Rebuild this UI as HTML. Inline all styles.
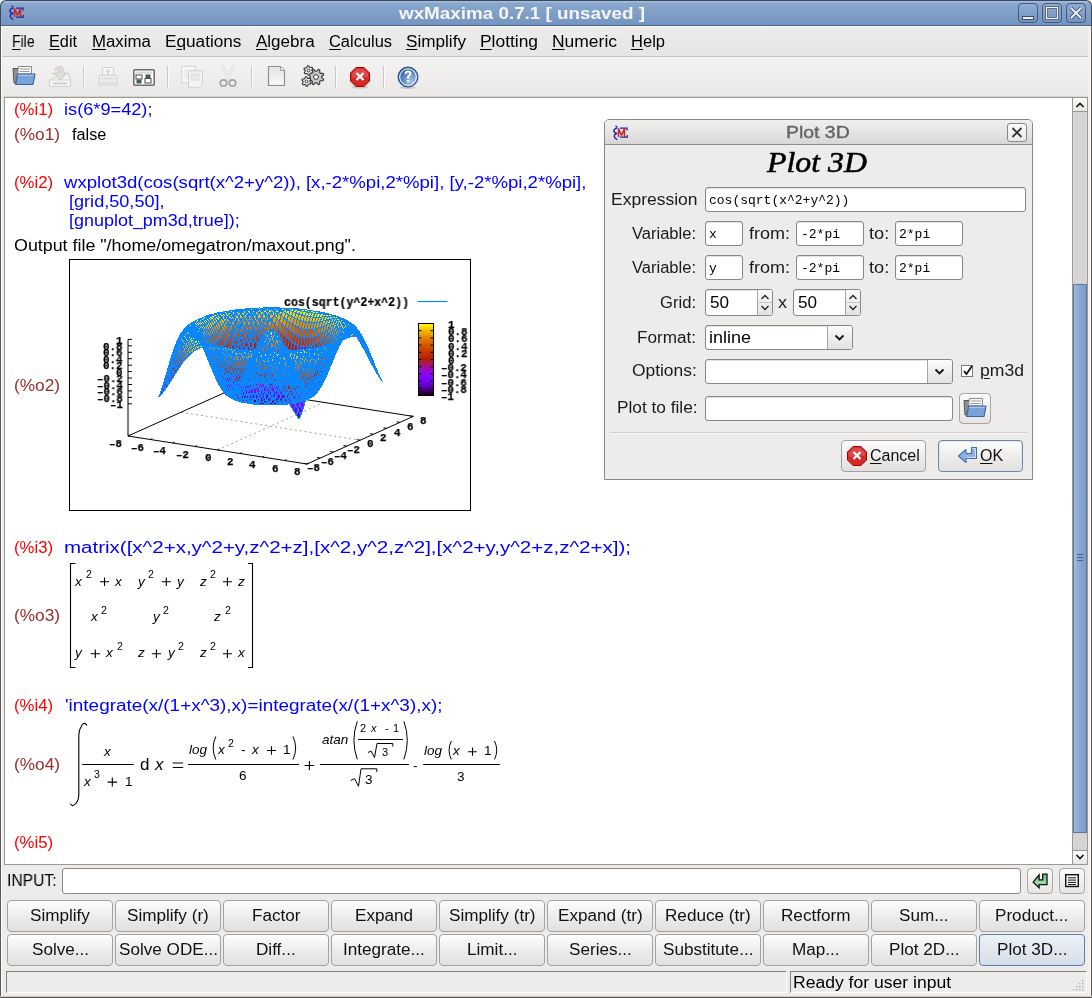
<!DOCTYPE html><html><head><meta charset="utf-8"><style>html,body{margin:0;padding:0;overflow:hidden;width:1092px;height:998px;position:relative;font-family:"Liberation Sans",sans-serif}.t{position:absolute;white-space:pre;line-height:1;transform-origin:0 0;will-change:transform;font-family:'Liberation Sans',sans-serif}
u{text-decoration:underline;text-underline-offset:2px}</style></head><body><div style="position:absolute;left:0px;top:0px;width:1092px;height:998px;background:#edeceb;"></div>
<div style="position:absolute;left:0px;top:0px;width:1092px;height:26px;box-sizing:border-box;border:1px solid #3a4a5c;border-bottom:none;background:linear-gradient(#a3bbdd 0,#a3bbdd 1px,#8aa8cd 2px,#7394c0 100%);border-radius:6px 6px 0 0;"></div>
<div style="position:absolute;left:0px;top:25px;width:1092px;height:1px;background:#4d6590;"></div>
<div class="t" style="left:398.5px;top:6.0px;font-size:16px;color:#f4f6fa;font-weight:bold;transform:scaleX(1.177);">wxMaxima 0.7.1 [ unsaved ]</div>
<div style="position:absolute;left:1018px;top:3px;width:20px;height:20px;box-sizing:border-box;border:1px solid #465b7c;border-radius:4px;background:linear-gradient(#90acd3,#7694c3);"></div>
<div style="position:absolute;left:1042px;top:3px;width:20px;height:20px;box-sizing:border-box;border:1px solid #465b7c;border-radius:4px;background:linear-gradient(#90acd3,#7694c3);"></div>
<div style="position:absolute;left:1066px;top:3px;width:20px;height:20px;box-sizing:border-box;border:1px solid #465b7c;border-radius:4px;background:linear-gradient(#90acd3,#7694c3);"></div>
<svg style="position:absolute;left:1018px;top:3px" width="20" height="20"><rect x="4.5" y="13.5" width="11" height="3" fill="#eef2f8" stroke="#3d4f6b" stroke-width="1"/></svg>
<svg style="position:absolute;left:1042px;top:3px" width="20" height="20"><rect x="4.5" y="4.5" width="11" height="11" fill="none" stroke="#3d4f6b" stroke-width="3"/><rect x="4.5" y="4.5" width="11" height="11" fill="none" stroke="#eef2f8" stroke-width="1.4"/></svg>
<svg style="position:absolute;left:1066px;top:3px" width="20" height="20"><path d="M5 5L15 15M15 5L5 15" stroke="#3d4f6b" stroke-width="3.6"/><path d="M5 5L15 15M15 5L5 15" stroke="#eef2f8" stroke-width="1.8"/></svg>
<div style="position:absolute;left:0px;top:25px;width:1px;height:973px;background:#5a5652;"></div>
<div style="position:absolute;left:1091px;top:25px;width:1px;height:973px;background:#5a5652;"></div>
<div style="position:absolute;left:0px;top:996px;width:1092px;height:1px;background:#cfccc8;"></div>
<div style="position:absolute;left:0px;top:997px;width:1092px;height:1px;background:#5a5652;"></div>
<div style="position:absolute;left:1px;top:26px;width:1px;height:970px;background:#ffffff;"></div>
<div style="position:absolute;left:1088px;top:26px;width:3px;height:970px;background:#f3f2f1;"></div>
<div style="position:absolute;left:2px;top:26px;width:1086px;height:30px;background:linear-gradient(#f6f5f3 0,#f6f5f3 1px,#edeceb 2px,#e6e5e3 100%);"></div>
<div style="position:absolute;left:2px;top:56px;width:1086px;height:1px;background:#c8c5c0;"></div>
<div class="t" style="left:11.8px;top:34.0px;font-size:16px;color:#000;transform:scaleX(0.873);"><u>F</u>ile</div>
<div class="t" style="left:48.9px;top:34.0px;font-size:16px;color:#000;transform:scaleX(1.019);"><u>E</u>dit</div>
<div class="t" style="left:92.2px;top:34.0px;font-size:16px;color:#000;transform:scaleX(1.050);"><u>M</u>axima</div>
<div class="t" style="left:165.0px;top:34.0px;font-size:16px;color:#000;transform:scaleX(1.074);">E<u>q</u>uations</div>
<div class="t" style="left:256.0px;top:34.0px;font-size:16px;color:#000;transform:scaleX(1.063);"><u>A</u>lgebra</div>
<div class="t" style="left:329.0px;top:34.0px;font-size:16px;color:#000;transform:scaleX(1.027);"><u>C</u>alculus</div>
<div class="t" style="left:406.0px;top:34.0px;font-size:16px;color:#000;transform:scaleX(1.071);"><u>S</u>implify</div>
<div class="t" style="left:480.0px;top:34.0px;font-size:16px;color:#000;transform:scaleX(1.087);"><u>P</u>lotting</div>
<div class="t" style="left:552.0px;top:34.0px;font-size:16px;color:#000;transform:scaleX(1.091);"><u>N</u>umeric</div>
<div class="t" style="left:631.0px;top:34.0px;font-size:16px;color:#000;transform:scaleX(1.033);"><u>H</u>elp</div>
<div style="position:absolute;left:2px;top:57px;width:1086px;height:39px;background:linear-gradient(#f4f3f2,#eae9e7);"></div>
<div style="position:absolute;left:2px;top:96px;width:1086px;height:1px;background:#d8d5d0;"></div>
<div style="position:absolute;left:4px;top:97px;width:1069px;height:768px;box-sizing:border-box;border:1px solid #9d9893;background:#fff;"></div>
<div style="position:absolute;left:1072px;top:97px;width:16px;height:768px;box-sizing:border-box;border:1px solid #9d9893;background:#d6d4d2;"></div>
<div style="position:absolute;left:1073px;top:98px;width:14px;height:14px;box-sizing:border-box;background:linear-gradient(#fbfbfa,#e8e7e5);border-bottom:1px solid #9d9893;border-radius:3px 3px 0 0;"></div>
<svg style="position:absolute;left:1073px;top:98px" width="14" height="14"><path d="M3.5 9L7 5.5L10.5 9" fill="none" stroke="#111" stroke-width="1.6"/></svg>
<div style="position:absolute;left:1073px;top:850px;width:14px;height:14px;box-sizing:border-box;background:linear-gradient(#fbfbfa,#e8e7e5);border-top:1px solid #9d9893;border-radius:0 0 3px 3px;"></div>
<svg style="position:absolute;left:1073px;top:850px" width="14" height="14"><path d="M3.5 5L7 8.5L10.5 5" fill="none" stroke="#111" stroke-width="1.6"/></svg>
<div style="position:absolute;left:1073px;top:284px;width:14px;height:549px;box-sizing:border-box;border:1px solid #5c7a9f;background:linear-gradient(90deg,#a2bde0,#8aa8d2 40%,#7b9cc6);"></div>
<div style="position:absolute;left:1077px;top:554px;width:6px;height:1px;background:#4a5f7e;"></div>
<div style="position:absolute;left:1077px;top:557px;width:6px;height:1px;background:#4a5f7e;"></div>
<div style="position:absolute;left:1077px;top:560px;width:6px;height:1px;background:#4a5f7e;"></div>
<div class="t" style="left:7.0px;top:873.0px;font-size:16px;color:#000;transform:scaleX(0.977);">INPUT:</div>
<div style="position:absolute;left:62px;top:868px;width:959px;height:26px;box-sizing:border-box;border:1px solid #8d8984;border-radius:3px;background:#fff;"></div>
<div style="position:absolute;left:1027px;top:868px;width:26px;height:26px;box-sizing:border-box;border:1px solid #a8a49f;border-radius:4px;background:linear-gradient(#fbfbfa,#e6e5e3);"></div>
<div style="position:absolute;left:1059px;top:868px;width:26px;height:26px;box-sizing:border-box;border:1px solid #a8a49f;border-radius:4px;background:linear-gradient(#fbfbfa,#e6e5e3);"></div>
<svg style="position:absolute;left:1027px;top:868px" width="26" height="26"><defs><linearGradient id="eg" x1="0" y1="0" x2="0" y2="1"><stop offset="0" stop-color="#6fc487"/><stop offset="1" stop-color="#b5e6c0"/></linearGradient></defs><path d="M6.2 14.1L12.1 6.9V11.8H15.7V6.2H20V16.7H12.1V19.7Z" fill="url(#eg)" stroke="#111" stroke-width="1.3" stroke-linejoin="miter"/></svg>
<svg style="position:absolute;left:1059px;top:868px" width="26" height="26"><rect x="6.7" y="6.7" width="12.6" height="11.8" fill="#fff" stroke="#111" stroke-width="1.4"/><path d="M9 9.8H17M9 12.1H17M9 14.4H17M9 16.6H17" stroke="#111" stroke-width="1"/></svg>
<div style="position:absolute;left:7px;top:900px;width:106px;height:32px;box-sizing:border-box;border:1px solid #a5a19c;border-radius:4px;background:linear-gradient(#fdfdfd,#ebeae9 60%,#e1e0de);"></div>
<div class="t" style="left:30.0px;top:908.0px;font-size:16px;color:#111;transform:scaleX(1.070);">Simplify</div>
<div style="position:absolute;left:115px;top:900px;width:106px;height:32px;box-sizing:border-box;border:1px solid #a5a19c;border-radius:4px;background:linear-gradient(#fdfdfd,#ebeae9 60%,#e1e0de);"></div>
<div class="t" style="left:127.1px;top:908.0px;font-size:16px;color:#111;transform:scaleX(1.070);">Simplify (r)</div>
<div style="position:absolute;left:223px;top:900px;width:106px;height:32px;box-sizing:border-box;border:1px solid #a5a19c;border-radius:4px;background:linear-gradient(#fdfdfd,#ebeae9 60%,#e1e0de);"></div>
<div class="t" style="left:251.7px;top:908.0px;font-size:16px;color:#111;transform:scaleX(1.070);">Factor</div>
<div style="position:absolute;left:331px;top:900px;width:106px;height:32px;box-sizing:border-box;border:1px solid #a5a19c;border-radius:4px;background:linear-gradient(#fdfdfd,#ebeae9 60%,#e1e0de);"></div>
<div class="t" style="left:355.0px;top:908.0px;font-size:16px;color:#111;transform:scaleX(1.070);">Expand</div>
<div style="position:absolute;left:439px;top:900px;width:106px;height:32px;box-sizing:border-box;border:1px solid #a5a19c;border-radius:4px;background:linear-gradient(#fdfdfd,#ebeae9 60%,#e1e0de);"></div>
<div class="t" style="left:448.7px;top:908.0px;font-size:16px;color:#111;transform:scaleX(1.070);">Simplify (tr)</div>
<div style="position:absolute;left:547px;top:900px;width:106px;height:32px;box-sizing:border-box;border:1px solid #a5a19c;border-radius:4px;background:linear-gradient(#fdfdfd,#ebeae9 60%,#e1e0de);"></div>
<div class="t" style="left:557.7px;top:908.0px;font-size:16px;color:#111;transform:scaleX(1.070);">Expand (tr)</div>
<div style="position:absolute;left:655px;top:900px;width:106px;height:32px;box-sizing:border-box;border:1px solid #a5a19c;border-radius:4px;background:linear-gradient(#fdfdfd,#ebeae9 60%,#e1e0de);"></div>
<div class="t" style="left:665.2px;top:908.0px;font-size:16px;color:#111;transform:scaleX(1.070);">Reduce (tr)</div>
<div style="position:absolute;left:763px;top:900px;width:106px;height:32px;box-sizing:border-box;border:1px solid #a5a19c;border-radius:4px;background:linear-gradient(#fdfdfd,#ebeae9 60%,#e1e0de);"></div>
<div class="t" style="left:781.3px;top:908.0px;font-size:16px;color:#111;transform:scaleX(1.070);">Rectform</div>
<div style="position:absolute;left:871px;top:900px;width:106px;height:32px;box-sizing:border-box;border:1px solid #a5a19c;border-radius:4px;background:linear-gradient(#fdfdfd,#ebeae9 60%,#e1e0de);"></div>
<div class="t" style="left:899.3px;top:908.0px;font-size:16px;color:#111;transform:scaleX(1.070);">Sum...</div>
<div style="position:absolute;left:979px;top:900px;width:106px;height:32px;box-sizing:border-box;border:1px solid #a5a19c;border-radius:4px;background:linear-gradient(#fdfdfd,#ebeae9 60%,#e1e0de);"></div>
<div class="t" style="left:995.4px;top:908.0px;font-size:16px;color:#111;transform:scaleX(1.070);">Product...</div>
<div style="position:absolute;left:7px;top:934px;width:106px;height:32px;box-sizing:border-box;border:1px solid #a5a19c;border-radius:4px;background:linear-gradient(#fdfdfd,#ebeae9 60%,#e1e0de);"></div>
<div class="t" style="left:31.5px;top:942.0px;font-size:16px;color:#111;transform:scaleX(1.070);">Solve...</div>
<div style="position:absolute;left:115px;top:934px;width:106px;height:32px;box-sizing:border-box;border:1px solid #a5a19c;border-radius:4px;background:linear-gradient(#fdfdfd,#ebeae9 60%,#e1e0de);"></div>
<div class="t" style="left:118.5px;top:942.0px;font-size:16px;color:#111;transform:scaleX(1.070);">Solve ODE...</div>
<div style="position:absolute;left:223px;top:934px;width:106px;height:32px;box-sizing:border-box;border:1px solid #a5a19c;border-radius:4px;background:linear-gradient(#fdfdfd,#ebeae9 60%,#e1e0de);"></div>
<div class="t" style="left:256.2px;top:942.0px;font-size:16px;color:#111;transform:scaleX(1.070);">Diff...</div>
<div style="position:absolute;left:331px;top:934px;width:106px;height:32px;box-sizing:border-box;border:1px solid #a5a19c;border-radius:4px;background:linear-gradient(#fdfdfd,#ebeae9 60%,#e1e0de);"></div>
<div class="t" style="left:343.1px;top:942.0px;font-size:16px;color:#111;transform:scaleX(1.070);">Integrate...</div>
<div style="position:absolute;left:439px;top:934px;width:106px;height:32px;box-sizing:border-box;border:1px solid #a5a19c;border-radius:4px;background:linear-gradient(#fdfdfd,#ebeae9 60%,#e1e0de);"></div>
<div class="t" style="left:466.8px;top:942.0px;font-size:16px;color:#111;transform:scaleX(1.070);">Limit...</div>
<div style="position:absolute;left:547px;top:934px;width:106px;height:32px;box-sizing:border-box;border:1px solid #a5a19c;border-radius:4px;background:linear-gradient(#fdfdfd,#ebeae9 60%,#e1e0de);"></div>
<div class="t" style="left:568.6px;top:942.0px;font-size:16px;color:#111;transform:scaleX(1.070);">Series...</div>
<div style="position:absolute;left:655px;top:934px;width:106px;height:32px;box-sizing:border-box;border:1px solid #a5a19c;border-radius:4px;background:linear-gradient(#fdfdfd,#ebeae9 60%,#e1e0de);"></div>
<div class="t" style="left:662.8px;top:942.0px;font-size:16px;color:#111;transform:scaleX(1.070);">Substitute...</div>
<div style="position:absolute;left:763px;top:934px;width:106px;height:32px;box-sizing:border-box;border:1px solid #a5a19c;border-radius:4px;background:linear-gradient(#fdfdfd,#ebeae9 60%,#e1e0de);"></div>
<div class="t" style="left:792.2px;top:942.0px;font-size:16px;color:#111;transform:scaleX(1.070);">Map...</div>
<div style="position:absolute;left:871px;top:934px;width:106px;height:32px;box-sizing:border-box;border:1px solid #a5a19c;border-radius:4px;background:linear-gradient(#fdfdfd,#ebeae9 60%,#e1e0de);"></div>
<div class="t" style="left:888.8px;top:942.0px;font-size:16px;color:#111;transform:scaleX(1.070);">Plot 2D...</div>
<div style="position:absolute;left:979px;top:934px;width:106px;height:32px;box-sizing:border-box;border:1px solid #5f7fae;border-radius:4px;background:linear-gradient(#eef2f7,#d5dde8);"></div>
<div class="t" style="left:996.8px;top:942.0px;font-size:16px;color:#111;transform:scaleX(1.070);">Plot 3D...</div>
<div style="position:absolute;left:6px;top:971px;width:781px;height:22px;box-sizing:border-box;border-left:1px solid #85817c;border-top:1px solid #85817c;border-bottom:1px solid #fff;border-right:1px solid #fff;"></div>
<div style="position:absolute;left:790px;top:971px;width:297px;height:22px;box-sizing:border-box;border-left:1px solid #85817c;border-top:1px solid #85817c;border-bottom:1px solid #fff;border-right:1px solid #fff;"></div>
<div class="t" style="left:793.0px;top:975.0px;font-size:16px;color:#000;transform:scaleX(1.097);">Ready for user input</div>
<svg style="position:absolute;left:1072px;top:978px" width="14" height="14"><g fill="#b8b4ae"><rect x="10" y="2" width="1.5" height="1.5"/><rect x="7" y="5" width="1.5" height="1.5"/><rect x="10" y="5" width="1.5" height="1.5"/><rect x="4" y="8" width="1.5" height="1.5"/><rect x="7" y="8" width="1.5" height="1.5"/><rect x="10" y="8" width="1.5" height="1.5"/><rect x="1" y="11" width="1.5" height="1.5"/><rect x="4" y="11" width="1.5" height="1.5"/><rect x="7" y="11" width="1.5" height="1.5"/><rect x="10" y="11" width="1.5" height="1.5"/></g></svg>
<div class="t" style="left:64.0px;top:102.0px;font-size:16px;color:#0000ff;transform:scaleX(1.137);">is(6*9=42);</div>
<div class="t" style="left:13.5px;top:102.0px;font-size:16px;color:#ff0000;transform:scaleX(1.045);">(%i1)</div>
<div class="t" style="left:13.5px;top:127.0px;font-size:16px;color:#9c2b2b;transform:scaleX(1.078);">(%o1)</div>
<div class="t" style="left:72.0px;top:127.0px;font-size:16px;color:#000;transform:scaleX(1.015);">false</div>
<div class="t" style="left:13.5px;top:175.0px;font-size:16px;color:#ff0000;transform:scaleX(1.045);">(%i2)</div>
<div class="t" style="left:64.0px;top:175.0px;font-size:16px;color:#0000ff;transform:scaleX(1.161);">wxplot3d(cos(sqrt(x^2+y^2)), [x,-2*%pi,2*%pi], [y,-2*%pi,2*%pi],</div>
<div class="t" style="left:69.2px;top:194.0px;font-size:16px;color:#0000ff;transform:scaleX(1.131);">[grid,50,50],</div>
<div class="t" style="left:69.2px;top:213.0px;font-size:16px;color:#0000ff;transform:scaleX(1.122);">[gnuplot_pm3d,true]);</div>
<div class="t" style="left:13.7px;top:238.0px;font-size:16px;color:#000;transform:scaleX(1.115);">Output file &quot;/home/omegatron/maxout.png&quot;.</div>
<div class="t" style="left:13.5px;top:378.0px;font-size:16px;color:#9c2b2b;transform:scaleX(1.078);">(%o2)</div>
<div class="t" style="left:13.5px;top:540.0px;font-size:16px;color:#ff0000;transform:scaleX(1.045);">(%i3)</div>
<div class="t" style="left:64.4px;top:540.0px;font-size:16px;color:#0000ff;transform:scaleX(1.282);">matrix([x^2+x,y^2+y,z^2+z],[x^2,y^2,z^2],[x^2+y,y^2+z,z^2+x]);</div>
<div class="t" style="left:13.5px;top:608.0px;font-size:16px;color:#9c2b2b;transform:scaleX(1.078);">(%o3)</div>
<div class="t" style="left:13.5px;top:698.0px;font-size:16px;color:#ff0000;transform:scaleX(1.045);">(%i4)</div>
<div class="t" style="left:64.8px;top:698.0px;font-size:16px;color:#0000ff;transform:scaleX(1.183);">&#x27;integrate(x/(1+x^3),x)=integrate(x/(1+x^3),x);</div>
<div class="t" style="left:13.5px;top:757.0px;font-size:16px;color:#9c2b2b;transform:scaleX(1.078);">(%o4)</div>
<div class="t" style="left:13.5px;top:835.0px;font-size:16px;color:#ff0000;transform:scaleX(1.045);">(%i5)</div>
<div style="position:absolute;left:69px;top:259px;width:402px;height:252px;box-sizing:border-box;border:1px solid #000;background:#fff;"></div>
<svg style="position:absolute;left:0;top:0" width="1092" height="998" viewBox="0 0 1092 998"><path d="M181.1 412.2L360.2 440.2" stroke="#a0a0a0" stroke-width="1" stroke-dasharray="2 3" fill="none"/><path d="M217.5 450.0L323.8 402.4" stroke="#a0a0a0" stroke-width="1" stroke-dasharray="2 3" fill="none"/><path d="M234.2 388.4L413.3 416.4" stroke="#000" stroke-width="1" fill="none"/><path d="M128.0 436.0L234.2 388.4" stroke="#000" stroke-width="1" fill="none"/><path d="M128.0 436.0L128.0 339.4" stroke="#000" stroke-width="1" fill="none"/><path d="M128.0 403.8L132.0 403.8" stroke="#000" stroke-width="1" fill="none"/><path d="M128.0 397.4L132.0 397.4" stroke="#000" stroke-width="1" fill="none"/><path d="M128.0 390.9L132.0 390.9" stroke="#000" stroke-width="1" fill="none"/><path d="M128.0 384.5L132.0 384.5" stroke="#000" stroke-width="1" fill="none"/><path d="M128.0 378.0L132.0 378.0" stroke="#000" stroke-width="1" fill="none"/><path d="M128.0 371.6L132.0 371.6" stroke="#000" stroke-width="1" fill="none"/><path d="M128.0 365.2L132.0 365.2" stroke="#000" stroke-width="1" fill="none"/><path d="M128.0 358.7L132.0 358.7" stroke="#000" stroke-width="1" fill="none"/><path d="M128.0 352.3L132.0 352.3" stroke="#000" stroke-width="1" fill="none"/><path d="M128.0 345.8L132.0 345.8" stroke="#000" stroke-width="1" fill="none"/><path d="M128.0 339.4L132.0 339.4" stroke="#000" stroke-width="1" fill="none"/><g><path d="M240.3 357.1L243.2 353.3L244.9 356.8L242.1 359.7Z" fill="#5b01b7"/><path d="M243.2 353.3L246.1 348.9L247.8 353.2L244.9 356.8Z" fill="#7002ee"/><path d="M238.6 353.8L241.5 349.2L243.2 353.3L240.3 357.1Z" fill="#7002ee"/><path d="M246.1 348.9L249.0 344.2L250.7 349.1L247.8 353.2Z" fill="#8305fe"/><path d="M241.5 349.2L244.4 344.2L246.1 348.9L243.2 353.3Z" fill="#8405fe"/><path d="M236.9 350.0L239.8 344.8L241.5 349.2L238.6 353.8Z" fill="#8305fe"/><path d="M249.0 344.2L251.8 339.3L253.5 344.6L250.7 349.1Z" fill="#950ad6"/><path d="M244.4 344.2L247.3 339.1L249.0 344.2L246.1 348.9Z" fill="#970bcf"/><path d="M239.8 344.8L242.7 339.4L244.4 344.2L241.5 349.2Z" fill="#970bcf"/><path d="M235.2 345.9L238.1 340.2L239.8 344.8L236.9 350.0Z" fill="#950ad6"/><path d="M251.8 339.3L254.7 334.4L256.4 340.0L253.5 344.6Z" fill="#a61379"/><path d="M247.3 339.1L250.1 333.9L251.8 339.3L249.0 344.2Z" fill="#a81567"/><path d="M242.7 339.4L245.6 333.9L247.3 339.1L244.4 344.2Z" fill="#a91561"/><path d="M238.1 340.2L241.0 334.5L242.7 339.4L239.8 344.8Z" fill="#a81567"/><path d="M233.5 341.6L236.4 335.6L238.1 340.2L235.2 345.9Z" fill="#a61379"/><path d="M254.7 334.4L257.6 329.7L259.3 335.4L256.4 340.0Z" fill="#b52000"/><path d="M250.1 333.9L253.0 328.9L254.7 334.4L251.8 339.3Z" fill="#b82300"/><path d="M245.6 333.9L248.4 328.7L250.1 333.9L247.3 339.1Z" fill="#b92500"/><path d="M241.0 334.5L243.8 329.0L245.6 333.9L242.7 339.4Z" fill="#b92500"/><path d="M257.6 329.7L260.4 325.3L262.1 331.0L259.3 335.4Z" fill="#c23100"/><path d="M236.4 335.6L239.3 329.9L241.0 334.5L238.1 340.2Z" fill="#b82300"/><path d="M231.8 337.3L234.7 331.3L236.4 335.6L233.5 341.6Z" fill="#b52000"/><path d="M253.0 328.9L255.9 324.3L257.6 329.7L254.7 334.4Z" fill="#c53700"/><path d="M248.4 328.7L251.3 323.8L253.0 328.9L250.1 333.9Z" fill="#c73a00"/><path d="M260.4 325.3L263.3 321.3L265.0 326.8L262.1 331.0Z" fill="#ce4600"/><path d="M243.8 329.0L246.7 323.9L248.4 328.7L245.6 333.9Z" fill="#c83c00"/><path d="M239.3 329.9L242.1 324.4L243.8 329.0L241.0 334.5Z" fill="#c73a00"/><path d="M234.7 331.3L237.6 325.5L239.3 329.9L236.4 335.6Z" fill="#c53700"/><path d="M255.9 324.3L258.7 320.1L260.4 325.3L257.6 329.7Z" fill="#d24f00"/><path d="M230.1 333.2L233.0 327.2L234.7 331.3L231.8 337.3Z" fill="#c23100"/><path d="M251.3 323.8L254.2 319.4L255.9 324.3L253.0 328.9Z" fill="#d45500"/><path d="M263.3 321.3L266.2 317.8L267.9 323.1L265.0 326.8Z" fill="#d85e00"/><path d="M246.7 323.9L249.6 319.3L251.3 323.8L248.4 328.7Z" fill="#d55800"/><path d="M258.7 320.1L261.6 316.5L263.3 321.3L260.4 325.3Z" fill="#dc6a00"/><path d="M242.1 324.4L245.0 319.6L246.7 323.9L243.8 329.0Z" fill="#d55800"/><path d="M237.6 325.5L240.4 320.4L242.1 324.4L239.3 329.9Z" fill="#d45500"/><path d="M233.0 327.2L235.9 321.7L237.6 325.5L234.7 331.3Z" fill="#d24f00"/><path d="M228.4 329.4L231.3 323.5L233.0 327.2L230.1 333.2Z" fill="#ce4600"/><path d="M266.2 317.8L269.0 314.9L270.7 319.7L267.9 323.1Z" fill="#e17800"/><path d="M254.2 319.4L257.0 315.7L258.7 320.1L255.9 324.3Z" fill="#df7200"/><path d="M249.6 319.3L252.5 315.4L254.2 319.4L251.3 323.8Z" fill="#e17700"/><path d="M261.6 316.5L264.5 313.5L266.2 317.8L263.3 321.3Z" fill="#e58600"/><path d="M245.0 319.6L247.9 315.5L249.6 319.3L246.7 323.9Z" fill="#e17900"/><path d="M269.0 314.9L271.9 312.5L273.6 316.8L270.7 319.7Z" fill="#e89200"/><path d="M240.4 320.4L243.3 316.0L245.0 319.6L242.1 324.4Z" fill="#e17700"/><path d="M257.0 315.7L259.9 312.7L261.6 316.5L258.7 320.1Z" fill="#e89100"/><path d="M235.9 321.7L238.7 317.0L240.4 320.4L237.6 325.5Z" fill="#df7200"/><path d="M231.3 323.5L234.2 318.4L235.9 321.7L233.0 327.2Z" fill="#dc6a00"/><path d="M226.7 325.9L229.6 320.3L231.3 323.5L228.4 329.4Z" fill="#d85e00"/><path d="M252.5 315.4L255.3 312.3L257.0 315.7L254.2 319.4Z" fill="#ea9800"/><path d="M264.5 313.5L267.3 311.2L269.0 314.9L266.2 317.8Z" fill="#eca200"/><path d="M271.9 312.5L274.8 310.7L276.5 314.4L273.6 316.8Z" fill="#eeaa00"/><path d="M247.9 315.5L250.8 312.2L252.5 315.4L249.6 319.3Z" fill="#eb9c00"/><path d="M259.9 312.7L262.8 310.4L264.5 313.5L261.6 316.5Z" fill="#efae00"/><path d="M243.3 316.0L246.2 312.5L247.9 315.5L245.0 319.6Z" fill="#eb9c00"/><path d="M267.3 311.2L270.2 309.5L271.9 312.5L269.0 314.9Z" fill="#f2bc00"/><path d="M238.7 317.0L241.6 313.2L243.3 316.0L240.4 320.4Z" fill="#ea9800"/><path d="M255.3 312.3L258.2 310.0L259.9 312.7L257.0 315.7Z" fill="#f1b700"/><path d="M274.8 310.7L277.7 309.4L279.4 312.5L276.5 314.4Z" fill="#f3c000"/><path d="M234.2 318.4L237.0 314.3L238.7 317.0L235.9 321.7Z" fill="#e89100"/><path d="M225.0 322.8L227.9 317.7L229.6 320.3L226.7 325.9Z" fill="#e17800"/><path d="M229.6 320.3L232.5 315.7L234.2 318.4L231.3 323.5Z" fill="#e58600"/><path d="M250.8 312.2L253.6 309.9L255.3 312.3L252.5 315.4Z" fill="#f2bc00"/><path d="M262.8 310.4L265.6 308.8L267.3 311.2L264.5 313.5Z" fill="#f5c900"/><path d="M270.2 309.5L273.1 308.4L274.8 310.7L271.9 312.5Z" fill="#f7d200"/><path d="M246.2 312.5L249.1 310.1L250.8 312.2L247.9 315.5Z" fill="#f3be00"/><path d="M277.7 309.4L280.5 308.6L282.2 311.0L279.4 312.5Z" fill="#f7d200"/><path d="M258.2 310.0L261.1 308.5L262.8 310.4L259.9 312.7Z" fill="#f7d200"/><path d="M241.6 313.2L244.5 310.5L246.2 312.5L243.3 316.0Z" fill="#f2bc00"/><path d="M265.6 308.8L268.5 308.0L270.2 309.5L267.3 311.2Z" fill="#f9df00"/><path d="M237.0 314.3L239.9 311.2L241.6 313.2L238.7 317.0Z" fill="#f1b700"/><path d="M253.6 309.9L256.5 308.5L258.2 310.0L255.3 312.3Z" fill="#f8d800"/><path d="M273.1 308.4L276.0 307.9L277.7 309.4L274.8 310.7Z" fill="#fae300"/><path d="M232.5 315.7L235.3 312.3L237.0 314.3L234.2 318.4Z" fill="#efae00"/><path d="M270.4 375.5L273.3 378.0L275.0 373.2L272.1 370.1Z" fill="#52009b"/><path d="M267.5 372.3L270.4 375.5L272.1 370.1L269.2 366.4Z" fill="#6101ca"/><path d="M223.3 320.3L226.2 315.7L227.9 317.7L225.0 322.8Z" fill="#e89200"/><path d="M265.8 377.1L268.7 379.6L270.4 375.5L267.5 372.3Z" fill="#48007a"/><path d="M227.9 317.7L230.8 313.7L232.5 315.7L229.6 320.3Z" fill="#eca200"/><path d="M280.5 308.6L283.4 308.2L285.1 309.9L282.2 311.0Z" fill="#fae100"/><path d="M273.3 378.0L276.1 379.9L277.8 375.7L275.0 373.2Z" fill="#450071"/><path d="M263.0 373.7L265.8 377.1L267.5 372.3L264.7 368.4Z" fill="#5900b2"/><path d="M275.0 373.2L277.8 375.7L279.5 369.9L276.7 367.0Z" fill="#6001c7"/><path d="M268.7 379.6L271.6 381.3L273.3 378.0L270.4 375.5Z" fill="#38004c"/><path d="M272.1 370.1L275.0 373.2L276.7 367.0L273.8 363.5Z" fill="#6d02e8"/><path d="M264.7 368.4L267.5 372.3L269.2 366.4L266.4 362.1Z" fill="#7102f1"/><path d="M277.8 375.7L280.7 377.6L282.4 372.2L279.5 369.9Z" fill="#5500a5"/><path d="M261.3 377.9L264.1 380.5L265.8 377.1L263.0 373.7Z" fill="#420067"/><path d="M269.2 366.4L272.1 370.1L273.8 363.5L270.9 359.5Z" fill="#7a03fd"/><path d="M261.1 308.5L263.9 307.8L265.6 308.8L262.8 310.4Z" fill="#fbe700"/><path d="M249.1 310.1L251.9 308.6L253.6 309.9L250.8 312.2Z" fill="#f9db00"/><path d="M276.1 379.9L279.0 381.3L280.7 377.6L277.8 375.7Z" fill="#39004f"/><path d="M264.1 380.5L267.0 382.2L268.7 379.6L265.8 377.1Z" fill="#2f0036"/><path d="M260.1 369.5L263.0 373.7L264.7 368.4L261.8 363.7Z" fill="#6c01e6"/><path d="M258.4 374.4L261.3 377.9L263.0 373.7L260.1 369.5Z" fill="#5500a5"/><path d="M271.6 381.3L274.4 382.5L276.1 379.9L273.3 378.0Z" fill="#29002a"/><path d="M280.7 377.6L283.6 379.1L285.3 374.1L282.4 372.2Z" fill="#4c0088"/><path d="M276.7 367.0L279.5 369.9L281.3 362.8L278.4 359.7Z" fill="#7b03fe"/><path d="M279.5 369.9L282.4 372.2L284.1 365.4L281.3 362.8Z" fill="#7102f1"/><path d="M266.4 362.1L269.2 366.4L270.9 359.5L268.1 355.0Z" fill="#8906f8"/><path d="M273.8 363.5L276.7 367.0L278.4 359.7L275.5 356.0Z" fill="#8605fb"/><path d="M261.8 363.7L264.7 368.4L266.4 362.1L263.5 357.1Z" fill="#8205fe"/><path d="M268.5 308.0L271.4 307.7L273.1 308.4L270.2 309.5Z" fill="#fcee00"/><path d="M256.7 378.3L259.6 381.0L261.3 377.9L258.4 374.4Z" fill="#3f0061"/><path d="M267.0 382.2L269.9 383.1L271.6 381.3L268.7 379.6Z" fill="#1f0017"/><path d="M279.0 381.3L281.9 382.3L283.6 379.1L280.7 377.6Z" fill="#2f0036"/><path d="M259.6 381.0L262.4 382.7L264.1 380.5L261.3 377.9Z" fill="#2b002c"/><path d="M282.4 372.2L285.3 374.1L287.0 367.6L284.1 365.4Z" fill="#6901df"/><path d="M255.5 369.8L258.4 374.4L260.1 369.5L257.2 364.5Z" fill="#6a01e2"/><path d="M244.5 310.5L247.3 308.9L249.1 310.1L246.2 312.5Z" fill="#f9db00"/><path d="M274.4 382.5L277.3 383.2L279.0 381.3L276.1 379.9Z" fill="#1e0016"/><path d="M270.9 359.5L273.8 363.5L275.5 356.0L272.6 351.9Z" fill="#9209e0"/><path d="M276.0 307.9L278.8 307.8L280.5 308.6L277.7 309.4Z" fill="#fcf000"/><path d="M253.8 374.4L256.7 378.3L258.4 374.4L255.5 369.8Z" fill="#5500a5"/><path d="M257.2 364.5L260.1 369.5L261.8 363.7L258.9 358.3Z" fill="#7f04ff"/><path d="M283.6 379.1L286.5 380.3L288.2 375.6L285.3 374.1Z" fill="#450071"/><path d="M256.5 308.5L259.4 307.9L261.1 308.5L258.2 310.0Z" fill="#fced00"/><path d="M283.4 308.2L286.3 308.1L288.0 309.2L285.1 309.9Z" fill="#fcec00"/><path d="M285.3 374.1L288.2 375.6L289.9 369.2L287.0 367.6Z" fill="#6201cd"/><path d="M262.4 382.7L265.3 383.4L267.0 382.2L264.1 380.5Z" fill="#19000f"/><path d="M263.5 357.1L266.4 362.1L268.1 355.0L265.2 349.9Z" fill="#980bca"/><path d="M269.9 383.1L272.7 383.4L274.4 382.5L271.6 381.3Z" fill="#130009"/><path d="M281.9 382.3L284.8 383.1L286.5 380.3L283.6 379.1Z" fill="#270026"/><path d="M239.9 311.2L242.8 309.4L244.5 310.5L241.6 313.2Z" fill="#f8d800"/><path d="M278.4 359.7L281.3 362.8L283.0 354.8L280.1 351.6Z" fill="#950ad7"/><path d="M281.3 362.8L284.1 365.4L285.8 357.5L283.0 354.8Z" fill="#8c07f2"/><path d="M258.9 358.3L261.8 363.7L263.5 357.1L260.6 351.6Z" fill="#9309dd"/><path d="M268.1 355.0L270.9 359.5L272.6 351.9L269.8 347.3Z" fill="#9f0fa3"/><path d="M252.1 378.0L255.0 381.1L256.7 378.3L253.8 374.4Z" fill="#420067"/><path d="M255.0 381.1L257.9 383.0L259.6 381.0L256.7 378.3Z" fill="#2b002c"/><path d="M263.9 307.8L266.8 307.9L268.5 308.0L265.6 308.8Z" fill="#fdf500"/><path d="M275.5 356.0L278.4 359.7L280.1 351.6L277.2 347.9Z" fill="#9e0fa7"/><path d="M284.1 365.4L287.0 367.6L288.7 359.8L285.8 357.5Z" fill="#8505fd"/><path d="M250.9 369.3L253.8 374.4L255.5 369.8L252.6 364.3Z" fill="#6c01e6"/><path d="M252.6 364.3L255.5 369.8L257.2 364.5L254.4 358.7Z" fill="#7f04ff"/><path d="M286.5 380.3L289.3 381.2L291.0 376.7L288.2 375.6Z" fill="#3f0061"/><path d="M277.3 383.2L280.2 383.6L281.9 382.3L279.0 381.3Z" fill="#15000b"/><path d="M251.9 308.6L254.8 308.2L256.5 308.5L253.6 309.9Z" fill="#fcf000"/><path d="M288.2 375.6L291.0 376.7L292.7 370.5L289.9 369.2Z" fill="#5d01bf"/><path d="M271.4 307.7L274.2 308.0L276.0 307.9L273.1 308.4Z" fill="#fef800"/><path d="M249.2 373.6L252.1 378.0L253.8 374.4L250.9 369.3Z" fill="#5900b2"/><path d="M235.3 312.3L238.2 310.1L239.9 311.2L237.0 314.3Z" fill="#f7d200"/><path d="M257.9 383.0L260.7 383.6L262.4 382.7L259.6 381.0Z" fill="#17000d"/><path d="M254.4 358.7L257.2 364.5L258.9 358.3L256.1 352.4Z" fill="#9209e2"/><path d="M272.6 351.9L275.5 356.0L277.2 347.9L274.3 343.9Z" fill="#a9165f"/><path d="M287.0 367.6L289.9 369.2L291.6 361.6L288.7 359.8Z" fill="#7f04ff"/><path d="M265.3 383.4L268.2 383.3L269.9 383.1L267.0 382.2Z" fill="#100007"/><path d="M278.8 307.8L281.7 308.2L283.4 308.2L280.5 308.6Z" fill="#fef800"/><path d="M265.2 349.9L268.1 355.0L269.8 347.3L266.9 342.4Z" fill="#ac1844"/><path d="M260.6 351.6L263.5 357.1L265.2 349.9L262.3 344.5Z" fill="#a7146f"/><path d="M284.8 383.1L287.6 383.7L289.3 381.2L286.5 380.3Z" fill="#22001c"/><path d="M230.8 313.7L233.6 311.0L235.3 312.3L232.5 315.7Z" fill="#f5c900"/><path d="M286.3 308.1L289.1 308.3L290.8 308.9L288.0 309.2Z" fill="#fdf400"/><path d="M250.4 380.8L253.3 383.1L255.0 381.1L252.1 378.0Z" fill="#2f0036"/><path d="M272.7 383.4L275.6 383.2L277.3 383.2L274.4 382.5Z" fill="#110007"/><path d="M259.4 307.9L262.2 308.3L263.9 307.8L261.1 308.5Z" fill="#fef900"/><path d="M221.6 318.2L224.5 314.1L226.2 315.7L223.3 320.3Z" fill="#eeaa00"/><path d="M226.2 315.7L229.1 312.4L230.8 313.7L227.9 317.7Z" fill="#f2bc00"/><path d="M289.3 381.2L292.2 381.8L293.9 377.5L291.0 376.7Z" fill="#3c0057"/><path d="M247.5 377.1L250.4 380.8L252.1 378.0L249.2 373.6Z" fill="#48007a"/><path d="M269.8 347.3L272.6 351.9L274.3 343.9L271.5 339.5Z" fill="#b42002"/><path d="M256.1 352.4L258.9 358.3L260.6 351.6L257.8 345.7Z" fill="#a41283"/><path d="M289.9 369.2L292.7 370.5L294.4 362.9L291.6 361.6Z" fill="#7a03fd"/><path d="M247.3 308.9L250.2 308.5L251.9 308.6L249.1 310.1Z" fill="#fdf100"/><path d="M291.0 376.7L293.9 377.5L295.6 371.3L292.7 370.5Z" fill="#5a01b5"/><path d="M280.2 383.6L283.0 383.9L284.8 383.1L281.9 382.3Z" fill="#110007"/><path d="M253.3 383.1L256.1 384.0L257.9 383.0L255.0 381.1Z" fill="#19000f"/><path d="M283.0 354.8L285.8 357.5L287.5 349.0L284.7 346.2Z" fill="#a5137e"/><path d="M280.1 351.6L283.0 354.8L284.7 346.2L281.8 343.1Z" fill="#ac1844"/><path d="M248.1 363.3L250.9 369.3L252.6 364.3L249.8 358.1Z" fill="#8205fe"/><path d="M266.8 307.9L269.7 308.6L271.4 307.7L268.5 308.0Z" fill="#fefb00"/><path d="M260.7 383.6L263.6 383.3L265.3 383.4L262.4 382.7Z" fill="#120008"/><path d="M246.4 368.0L249.2 373.6L250.9 369.3L248.1 363.3Z" fill="#7102f1"/><path d="M285.8 357.5L288.7 359.8L290.4 351.2L287.5 349.0Z" fill="#9e0fa7"/><path d="M277.2 347.9L280.1 351.6L281.8 343.1L278.9 339.6Z" fill="#b52000"/><path d="M249.8 358.1L252.6 364.3L254.4 358.7L251.5 352.2Z" fill="#9309dd"/><path d="M274.2 308.0L277.1 308.8L278.8 307.8L276.0 307.9Z" fill="#fefc00"/><path d="M262.3 344.5L265.2 349.9L266.9 342.4L264.0 337.2Z" fill="#ba2600"/><path d="M287.6 383.7L290.5 384.2L292.2 381.8L289.3 381.2Z" fill="#1f0017"/><path d="M254.8 308.2L257.7 308.7L259.4 307.9L256.5 308.5Z" fill="#fefa00"/><path d="M266.9 342.4L269.8 347.3L271.5 339.5L268.6 334.9Z" fill="#bf2e00"/><path d="M274.3 343.9L277.2 347.9L278.9 339.6L276.0 335.8Z" fill="#be2b00"/><path d="M244.7 372.0L247.5 377.1L249.2 373.6L246.4 368.0Z" fill="#6101ca"/><path d="M288.7 359.8L291.6 361.6L293.3 353.1L290.4 351.2Z" fill="#990cc3"/><path d="M268.2 383.3L271.0 382.6L272.7 383.4L269.9 383.1Z" fill="#19000f"/><path d="M257.8 345.7L260.6 351.6L262.3 344.5L259.5 338.8Z" fill="#b62200"/><path d="M242.8 309.4L245.6 308.8L247.3 308.9L244.5 310.5Z" fill="#fcf000"/><path d="M251.5 352.2L254.4 358.7L256.1 352.4L253.2 346.0Z" fill="#a41283"/><path d="M281.7 308.2L284.6 308.8L286.3 308.1L283.4 308.2Z" fill="#fefb00"/><path d="M292.7 370.5L295.6 371.3L297.3 363.8L294.4 362.9Z" fill="#7803fb"/><path d="M245.8 379.9L248.7 382.9L250.4 380.8L247.5 377.1Z" fill="#38004c"/><path d="M292.2 381.8L295.1 382.3L296.8 377.9L293.9 377.5Z" fill="#3b0054"/><path d="M289.1 308.3L292.0 308.8L293.7 308.7L290.8 308.9Z" fill="#fef900"/><path d="M275.6 383.2L278.5 382.9L280.2 383.6L277.3 383.2Z" fill="#18000e"/><path d="M262.2 308.3L265.1 309.3L266.8 307.9L263.9 307.8Z" fill="#fefc00"/><path d="M293.9 377.5L296.8 377.9L298.5 371.8L295.6 371.3Z" fill="#5900b2"/><path d="M248.7 382.9L251.6 384.3L253.3 383.1L250.4 380.8Z" fill="#1f0017"/><path d="M256.1 384.0L259.0 383.6L260.7 383.6L257.9 383.0Z" fill="#120008"/><path d="M283.0 383.9L285.9 384.1L287.6 383.7L284.8 383.1Z" fill="#110007"/><path d="M271.5 339.5L274.3 343.9L276.0 335.8L273.2 331.8Z" fill="#c73a00"/><path d="M269.7 308.6L272.5 309.8L274.2 308.0L271.4 307.7Z" fill="#fefb00"/><path d="M291.6 361.6L294.4 362.9L296.1 354.4L293.3 353.1Z" fill="#950ad4"/><path d="M253.2 346.0L256.1 352.4L257.8 345.7L254.9 339.6Z" fill="#b52000"/><path d="M243.0 375.4L245.8 379.9L247.5 377.1L244.7 372.0Z" fill="#52009b"/><path d="M238.2 310.1L241.1 309.2L242.8 309.4L239.9 311.2Z" fill="#fced00"/><path d="M250.2 308.5L253.1 309.1L254.8 308.2L251.9 308.6Z" fill="#fefb00"/><path d="M264.0 337.2L266.9 342.4L268.6 334.9L265.7 330.2Z" fill="#cb4000"/><path d="M277.1 308.8L280.0 310.0L281.7 308.2L278.8 307.8Z" fill="#fefb00"/><path d="M259.5 338.8L262.3 344.5L264.0 337.2L261.2 332.0Z" fill="#c73900"/><path d="M281.8 343.1L284.7 346.2L286.4 337.6L283.5 334.7Z" fill="#c23100"/><path d="M263.6 383.3L266.5 382.1L268.2 383.3L265.3 383.4Z" fill="#200019"/><path d="M284.7 346.2L287.5 349.0L289.2 340.2L286.4 337.6Z" fill="#bb2800"/><path d="M290.5 384.2L293.4 384.6L295.1 382.3L292.2 381.8Z" fill="#1e0016"/><path d="M245.2 356.5L248.1 363.3L249.8 358.1L246.9 351.2Z" fill="#980bca"/><path d="M278.9 339.6L281.8 343.1L283.5 334.7L280.6 331.6Z" fill="#c93c00"/><path d="M243.5 361.4L246.4 368.0L248.1 363.3L245.2 356.5Z" fill="#8906f8"/><path d="M257.7 308.7L260.5 310.0L262.2 308.3L259.4 307.9Z" fill="#fefb00"/><path d="M268.6 334.9L271.5 339.5L273.2 331.8L270.3 327.7Z" fill="#d14c00"/><path d="M295.6 371.3L298.5 371.8L300.2 364.3L297.3 363.8Z" fill="#7703fa"/><path d="M284.6 308.8L287.4 309.7L289.1 308.3L286.3 308.1Z" fill="#fefc00"/><path d="M251.6 384.3L254.4 384.2L256.1 384.0L253.3 383.1Z" fill="#100007"/><path d="M265.1 309.3L268.0 311.0L269.7 308.6L266.8 307.9Z" fill="#fef700"/><path d="M287.5 349.0L290.4 351.2L292.1 342.4L289.2 340.2Z" fill="#b62200"/><path d="M246.9 351.2L249.8 358.1L251.5 352.2L248.6 345.4Z" fill="#a7146f"/><path d="M276.0 335.8L278.9 339.6L280.6 331.6L277.8 328.2Z" fill="#d04b00"/><path d="M241.8 365.7L244.7 372.0L246.4 368.0L243.5 361.4Z" fill="#7a03fd"/><path d="M233.6 311.0L236.5 309.7L238.2 310.1L235.3 312.3Z" fill="#fbe700"/><path d="M254.9 339.6L257.8 345.7L259.5 338.8L256.6 333.1Z" fill="#c43500"/><path d="M272.5 309.8L275.4 311.5L277.1 308.8L274.2 308.0Z" fill="#fdf400"/><path d="M294.4 362.9L297.3 363.8L299.0 355.3L296.1 354.4Z" fill="#9309dd"/><path d="M295.1 382.3L297.9 382.5L299.6 378.0L296.8 377.9Z" fill="#3c0057"/><path d="M292.0 308.8L294.9 309.3L296.6 308.8L293.7 308.7Z" fill="#fefb00"/><path d="M271.0 382.6L273.9 381.6L275.6 383.2L272.7 383.4Z" fill="#260024"/><path d="M296.8 377.9L299.6 378.0L301.3 371.8L298.5 371.8Z" fill="#5a01b5"/><path d="M244.1 382.1L247.0 384.4L248.7 382.9L245.8 379.9Z" fill="#29002a"/><path d="M285.9 384.1L288.8 384.4L290.5 384.2L287.6 383.7Z" fill="#120008"/><path d="M278.5 382.9L281.3 382.6L283.0 383.9L280.2 383.6Z" fill="#200019"/><path d="M245.6 308.8L248.5 309.4L250.2 308.5L247.3 308.9Z" fill="#fefb00"/><path d="M273.2 331.8L276.0 335.8L277.8 328.2L274.9 324.7Z" fill="#d85e00"/><path d="M290.4 351.2L293.3 353.1L295.0 344.1L292.1 342.4Z" fill="#b21d18"/><path d="M248.6 345.4L251.5 352.2L253.2 346.0L250.3 339.4Z" fill="#b62200"/><path d="M261.2 332.0L264.0 337.2L265.7 330.2L262.9 325.5Z" fill="#d65800"/><path d="M265.7 330.2L268.6 334.9L270.3 327.7L267.4 323.6Z" fill="#da6300"/><path d="M241.3 378.2L244.1 382.1L245.8 379.9L243.0 375.4Z" fill="#450071"/><path d="M280.0 310.0L282.9 311.4L284.6 308.8L281.7 308.2Z" fill="#fdf500"/><path d="M229.1 312.4L231.9 310.5L233.6 311.0L230.8 313.7Z" fill="#f9df00"/><path d="M253.1 309.1L256.0 310.6L257.7 308.7L254.8 308.2Z" fill="#fefa00"/><path d="M260.5 310.0L263.4 312.1L265.1 309.3L262.2 308.3Z" fill="#fdf200"/><path d="M240.1 369.5L243.0 375.4L244.7 372.0L241.8 365.7Z" fill="#6d02e8"/><path d="M259.0 383.6L261.9 382.1L263.6 383.3L260.7 383.6Z" fill="#22001d"/><path d="M268.0 311.0L270.8 313.2L272.5 309.8L269.7 308.6Z" fill="#fceb00"/><path d="M270.3 327.7L273.2 331.8L274.9 324.7L272.0 321.2Z" fill="#df7300"/><path d="M247.0 384.4L249.9 384.9L251.6 384.3L248.7 382.9Z" fill="#130009"/><path d="M256.6 333.1L259.5 338.8L261.2 332.0L258.3 326.8Z" fill="#d35200"/><path d="M224.5 314.1L227.4 311.6L229.1 312.4L226.2 315.7Z" fill="#f7d200"/><path d="M219.9 316.5L222.8 313.2L224.5 314.1L221.6 318.2Z" fill="#f3c000"/><path d="M275.4 311.5L278.3 313.5L280.0 310.0L277.1 308.8Z" fill="#fbea00"/><path d="M293.4 384.6L296.2 385.0L297.9 382.5L295.1 382.3Z" fill="#1f0017"/><path d="M250.3 339.4L253.2 346.0L254.9 339.6L252.0 333.4Z" fill="#c43500"/><path d="M287.4 309.7L290.3 310.7L292.0 308.8L289.1 308.3Z" fill="#fef900"/><path d="M293.3 353.1L296.1 354.4L297.8 345.5L295.0 344.1Z" fill="#ae1a34"/><path d="M298.5 371.8L301.3 371.8L303.0 364.3L300.2 364.3Z" fill="#7803fb"/><path d="M263.4 312.1L266.3 314.7L268.0 311.0L265.1 309.3Z" fill="#fae200"/><path d="M280.6 331.6L283.5 334.7L285.2 326.9L282.3 324.2Z" fill="#da6300"/><path d="M270.8 313.2L273.7 315.7L275.4 311.5L272.5 309.8Z" fill="#f9db00"/><path d="M262.9 325.5L265.7 330.2L267.4 323.6L264.6 319.7Z" fill="#e37e00"/><path d="M283.5 334.7L286.4 337.6L288.1 329.5L285.2 326.9Z" fill="#d45500"/><path d="M277.8 328.2L280.6 331.6L282.3 324.2L279.5 321.3Z" fill="#e07400"/><path d="M241.1 309.2L243.9 309.6L245.6 308.8L242.8 309.4Z" fill="#fefa00"/><path d="M267.4 323.6L270.3 327.7L272.0 321.2L269.1 317.8Z" fill="#e78c00"/><path d="M297.3 363.8L300.2 364.3L301.9 355.8L299.0 355.3Z" fill="#9209e0"/><path d="M274.9 324.7L277.8 328.2L279.5 321.3L276.6 318.5Z" fill="#e68900"/><path d="M256.0 310.6L258.8 313.0L260.5 310.0L257.7 308.7Z" fill="#fcee00"/><path d="M286.4 337.6L289.2 340.2L290.9 331.8L288.1 329.5Z" fill="#cf4900"/><path d="M282.9 311.4L285.7 312.9L287.4 309.7L284.6 308.8Z" fill="#fcee00"/><path d="M266.3 314.7L269.1 317.8L270.8 313.2L268.0 311.0Z" fill="#f6ce00"/><path d="M272.0 321.2L274.9 324.7L276.6 318.5L273.7 315.7Z" fill="#ec9f00"/><path d="M294.9 309.3L297.7 310.0L299.4 309.1L296.6 308.8Z" fill="#fefc00"/><path d="M258.3 326.8L261.2 332.0L262.9 325.5L260.0 321.1Z" fill="#e07400"/><path d="M254.4 384.2L257.3 382.7L259.0 383.6L256.1 384.0Z" fill="#200019"/><path d="M269.1 317.8L272.0 321.2L273.7 315.7L270.8 313.2Z" fill="#f1b600"/><path d="M248.5 309.4L251.4 311.0L253.1 309.1L250.2 308.5Z" fill="#fef900"/><path d="M273.7 315.7L276.6 318.5L278.3 313.5L275.4 311.5Z" fill="#f5c900"/><path d="M238.4 372.7L241.3 378.2L243.0 375.4L240.1 369.5Z" fill="#6001c7"/><path d="M278.3 313.5L281.2 315.6L282.9 311.4L280.0 310.0Z" fill="#f9dc00"/><path d="M252.0 333.4L254.9 339.6L256.6 333.1L253.7 327.5Z" fill="#d24f00"/><path d="M264.6 319.7L267.4 323.6L269.1 317.8L266.3 314.7Z" fill="#eea700"/><path d="M288.8 384.4L291.7 384.9L293.4 384.6L290.5 384.2Z" fill="#120008"/><path d="M297.9 382.5L300.8 382.5L302.5 377.8L299.6 378.0Z" fill="#3f0061"/><path d="M266.5 382.1L269.3 380.4L271.0 382.6L268.2 383.3Z" fill="#31003a"/><path d="M258.8 313.0L261.7 316.1L263.4 312.1L260.5 310.0Z" fill="#f9db00"/><path d="M289.2 340.2L292.1 342.4L293.8 333.8L290.9 331.8Z" fill="#cb4000"/><path d="M261.7 316.1L264.6 319.7L266.3 314.7L263.4 312.1Z" fill="#f4c200"/><path d="M299.6 378.0L302.5 377.8L304.2 371.5L301.3 371.8Z" fill="#5d01bf"/><path d="M276.6 318.5L279.5 321.3L281.2 315.6L278.3 313.5Z" fill="#f1b500"/><path d="M240.6 354.1L243.5 361.4L245.2 356.5L242.3 349.2Z" fill="#9f0fa3"/><path d="M281.3 382.6L284.2 382.5L285.9 384.1L283.0 383.9Z" fill="#260024"/><path d="M242.3 349.2L245.2 356.5L246.9 351.2L244.0 344.0Z" fill="#ac1844"/><path d="M260.0 321.1L262.9 325.5L264.6 319.7L261.7 316.1Z" fill="#eb9b00"/><path d="M239.6 380.4L242.4 383.8L244.1 382.1L241.3 378.2Z" fill="#39004f"/><path d="M296.1 354.4L299.0 355.3L300.7 346.4L297.8 345.5Z" fill="#ac1844"/><path d="M279.5 321.3L282.3 324.2L284.0 317.9L281.2 315.6Z" fill="#eda200"/><path d="M244.0 344.0L246.9 351.2L248.6 345.4L245.7 338.5Z" fill="#ba2600"/><path d="M273.9 381.6L276.8 380.5L278.5 382.9L275.6 383.2Z" fill="#32003e"/><path d="M242.4 383.8L245.3 385.4L247.0 384.4L244.1 382.1Z" fill="#1e0016"/><path d="M238.9 358.5L241.8 365.7L243.5 361.4L240.6 354.1Z" fill="#9209e0"/><path d="M253.7 327.5L256.6 333.1L258.3 326.8L255.4 322.0Z" fill="#de7000"/><path d="M236.5 309.7L239.4 309.8L241.1 309.2L238.2 310.1Z" fill="#fef900"/><path d="M281.2 315.6L284.0 317.9L285.7 312.9L282.9 311.4Z" fill="#f6ce00"/><path d="M290.3 310.7L293.2 311.8L294.9 309.3L292.0 308.8Z" fill="#fdf500"/><path d="M251.4 311.0L254.3 313.7L256.0 310.6L253.1 309.1Z" fill="#fcec00"/><path d="M282.3 324.2L285.2 326.9L286.9 320.1L284.0 317.9Z" fill="#e89100"/><path d="M249.9 384.9L252.7 383.8L254.4 384.2L251.6 384.3Z" fill="#19000f"/><path d="M257.1 317.1L260.0 321.1L261.7 316.1L258.8 313.0Z" fill="#f2ba00"/><path d="M285.7 312.9L288.6 314.6L290.3 310.7L287.4 309.7Z" fill="#fae400"/><path d="M292.1 342.4L295.0 344.1L296.7 335.4L293.8 333.8Z" fill="#c73a00"/><path d="M245.7 338.5L248.6 345.4L250.3 339.4L247.4 332.9Z" fill="#c73900"/><path d="M296.2 385.0L299.1 385.3L300.8 382.5L297.9 382.5Z" fill="#22001c"/><path d="M255.4 322.0L258.3 326.8L260.0 321.1L257.1 317.1Z" fill="#e99400"/><path d="M254.3 313.7L257.1 317.1L258.8 313.0L256.0 310.6Z" fill="#f8d600"/><path d="M243.9 309.6L246.8 311.2L248.5 309.4L245.6 308.8Z" fill="#fefa00"/><path d="M285.2 326.9L288.1 329.5L289.8 322.2L286.9 320.1Z" fill="#e48100"/><path d="M237.2 362.5L240.1 369.5L241.8 365.7L238.9 358.5Z" fill="#8605fb"/><path d="M284.0 317.9L286.9 320.1L288.6 314.6L285.7 312.9Z" fill="#f3bf00"/><path d="M300.2 364.3L303.0 364.3L304.7 355.8L301.9 355.8Z" fill="#9309dd"/><path d="M247.4 332.9L250.3 339.4L252.0 333.4L249.1 327.5Z" fill="#d35200"/><path d="M297.7 310.0L300.6 310.7L302.3 309.4L299.4 309.1Z" fill="#fefc00"/><path d="M236.7 375.4L239.6 380.4L241.3 378.2L238.4 372.7Z" fill="#5500a5"/><path d="M301.3 371.8L304.2 371.5L305.9 363.8L303.0 364.3Z" fill="#7a03fd"/><path d="M261.9 382.1L264.8 379.8L266.5 382.1L263.6 383.3Z" fill="#360048"/><path d="M288.1 329.5L290.9 331.8L292.6 324.1L289.8 322.2Z" fill="#e07400"/><path d="M291.7 384.9L294.5 385.4L296.2 385.0L293.4 384.6Z" fill="#120008"/><path d="M231.9 310.5L234.8 310.1L236.5 309.7L233.6 311.0Z" fill="#fdf500"/><path d="M252.6 317.6L255.4 322.0L257.1 317.1L254.3 313.7Z" fill="#f1b500"/><path d="M249.1 327.5L252.0 333.4L253.7 327.5L250.9 322.3Z" fill="#de7000"/><path d="M245.3 385.4L248.2 385.1L249.9 384.9L247.0 384.4Z" fill="#110007"/><path d="M295.0 344.1L297.8 345.5L299.5 336.6L296.7 335.4Z" fill="#c43500"/><path d="M288.6 314.6L291.5 316.2L293.2 311.8L290.3 310.7Z" fill="#f9db00"/><path d="M250.9 322.3L253.7 327.5L255.4 322.0L252.6 317.6Z" fill="#e89200"/><path d="M246.8 311.2L249.7 314.0L251.4 311.0L248.5 309.4Z" fill="#fcec00"/><path d="M299.0 355.3L301.9 355.8L303.6 346.8L300.7 346.4Z" fill="#ac184a"/><path d="M286.9 320.1L289.8 322.2L291.5 316.2L288.6 314.6Z" fill="#f0b100"/><path d="M293.2 311.8L296.0 312.9L297.7 310.0L294.9 309.3Z" fill="#fdf100"/><path d="M300.8 382.5L303.7 382.3L305.4 377.3L302.5 377.8Z" fill="#450071"/><path d="M284.2 382.5L287.1 382.6L288.8 384.4L285.9 384.1Z" fill="#2a002b"/><path d="M235.5 365.9L238.4 372.7L240.1 369.5L237.2 362.5Z" fill="#7b03fe"/><path d="M249.7 314.0L252.6 317.6L254.3 313.7L251.4 311.0Z" fill="#f7d400"/><path d="M290.9 331.8L293.8 333.8L295.5 325.9L292.6 324.1Z" fill="#dc6a00"/><path d="M239.4 309.8L242.2 311.3L243.9 309.6L241.1 309.2Z" fill="#fefb00"/><path d="M227.4 311.6L230.2 310.6L231.9 310.5L229.1 312.4Z" fill="#fcee00"/><path d="M302.5 377.8L305.4 377.3L307.1 370.7L304.2 371.5Z" fill="#6201cd"/><path d="M237.9 382.3L240.7 385.2L242.4 383.8L239.6 380.4Z" fill="#2f0036"/><path d="M289.8 322.2L292.6 324.1L294.3 317.7L291.5 316.2Z" fill="#eda500"/><path d="M257.3 382.7L260.2 380.1L261.9 382.1L259.0 383.6Z" fill="#360048"/><path d="M269.3 380.4L272.2 378.4L273.9 381.6L271.0 382.6Z" fill="#410064"/><path d="M299.1 385.3L302.0 385.5L303.7 382.3L300.8 382.5Z" fill="#270026"/><path d="M276.8 380.5L279.6 379.6L281.3 382.6L278.5 382.9Z" fill="#3c0058"/><path d="M222.8 313.2L225.7 311.4L227.4 311.6L224.5 314.1Z" fill="#fae300"/><path d="M248.0 317.7L250.9 322.3L252.6 317.6L249.7 314.0Z" fill="#f1b500"/><path d="M291.5 316.2L294.3 317.7L296.0 312.9L293.2 311.8Z" fill="#f7d100"/><path d="M293.8 333.8L296.7 335.4L298.4 327.3L295.5 325.9Z" fill="#d96200"/><path d="M297.8 345.5L300.7 346.4L302.4 337.5L299.5 336.6Z" fill="#c33300"/><path d="M300.6 310.7L303.5 311.3L305.2 309.8L302.3 309.4Z" fill="#fefb00"/><path d="M240.7 385.2L243.6 386.1L245.3 385.4L242.4 383.8Z" fill="#15000b"/><path d="M218.2 315.4L221.1 312.7L222.8 313.2L219.9 316.5Z" fill="#f7d200"/><path d="M239.5 341.7L242.3 349.2L244.0 344.0L241.2 336.8Z" fill="#bf2e00"/><path d="M294.5 385.4L297.4 386.1L299.1 385.3L296.2 385.0Z" fill="#110007"/><path d="M241.2 336.8L244.0 344.0L245.7 338.5L242.9 331.7Z" fill="#cb4000"/><path d="M237.8 346.4L240.6 354.1L242.3 349.2L239.5 341.7Z" fill="#b42002"/><path d="M242.2 311.3L245.1 314.0L246.8 311.2L243.9 309.6Z" fill="#fcee00"/><path d="M235.0 377.6L237.9 382.3L239.6 380.4L236.7 375.4Z" fill="#4c0088"/><path d="M246.3 322.0L249.1 327.5L250.9 322.3L248.0 317.7Z" fill="#e99400"/><path d="M242.9 331.7L245.7 338.5L247.4 332.9L244.6 326.8Z" fill="#d65800"/><path d="M296.0 312.9L298.9 314.0L300.6 310.7L297.7 310.0Z" fill="#fcec00"/><path d="M244.6 326.8L247.4 332.9L249.1 327.5L246.3 322.0Z" fill="#e07400"/><path d="M245.1 314.0L248.0 317.7L249.7 314.0L246.8 311.2Z" fill="#f8d600"/><path d="M303.0 364.3L305.9 363.8L307.6 355.3L304.7 355.8Z" fill="#950ad4"/><path d="M233.8 368.9L236.7 375.4L238.4 372.7L235.5 365.9Z" fill="#7102f1"/><path d="M236.1 350.7L238.9 358.5L240.6 354.1L237.8 346.4Z" fill="#a9165f"/><path d="M252.7 383.8L255.6 381.3L257.3 382.7L254.4 384.2Z" fill="#31003a"/><path d="M292.6 324.1L295.5 325.9L297.2 319.1L294.3 317.7Z" fill="#eb9a00"/><path d="M234.8 310.1L237.7 311.2L239.4 309.8L236.5 309.7Z" fill="#fefc00"/><path d="M301.9 355.8L304.7 355.8L306.4 346.8L303.6 346.8Z" fill="#ac1844"/><path d="M304.2 371.5L307.1 370.7L308.8 362.9L305.9 363.8Z" fill="#7f04ff"/><path d="M287.1 382.6L290.0 383.1L291.7 384.9L288.8 384.4Z" fill="#2b002e"/><path d="M294.3 317.7L297.2 319.1L298.9 314.0L296.0 312.9Z" fill="#f5c900"/><path d="M296.7 335.4L299.5 336.6L301.2 328.4L298.4 327.3Z" fill="#d75c00"/><path d="M234.4 354.7L237.2 362.5L238.9 358.5L236.1 350.7Z" fill="#9e0fa7"/><path d="M248.2 385.1L251.0 383.2L252.7 383.8L249.9 384.9Z" fill="#260024"/><path d="M303.7 382.3L306.5 381.7L308.2 376.3L305.4 377.3Z" fill="#4c0088"/><path d="M243.4 317.3L246.3 322.0L248.0 317.7L245.1 314.0Z" fill="#f2ba00"/><path d="M300.7 346.4L303.6 346.8L305.3 337.9L302.4 337.5Z" fill="#c23200"/><path d="M295.5 325.9L298.4 327.3L300.1 320.3L297.2 319.1Z" fill="#e89200"/><path d="M303.5 311.3L306.4 312.0L308.1 310.2L305.2 309.8Z" fill="#fefa00"/><path d="M237.7 311.2L240.5 313.7L242.2 311.3L239.4 309.8Z" fill="#fdf200"/><path d="M298.9 314.0L301.8 314.9L303.5 311.3L300.6 310.7Z" fill="#fbe800"/><path d="M230.2 310.6L233.1 311.1L234.8 310.1L231.9 310.5Z" fill="#fefb00"/><path d="M243.6 386.1L246.5 385.1L248.2 385.1L245.3 385.4Z" fill="#18000e"/><path d="M264.8 379.8L267.6 377.0L269.3 380.4L266.5 382.1Z" fill="#4a0080"/><path d="M297.4 386.1L300.3 386.7L302.0 385.5L299.1 385.3Z" fill="#110007"/><path d="M302.0 385.5L304.8 385.4L306.5 381.7L303.7 382.3Z" fill="#2f0036"/><path d="M240.5 313.7L243.4 317.3L245.1 314.0L242.2 311.3Z" fill="#f9db00"/><path d="M305.4 377.3L308.2 376.3L309.9 369.5L307.1 370.7Z" fill="#6901df"/><path d="M236.2 383.7L239.0 386.2L240.7 385.2L237.9 382.3Z" fill="#270026"/><path d="M232.7 358.2L235.5 365.9L237.2 362.5L234.4 354.7Z" fill="#950ad7"/><path d="M232.1 371.3L235.0 377.6L236.7 375.4L233.8 368.9Z" fill="#6901df"/><path d="M241.7 321.2L244.6 326.8L246.3 322.0L243.4 317.3Z" fill="#eb9b00"/><path d="M279.6 379.6L282.5 379.0L284.2 382.5L281.3 382.6Z" fill="#44006d"/><path d="M297.2 319.1L300.1 320.3L301.8 314.9L298.9 314.0Z" fill="#f4c200"/><path d="M299.5 336.6L302.4 337.5L304.1 329.2L301.2 328.4Z" fill="#d65900"/><path d="M290.0 383.1L292.8 383.8L294.5 385.4L291.7 384.9Z" fill="#2a002b"/><path d="M233.3 379.4L236.2 383.7L237.9 382.3L235.0 377.6Z" fill="#450071"/><path d="M240.0 325.5L242.9 331.7L244.6 326.8L241.7 321.2Z" fill="#e37e00"/><path d="M272.2 378.4L275.1 376.5L276.8 380.5L273.9 381.6Z" fill="#4e008e"/><path d="M298.4 327.3L301.2 328.4L302.9 321.3L300.1 320.3Z" fill="#e78c00"/><path d="M238.3 329.9L241.2 336.8L242.9 331.7L240.0 325.5Z" fill="#da6300"/><path d="M225.7 311.4L228.5 311.2L230.2 310.6L227.4 311.6Z" fill="#fef800"/><path d="M239.0 386.2L241.9 386.7L243.6 386.1L240.7 385.2Z" fill="#110007"/><path d="M305.9 363.8L308.8 362.9L310.5 354.4L307.6 355.3Z" fill="#990cc3"/><path d="M304.7 355.8L307.6 355.3L309.3 346.4L306.4 346.8Z" fill="#ae1a34"/><path d="M236.6 334.3L239.5 341.7L241.2 336.8L238.3 329.9Z" fill="#d14c00"/><path d="M233.1 311.1L236.0 313.2L237.7 311.2L234.8 310.1Z" fill="#fef700"/><path d="M238.8 316.6L241.7 321.2L243.4 317.3L240.5 313.7Z" fill="#f4c200"/><path d="M301.8 314.9L304.6 315.7L306.4 312.0L303.5 311.3Z" fill="#fae400"/><path d="M231.0 361.3L233.8 368.9L235.5 365.9L232.7 358.2Z" fill="#8c07f2"/><path d="M306.4 312.0L309.2 312.5L310.9 310.7L308.1 310.2Z" fill="#fef900"/><path d="M234.9 338.7L237.8 346.4L239.5 341.7L236.6 334.3Z" fill="#c73a00"/><path d="M303.6 346.8L306.4 346.8L308.2 338.0L305.3 337.9Z" fill="#c33300"/><path d="M260.2 380.1L263.1 376.7L264.8 379.8L261.9 382.1Z" fill="#4d0089"/><path d="M307.1 370.7L309.9 369.5L311.7 361.6L308.8 362.9Z" fill="#8505fd"/><path d="M221.1 312.7L224.0 311.6L225.7 311.4L222.8 313.2Z" fill="#fcf000"/><path d="M300.1 320.3L302.9 321.3L304.6 315.7L301.8 314.9Z" fill="#f3bd00"/><path d="M300.3 386.7L303.1 387.2L304.8 385.4L302.0 385.5Z" fill="#15000b"/><path d="M236.0 313.2L238.8 316.6L240.5 313.7L237.7 311.2Z" fill="#fae200"/><path d="M233.2 342.8L236.1 350.7L237.8 346.4L234.9 338.7Z" fill="#be2b00"/><path d="M292.8 383.8L295.7 384.9L297.4 386.1L294.5 385.4Z" fill="#260024"/><path d="M302.4 337.5L305.3 337.9L307.0 329.6L304.1 329.2Z" fill="#d65800"/><path d="M216.5 314.6L219.4 312.6L221.1 312.7L218.2 315.4Z" fill="#fae100"/><path d="M230.4 373.3L233.3 379.4L235.0 377.6L232.1 371.3Z" fill="#6201cd"/><path d="M306.5 381.7L309.4 380.6L311.1 374.8L308.2 376.3Z" fill="#5500a5"/><path d="M301.2 328.4L304.1 329.2L305.8 322.0L302.9 321.3Z" fill="#e68900"/><path d="M237.1 320.0L240.0 325.5L241.7 321.2L238.8 316.6Z" fill="#eea700"/><path d="M282.5 379.0L285.4 378.9L287.1 382.6L284.2 382.5Z" fill="#48007b"/><path d="M255.6 381.3L258.5 377.7L260.2 380.1L257.3 382.7Z" fill="#4a0080"/><path d="M304.8 385.4L307.7 384.9L309.4 380.6L306.5 381.7Z" fill="#39004f"/><path d="M231.5 346.6L234.4 354.7L236.1 350.7L233.2 342.8Z" fill="#b52000"/><path d="M234.5 384.9L237.3 387.1L239.0 386.2L236.2 383.7Z" fill="#22001c"/><path d="M228.5 311.2L231.4 312.7L233.1 311.1L230.2 310.6Z" fill="#fefb00"/><path d="M251.0 383.2L253.9 379.7L255.6 381.3L252.7 383.8Z" fill="#410064"/><path d="M246.5 385.1L249.3 382.4L251.0 383.2L248.2 385.1Z" fill="#32003e"/><path d="M304.6 315.7L307.5 316.3L309.2 312.5L306.4 312.0Z" fill="#fae200"/><path d="M229.2 363.9L232.1 371.3L233.8 368.9L231.0 361.3Z" fill="#8505fd"/><path d="M231.6 380.8L234.5 384.9L236.2 383.7L233.3 379.4Z" fill="#3f0061"/><path d="M308.2 376.3L311.1 374.8L312.8 367.7L309.9 369.5Z" fill="#7102f1"/><path d="M309.2 312.5L312.1 312.9L313.8 311.1L310.9 310.7Z" fill="#fef900"/><path d="M235.4 323.7L238.3 329.9L240.0 325.5L237.1 320.0Z" fill="#e78c00"/><path d="M241.9 386.7L244.8 385.2L246.5 385.1L243.6 386.1Z" fill="#200019"/><path d="M302.9 321.3L305.8 322.0L307.5 316.3L304.6 315.7Z" fill="#f2ba00"/><path d="M295.7 384.9L298.6 386.1L300.3 386.7L297.4 386.1Z" fill="#200019"/><path d="M234.3 315.7L237.1 320.0L238.8 316.6L236.0 313.2Z" fill="#f6ce00"/><path d="M307.6 355.3L310.5 354.4L312.2 345.5L309.3 346.4Z" fill="#b21d18"/><path d="M267.6 377.0L270.5 374.1L272.2 378.4L269.3 380.4Z" fill="#5b01b6"/><path d="M229.8 350.0L232.7 358.2L234.4 354.7L231.5 346.6Z" fill="#ac1844"/><path d="M231.4 312.7L234.3 315.7L236.0 313.2L233.1 311.1Z" fill="#fceb00"/><path d="M306.4 346.8L309.3 346.4L311.0 337.6L308.2 338.0Z" fill="#c43500"/><path d="M303.1 387.2L306.0 387.4L307.7 384.9L304.8 385.4Z" fill="#1e0016"/><path d="M308.8 362.9L311.7 361.6L313.4 353.0L310.5 354.4Z" fill="#9e0fa7"/><path d="M275.1 376.5L277.9 375.0L279.6 379.6L276.8 380.5Z" fill="#5900b1"/><path d="M233.7 327.5L236.6 334.3L238.3 329.9L235.4 323.7Z" fill="#df7300"/><path d="M305.3 337.9L308.2 338.0L309.9 329.8L307.0 329.6Z" fill="#d65900"/><path d="M304.1 329.2L307.0 329.6L308.7 322.5L305.8 322.0Z" fill="#e58700"/><path d="M237.3 387.1L240.2 387.2L241.9 386.7L239.0 386.2Z" fill="#110007"/><path d="M224.0 311.6L226.8 312.3L228.5 311.2L225.7 311.4Z" fill="#fefc00"/><path d="M285.4 378.9L288.3 379.4L290.0 383.1L287.1 382.6Z" fill="#4a0080"/><path d="M232.0 331.3L234.9 338.7L236.6 334.3L233.7 327.5Z" fill="#d85e00"/><path d="M228.7 374.9L231.6 380.8L233.3 379.4L230.4 373.3Z" fill="#5d01bf"/><path d="M307.5 316.3L310.4 316.8L312.1 312.9L309.2 312.5Z" fill="#fae200"/><path d="M309.9 369.5L312.8 367.7L314.5 359.7L311.7 361.6Z" fill="#8c07f2"/><path d="M232.6 318.5L235.4 323.7L237.1 320.0L234.3 315.7Z" fill="#f1b600"/><path d="M312.1 312.9L315.0 313.3L316.7 311.6L313.8 311.1Z" fill="#fef900"/><path d="M298.6 386.1L301.4 387.3L303.1 387.2L300.3 386.7Z" fill="#18000e"/><path d="M305.8 322.0L308.7 322.5L310.4 316.8L307.5 316.3Z" fill="#f2b900"/><path d="M228.1 353.0L231.0 361.3L232.7 358.2L229.8 350.0Z" fill="#a5137e"/><path d="M227.5 366.0L230.4 373.3L232.1 371.3L229.2 363.9Z" fill="#7f04ff"/><path d="M219.4 312.6L222.2 312.3L224.0 311.6L221.1 312.7Z" fill="#fef800"/><path d="M307.7 384.9L310.6 383.9L312.3 379.0L309.4 380.6Z" fill="#450071"/><path d="M230.3 335.0L233.2 342.8L234.9 338.7L232.0 331.3Z" fill="#d04b00"/><path d="M309.4 380.6L312.3 379.0L314.0 372.8L311.1 374.8Z" fill="#6001c7"/><path d="M226.8 312.3L229.7 314.6L231.4 312.7L228.5 311.2Z" fill="#fdf400"/><path d="M229.7 314.6L232.6 318.5L234.3 315.7L231.4 312.7Z" fill="#f9db00"/><path d="M232.7 385.9L235.6 387.9L237.3 387.1L234.5 384.9Z" fill="#1f0017"/><path d="M263.1 376.7L265.9 372.9L267.6 377.0L264.8 379.8Z" fill="#6101ca"/><path d="M307.0 329.6L309.9 329.8L311.6 322.6L308.7 322.5Z" fill="#e68900"/><path d="M214.8 314.3L217.7 312.8L219.4 312.6L216.5 314.6Z" fill="#fcec00"/><path d="M229.9 381.9L232.7 385.9L234.5 384.9L231.6 380.8Z" fill="#3c0057"/><path d="M378.1 374.4L381.0 379.1L382.7 381.7L379.8 377.9Z" fill="#5b01b7"/><path d="M288.3 379.4L291.1 380.4L292.8 383.8L290.0 383.1Z" fill="#48007b"/><path d="M230.9 321.6L233.7 327.5L235.4 323.7L232.6 318.5Z" fill="#ec9f00"/><path d="M308.2 338.0L311.0 337.6L312.7 329.5L309.9 329.8Z" fill="#d75c00"/><path d="M309.3 346.4L312.2 345.5L313.9 336.9L311.0 337.6Z" fill="#c73a00"/><path d="M306.0 387.4L308.9 387.2L310.6 383.9L307.7 384.9Z" fill="#29002a"/><path d="M228.6 338.5L231.5 346.6L233.2 342.8L230.3 335.0Z" fill="#c93c00"/><path d="M310.5 354.4L313.4 353.0L315.1 344.2L312.2 345.5Z" fill="#b62200"/><path d="M301.4 387.3L304.3 388.3L306.0 387.4L303.1 387.2Z" fill="#110007"/><path d="M311.1 374.8L314.0 372.8L315.7 365.5L312.8 367.7Z" fill="#7b03fe"/><path d="M310.4 316.8L313.3 317.1L315.0 313.3L312.1 312.9Z" fill="#fae200"/><path d="M226.4 355.6L229.2 363.9L231.0 361.3L228.1 353.0Z" fill="#9e0fa7"/><path d="M240.2 387.2L243.1 385.3L244.8 385.2L241.9 386.7Z" fill="#260024"/><path d="M277.9 375.0L280.8 373.9L282.5 379.0L279.6 379.6Z" fill="#6101ca"/><path d="M315.0 313.3L317.8 313.6L319.5 312.0L316.7 311.6Z" fill="#fefa00"/><path d="M308.7 322.5L311.6 322.6L313.3 317.1L310.4 316.8Z" fill="#f2ba00"/><path d="M244.8 385.2L247.6 381.8L249.3 382.4L246.5 385.1Z" fill="#3c0058"/><path d="M258.5 377.7L261.4 373.2L263.1 376.7L260.2 380.1Z" fill="#6101ca"/><path d="M375.2 369.1L378.1 374.4L379.8 377.9L376.9 373.4Z" fill="#7002ee"/><path d="M235.6 387.9L238.5 387.9L240.2 387.2L237.3 387.1Z" fill="#120008"/><path d="M311.7 361.6L314.5 359.7L316.2 351.2L313.4 353.0Z" fill="#a5137e"/><path d="M222.2 312.3L225.1 313.7L226.8 312.3L224.0 311.6Z" fill="#fefb00"/><path d="M229.2 324.8L232.0 331.3L233.7 327.5L230.9 321.6Z" fill="#e68900"/><path d="M291.1 380.4L294.0 381.8L295.7 384.9L292.8 383.8Z" fill="#44006d"/><path d="M225.8 367.6L228.7 374.9L230.4 373.3L227.5 366.0Z" fill="#7a03fd"/><path d="M249.3 382.4L252.2 378.1L253.9 379.7L251.0 383.2Z" fill="#4e008e"/><path d="M227.0 376.1L229.9 381.9L231.6 380.8L228.7 374.9Z" fill="#5a01b5"/><path d="M226.9 341.7L229.8 350.0L231.5 346.6L228.6 338.5Z" fill="#c23100"/><path d="M270.5 374.1L273.4 371.4L275.1 376.5L272.2 378.4Z" fill="#6901e0"/><path d="M253.9 379.7L256.8 375.1L258.5 377.7L255.6 381.3Z" fill="#5b01b6"/><path d="M228.0 316.9L230.9 321.6L232.6 318.5L229.7 314.6Z" fill="#f5c900"/><path d="M225.1 313.7L228.0 316.9L229.7 314.6L226.8 312.3Z" fill="#fbea00"/><path d="M309.9 329.8L312.7 329.5L314.4 322.6L311.6 322.6Z" fill="#e78c00"/><path d="M304.3 388.3L307.2 388.9L308.9 387.2L306.0 387.4Z" fill="#130009"/><path d="M312.8 367.7L315.7 365.5L317.4 357.4L314.5 359.7Z" fill="#950ad7"/><path d="M227.5 328.0L230.3 335.0L232.0 331.3L229.2 324.8Z" fill="#e07400"/><path d="M294.0 381.8L296.9 383.7L298.6 386.1L295.7 384.9Z" fill="#3c0058"/><path d="M313.3 317.1L316.1 317.2L317.8 313.6L315.0 313.3Z" fill="#fae400"/><path d="M224.7 357.8L227.5 366.0L229.2 363.9L226.4 355.6Z" fill="#990cc3"/><path d="M310.6 383.9L313.4 382.3L315.2 376.9L312.3 379.0Z" fill="#52009b"/><path d="M311.0 337.6L313.9 336.9L315.6 329.0L312.7 329.5Z" fill="#d96200"/><path d="M317.8 313.6L320.7 313.8L322.4 312.5L319.5 312.0Z" fill="#fefb00"/><path d="M217.7 312.8L220.5 313.2L222.2 312.3L219.4 312.6Z" fill="#fefb00"/><path d="M372.4 363.5L375.2 369.1L376.9 373.4L374.1 368.3Z" fill="#8305fe"/><path d="M225.2 344.6L228.1 353.0L229.8 350.0L226.9 341.7Z" fill="#bb2800"/><path d="M231.0 386.7L233.9 388.7L235.6 387.9L232.7 385.9Z" fill="#1e0016"/><path d="M311.6 322.6L314.4 322.6L316.1 317.2L313.3 317.1Z" fill="#f3bd00"/><path d="M228.2 382.6L231.0 386.7L232.7 385.9L229.9 381.9Z" fill="#3b0054"/><path d="M308.9 387.2L311.7 386.3L313.4 382.3L310.6 383.9Z" fill="#38004c"/><path d="M312.3 379.0L315.2 376.9L316.9 370.3L314.0 372.8Z" fill="#6d02e8"/><path d="M312.2 345.5L315.1 344.2L316.8 335.8L313.9 336.9Z" fill="#cb4000"/><path d="M226.3 319.4L229.2 324.8L230.9 321.6L228.0 316.9Z" fill="#f1b500"/><path d="M280.8 373.9L283.7 373.6L285.4 378.9L282.5 379.0Z" fill="#6601d7"/><path d="M296.9 383.7L299.7 385.6L301.4 387.3L298.6 386.1Z" fill="#32003e"/><path d="M213.1 314.2L216.0 313.4L217.7 312.8L214.8 314.3Z" fill="#fdf400"/><path d="M225.7 331.0L228.6 338.5L230.3 335.0L227.5 328.0Z" fill="#da6300"/><path d="M313.4 353.0L316.2 351.2L317.9 342.6L315.1 344.2Z" fill="#bb2800"/><path d="M238.5 387.9L241.4 385.8L243.1 385.3L240.2 387.2Z" fill="#2a002b"/><path d="M224.1 368.9L227.0 376.1L228.7 374.9L225.8 367.6Z" fill="#7803fb"/><path d="M220.5 313.2L223.4 315.5L225.1 313.7L222.2 312.3Z" fill="#fdf500"/><path d="M223.4 315.5L226.3 319.4L228.0 316.9L225.1 313.7Z" fill="#f9dc00"/><path d="M233.9 388.7L236.8 388.6L238.5 387.9L235.6 387.9Z" fill="#120008"/><path d="M312.7 329.5L315.6 329.0L317.3 322.3L314.4 322.6Z" fill="#e89200"/><path d="M265.9 372.9L268.8 369.0L270.5 374.1L267.6 377.0Z" fill="#7302f5"/><path d="M225.3 376.8L228.2 382.6L229.9 381.9L227.0 376.1Z" fill="#5900b2"/><path d="M314.0 372.8L316.9 370.3L318.6 362.7L315.7 365.5Z" fill="#8605fb"/><path d="M320.7 313.8L323.6 314.0L325.3 313.1L322.4 312.5Z" fill="#fefc00"/><path d="M299.7 385.6L302.6 387.5L304.3 388.3L301.4 387.3Z" fill="#260024"/><path d="M223.5 347.1L226.4 355.6L228.1 353.0L225.2 344.6Z" fill="#b62200"/><path d="M316.1 317.2L319.0 317.1L320.7 313.8L317.8 313.6Z" fill="#fbe800"/><path d="M369.5 357.7L372.4 363.5L374.1 368.3L371.2 363.0Z" fill="#950ad6"/><path d="M307.2 388.9L310.0 388.9L311.7 386.3L308.9 387.2Z" fill="#1f0017"/><path d="M243.1 385.3L245.9 381.5L247.6 381.8L244.8 385.2Z" fill="#44006d"/><path d="M314.5 359.7L317.4 357.4L319.1 348.9L316.2 351.2Z" fill="#ac1844"/><path d="M223.0 359.4L225.8 367.6L227.5 366.0L224.7 357.8Z" fill="#950ad4"/><path d="M224.6 321.9L227.5 328.0L229.2 324.8L226.3 319.4Z" fill="#eda200"/><path d="M314.4 322.6L317.3 322.3L319.0 317.1L316.1 317.2Z" fill="#f4c200"/><path d="M224.0 333.9L226.9 341.7L228.6 338.5L225.7 331.0Z" fill="#d45500"/><path d="M273.4 371.4L276.2 369.2L277.9 375.0L275.1 376.5Z" fill="#7502f7"/><path d="M283.7 373.6L286.5 374.1L288.3 379.4L285.4 378.9Z" fill="#6801dc"/><path d="M313.9 336.9L316.8 335.8L318.5 328.2L315.6 329.0Z" fill="#dc6a00"/><path d="M302.6 387.5L305.5 389.1L307.2 388.9L304.3 388.3Z" fill="#19000f"/><path d="M216.0 313.4L218.8 314.4L220.5 313.2L217.7 312.8Z" fill="#fefc00"/><path d="M247.6 381.8L250.5 376.9L252.2 378.1L249.3 382.4Z" fill="#5900b1"/><path d="M229.3 387.2L232.2 389.4L233.9 388.7L231.0 386.7Z" fill="#1f0017"/><path d="M376.4 370.3L379.3 375.8L381.0 379.1L378.1 374.4Z" fill="#7002ee"/><path d="M226.5 383.1L229.3 387.2L231.0 386.7L228.2 382.6Z" fill="#3c0057"/><path d="M315.1 344.2L317.9 342.6L319.6 334.4L316.8 335.8Z" fill="#cf4900"/><path d="M261.4 373.2L264.2 368.4L265.9 372.9L263.1 376.7Z" fill="#7703f9"/><path d="M323.6 314.0L326.4 314.3L328.1 313.8L325.3 313.1Z" fill="#fefc00"/><path d="M313.4 382.3L316.3 380.0L318.0 374.1L315.2 376.9Z" fill="#6101ca"/><path d="M311.7 386.3L314.6 384.7L316.3 380.0L313.4 382.3Z" fill="#48007a"/><path d="M221.7 317.3L224.6 321.9L226.3 319.4L223.4 315.5Z" fill="#f6ce00"/><path d="M315.7 365.5L318.6 362.7L320.3 354.6L317.4 357.4Z" fill="#9e0fa7"/><path d="M222.9 324.5L225.7 331.0L227.5 328.0L224.6 321.9Z" fill="#e89100"/><path d="M366.6 351.9L369.5 357.7L371.2 363.0L368.3 357.5Z" fill="#a61379"/><path d="M221.8 349.2L224.7 357.8L226.4 355.6L223.5 347.1Z" fill="#b21d18"/><path d="M319.0 317.1L321.9 317.0L323.6 314.0L320.7 313.8Z" fill="#fcec00"/><path d="M222.3 336.5L225.2 344.6L226.9 341.7L224.0 333.9Z" fill="#cf4900"/><path d="M218.8 314.4L221.7 317.3L223.4 315.5L220.5 313.2Z" fill="#fcee00"/><path d="M252.2 378.1L255.1 372.6L256.8 375.1L253.9 379.7Z" fill="#6901e0"/><path d="M315.6 329.0L318.5 328.2L320.2 321.8L317.3 322.3Z" fill="#eb9a00"/><path d="M286.5 374.1L289.4 375.3L291.1 380.4L288.3 379.4Z" fill="#6601d7"/><path d="M211.4 314.4L214.3 314.1L216.0 313.4L213.1 314.2Z" fill="#fef900"/><path d="M222.4 369.6L225.3 376.8L227.0 376.1L224.1 368.9Z" fill="#7703fa"/><path d="M256.8 375.1L259.6 369.6L261.4 373.2L258.5 377.7Z" fill="#7302f5"/><path d="M315.2 376.9L318.0 374.1L319.7 367.1L316.9 370.3Z" fill="#7a03fd"/><path d="M236.8 388.6L239.7 386.5L241.4 385.8L238.5 387.9Z" fill="#2b002e"/><path d="M316.2 351.2L319.1 348.9L320.8 340.6L317.9 342.6Z" fill="#c23100"/><path d="M305.5 389.1L308.3 390.1L310.0 388.9L307.2 388.9Z" fill="#100007"/><path d="M310.0 388.9L312.9 388.1L314.6 384.7L311.7 386.3Z" fill="#2f0036"/><path d="M317.3 322.3L320.2 321.8L321.9 317.0L319.0 317.1Z" fill="#f5c900"/><path d="M232.2 389.4L235.1 389.5L236.8 388.6L233.9 388.7Z" fill="#120008"/><path d="M221.3 360.7L224.1 368.9L225.8 367.6L223.0 359.4Z" fill="#9309dd"/><path d="M223.6 377.2L226.5 383.1L228.2 382.6L225.3 376.8Z" fill="#5a01b5"/><path d="M373.5 364.4L376.4 370.3L378.1 374.4L375.2 369.1Z" fill="#8405fe"/><path d="M289.4 375.3L292.3 377.2L294.0 381.8L291.1 380.4Z" fill="#6101ca"/><path d="M326.4 314.3L329.3 314.6L331.0 314.6L328.1 313.8Z" fill="#fefb00"/><path d="M221.2 326.9L224.0 333.9L225.7 331.0L222.9 324.5Z" fill="#e48100"/><path d="M316.8 335.8L319.6 334.4L321.3 327.1L318.5 328.2Z" fill="#e07400"/><path d="M241.4 385.8L244.2 381.7L245.9 381.5L243.1 385.3Z" fill="#48007b"/><path d="M276.2 369.2L279.1 367.7L280.8 373.9L277.9 375.0Z" fill="#7d04ff"/><path d="M220.0 319.3L222.9 324.5L224.6 321.9L221.7 317.3Z" fill="#f3bf00"/><path d="M363.7 346.3L366.6 351.9L368.3 357.5L365.5 352.0Z" fill="#b52000"/><path d="M220.6 338.8L223.5 347.1L225.2 344.6L222.3 336.5Z" fill="#cb4000"/><path d="M316.9 370.3L319.7 367.1L321.4 359.5L318.6 362.7Z" fill="#9209e0"/><path d="M317.4 357.4L320.3 354.6L322.0 346.4L319.1 348.9Z" fill="#b52000"/><path d="M292.3 377.2L295.2 379.7L296.9 383.7L294.0 381.8Z" fill="#5900b1"/><path d="M321.9 317.0L324.7 316.8L326.4 314.3L323.6 314.0Z" fill="#fdf100"/><path d="M214.3 314.1L217.1 315.8L218.8 314.4L216.0 313.4Z" fill="#fef900"/><path d="M220.1 350.8L223.0 359.4L224.7 357.8L221.8 349.2Z" fill="#ae1a34"/><path d="M268.8 369.0L271.7 365.5L273.4 371.4L270.5 374.1Z" fill="#8205fe"/><path d="M295.2 379.7L298.0 382.5L299.7 385.6L296.9 383.7Z" fill="#4e008e"/><path d="M217.1 315.8L220.0 319.3L221.7 317.3L218.8 314.4Z" fill="#fae400"/><path d="M308.3 390.1L311.2 390.3L312.9 388.1L310.0 388.9Z" fill="#19000f"/><path d="M227.6 387.6L230.5 390.0L232.2 389.4L229.3 387.2Z" fill="#22001c"/><path d="M318.5 328.2L321.3 327.1L323.0 321.1L320.2 321.8Z" fill="#eda500"/><path d="M317.9 342.6L320.8 340.6L322.5 332.8L319.6 334.4Z" fill="#d45500"/><path d="M224.8 383.2L227.6 387.6L229.3 387.2L226.5 383.1Z" fill="#3f0061"/><path d="M298.0 382.5L300.9 385.3L302.6 387.5L299.7 385.6Z" fill="#410064"/><path d="M329.3 314.6L332.2 315.1L333.9 315.6L331.0 314.6Z" fill="#fef900"/><path d="M320.2 321.8L323.0 321.1L324.7 316.8L321.9 317.0Z" fill="#f7d100"/><path d="M370.7 358.4L373.5 364.4L375.2 369.1L372.4 363.5Z" fill="#970bcf"/><path d="M245.9 381.5L248.8 376.1L250.5 376.9L247.6 381.8Z" fill="#6101ca"/><path d="M219.5 329.2L222.3 336.5L224.0 333.9L221.2 326.9Z" fill="#e07400"/><path d="M300.9 385.3L303.8 387.9L305.5 389.1L302.6 387.5Z" fill="#31003a"/><path d="M314.6 384.7L317.5 382.2L319.2 376.9L316.3 380.0Z" fill="#5900b2"/><path d="M209.7 314.8L212.6 315.0L214.3 314.1L211.4 314.4Z" fill="#fefb00"/><path d="M235.1 389.5L238.0 387.6L239.7 386.5L236.8 388.6Z" fill="#2a002b"/><path d="M360.9 341.0L363.7 346.3L365.5 352.0L362.6 346.7Z" fill="#c23100"/><path d="M220.7 369.9L223.6 377.2L225.3 376.8L222.4 369.6Z" fill="#7803fb"/><path d="M219.6 361.4L222.4 369.6L224.1 368.9L221.3 360.7Z" fill="#9209e0"/><path d="M218.3 321.2L221.2 326.9L222.9 324.5L220.0 319.3Z" fill="#f0b100"/><path d="M230.5 390.0L233.4 390.5L235.1 389.5L232.2 389.4Z" fill="#110007"/><path d="M218.9 340.7L221.8 349.2L223.5 347.1L220.6 338.8Z" fill="#c73a00"/><path d="M316.3 380.0L319.2 376.9L320.9 370.6L318.0 374.1Z" fill="#7102f1"/><path d="M312.9 388.1L315.8 386.5L317.5 382.2L314.6 384.7Z" fill="#420067"/><path d="M318.6 362.7L321.4 359.5L323.1 351.5L320.3 354.6Z" fill="#a9165f"/><path d="M324.7 316.8L327.6 316.6L329.3 314.6L326.4 314.3Z" fill="#fdf500"/><path d="M303.8 387.9L306.6 390.0L308.3 390.1L305.5 389.1Z" fill="#200019"/><path d="M319.1 348.9L322.0 346.4L323.7 338.3L320.8 340.6Z" fill="#c93c00"/><path d="M279.1 367.7L282.0 367.1L283.7 373.6L280.8 373.9Z" fill="#8205fe"/><path d="M221.9 377.1L224.8 383.2L226.5 383.1L223.6 377.2Z" fill="#5d01bf"/><path d="M332.2 315.1L335.1 315.7L336.8 316.9L333.9 315.6Z" fill="#fdf400"/><path d="M319.6 334.4L322.5 332.8L324.2 325.9L321.3 327.1Z" fill="#e48100"/><path d="M218.4 352.0L221.3 360.7L223.0 359.4L220.1 350.8Z" fill="#ac1844"/><path d="M264.2 368.4L267.1 363.6L268.8 369.0L265.9 372.9Z" fill="#8906f7"/><path d="M239.7 386.5L242.5 382.5L244.2 381.7L241.4 385.8Z" fill="#4a0080"/><path d="M212.6 315.0L215.4 317.2L217.1 315.8L214.3 314.1Z" fill="#fdf500"/><path d="M318.0 374.1L320.9 370.6L322.6 363.5L319.7 367.1Z" fill="#8906f8"/><path d="M215.4 317.2L218.3 321.2L220.0 319.3L217.1 315.8Z" fill="#f9db00"/><path d="M250.5 376.9L253.4 370.7L255.1 372.6L252.2 378.1Z" fill="#7502f7"/><path d="M358.0 336.1L360.9 341.0L362.6 346.7L359.7 341.7Z" fill="#ce4600"/><path d="M311.2 390.3L314.1 389.5L315.8 386.5L312.9 388.1Z" fill="#2b002c"/><path d="M367.8 352.3L370.7 358.4L372.4 363.5L369.5 357.7Z" fill="#a81567"/><path d="M217.8 331.2L220.6 338.8L222.3 336.5L219.5 329.2Z" fill="#dc6a00"/><path d="M323.0 321.1L325.9 320.4L327.6 316.6L324.7 316.8Z" fill="#f9db00"/><path d="M306.6 390.0L309.5 391.3L311.2 390.3L308.3 390.1Z" fill="#120008"/><path d="M321.3 327.1L324.2 325.9L325.9 320.4L323.0 321.1Z" fill="#f0b100"/><path d="M335.1 315.7L337.9 316.7L339.6 318.5L336.8 316.9Z" fill="#fcec00"/><path d="M374.7 365.9L377.6 372.0L379.3 375.8L376.4 370.3Z" fill="#8305fe"/><path d="M216.6 323.1L219.5 329.2L221.2 326.9L218.3 321.2Z" fill="#eda500"/><path d="M225.9 387.6L228.8 390.5L230.5 390.0L227.6 387.6Z" fill="#270026"/><path d="M255.1 372.6L257.9 366.4L259.6 369.6L256.8 375.1Z" fill="#8205fe"/><path d="M259.6 369.6L262.5 363.9L264.2 368.4L261.4 373.2Z" fill="#8906f7"/><path d="M327.6 316.6L330.5 316.4L332.2 315.1L329.3 314.6Z" fill="#fef900"/><path d="M320.3 354.6L323.1 351.5L324.8 343.5L322.0 346.4Z" fill="#be2b00"/><path d="M217.2 342.3L220.1 350.8L221.8 349.2L218.9 340.7Z" fill="#c43500"/><path d="M271.7 365.5L274.5 362.6L276.2 369.2L273.4 371.4Z" fill="#8f08eb"/><path d="M320.8 340.6L323.7 338.3L325.4 330.9L322.5 332.8Z" fill="#da6300"/><path d="M233.4 390.5L236.3 389.0L238.0 387.6L235.1 389.5Z" fill="#260024"/><path d="M355.1 331.7L358.0 336.1L359.7 341.7L356.8 337.0Z" fill="#d85e00"/><path d="M223.1 382.9L225.9 387.6L227.6 387.6L224.8 383.2Z" fill="#450071"/><path d="M282.0 367.1L284.8 367.6L286.5 374.1L283.7 373.6Z" fill="#8405fd"/><path d="M319.7 367.1L322.6 363.5L324.3 355.9L321.4 359.5Z" fill="#9f0fa3"/><path d="M208.0 315.3L210.9 316.0L212.6 315.0L209.7 314.8Z" fill="#fefc00"/><path d="M228.8 390.5L231.7 391.5L233.4 390.5L230.5 390.0Z" fill="#110007"/><path d="M337.9 316.7L340.8 318.0L342.5 320.4L339.6 318.5Z" fill="#fae100"/><path d="M217.9 361.7L220.7 369.9L222.4 369.6L219.6 361.4Z" fill="#9309dd"/><path d="M244.2 381.7L247.1 376.1L248.8 376.1L245.9 381.5Z" fill="#6601d7"/><path d="M219.0 369.8L221.9 377.1L223.6 377.2L220.7 369.9Z" fill="#7a03fd"/><path d="M364.9 346.4L367.8 352.3L369.5 357.7L366.6 351.9Z" fill="#b82300"/><path d="M352.3 327.9L355.1 331.7L356.8 337.0L354.0 332.7Z" fill="#e17800"/><path d="M309.5 391.3L312.4 391.5L314.1 389.5L311.2 390.3Z" fill="#17000d"/><path d="M213.7 318.6L216.6 323.1L218.3 321.2L215.4 317.2Z" fill="#f7d100"/><path d="M216.1 332.9L218.9 340.7L220.6 338.8L217.8 331.2Z" fill="#d96200"/><path d="M340.8 318.0L343.7 319.7L345.4 322.8L342.5 320.4Z" fill="#f7d200"/><path d="M216.7 352.8L219.6 361.4L221.3 360.7L218.4 352.0Z" fill="#ac184a"/><path d="M210.9 316.0L213.7 318.6L215.4 317.2L212.6 315.0Z" fill="#fdf100"/><path d="M238.0 387.6L240.8 383.8L242.5 382.5L239.7 386.5Z" fill="#48007b"/><path d="M322.5 332.8L325.4 330.9L327.1 324.6L324.2 325.9Z" fill="#e89100"/><path d="M317.5 382.2L320.4 378.9L322.1 373.1L319.2 376.9Z" fill="#6c01e6"/><path d="M315.8 386.5L318.7 383.8L320.4 378.9L317.5 382.2Z" fill="#5500a5"/><path d="M325.9 320.4L328.8 319.7L330.5 316.4L327.6 316.6Z" fill="#fae400"/><path d="M284.8 367.6L287.7 369.0L289.4 375.3L286.5 374.1Z" fill="#8205fe"/><path d="M371.8 359.6L374.7 365.9L376.4 370.3L373.5 364.4Z" fill="#970bcf"/><path d="M349.4 324.6L352.3 327.9L354.0 332.7L351.1 328.9Z" fill="#e89200"/><path d="M330.5 316.4L333.3 316.5L335.1 315.7L332.2 315.1Z" fill="#fefc00"/><path d="M214.9 324.8L217.8 331.2L219.5 329.2L216.6 323.1Z" fill="#eb9a00"/><path d="M343.7 319.7L346.5 321.9L348.2 325.6L345.4 322.8Z" fill="#f3c000"/><path d="M220.2 376.7L223.1 382.9L224.8 383.2L221.9 377.1Z" fill="#6201cd"/><path d="M346.5 321.9L349.4 324.6L351.1 328.9L348.2 325.6Z" fill="#eeaa00"/><path d="M322.0 346.4L324.8 343.5L326.5 335.8L323.7 338.3Z" fill="#d04b00"/><path d="M324.2 325.9L327.1 324.6L328.8 319.7L325.9 320.4Z" fill="#f3bf00"/><path d="M321.4 359.5L324.3 355.9L326.0 348.0L323.1 351.5Z" fill="#b42002"/><path d="M319.2 376.9L322.1 373.1L323.8 366.5L320.9 370.6Z" fill="#8205fe"/><path d="M314.1 389.5L316.9 387.7L318.7 383.8L315.8 386.5Z" fill="#3f0061"/><path d="M299.2 382.0L302.1 385.6L303.8 387.9L300.9 385.3Z" fill="#4a0080"/><path d="M302.1 385.6L304.9 388.8L306.6 390.0L303.8 387.9Z" fill="#360048"/><path d="M215.5 343.5L218.4 352.0L220.1 350.8L217.2 342.3Z" fill="#c33300"/><path d="M287.7 369.0L290.6 371.4L292.3 377.2L289.4 375.3Z" fill="#7d04ff"/><path d="M296.3 378.2L299.2 382.0L300.9 385.3L298.0 382.5Z" fill="#5b01b6"/><path d="M293.5 374.5L296.3 378.2L298.0 382.5L295.2 379.7Z" fill="#6901e0"/><path d="M290.6 371.4L293.5 374.5L295.2 379.7L292.3 377.2Z" fill="#7502f7"/><path d="M231.7 391.5L234.5 390.5L236.3 389.0L233.4 390.5Z" fill="#200019"/><path d="M304.9 388.8L307.8 391.2L309.5 391.3L306.6 390.0Z" fill="#22001d"/><path d="M362.0 340.9L364.9 346.4L366.6 351.9L363.7 346.3Z" fill="#c53700"/><path d="M248.8 376.1L251.7 369.6L253.4 370.7L250.5 376.9Z" fill="#7d04ff"/><path d="M224.2 387.3L227.1 390.7L228.8 390.5L225.9 387.6Z" fill="#2f0036"/><path d="M206.3 316.0L209.2 317.0L210.9 316.0L208.0 315.3Z" fill="#fefc00"/><path d="M320.9 370.6L323.8 366.5L325.5 359.3L322.6 363.5Z" fill="#980bca"/><path d="M333.3 316.5L336.2 316.7L337.9 316.7L335.1 315.7Z" fill="#fefb00"/><path d="M267.1 363.6L270.0 359.3L271.7 365.5L268.8 369.0Z" fill="#990cc3"/><path d="M212.0 319.9L214.9 324.8L216.6 323.1L213.7 318.6Z" fill="#f5c900"/><path d="M214.4 334.4L217.2 342.3L218.9 340.7L216.1 332.9Z" fill="#d75c00"/><path d="M274.5 362.6L277.4 360.7L279.1 367.7L276.2 369.2Z" fill="#980bcb"/><path d="M323.7 338.3L326.5 335.8L328.2 329.0L325.4 330.9Z" fill="#e07400"/><path d="M227.1 390.7L230.0 392.3L231.7 391.5L228.8 390.5Z" fill="#15000b"/><path d="M312.4 391.5L315.2 390.6L316.9 387.7L314.1 389.5Z" fill="#2b002c"/><path d="M328.8 319.7L331.6 319.0L333.3 316.5L330.5 316.4Z" fill="#fcee00"/><path d="M221.4 382.2L224.2 387.3L225.9 387.6L223.1 382.9Z" fill="#4c0088"/><path d="M369.0 353.2L371.8 359.6L373.5 364.4L370.7 358.4Z" fill="#a91561"/><path d="M307.8 391.2L310.7 392.5L312.4 391.5L309.5 391.3Z" fill="#120008"/><path d="M242.5 382.5L245.4 376.9L247.1 376.1L244.2 381.7Z" fill="#6801dc"/><path d="M236.3 389.0L239.1 385.6L240.8 383.8L238.0 387.6Z" fill="#44006d"/><path d="M213.2 326.3L216.1 332.9L217.8 331.2L214.9 324.8Z" fill="#e89200"/><path d="M209.2 317.0L212.0 319.9L213.7 318.6L210.9 316.0Z" fill="#fcec00"/><path d="M323.1 351.5L326.0 348.0L327.7 340.3L324.8 343.5Z" fill="#c73a00"/><path d="M216.2 361.6L219.0 369.8L220.7 369.9L217.9 361.7Z" fill="#950ad4"/><path d="M215.0 353.1L217.9 361.7L219.6 361.4L216.7 352.8Z" fill="#ac1844"/><path d="M217.3 369.2L220.2 376.7L221.9 377.1L219.0 369.8Z" fill="#7f04ff"/><path d="M325.4 330.9L328.2 329.0L329.9 323.3L327.1 324.6Z" fill="#eda200"/><path d="M359.2 335.8L362.0 340.9L363.7 346.3L360.9 341.0Z" fill="#d24f00"/><path d="M327.1 324.6L329.9 323.3L331.6 319.0L328.8 319.7Z" fill="#f6ce00"/><path d="M336.2 316.7L339.1 317.3L340.8 318.0L337.9 316.7Z" fill="#fef800"/><path d="M322.6 363.5L325.5 359.3L327.2 351.8L324.3 355.9Z" fill="#ac1844"/><path d="M253.4 370.7L256.2 363.9L257.9 366.4L255.1 372.6Z" fill="#8f08eb"/><path d="M213.8 344.2L216.7 352.8L218.4 352.0L215.5 343.5Z" fill="#c23200"/><path d="M230.0 392.3L232.8 392.0L234.5 390.5L231.7 391.5Z" fill="#18000e"/><path d="M262.5 363.9L265.4 358.3L267.1 363.6L264.2 368.4Z" fill="#9d0eb0"/><path d="M218.5 375.7L221.4 382.2L223.1 382.9L220.2 376.7Z" fill="#6901df"/><path d="M310.7 392.5L313.5 392.5L315.2 390.6L312.4 391.5Z" fill="#19000f"/><path d="M324.8 343.5L327.7 340.3L329.4 333.2L326.5 335.8Z" fill="#d85e00"/><path d="M318.7 383.8L321.5 380.2L323.2 374.8L320.4 378.9Z" fill="#6a01e2"/><path d="M257.9 366.4L260.8 359.9L262.5 363.9L259.6 369.6Z" fill="#990cc3"/><path d="M210.3 321.2L213.2 326.3L214.9 324.8L212.0 319.9Z" fill="#f4c200"/><path d="M373.0 361.3L375.9 367.9L377.6 372.0L374.7 365.9Z" fill="#950ad6"/><path d="M356.3 331.3L359.2 335.8L360.9 341.0L358.0 336.1Z" fill="#dc6a00"/><path d="M331.6 319.0L334.5 318.5L336.2 316.7L333.3 316.5Z" fill="#fdf500"/><path d="M212.7 335.5L215.5 343.5L217.2 342.3L214.4 334.4Z" fill="#d65900"/><path d="M366.1 347.1L369.0 353.2L370.7 358.4L367.8 352.3Z" fill="#b92500"/><path d="M339.1 317.3L342.0 318.2L343.7 319.7L340.8 318.0Z" fill="#fcf000"/><path d="M316.9 387.7L319.8 384.7L321.5 380.2L318.7 383.8Z" fill="#5500a5"/><path d="M204.6 316.7L207.5 317.9L209.2 317.0L206.3 316.0Z" fill="#fefb00"/><path d="M320.4 378.9L323.2 374.8L324.9 368.7L322.1 373.1Z" fill="#7f04ff"/><path d="M234.5 390.5L237.4 387.7L239.1 385.6L236.3 389.0Z" fill="#3c0058"/><path d="M277.4 360.7L280.3 359.9L282.0 367.1L279.1 367.7Z" fill="#9d0eb0"/><path d="M211.5 327.6L214.4 334.4L216.1 332.9L213.2 326.3Z" fill="#e78c00"/><path d="M240.8 383.8L243.7 378.4L245.4 376.9L242.5 382.5Z" fill="#6601d7"/><path d="M324.3 355.9L327.2 351.8L328.9 344.3L326.0 348.0Z" fill="#bf2e00"/><path d="M207.5 317.9L210.3 321.2L212.0 319.9L209.2 317.0Z" fill="#fbe800"/><path d="M222.5 386.6L225.4 390.5L227.1 390.7L224.2 387.3Z" fill="#39004f"/><path d="M225.4 390.5L228.3 392.8L230.0 392.3L227.1 390.7Z" fill="#1e0016"/><path d="M303.2 386.8L306.1 390.3L307.8 391.2L304.9 388.8Z" fill="#360048"/><path d="M247.1 376.1L250.0 369.3L251.7 369.6L248.8 376.1Z" fill="#8205fe"/><path d="M353.4 327.5L356.3 331.3L358.0 336.1L355.1 331.7Z" fill="#e58600"/><path d="M342.0 318.2L344.8 319.7L346.5 321.9L343.7 319.7Z" fill="#fae300"/><path d="M322.1 373.1L324.9 368.7L326.6 361.9L323.8 366.5Z" fill="#9309dd"/><path d="M315.2 390.6L318.1 388.3L319.8 384.7L316.9 387.7Z" fill="#420067"/><path d="M326.5 335.8L329.4 333.2L331.1 327.0L328.2 329.0Z" fill="#e68900"/><path d="M300.4 382.6L303.2 386.8L304.9 388.8L302.1 385.6Z" fill="#4d0089"/><path d="M306.1 390.3L309.0 392.7L310.7 392.5L307.8 391.2Z" fill="#200019"/><path d="M329.9 323.3L332.8 322.0L334.5 318.5L331.6 319.0Z" fill="#f9dc00"/><path d="M350.6 324.2L353.4 327.5L355.1 331.7L352.3 327.9Z" fill="#eca200"/><path d="M344.8 319.7L347.7 321.6L349.4 324.6L346.5 321.9Z" fill="#f7d200"/><path d="M328.2 329.0L331.1 327.0L332.8 322.0L329.9 323.3Z" fill="#f1b500"/><path d="M214.5 361.0L217.3 369.2L219.0 369.8L216.2 361.6Z" fill="#990cc3"/><path d="M219.7 381.1L222.5 386.6L224.2 387.3L221.4 382.2Z" fill="#5500a5"/><path d="M347.7 321.6L350.6 324.2L352.3 327.9L349.4 324.6Z" fill="#f2bc00"/><path d="M213.3 353.0L216.2 361.6L217.9 361.7L215.0 353.1Z" fill="#ae1a34"/><path d="M270.0 359.3L272.8 355.8L274.5 362.6L271.7 365.5Z" fill="#a61376"/><path d="M297.5 377.8L300.4 382.6L302.1 385.6L299.2 382.0Z" fill="#6101ca"/><path d="M334.5 318.5L337.4 318.3L339.1 317.3L336.2 316.7Z" fill="#fefb00"/><path d="M363.2 341.3L366.1 347.1L367.8 352.3L364.9 346.4Z" fill="#c73a00"/><path d="M228.3 392.8L231.1 393.3L232.8 392.0L230.0 392.3Z" fill="#110007"/><path d="M212.1 344.6L215.0 353.1L216.7 352.8L213.8 344.2Z" fill="#c33300"/><path d="M323.8 366.5L326.6 361.9L328.3 354.8L325.5 359.3Z" fill="#a7146f"/><path d="M370.1 354.7L373.0 361.3L374.7 365.9L371.8 359.6Z" fill="#a81567"/><path d="M326.0 348.0L328.9 344.3L330.6 337.1L327.7 340.3Z" fill="#d14c00"/><path d="M280.3 359.9L283.1 360.3L284.8 367.6L282.0 367.1Z" fill="#9f0fa6"/><path d="M232.8 392.0L235.7 390.0L237.4 387.7L234.5 390.5Z" fill="#32003e"/><path d="M215.6 368.1L218.5 375.7L220.2 376.7L217.3 369.2Z" fill="#8505fd"/><path d="M309.0 392.7L311.8 393.7L313.5 392.5L310.7 392.5Z" fill="#100007"/><path d="M208.6 322.3L211.5 327.6L213.2 326.3L210.3 321.2Z" fill="#f3bd00"/><path d="M313.5 392.5L316.4 391.1L318.1 388.3L315.2 390.6Z" fill="#2f0036"/><path d="M294.6 373.1L297.5 377.8L299.2 382.0L296.3 378.2Z" fill="#7302f5"/><path d="M211.0 336.2L213.8 344.2L215.5 343.5L212.7 335.5Z" fill="#d65800"/><path d="M239.1 385.6L242.0 380.7L243.7 378.4L240.8 383.8Z" fill="#6101ca"/><path d="M202.9 317.5L205.8 318.9L207.5 317.9L204.6 316.7Z" fill="#fefa00"/><path d="M209.8 328.6L212.7 335.5L214.4 334.4L211.5 327.6Z" fill="#e68900"/><path d="M205.8 318.9L208.6 322.3L210.3 321.2L207.5 317.9Z" fill="#fae400"/><path d="M291.8 368.6L294.6 373.1L296.3 378.2L293.5 374.5Z" fill="#8205fe"/><path d="M251.7 369.6L254.5 362.2L256.2 363.9L253.4 370.7Z" fill="#980bcb"/><path d="M283.1 360.3L286.0 362.0L287.7 369.0L284.8 367.6Z" fill="#9d0eb0"/><path d="M337.4 318.3L340.3 318.4L342.0 318.2L339.1 317.3Z" fill="#fefc00"/><path d="M327.7 340.3L330.6 337.1L332.3 330.6L329.4 333.2Z" fill="#df7300"/><path d="M325.5 359.3L328.3 354.8L330.0 347.6L327.2 351.8Z" fill="#ba2600"/><path d="M216.8 374.3L219.7 381.1L221.4 382.2L218.5 375.7Z" fill="#7102f1"/><path d="M332.8 322.0L335.7 320.9L337.4 318.3L334.5 318.5Z" fill="#fbea00"/><path d="M360.3 336.1L363.2 341.3L364.9 346.4L362.0 340.9Z" fill="#d45500"/><path d="M245.4 376.9L248.3 370.1L250.0 369.3L247.1 376.1Z" fill="#8405fd"/><path d="M288.9 364.8L291.8 368.6L293.5 374.5L290.6 371.4Z" fill="#8f08eb"/><path d="M286.0 362.0L288.9 364.8L290.6 371.4L287.7 369.0Z" fill="#980bcb"/><path d="M223.7 389.8L226.6 392.8L228.3 392.8L225.4 390.5Z" fill="#29002a"/><path d="M231.1 393.3L234.0 392.2L235.7 390.0L232.8 392.0Z" fill="#260024"/><path d="M329.4 333.2L332.3 330.6L334.0 325.1L331.1 327.0Z" fill="#ec9f00"/><path d="M311.8 393.7L314.7 393.2L316.4 391.1L313.5 392.5Z" fill="#1f0017"/><path d="M367.2 348.3L370.1 354.7L371.8 359.6L369.0 353.2Z" fill="#b92500"/><path d="M220.8 385.3L223.7 389.8L225.4 390.5L222.5 386.6Z" fill="#450071"/><path d="M331.1 327.0L334.0 325.1L335.7 320.9L332.8 322.0Z" fill="#f5c900"/><path d="M319.8 384.7L322.7 380.6L324.4 375.6L321.5 380.2Z" fill="#6c01e6"/><path d="M265.4 358.3L268.3 353.3L270.0 359.3L267.1 363.6Z" fill="#ad193c"/><path d="M321.5 380.2L324.4 375.6L326.1 369.9L323.2 374.8Z" fill="#7f04ff"/><path d="M237.4 387.7L240.3 383.5L242.0 380.7L239.1 385.6Z" fill="#5900b1"/><path d="M226.6 392.8L229.4 394.2L231.1 393.3L228.3 392.8Z" fill="#130009"/><path d="M304.4 389.0L307.3 392.4L309.0 392.7L306.1 390.3Z" fill="#31003a"/><path d="M340.3 318.4L343.1 319.0L344.8 319.7L342.0 318.2Z" fill="#fef800"/><path d="M206.9 323.2L209.8 328.6L211.5 327.6L208.6 322.3Z" fill="#f2ba00"/><path d="M318.1 388.3L321.0 384.8L322.7 380.6L319.8 384.7Z" fill="#5900b2"/><path d="M327.2 351.8L330.0 347.6L331.7 340.5L328.9 344.3Z" fill="#cb4000"/><path d="M323.2 374.8L326.1 369.9L327.8 363.6L324.9 368.7Z" fill="#9209e2"/><path d="M357.5 331.4L360.3 336.1L362.0 340.9L359.2 335.8Z" fill="#df7200"/><path d="M211.6 352.4L214.5 361.0L216.2 361.6L213.3 353.0Z" fill="#b21d18"/><path d="M301.5 384.4L304.4 389.0L306.1 390.3L303.2 386.8Z" fill="#4a0080"/><path d="M256.2 363.9L259.1 356.7L260.8 359.9L257.9 366.4Z" fill="#a61376"/><path d="M210.4 344.5L213.3 353.0L215.0 353.1L212.1 344.6Z" fill="#c43500"/><path d="M272.8 355.8L275.7 353.4L277.4 360.7L274.5 362.6Z" fill="#af1b2c"/><path d="M307.3 392.4L310.1 394.3L311.8 393.7L309.0 392.7Z" fill="#19000f"/><path d="M212.8 359.9L215.6 368.1L217.3 369.2L214.5 361.0Z" fill="#9e0fa7"/><path d="M209.3 336.7L212.1 344.6L213.8 344.2L211.0 336.2Z" fill="#d65900"/><path d="M208.1 329.4L211.0 336.2L212.7 335.5L209.8 328.6Z" fill="#e58700"/><path d="M201.2 318.2L204.1 319.7L205.8 318.9L202.9 317.5Z" fill="#fef900"/><path d="M260.8 359.9L263.7 353.6L265.4 358.3L262.5 363.9Z" fill="#ad193c"/><path d="M218.0 379.4L220.8 385.3L222.5 386.6L219.7 381.1Z" fill="#6001c7"/><path d="M204.1 319.7L206.9 323.2L208.6 322.3L205.8 318.9Z" fill="#fae200"/><path d="M335.7 320.9L338.6 320.2L340.3 318.4L337.4 318.3Z" fill="#fdf400"/><path d="M316.4 391.1L319.3 388.3L321.0 384.8L318.1 388.3Z" fill="#48007a"/><path d="M324.9 368.7L327.8 363.6L329.5 356.9L326.6 361.9Z" fill="#a41283"/><path d="M343.1 319.0L346.0 320.1L347.7 321.6L344.8 319.7Z" fill="#fcee00"/><path d="M371.3 356.7L374.2 363.6L375.9 367.9L373.0 361.3Z" fill="#a61379"/><path d="M354.6 327.5L357.5 331.4L359.2 335.8L356.3 331.3Z" fill="#e89100"/><path d="M235.7 390.0L238.6 386.6L240.3 383.5L237.4 387.7Z" fill="#4e008e"/><path d="M298.7 379.0L301.5 384.4L303.2 386.8L300.4 382.6Z" fill="#6101ca"/><path d="M213.9 366.6L216.8 374.3L218.5 375.7L215.6 368.1Z" fill="#8c07f2"/><path d="M328.9 344.3L331.7 340.5L333.4 333.9L330.6 337.1Z" fill="#da6300"/><path d="M243.7 378.4L246.6 371.8L248.3 370.1L245.4 376.9Z" fill="#8205fe"/><path d="M364.4 342.3L367.2 348.3L369.0 353.2L366.1 347.1Z" fill="#c83c00"/><path d="M229.4 394.2L232.3 394.1L234.0 392.2L231.1 393.3Z" fill="#19000f"/><path d="M346.0 320.1L348.9 321.9L350.6 324.2L347.7 321.6Z" fill="#f9df00"/><path d="M351.7 324.3L354.6 327.5L356.3 331.3L353.4 327.5Z" fill="#efae00"/><path d="M310.1 394.3L313.0 394.7L314.7 393.2L311.8 393.7Z" fill="#130009"/><path d="M348.9 321.9L351.7 324.3L353.4 327.5L350.6 324.2Z" fill="#f5c900"/><path d="M326.6 361.9L329.5 356.9L331.2 350.0L328.3 354.8Z" fill="#b62200"/><path d="M334.0 325.1L336.8 323.5L338.6 320.2L335.7 320.9Z" fill="#f9db00"/><path d="M330.6 337.1L333.4 333.9L335.1 328.2L332.3 330.6Z" fill="#e78c00"/><path d="M250.0 369.3L252.8 361.8L254.5 362.2L251.7 369.6Z" fill="#9d0eb0"/><path d="M314.7 393.2L317.6 391.1L319.3 388.3L316.4 391.1Z" fill="#38004c"/><path d="M295.8 373.3L298.7 379.0L300.4 382.6L297.5 377.8Z" fill="#7703f9"/><path d="M332.3 330.6L335.1 328.2L336.8 323.5L334.0 325.1Z" fill="#f1b600"/><path d="M205.2 324.0L208.1 329.4L209.8 328.6L206.9 323.2Z" fill="#f2b900"/><path d="M234.0 392.2L236.9 389.7L238.6 386.6L235.7 390.0Z" fill="#410064"/><path d="M222.0 388.5L224.9 392.3L226.6 392.8L223.7 389.8Z" fill="#38004c"/><path d="M338.6 320.2L341.4 319.8L343.1 319.0L340.3 318.4Z" fill="#fefb00"/><path d="M215.1 372.4L218.0 379.4L219.7 381.1L216.8 374.3Z" fill="#7b03fe"/><path d="M224.9 392.3L227.7 394.6L229.4 394.2L226.6 392.8Z" fill="#1f0017"/><path d="M275.7 353.4L278.6 352.4L280.3 359.9L277.4 360.7Z" fill="#b52000"/><path d="M199.5 319.0L202.3 320.5L204.1 319.7L201.2 318.2Z" fill="#fef900"/><path d="M242.0 380.7L244.9 374.5L246.6 371.8L243.7 378.4Z" fill="#7d04ff"/><path d="M328.3 354.8L331.2 350.0L332.9 343.2L330.0 347.6Z" fill="#c73900"/><path d="M361.5 336.8L364.4 342.3L366.1 347.1L363.2 341.3Z" fill="#d55800"/><path d="M368.4 350.0L371.3 356.7L373.0 361.3L370.1 354.7Z" fill="#b82300"/><path d="M206.4 329.9L209.3 336.7L211.0 336.2L208.1 329.4Z" fill="#e68900"/><path d="M219.1 383.5L222.0 388.5L223.7 389.8L220.8 385.3Z" fill="#52009b"/><path d="M202.3 320.5L205.2 324.0L206.9 323.2L204.1 319.7Z" fill="#fae200"/><path d="M305.6 391.7L308.4 394.6L310.1 394.3L307.3 392.4Z" fill="#260024"/><path d="M207.6 336.8L210.4 344.5L212.1 344.6L209.3 336.7Z" fill="#d75c00"/><path d="M208.7 344.1L211.6 352.4L213.3 353.0L210.4 344.5Z" fill="#c73a00"/><path d="M302.7 387.3L305.6 391.7L307.3 392.4L304.4 389.0Z" fill="#410064"/><path d="M209.9 351.5L212.8 359.9L214.5 361.0L211.6 352.4Z" fill="#b62200"/><path d="M292.9 367.6L295.8 373.3L297.5 377.8L294.6 373.1Z" fill="#8906f7"/><path d="M268.3 353.3L271.1 349.3L272.8 355.8L270.0 359.3Z" fill="#ba2700"/><path d="M227.7 394.6L230.6 395.4L232.3 394.1L229.4 394.2Z" fill="#100007"/><path d="M313.0 394.7L315.9 393.3L317.6 391.1L314.7 393.2Z" fill="#29002a"/><path d="M232.3 394.1L235.2 392.6L236.9 389.7L234.0 392.2Z" fill="#31003a"/><path d="M322.7 380.6L325.6 375.4L327.3 370.2L324.4 375.6Z" fill="#8205fe"/><path d="M341.4 319.8L344.3 320.0L346.0 320.1L343.1 319.0Z" fill="#fefb00"/><path d="M308.4 394.6L311.3 395.7L313.0 394.7L310.1 394.3Z" fill="#110007"/><path d="M330.0 347.6L332.9 343.2L334.6 336.7L331.7 340.5Z" fill="#d65800"/><path d="M211.1 358.4L213.9 366.6L215.6 368.1L212.8 359.9Z" fill="#a5137e"/><path d="M321.0 384.8L323.9 380.1L325.6 375.4L322.7 380.6Z" fill="#7102f1"/><path d="M324.4 375.6L327.3 370.2L329.0 364.4L326.1 369.9Z" fill="#9309dd"/><path d="M336.8 323.5L339.7 322.2L341.4 319.8L338.6 320.2Z" fill="#fceb00"/><path d="M299.8 381.8L302.7 387.3L304.4 389.0L301.5 384.4Z" fill="#5b01b6"/><path d="M240.3 383.5L243.2 378.0L244.9 374.5L242.0 380.7Z" fill="#7502f7"/><path d="M358.6 332.0L361.5 336.8L363.2 341.3L360.3 336.1Z" fill="#e17700"/><path d="M254.5 362.2L257.4 354.7L259.1 356.7L256.2 363.9Z" fill="#af1b2c"/><path d="M216.3 377.2L219.1 383.5L220.8 385.3L218.0 379.4Z" fill="#6d02e8"/><path d="M278.6 352.4L281.4 352.9L283.1 360.3L280.3 359.9Z" fill="#b72200"/><path d="M319.3 388.3L322.2 384.1L323.9 380.1L321.0 384.8Z" fill="#6101ca"/><path d="M326.1 369.9L329.0 364.4L330.7 358.1L327.8 363.6Z" fill="#a41283"/><path d="M290.0 362.4L292.9 367.6L294.6 373.1L291.8 368.6Z" fill="#990cc3"/><path d="M248.3 370.1L251.1 362.5L252.8 361.8L250.0 369.3Z" fill="#9f0fa6"/><path d="M331.7 340.5L334.6 336.7L336.3 330.9L333.4 333.9Z" fill="#e37e00"/><path d="M203.5 324.6L206.4 329.9L208.1 329.4L205.2 324.0Z" fill="#f2ba00"/><path d="M212.2 364.6L215.1 372.4L216.8 374.3L213.9 366.6Z" fill="#950ad7"/><path d="M344.3 320.0L347.2 320.9L348.9 321.9L346.0 320.1Z" fill="#fdf500"/><path d="M335.1 328.2L338.0 326.0L339.7 322.2L336.8 323.5Z" fill="#f6ce00"/><path d="M365.5 343.7L368.4 350.0L370.1 354.7L367.2 348.3Z" fill="#c73a00"/><path d="M333.4 333.9L336.3 330.9L338.0 326.0L335.1 328.2Z" fill="#eea700"/><path d="M238.6 386.6L241.5 381.9L243.2 378.0L240.3 383.5Z" fill="#6901e0"/><path d="M355.8 328.0L358.6 332.0L360.3 336.1L357.5 331.4Z" fill="#ea9800"/><path d="M197.8 319.8L200.6 321.2L202.3 320.5L199.5 319.0Z" fill="#fef900"/><path d="M327.8 363.6L330.7 358.1L332.4 351.7L329.5 356.9Z" fill="#b52000"/><path d="M263.7 353.6L266.6 348.0L268.3 353.3L265.4 358.3Z" fill="#be2c00"/><path d="M230.6 395.4L233.5 395.0L235.2 392.6L232.3 394.1Z" fill="#200019"/><path d="M317.6 391.1L320.5 387.5L322.2 384.1L319.3 388.3Z" fill="#52009b"/><path d="M287.2 358.0L290.0 362.4L291.8 368.6L288.9 364.8Z" fill="#a61376"/><path d="M297.0 375.5L299.8 381.8L301.5 384.4L298.7 379.0Z" fill="#7302f5"/><path d="M281.4 352.9L284.3 354.8L286.0 362.0L283.1 360.3Z" fill="#b52000"/><path d="M200.6 321.2L203.5 324.6L205.2 324.0L202.3 320.5Z" fill="#fae200"/><path d="M259.1 356.7L262.0 349.9L263.7 353.6L260.8 359.9Z" fill="#ba2700"/><path d="M311.3 395.7L314.2 395.0L315.9 393.3L313.0 394.7Z" fill="#1e0016"/><path d="M204.7 330.1L207.6 336.8L209.3 336.7L206.4 329.9Z" fill="#e78c00"/><path d="M347.2 320.9L350.0 322.4L351.7 324.3L348.9 321.9Z" fill="#fbe700"/><path d="M223.2 391.0L226.0 394.1L227.7 394.6L224.9 392.3Z" fill="#2f0036"/><path d="M284.3 354.8L287.2 358.0L288.9 364.8L286.0 362.0Z" fill="#af1b2c"/><path d="M352.9 324.8L355.8 328.0L357.5 331.4L354.6 327.5Z" fill="#f1b700"/><path d="M220.3 386.6L223.2 391.0L224.9 392.3L222.0 388.5Z" fill="#48007a"/><path d="M236.9 389.7L239.8 386.0L241.5 381.9L238.6 386.6Z" fill="#5b01b6"/><path d="M350.0 322.4L352.9 324.8L354.6 327.5L351.7 324.3Z" fill="#f7d200"/><path d="M339.7 322.2L342.6 321.4L344.3 320.0L341.4 319.8Z" fill="#fef700"/><path d="M205.9 336.5L208.7 344.1L210.4 344.5L207.6 336.8Z" fill="#d96200"/><path d="M303.9 390.9L306.7 394.6L308.4 394.6L305.6 391.7Z" fill="#32003e"/><path d="M369.6 352.3L372.5 359.3L374.2 363.6L371.3 356.7Z" fill="#b52000"/><path d="M226.0 394.1L228.9 396.0L230.6 395.4L227.7 394.6Z" fill="#19000f"/><path d="M329.5 356.9L332.4 351.7L334.1 345.2L331.2 350.0Z" fill="#c43500"/><path d="M306.7 394.6L309.6 396.4L311.3 395.7L308.4 394.6Z" fill="#18000e"/><path d="M207.0 343.4L209.9 351.5L211.6 352.4L208.7 344.1Z" fill="#cb4000"/><path d="M213.4 370.0L216.3 377.2L218.0 379.4L215.1 372.4Z" fill="#8605fb"/><path d="M315.9 393.3L318.7 390.3L320.5 387.5L317.6 391.1Z" fill="#450071"/><path d="M301.0 385.7L303.9 390.9L305.6 391.7L302.7 387.3Z" fill="#4e008e"/><path d="M362.7 338.0L365.5 343.7L367.2 348.3L364.4 342.3Z" fill="#d55800"/><path d="M246.6 371.8L249.4 364.5L251.1 362.5L248.3 370.1Z" fill="#9d0eb0"/><path d="M235.2 392.6L238.0 390.0L239.8 386.0L236.9 389.7Z" fill="#4a0080"/><path d="M217.4 381.0L220.3 386.6L222.0 388.5L219.1 383.5Z" fill="#6101ca"/><path d="M271.1 349.3L274.0 346.5L275.7 353.4L272.8 355.8Z" fill="#c43500"/><path d="M208.2 350.1L211.1 358.4L212.8 359.9L209.9 351.5Z" fill="#bb2800"/><path d="M331.2 350.0L334.1 345.2L335.8 339.0L332.9 343.2Z" fill="#d35200"/><path d="M294.1 368.9L297.0 375.5L298.7 379.0L295.8 373.3Z" fill="#8906f7"/><path d="M201.8 325.0L204.7 330.1L206.4 329.9L203.5 324.6Z" fill="#f3bd00"/><path d="M228.9 396.0L231.8 396.6L233.5 395.0L230.6 395.4Z" fill="#120008"/><path d="M338.0 326.0L340.9 324.2L342.6 321.4L339.7 322.2Z" fill="#fae200"/><path d="M342.6 321.4L345.5 321.3L347.2 320.9L344.3 320.0Z" fill="#fefc00"/><path d="M196.1 320.5L198.9 321.8L200.6 321.2L197.8 319.8Z" fill="#fefa00"/><path d="M209.4 356.5L212.2 364.6L213.9 366.6L211.1 358.4Z" fill="#ac1844"/><path d="M309.6 396.4L312.5 396.4L314.2 395.0L311.3 395.7Z" fill="#15000b"/><path d="M332.9 343.2L335.8 339.0L337.5 333.2L334.6 336.7Z" fill="#e07400"/><path d="M252.8 361.8L255.7 354.0L257.4 354.7L254.5 362.2Z" fill="#b52000"/><path d="M233.5 395.0L236.3 393.5L238.0 390.0L235.2 392.6Z" fill="#360048"/><path d="M198.9 321.8L201.8 325.0L203.5 324.6L200.6 321.2Z" fill="#fae400"/><path d="M298.1 379.4L301.0 385.7L302.7 387.3L299.8 381.8Z" fill="#6901e0"/><path d="M336.3 330.9L339.2 328.2L340.9 324.2L338.0 326.0Z" fill="#f4c200"/><path d="M334.6 336.7L337.5 333.2L339.2 328.2L336.3 330.9Z" fill="#eb9b00"/><path d="M359.8 333.0L362.7 338.0L364.4 342.3L361.5 336.8Z" fill="#e17900"/><path d="M244.9 374.5L247.7 367.7L249.4 364.5L246.6 371.8Z" fill="#980bcb"/><path d="M314.2 395.0L317.0 392.6L318.7 390.3L315.9 393.3Z" fill="#39004f"/><path d="M366.7 345.7L369.6 352.3L371.3 356.7L368.4 350.0Z" fill="#c53700"/><path d="M203.0 330.1L205.9 336.5L207.6 336.8L204.7 330.1Z" fill="#e89200"/><path d="M214.6 374.4L217.4 381.0L219.1 383.5L216.3 377.2Z" fill="#7a03fd"/><path d="M325.6 375.4L328.4 369.5L330.1 364.2L327.3 370.2Z" fill="#980bca"/><path d="M323.9 380.1L326.7 374.4L328.4 369.5L325.6 375.4Z" fill="#8906f8"/><path d="M327.3 370.2L330.1 364.2L331.8 358.4L329.0 364.4Z" fill="#a7146f"/><path d="M345.5 321.3L348.3 321.9L350.0 322.4L347.2 320.9Z" fill="#fef900"/><path d="M322.2 384.1L325.0 378.7L326.7 374.4L323.9 380.1Z" fill="#7a03fd"/><path d="M210.5 362.2L213.4 370.0L215.1 372.4L212.2 364.6Z" fill="#9e0fa7"/><path d="M291.2 362.4L294.1 368.9L295.8 373.3L292.9 367.6Z" fill="#9d0eb0"/><path d="M305.0 394.6L307.9 397.0L309.6 396.4L306.7 394.6Z" fill="#200019"/><path d="M302.2 390.3L305.0 394.6L306.7 394.6L303.9 390.9Z" fill="#3c0058"/><path d="M204.1 336.0L207.0 343.4L208.7 344.1L205.9 336.5Z" fill="#dc6a00"/><path d="M221.5 388.8L224.3 392.8L226.0 394.1L223.2 391.0Z" fill="#420067"/><path d="M224.3 392.8L227.2 395.5L228.9 396.0L226.0 394.1Z" fill="#2b002c"/><path d="M243.2 378.0L246.0 371.8L247.7 367.7L244.9 374.5Z" fill="#8f08eb"/><path d="M231.8 396.6L234.6 396.2L236.3 393.5L233.5 395.0Z" fill="#22001d"/><path d="M356.9 328.8L359.8 333.0L361.5 336.8L358.6 332.0Z" fill="#eb9c00"/><path d="M329.0 364.4L331.8 358.4L333.5 352.5L330.7 358.1Z" fill="#b62200"/><path d="M274.0 346.5L276.9 345.3L278.6 352.4L275.7 353.4Z" fill="#ca3f00"/><path d="M340.9 324.2L343.8 323.0L345.5 321.3L342.6 321.4Z" fill="#fdf200"/><path d="M320.5 387.5L323.3 382.5L325.0 378.7L322.2 384.1Z" fill="#6d02e8"/><path d="M266.6 348.0L269.4 343.5L271.1 349.3L268.3 353.3Z" fill="#cc4200"/><path d="M348.3 321.9L351.2 323.3L352.9 324.8L350.0 322.4Z" fill="#fced00"/><path d="M241.5 381.9L244.3 376.5L246.0 371.8L243.2 378.0Z" fill="#8205fe"/><path d="M205.3 342.3L208.2 350.1L209.9 351.5L207.0 343.4Z" fill="#cf4900"/><path d="M218.6 383.8L221.5 388.8L223.2 391.0L220.3 386.6Z" fill="#5900b2"/><path d="M227.2 395.5L230.1 397.2L231.8 396.6L228.9 396.0Z" fill="#17000d"/><path d="M354.1 325.6L356.9 328.8L358.6 332.0L355.8 328.0Z" fill="#f2bc00"/><path d="M257.4 354.7L260.3 347.5L262.0 349.9L259.1 356.7Z" fill="#c43500"/><path d="M295.3 372.3L298.1 379.4L299.8 381.8L297.0 375.5Z" fill="#8205fe"/><path d="M330.7 358.1L333.5 352.5L335.2 346.4L332.4 351.7Z" fill="#c43500"/><path d="M200.1 325.3L203.0 330.1L204.7 330.1L201.8 325.0Z" fill="#f4c200"/><path d="M351.2 323.3L354.1 325.6L355.8 328.0L352.9 324.8Z" fill="#f8d800"/><path d="M307.9 397.0L310.8 397.4L312.5 396.4L309.6 396.4Z" fill="#110007"/><path d="M312.5 396.4L315.3 394.4L317.0 392.6L314.2 395.0Z" fill="#2f0036"/><path d="M239.8 386.0L242.6 381.6L244.3 376.5L241.5 381.9Z" fill="#7302f5"/><path d="M299.3 384.5L302.2 390.3L303.9 390.9L301.0 385.7Z" fill="#5900b1"/><path d="M194.4 321.3L197.2 322.3L198.9 321.8L196.1 320.5Z" fill="#fefb00"/><path d="M363.8 339.7L366.7 345.7L368.4 350.0L365.5 343.7Z" fill="#d45500"/><path d="M238.0 390.0L240.9 386.6L242.6 381.6L239.8 386.0Z" fill="#6101ca"/><path d="M251.1 362.5L254.0 354.8L255.7 354.0L252.8 361.8Z" fill="#b72200"/><path d="M318.7 390.3L321.6 385.7L323.3 382.5L320.5 387.5Z" fill="#6001c7"/><path d="M197.2 322.3L200.1 325.3L201.8 325.0L198.9 321.8Z" fill="#fbe800"/><path d="M288.3 356.4L291.2 362.4L292.9 367.6L290.0 362.4Z" fill="#ad193c"/><path d="M332.4 351.7L335.2 346.4L336.9 340.5L334.1 345.2Z" fill="#d24f00"/><path d="M206.5 348.4L209.4 356.5L211.1 358.4L208.2 350.1Z" fill="#c23100"/><path d="M262.0 349.9L264.9 343.8L266.6 348.0L263.7 353.6Z" fill="#cc4200"/><path d="M211.7 367.1L214.6 374.4L216.3 377.2L213.4 370.0Z" fill="#9209e0"/><path d="M339.2 328.2L342.1 326.0L343.8 323.0L340.9 324.2Z" fill="#f9db00"/><path d="M236.3 393.5L239.2 391.2L240.9 386.6L238.0 390.0Z" fill="#4d0089"/><path d="M230.1 397.2L232.9 397.9L234.6 396.2L231.8 396.6Z" fill="#120008"/><path d="M215.7 377.8L218.6 383.8L220.3 386.6L217.4 381.0Z" fill="#7102f1"/><path d="M334.1 345.2L336.9 340.5L338.6 335.0L335.8 339.0Z" fill="#de7000"/><path d="M367.9 348.3L370.7 355.2L372.5 359.3L369.6 352.3Z" fill="#c23100"/><path d="M201.3 329.9L204.1 336.0L205.9 336.5L203.0 330.1Z" fill="#eb9a00"/><path d="M343.8 323.0L346.6 322.6L348.3 321.9L345.5 321.3Z" fill="#fefb00"/><path d="M337.5 333.2L340.3 330.1L342.1 326.0L339.2 328.2Z" fill="#f2ba00"/><path d="M276.9 345.3L279.7 345.8L281.4 352.9L278.6 352.4Z" fill="#cc4200"/><path d="M335.8 339.0L338.6 335.0L340.3 330.1L337.5 333.2Z" fill="#e99400"/><path d="M234.6 396.2L237.5 395.1L239.2 391.2L236.3 393.5Z" fill="#360048"/><path d="M303.3 394.8L306.2 397.6L307.9 397.0L305.0 394.6Z" fill="#260024"/><path d="M207.6 354.2L210.5 362.2L212.2 364.6L209.4 356.5Z" fill="#b52000"/><path d="M285.5 351.5L288.3 356.4L290.0 362.4L287.2 358.0Z" fill="#ba2700"/><path d="M361.0 334.4L363.8 339.7L365.5 343.7L362.7 338.0Z" fill="#e17700"/><path d="M317.0 392.6L319.9 388.4L321.6 385.7L318.7 390.3Z" fill="#5500a5"/><path d="M296.4 377.5L299.3 384.5L301.0 385.7L298.1 379.4Z" fill="#7502f7"/><path d="M300.5 390.1L303.3 394.8L305.0 394.6L302.2 390.3Z" fill="#44006d"/><path d="M310.8 397.4L313.6 395.9L315.3 394.4L312.5 396.4Z" fill="#270026"/><path d="M292.4 364.8L295.3 372.3L297.0 375.5L294.1 368.9Z" fill="#990cc3"/><path d="M279.7 345.8L282.6 347.9L284.3 354.8L281.4 352.9Z" fill="#ca3f00"/><path d="M202.4 335.3L205.3 342.3L207.0 343.4L204.1 336.0Z" fill="#e07400"/><path d="M306.2 397.6L309.1 398.3L310.8 397.4L307.9 397.0Z" fill="#110007"/><path d="M282.6 347.9L285.5 351.5L287.2 358.0L284.3 354.8Z" fill="#c43500"/><path d="M192.7 322.2L195.5 322.8L197.2 322.3L194.4 321.3Z" fill="#fefc00"/><path d="M249.4 364.5L252.3 357.0L254.0 354.8L251.1 362.5Z" fill="#b52000"/><path d="M346.6 322.6L349.5 323.0L351.2 323.3L348.3 321.9Z" fill="#fefa00"/><path d="M198.4 325.5L201.3 329.9L203.0 330.1L200.1 325.3Z" fill="#f5c900"/><path d="M222.6 390.4L225.5 394.0L227.2 395.5L224.3 392.8Z" fill="#3f0061"/><path d="M232.9 397.9L235.8 397.8L237.5 395.1L234.6 396.2Z" fill="#200019"/><path d="M225.5 394.0L228.4 396.5L230.1 397.2L227.2 395.5Z" fill="#2b002c"/><path d="M212.9 371.0L215.7 377.8L217.4 381.0L214.6 374.4Z" fill="#8906f8"/><path d="M358.1 330.0L361.0 334.4L362.7 338.0L359.8 333.0Z" fill="#eb9c00"/><path d="M342.1 326.0L344.9 324.5L346.6 322.6L343.8 323.0Z" fill="#fcee00"/><path d="M195.5 322.8L198.4 325.5L200.1 325.3L197.2 322.3Z" fill="#fcec00"/><path d="M219.8 385.9L222.6 390.4L224.3 392.8L221.5 388.8Z" fill="#5500a5"/><path d="M269.4 343.5L272.3 340.4L274.0 346.5L271.1 349.3Z" fill="#d55800"/><path d="M208.8 359.3L211.7 367.1L213.4 370.0L210.5 362.2Z" fill="#a9165f"/><path d="M297.6 383.8L300.5 390.1L302.2 390.3L299.3 384.5Z" fill="#6101ca"/><path d="M365.0 341.9L367.9 348.3L369.6 352.3L366.7 345.7Z" fill="#d24f00"/><path d="M203.6 340.9L206.5 348.4L208.2 350.1L205.3 342.3Z" fill="#d45500"/><path d="M315.3 394.4L318.2 390.6L319.9 388.4L317.0 392.6Z" fill="#4c0088"/><path d="M349.5 323.0L352.4 324.3L354.1 325.6L351.2 323.3Z" fill="#fcf000"/><path d="M255.7 354.0L258.6 346.6L260.3 347.5L257.4 354.7Z" fill="#ca3f00"/><path d="M326.7 374.4L329.6 368.0L331.3 363.1L328.4 369.5Z" fill="#9f0fa3"/><path d="M328.4 369.5L331.3 363.1L333.0 357.9L330.1 364.2Z" fill="#ac1844"/><path d="M228.4 396.5L231.2 398.2L232.9 397.9L230.1 397.2Z" fill="#19000f"/><path d="M355.2 326.7L358.1 330.0L359.8 333.0L356.9 328.8Z" fill="#f3be00"/><path d="M330.1 364.2L333.0 357.9L334.7 352.4L331.8 358.4Z" fill="#ba2600"/><path d="M325.0 378.7L327.9 372.4L329.6 368.0L326.7 374.4Z" fill="#9209e0"/><path d="M247.7 367.7L250.6 360.5L252.3 357.0L249.4 364.5Z" fill="#af1b2c"/><path d="M352.4 324.3L355.2 326.7L356.9 328.8L354.1 325.6Z" fill="#f9db00"/><path d="M239.2 391.2L242.1 388.5L243.8 382.8L240.9 386.6Z" fill="#6101ca"/><path d="M293.6 369.7L296.4 377.5L298.1 379.4L295.3 372.3Z" fill="#8f08eb"/><path d="M331.8 358.4L334.7 352.4L336.4 346.9L333.5 352.5Z" fill="#c73900"/><path d="M216.9 380.4L219.8 385.9L221.5 388.8L218.6 383.8Z" fill="#6c01e6"/><path d="M301.6 395.2L304.5 398.2L306.2 397.6L303.3 394.8Z" fill="#2a002b"/><path d="M309.1 398.3L311.9 397.1L313.6 395.9L310.8 397.4Z" fill="#22001c"/><path d="M240.9 386.6L243.8 382.8L245.5 376.8L242.6 381.6Z" fill="#7703f9"/><path d="M340.3 330.1L343.2 327.6L344.9 324.5L342.1 326.0Z" fill="#f8d600"/><path d="M237.5 395.1L240.4 393.3L242.1 388.5L239.2 391.2Z" fill="#4a0080"/><path d="M289.5 357.7L292.4 364.8L294.1 368.9L291.2 362.4Z" fill="#ad193c"/><path d="M323.3 382.5L326.2 376.4L327.9 372.4L325.0 378.7Z" fill="#8605fb"/><path d="M199.6 329.6L202.4 335.3L204.1 336.0L201.3 329.9Z" fill="#eda500"/><path d="M204.8 346.5L207.6 354.2L209.4 356.5L206.5 348.4Z" fill="#c93c00"/><path d="M246.0 371.8L248.9 365.3L250.6 360.5L247.7 367.7Z" fill="#a61376"/><path d="M242.6 381.6L245.5 376.8L247.2 370.8L244.3 376.5Z" fill="#8906f7"/><path d="M333.5 352.5L336.4 346.9L338.1 341.4L335.2 346.4Z" fill="#d35200"/><path d="M244.3 376.5L247.2 370.8L248.9 365.3L246.0 371.8Z" fill="#990cc3"/><path d="M298.8 390.3L301.6 395.2L303.3 394.8L300.5 390.1Z" fill="#48007b"/><path d="M304.5 398.2L307.4 399.2L309.1 398.3L306.2 397.6Z" fill="#120008"/><path d="M231.2 398.2L234.1 399.1L235.8 397.8L232.9 397.9Z" fill="#100007"/><path d="M338.6 335.0L341.5 331.5L343.2 327.6L340.3 330.1Z" fill="#f1b500"/><path d="M335.2 346.4L338.1 341.4L339.8 336.2L336.9 340.5Z" fill="#de7000"/><path d="M191.0 323.2L193.8 323.4L195.5 322.8L192.7 322.2Z" fill="#fefc00"/><path d="M235.8 397.8L238.7 397.1L240.4 393.3L237.5 395.1Z" fill="#31003a"/><path d="M336.9 340.5L339.8 336.2L341.5 331.5L338.6 335.0Z" fill="#e89200"/><path d="M344.9 324.5L347.8 323.9L349.5 323.0L346.6 322.6Z" fill="#fefa00"/><path d="M362.1 336.3L365.0 341.9L366.7 345.7L363.8 339.7Z" fill="#df7200"/><path d="M264.9 343.8L267.7 338.9L269.4 343.5L266.6 348.0Z" fill="#d96200"/><path d="M321.6 385.7L324.5 379.8L326.2 376.4L323.3 382.5Z" fill="#7b03fe"/><path d="M313.6 395.9L316.5 392.4L318.2 390.6L315.3 394.4Z" fill="#450071"/><path d="M210.0 363.7L212.9 371.0L214.6 374.4L211.7 367.1Z" fill="#9f0fa3"/><path d="M260.3 347.5L263.2 341.1L264.9 343.8L262.0 349.9Z" fill="#d55800"/><path d="M294.7 376.3L297.6 383.8L299.3 384.5L296.4 377.5Z" fill="#7d04ff"/><path d="M196.7 325.6L199.6 329.6L201.3 329.9L198.4 325.5Z" fill="#f7d100"/><path d="M214.0 374.1L216.9 380.4L218.6 383.8L215.7 377.8Z" fill="#8205fe"/><path d="M200.7 334.4L203.6 340.9L205.3 342.3L202.4 335.3Z" fill="#e48100"/><path d="M193.8 323.4L196.7 325.6L198.4 325.5L195.5 322.8Z" fill="#fdf100"/><path d="M205.9 351.6L208.8 359.3L210.5 362.2L207.6 354.2Z" fill="#be2b00"/><path d="M272.3 340.4L275.2 339.1L276.9 345.3L274.0 346.5Z" fill="#db6700"/><path d="M295.9 383.8L298.8 390.3L300.5 390.1L297.6 383.8Z" fill="#6601d7"/><path d="M366.2 344.6L369.0 351.3L370.7 355.2L367.9 348.3Z" fill="#ce4600"/><path d="M319.9 388.4L322.8 382.8L324.5 379.8L321.6 385.7Z" fill="#7102f1"/><path d="M286.6 351.1L289.5 357.7L291.2 362.4L288.3 356.4Z" fill="#be2c00"/><path d="M254.0 354.8L256.9 347.3L258.6 346.6L255.7 354.0Z" fill="#cc4200"/><path d="M234.1 399.1L237.0 399.4L238.7 397.1L235.8 397.8Z" fill="#19000f"/><path d="M347.8 323.9L350.7 324.2L352.4 324.3L349.5 323.0Z" fill="#fefb00"/><path d="M307.4 399.2L310.2 398.0L311.9 397.1L309.1 398.3Z" fill="#1f0017"/><path d="M359.3 331.6L362.1 336.3L363.8 339.7L361.0 334.4Z" fill="#ea9800"/><path d="M299.9 395.9L302.8 399.0L304.5 398.2L301.6 395.2Z" fill="#2b002e"/><path d="M223.8 391.3L226.7 394.6L228.4 396.5L225.5 394.0Z" fill="#420067"/><path d="M290.7 361.7L293.6 369.7L295.3 372.3L292.4 364.8Z" fill="#a61376"/><path d="M343.2 327.6L346.1 325.8L347.8 323.9L344.9 324.5Z" fill="#fcec00"/><path d="M226.7 394.6L229.5 397.1L231.2 398.2L228.4 396.5Z" fill="#2f0036"/><path d="M220.9 387.1L223.8 391.3L225.5 394.0L222.6 390.4Z" fill="#5500a5"/><path d="M201.9 339.4L204.8 346.5L206.5 348.4L203.6 340.9Z" fill="#da6300"/><path d="M302.8 399.0L305.7 399.9L307.4 399.2L304.5 398.2Z" fill="#120008"/><path d="M311.9 397.1L314.8 393.8L316.5 392.4L313.6 395.9Z" fill="#3f0061"/><path d="M240.4 393.3L243.3 391.4L245.0 385.6L242.1 388.5Z" fill="#5b01b6"/><path d="M297.1 391.0L299.9 395.9L301.6 395.2L298.8 390.3Z" fill="#4a0080"/><path d="M189.3 324.3L192.1 324.0L193.8 323.4L191.0 323.2Z" fill="#fefb00"/><path d="M238.7 397.1L241.5 396.1L243.3 391.4L240.4 393.3Z" fill="#410064"/><path d="M350.7 324.2L353.5 325.5L355.2 326.7L352.4 324.3Z" fill="#fdf100"/><path d="M356.4 328.0L359.3 331.6L361.0 334.4L358.1 330.0Z" fill="#f2bc00"/><path d="M197.9 329.2L200.7 334.4L202.4 335.3L199.6 329.6Z" fill="#f0b100"/><path d="M242.1 388.5L245.0 385.6L246.7 378.9L243.8 382.8Z" fill="#7302f5"/><path d="M229.5 397.1L232.4 398.9L234.1 399.1L231.2 398.2Z" fill="#1f0017"/><path d="M318.2 390.6L321.1 385.2L322.8 382.8L319.9 388.4Z" fill="#6901df"/><path d="M353.5 325.5L356.4 328.0L358.1 330.0L355.2 326.7Z" fill="#f9db00"/><path d="M211.1 367.2L214.0 374.1L215.7 377.8L212.9 371.0Z" fill="#980bca"/><path d="M207.1 356.2L210.0 363.7L211.7 367.1L208.8 359.3Z" fill="#b42002"/><path d="M218.1 382.0L220.9 387.1L222.6 390.4L219.8 385.9Z" fill="#6a01e2"/><path d="M275.2 339.1L278.0 339.5L279.7 345.8L276.9 345.3Z" fill="#dd6d00"/><path d="M283.8 345.7L286.6 351.1L288.3 356.4L285.5 351.5Z" fill="#cc4200"/><path d="M341.5 331.5L344.4 328.8L346.1 325.8L343.2 327.6Z" fill="#f7d400"/><path d="M291.8 368.1L294.7 376.3L296.4 377.5L293.6 369.7Z" fill="#980bcb"/><path d="M363.3 338.6L366.2 344.6L367.9 348.3L365.0 341.9Z" fill="#dc6a00"/><path d="M237.0 399.4L239.8 399.3L241.5 396.1L238.7 397.1Z" fill="#260024"/><path d="M243.8 382.8L246.7 378.9L248.4 372.0L245.5 376.8Z" fill="#8906f7"/><path d="M252.3 357.0L255.2 349.8L256.9 347.3L254.0 354.8Z" fill="#ca3f00"/><path d="M192.1 324.0L195.0 325.7L196.7 325.6L193.8 323.4Z" fill="#fdf500"/><path d="M195.0 325.7L197.9 329.2L199.6 329.6L196.7 325.6Z" fill="#f9db00"/><path d="M293.0 376.0L295.9 383.8L297.6 383.8L294.7 376.3Z" fill="#8205fe"/><path d="M203.1 344.3L205.9 351.6L207.6 354.2L204.8 346.5Z" fill="#d04b00"/><path d="M339.8 336.2L342.7 332.5L344.4 328.8L341.5 331.5Z" fill="#f1b500"/><path d="M232.4 398.9L235.3 400.0L237.0 399.4L234.1 399.1Z" fill="#130009"/><path d="M280.9 341.8L283.8 345.7L285.5 351.5L282.6 347.9Z" fill="#d55800"/><path d="M278.0 339.5L280.9 341.8L282.6 347.9L279.7 345.8Z" fill="#db6700"/><path d="M294.2 384.5L297.1 391.0L298.8 390.3L295.9 383.8Z" fill="#6801dc"/><path d="M331.3 363.1L334.2 356.5L335.9 351.6L333.0 357.9Z" fill="#bf2e00"/><path d="M346.1 325.8L349.0 325.1L350.7 324.2L347.8 323.9Z" fill="#fef900"/><path d="M333.0 357.9L335.9 351.6L337.6 346.6L334.7 352.4Z" fill="#cb4000"/><path d="M329.6 368.0L332.5 361.2L334.2 356.5L331.3 363.1Z" fill="#b42002"/><path d="M305.7 399.9L308.5 398.8L310.2 398.0L307.4 399.2Z" fill="#1e0016"/><path d="M338.1 341.4L341.0 336.8L342.7 332.5L339.8 336.2Z" fill="#e99400"/><path d="M334.7 352.4L337.6 346.6L339.3 341.6L336.4 346.9Z" fill="#d65800"/><path d="M267.7 338.9L270.6 335.6L272.3 340.4L269.4 343.5Z" fill="#e38000"/><path d="M298.2 397.0L301.1 399.9L302.8 399.0L299.9 395.9Z" fill="#2a002b"/><path d="M215.2 376.2L218.1 382.0L219.8 385.9L216.9 380.4Z" fill="#7f04ff"/><path d="M336.4 346.9L339.3 341.6L341.0 336.8L338.1 341.4Z" fill="#e07400"/><path d="M258.6 346.6L261.4 340.0L263.2 341.1L260.3 347.5Z" fill="#db6700"/><path d="M245.5 376.8L248.4 372.0L250.1 365.2L247.2 370.8Z" fill="#9d0eb0"/><path d="M327.9 372.4L330.8 365.5L332.5 361.2L329.6 368.0Z" fill="#a9165f"/><path d="M199.0 333.4L201.9 339.4L203.6 340.9L200.7 334.4Z" fill="#e89100"/><path d="M316.5 392.4L319.4 387.2L321.1 385.2L318.2 390.6Z" fill="#6201cd"/><path d="M287.8 353.9L290.7 361.7L292.4 364.8L289.5 357.7Z" fill="#ba2700"/><path d="M310.2 398.0L313.1 394.9L314.8 393.8L311.9 397.1Z" fill="#3c0057"/><path d="M250.6 360.5L253.5 353.7L255.2 349.8L252.3 357.0Z" fill="#c43500"/><path d="M295.3 392.3L298.2 397.0L299.9 395.9L297.1 391.0Z" fill="#48007b"/><path d="M187.6 325.7L190.4 324.8L192.1 324.0L189.3 324.3Z" fill="#fef900"/><path d="M301.1 399.9L304.0 400.6L305.7 399.9L302.8 399.0Z" fill="#120008"/><path d="M326.2 376.4L329.1 369.5L330.8 365.5L327.9 372.4Z" fill="#9e0fa7"/><path d="M247.2 370.8L250.1 365.2L251.8 359.0L248.9 365.3Z" fill="#ad193c"/><path d="M360.4 333.6L363.3 338.6L365.0 341.9L362.1 336.3Z" fill="#e89100"/><path d="M241.5 396.1L244.4 395.0L246.1 389.5L243.3 391.4Z" fill="#4e008e"/><path d="M248.9 365.3L251.8 359.0L253.5 353.7L250.6 360.5Z" fill="#ba2700"/><path d="M263.2 341.1L266.0 335.9L267.7 338.9L264.9 343.8Z" fill="#e38000"/><path d="M208.3 360.0L211.1 367.2L212.9 371.0L210.0 363.7Z" fill="#ac1844"/><path d="M235.3 400.0L238.1 400.7L239.8 399.3L237.0 399.4Z" fill="#110007"/><path d="M243.3 391.4L246.1 389.5L247.8 382.8L245.0 385.6Z" fill="#6901e0"/><path d="M239.8 399.3L242.7 399.0L244.4 395.0L241.5 396.1Z" fill="#32003e"/><path d="M349.0 325.1L351.8 325.4L353.5 325.5L350.7 324.2Z" fill="#fefb00"/><path d="M204.2 348.8L207.1 356.2L208.8 359.3L205.9 351.6Z" fill="#c73a00"/><path d="M324.5 379.8L327.4 373.0L329.1 369.5L326.2 376.4Z" fill="#950ad7"/><path d="M344.4 328.8L347.3 327.0L349.0 325.1L346.1 325.8Z" fill="#fcec00"/><path d="M196.2 328.8L199.0 333.4L200.7 334.4L197.9 329.2Z" fill="#f3bf00"/><path d="M212.3 369.8L215.2 376.2L216.9 380.4L214.0 374.1Z" fill="#9309dd"/><path d="M289.0 359.6L291.8 368.1L293.6 369.7L290.7 361.7Z" fill="#af1b2c"/><path d="M357.6 329.6L360.4 333.6L362.1 336.3L359.3 331.6Z" fill="#f1b700"/><path d="M200.2 337.8L203.1 344.3L204.8 346.5L201.9 339.4Z" fill="#e07400"/><path d="M225.0 391.4L227.8 394.6L229.5 397.1L226.7 394.6Z" fill="#48007a"/><path d="M190.4 324.8L193.3 325.9L195.0 325.7L192.1 324.0Z" fill="#fef900"/><path d="M292.5 386.1L295.3 392.3L297.1 391.0L294.2 384.5Z" fill="#6601d7"/><path d="M364.5 341.4L367.3 347.9L369.0 351.3L366.2 344.6Z" fill="#d85e00"/><path d="M245.0 385.6L247.8 382.8L249.5 375.4L246.7 378.9Z" fill="#8205fe"/><path d="M351.8 325.4L354.7 326.9L356.4 328.0L353.5 325.5Z" fill="#fcf000"/><path d="M291.3 376.8L294.2 384.5L295.9 383.8L293.0 376.0Z" fill="#8405fd"/><path d="M222.1 387.5L225.0 391.4L226.7 394.6L223.8 391.3Z" fill="#5900b2"/><path d="M314.8 393.8L317.7 388.8L319.4 387.2L316.5 392.4Z" fill="#5d01bf"/><path d="M227.8 394.6L230.7 397.1L232.4 398.9L229.5 397.1Z" fill="#38004c"/><path d="M296.5 398.4L299.4 400.8L301.1 399.9L298.2 397.0Z" fill="#260024"/><path d="M290.1 367.6L293.0 376.0L294.7 376.3L291.8 368.1Z" fill="#9d0eb0"/><path d="M354.7 326.9L357.6 329.6L359.3 331.6L356.4 328.0Z" fill="#f8d800"/><path d="M304.0 400.6L306.8 399.3L308.5 398.8L305.7 399.9Z" fill="#1f0017"/><path d="M193.3 325.9L196.2 328.8L197.9 329.2L195.0 325.7Z" fill="#fae400"/><path d="M322.8 382.8L325.7 376.1L327.4 373.0L324.5 379.8Z" fill="#8c07f2"/><path d="M238.1 400.7L241.0 401.1L242.7 399.0L239.8 399.3Z" fill="#18000e"/><path d="M293.6 394.1L296.5 398.4L298.2 397.0L295.3 392.3Z" fill="#44006d"/><path d="M284.9 346.9L287.8 353.9L289.5 357.7L286.6 351.1Z" fill="#cc4200"/><path d="M308.5 398.8L311.4 395.6L313.1 394.9L310.2 398.0Z" fill="#3b0054"/><path d="M185.9 327.2L188.7 325.8L190.4 324.8L187.6 325.7Z" fill="#fdf400"/><path d="M219.2 382.8L222.1 387.5L223.8 391.3L220.9 387.1Z" fill="#6c01e6"/><path d="M342.7 332.5L345.6 329.7L347.3 327.0L344.4 328.8Z" fill="#f8d600"/><path d="M230.7 397.1L233.6 399.0L235.3 400.0L232.4 398.9Z" fill="#29002a"/><path d="M270.6 335.6L273.5 334.1L275.2 339.1L272.3 340.4Z" fill="#e99600"/><path d="M256.9 347.3L259.7 340.8L261.4 340.0L258.6 346.6Z" fill="#dd6d00"/><path d="M299.4 400.8L302.3 401.3L304.0 400.6L301.1 399.9Z" fill="#110007"/><path d="M244.4 395.0L247.3 394.1L249.0 387.9L246.1 389.5Z" fill="#5900b1"/><path d="M246.7 378.9L249.5 375.4L251.2 367.7L248.4 372.0Z" fill="#990cc3"/><path d="M242.7 399.0L245.6 398.7L247.3 394.1L244.4 395.0Z" fill="#3c0058"/><path d="M205.4 352.8L208.3 360.0L210.0 363.7L207.1 356.2Z" fill="#bf2e00"/><path d="M347.3 327.0L350.1 326.2L351.8 325.4L349.0 325.1Z" fill="#fefa00"/><path d="M341.0 336.8L343.8 333.1L345.6 329.7L342.7 332.5Z" fill="#f2ba00"/><path d="M321.1 385.2L324.0 378.7L325.7 376.1L322.8 382.8Z" fill="#8505fd"/><path d="M233.6 399.0L236.4 400.4L238.1 400.7L235.3 400.0Z" fill="#1e0016"/><path d="M201.4 342.0L204.2 348.8L205.9 351.6L203.1 344.3Z" fill="#d85e00"/><path d="M209.4 363.0L212.3 369.8L214.0 374.1L211.1 367.2Z" fill="#a7146f"/><path d="M197.3 332.4L200.2 337.8L201.9 339.4L199.0 333.4Z" fill="#eda200"/><path d="M216.4 377.4L219.2 382.8L220.9 387.1L218.1 382.0Z" fill="#7f04ff"/><path d="M361.6 335.9L364.5 341.4L366.2 344.6L363.3 338.6Z" fill="#e58600"/><path d="M290.8 388.3L293.6 394.1L295.3 392.3L292.5 386.1Z" fill="#6101ca"/><path d="M246.1 389.5L249.0 387.9L250.7 380.6L247.8 382.8Z" fill="#7502f7"/><path d="M241.0 401.1L243.9 401.4L245.6 398.7L242.7 399.0Z" fill="#200019"/><path d="M339.3 341.6L342.1 337.0L343.8 333.1L341.0 336.8Z" fill="#eb9b00"/><path d="M289.6 378.6L292.5 386.1L294.2 384.5L291.3 376.8Z" fill="#8205fe"/><path d="M313.1 394.9L316.0 390.0L317.7 388.8L314.8 393.8Z" fill="#5a01b5"/><path d="M294.8 399.9L297.7 401.8L299.4 400.8L296.5 398.4Z" fill="#200019"/><path d="M291.9 396.3L294.8 399.9L296.5 398.4L293.6 394.1Z" fill="#3c0058"/><path d="M248.4 372.0L251.2 367.7L252.9 360.2L250.1 365.2Z" fill="#ad193c"/><path d="M282.1 341.2L284.9 346.9L286.6 351.1L283.8 345.7Z" fill="#d96200"/><path d="M188.7 325.8L191.6 326.2L193.3 325.9L190.4 324.8Z" fill="#fefc00"/><path d="M337.6 346.6L340.4 341.2L342.1 337.0L339.3 341.6Z" fill="#e37e00"/><path d="M286.1 351.5L289.0 359.6L290.7 361.7L287.8 353.9Z" fill="#c43500"/><path d="M184.2 329.1L187.0 327.1L188.7 325.8L185.9 327.2Z" fill="#fcec00"/><path d="M335.9 351.6L338.7 345.6L340.4 341.2L337.6 346.6Z" fill="#da6300"/><path d="M273.5 334.1L276.3 334.6L278.0 339.5L275.2 339.1Z" fill="#eb9e00"/><path d="M302.3 401.3L305.1 399.7L306.8 399.3L304.0 400.6Z" fill="#22001c"/><path d="M255.2 349.8L258.0 343.3L259.7 340.8L256.9 347.3Z" fill="#db6700"/><path d="M236.4 400.4L239.3 401.4L241.0 401.1L238.1 400.7Z" fill="#15000b"/><path d="M194.5 328.4L197.3 332.4L199.0 333.4L196.2 328.8Z" fill="#f6ce00"/><path d="M261.4 340.0L264.3 334.7L266.0 335.9L263.2 341.1Z" fill="#e99600"/><path d="M334.2 356.5L337.0 350.0L338.7 345.6L335.9 351.6Z" fill="#d14c00"/><path d="M266.0 335.9L268.9 332.4L270.6 335.6L267.7 338.9Z" fill="#eda600"/><path d="M288.4 368.3L291.3 376.8L293.0 376.0L290.1 367.6Z" fill="#9f0fa6"/><path d="M350.1 326.2L353.0 326.7L354.7 326.9L351.8 325.4Z" fill="#fefa00"/><path d="M358.7 331.6L361.6 335.9L363.3 338.6L360.4 333.6Z" fill="#efae00"/><path d="M245.6 398.7L248.5 398.5L250.2 393.5L247.3 394.1Z" fill="#44006d"/><path d="M306.8 399.3L309.7 396.1L311.4 395.6L308.5 398.8Z" fill="#3c0057"/><path d="M191.6 326.2L194.5 328.4L196.2 328.8L193.3 325.9Z" fill="#fcee00"/><path d="M319.4 387.2L322.2 380.8L324.0 378.7L321.1 385.2Z" fill="#7f04ff"/><path d="M332.5 361.2L335.3 354.4L337.0 350.0L334.2 356.5Z" fill="#c73a00"/><path d="M213.5 371.5L216.4 377.4L218.1 382.0L215.2 376.2Z" fill="#9209e2"/><path d="M247.8 382.8L250.7 380.6L252.4 372.5L249.5 375.4Z" fill="#8f08eb"/><path d="M287.3 358.9L290.1 367.6L291.8 368.1L289.0 359.6Z" fill="#b52000"/><path d="M297.7 401.8L300.6 401.7L302.3 401.3L299.4 400.8Z" fill="#110007"/><path d="M247.3 394.1L250.2 393.5L251.9 386.9L249.0 387.9Z" fill="#6101ca"/><path d="M250.1 365.2L252.9 360.2L254.6 353.3L251.8 359.0Z" fill="#be2c00"/><path d="M289.1 391.1L291.9 396.3L293.6 394.1L290.8 388.3Z" fill="#5900b1"/><path d="M345.6 329.7L348.4 327.9L350.1 326.2L347.3 327.0Z" fill="#fcee00"/><path d="M279.2 337.0L282.1 341.2L283.8 345.7L280.9 341.8Z" fill="#e38000"/><path d="M330.8 365.5L333.6 358.5L335.3 354.4L332.5 361.2Z" fill="#be2b00"/><path d="M276.3 334.6L279.2 337.0L280.9 341.8L278.0 339.5Z" fill="#e99600"/><path d="M353.0 326.7L355.9 328.5L357.6 329.6L354.7 326.9Z" fill="#fced00"/><path d="M355.9 328.5L358.7 331.6L360.4 333.6L357.6 329.6Z" fill="#f7d200"/><path d="M243.9 401.4L246.8 401.7L248.5 398.5L245.6 398.7Z" fill="#260024"/><path d="M253.5 353.7L256.3 347.6L258.0 343.3L255.2 349.8Z" fill="#d55800"/><path d="M198.5 336.1L201.4 342.0L203.1 344.3L200.2 337.8Z" fill="#e68900"/><path d="M202.5 345.9L205.4 352.8L207.1 356.2L204.2 348.8Z" fill="#d14c00"/><path d="M287.9 381.3L290.8 388.3L292.5 386.1L289.6 378.6Z" fill="#7d04ff"/><path d="M251.8 359.0L254.6 353.3L256.3 347.6L253.5 353.7Z" fill="#cc4200"/><path d="M206.6 356.0L209.4 363.0L211.1 367.2L208.3 360.0Z" fill="#ba2600"/><path d="M329.1 369.5L331.9 362.3L333.6 358.5L330.8 365.5Z" fill="#b52000"/><path d="M239.3 401.4L242.2 402.2L243.9 401.4L241.0 401.1Z" fill="#110007"/><path d="M290.2 398.6L293.1 401.4L294.8 399.9L291.9 396.3Z" fill="#32003e"/><path d="M249.0 387.9L251.9 386.9L253.6 379.1L250.7 380.6Z" fill="#7d04ff"/><path d="M293.1 401.4L296.0 402.6L297.7 401.8L294.8 399.9Z" fill="#18000e"/><path d="M362.8 338.8L365.6 344.8L367.3 347.9L364.5 341.4Z" fill="#e17800"/><path d="M311.4 395.6L314.3 390.7L316.0 390.0L313.1 394.9Z" fill="#5900b2"/><path d="M182.5 331.4L185.3 328.7L187.0 327.1L184.2 329.1Z" fill="#fae100"/><path d="M226.1 390.7L229.0 393.8L230.7 397.1L227.8 394.6Z" fill="#52009b"/><path d="M223.3 387.0L226.1 390.7L227.8 394.6L225.0 391.4Z" fill="#6101ca"/><path d="M287.4 394.2L290.2 398.6L291.9 396.3L289.1 391.1Z" fill="#4e008e"/><path d="M249.5 375.4L252.4 372.5L254.1 364.2L251.2 367.7Z" fill="#a61376"/><path d="M343.8 333.1L346.7 330.3L348.4 327.9L345.6 329.7Z" fill="#f9db00"/><path d="M248.5 398.5L251.3 398.6L253.0 393.4L250.2 393.5Z" fill="#48007b"/><path d="M187.0 327.1L189.9 326.8L191.6 326.2L188.7 325.8Z" fill="#fefb00"/><path d="M229.0 393.8L231.9 396.3L233.6 399.0L230.7 397.1Z" fill="#450071"/><path d="M327.4 373.0L330.2 365.7L331.9 362.3L329.1 369.5Z" fill="#ac1844"/><path d="M317.7 388.8L320.5 382.5L322.2 380.8L319.4 387.2Z" fill="#7a03fd"/><path d="M210.6 365.1L213.5 371.5L215.2 376.2L212.3 369.8Z" fill="#a41283"/><path d="M286.7 370.4L289.6 378.6L291.3 376.8L288.4 368.3Z" fill="#9d0eb0"/><path d="M220.4 382.7L223.3 387.0L225.0 391.4L222.1 387.5Z" fill="#7102f1"/><path d="M286.2 384.7L289.1 391.1L290.8 388.3L287.9 381.3Z" fill="#7502f7"/><path d="M283.2 344.2L286.1 351.5L287.8 353.9L284.9 346.9Z" fill="#d55800"/><path d="M195.6 331.4L198.5 336.1L200.2 337.8L197.3 332.4Z" fill="#f1b500"/><path d="M250.2 393.5L253.0 393.4L254.7 386.6L251.9 386.9Z" fill="#6601d7"/><path d="M246.8 401.7L249.6 402.0L251.3 398.6L248.5 398.5Z" fill="#2a002b"/><path d="M231.9 396.3L234.7 398.2L236.4 400.4L233.6 399.0Z" fill="#39004f"/><path d="M300.6 401.7L303.4 399.7L305.1 399.7L302.3 401.3Z" fill="#270026"/><path d="M348.4 327.9L351.3 327.3L353.0 326.7L350.1 326.2Z" fill="#fefb00"/><path d="M242.2 402.2L245.0 402.7L246.8 401.7L243.9 401.4Z" fill="#110007"/><path d="M305.1 399.7L308.0 396.2L309.7 396.1L306.8 399.3Z" fill="#3f0061"/><path d="M296.0 402.6L298.8 401.9L300.6 401.7L297.7 401.8Z" fill="#15000b"/><path d="M259.7 340.8L262.6 335.5L264.3 334.7L261.4 340.0Z" fill="#eb9e00"/><path d="M342.1 337.0L345.0 333.2L346.7 330.3L343.8 333.1Z" fill="#f4c200"/><path d="M325.7 376.1L328.5 368.7L330.2 365.7L327.4 373.0Z" fill="#a5137e"/><path d="M189.9 326.8L192.8 328.2L194.5 328.4L191.6 326.2Z" fill="#fdf500"/><path d="M268.9 332.4L271.8 330.8L273.5 334.1L270.6 335.6Z" fill="#f4c200"/><path d="M199.7 339.7L202.5 345.9L204.2 348.8L201.4 342.0Z" fill="#df7300"/><path d="M288.5 400.8L291.4 402.7L293.1 401.4L290.2 398.6Z" fill="#260024"/><path d="M217.5 377.7L220.4 382.7L222.1 387.5L219.2 382.8Z" fill="#8205fe"/><path d="M250.7 380.6L253.6 379.1L255.3 370.6L252.4 372.5Z" fill="#980bcb"/><path d="M192.8 328.2L195.6 331.4L197.3 332.4L194.5 328.4Z" fill="#f9dc00"/><path d="M359.9 333.9L362.8 338.8L364.5 341.4L361.6 335.9Z" fill="#eca200"/><path d="M285.6 359.7L288.4 368.3L290.1 367.6L287.3 358.9Z" fill="#b72200"/><path d="M285.7 397.3L288.5 400.8L290.2 398.6L287.4 394.2Z" fill="#410064"/><path d="M284.5 388.7L287.4 394.2L289.1 391.1L286.2 384.7Z" fill="#6901e0"/><path d="M180.7 334.1L183.6 330.7L185.3 328.7L182.5 331.4Z" fill="#f7d200"/><path d="M234.7 398.2L237.6 399.7L239.3 401.4L236.4 400.4Z" fill="#2f0036"/><path d="M203.7 349.3L206.6 356.0L208.3 360.0L205.4 352.8Z" fill="#cb4000"/><path d="M251.3 398.6L254.2 399.1L255.9 393.9L253.0 393.4Z" fill="#4a0080"/><path d="M284.4 350.6L287.3 358.9L289.0 359.6L286.1 351.5Z" fill="#ca3f00"/><path d="M251.2 367.7L254.1 364.2L255.8 356.1L252.9 360.2Z" fill="#ba2700"/><path d="M285.0 373.5L287.9 381.3L289.6 378.6L286.7 370.4Z" fill="#980bcb"/><path d="M251.9 386.9L254.7 386.6L256.4 378.5L253.6 379.1Z" fill="#8205fe"/><path d="M340.4 341.2L343.3 336.6L345.0 333.2L342.1 337.0Z" fill="#eea700"/><path d="M351.3 327.3L354.2 328.1L355.9 328.5L353.0 326.7Z" fill="#fef900"/><path d="M291.4 402.7L294.3 403.1L296.0 402.6L293.1 401.4Z" fill="#110007"/><path d="M249.6 402.0L252.5 402.4L254.2 399.1L251.3 398.6Z" fill="#2b002e"/><path d="M253.0 393.4L255.9 393.9L257.6 387.0L254.7 386.6Z" fill="#6801dc"/><path d="M245.0 402.7L247.9 403.2L249.6 402.0L246.8 401.7Z" fill="#120008"/><path d="M264.3 334.7L267.2 331.2L268.9 332.4L266.0 335.9Z" fill="#f4c200"/><path d="M282.8 392.8L285.7 397.3L287.4 394.2L284.5 388.7Z" fill="#5b01b6"/><path d="M357.0 330.3L359.9 333.9L361.6 335.9L358.7 331.6Z" fill="#f5c900"/><path d="M316.0 390.0L318.8 383.7L320.5 382.5L317.7 388.8Z" fill="#7803fb"/><path d="M207.7 358.5L210.6 365.1L212.3 369.8L209.4 363.0Z" fill="#b62200"/><path d="M309.7 396.1L312.6 391.1L314.3 390.7L311.4 395.6Z" fill="#5a01b5"/><path d="M185.3 328.7L188.2 327.6L189.9 326.8L187.0 327.1Z" fill="#fef800"/><path d="M324.0 378.7L326.8 371.3L328.5 368.7L325.7 376.1Z" fill="#9e0fa7"/><path d="M354.2 328.1L357.0 330.3L358.7 331.6L355.9 328.5Z" fill="#fbe700"/><path d="M237.6 399.7L240.5 400.9L242.2 402.2L239.3 401.4Z" fill="#270026"/><path d="M280.4 338.2L283.2 344.2L284.9 346.9L282.1 341.2Z" fill="#e38000"/><path d="M214.6 372.2L217.5 377.7L219.2 382.8L216.4 377.4Z" fill="#9309dd"/><path d="M338.7 345.6L341.6 340.3L343.3 336.6L340.4 341.2Z" fill="#e78c00"/><path d="M346.7 330.3L349.6 328.7L351.3 327.3L348.4 327.9Z" fill="#fdf200"/><path d="M283.3 377.6L286.2 384.7L287.9 381.3L285.0 373.5Z" fill="#8f08eb"/><path d="M284.0 400.3L286.8 402.6L288.5 400.8L285.7 397.3Z" fill="#31003a"/><path d="M179.0 337.2L181.9 333.2L183.6 330.7L180.7 334.1Z" fill="#f3c000"/><path d="M254.2 399.1L257.1 399.9L258.8 394.9L255.9 393.9Z" fill="#48007b"/><path d="M258.0 343.3L260.9 338.2L262.6 335.5L259.7 340.8Z" fill="#e99600"/><path d="M196.8 334.5L199.7 339.7L201.4 342.0L198.5 336.1Z" fill="#ec9f00"/><path d="M252.9 360.2L255.8 356.1L257.5 348.8L254.6 353.3Z" fill="#cc4200"/><path d="M281.1 396.8L284.0 400.3L285.7 397.3L282.8 392.8Z" fill="#4a0080"/><path d="M337.0 350.0L339.9 344.1L341.6 340.3L338.7 345.6Z" fill="#df7300"/><path d="M271.8 330.8L274.6 331.3L276.3 334.6L273.5 334.1Z" fill="#f6cc00"/><path d="M252.4 372.5L255.3 370.6L257.0 361.8L254.1 364.2Z" fill="#af1b2c"/><path d="M286.8 402.6L289.7 403.7L291.4 402.7L288.5 400.8Z" fill="#19000f"/><path d="M281.6 382.3L284.5 388.7L286.2 384.7L283.3 377.6Z" fill="#8205fe"/><path d="M255.9 393.9L258.8 394.9L260.5 388.3L257.6 387.0Z" fill="#6601d7"/><path d="M252.5 402.4L255.4 403.0L257.1 399.9L254.2 399.1Z" fill="#2a002b"/><path d="M283.9 361.9L286.7 370.4L288.4 368.3L285.6 359.7Z" fill="#b52000"/><path d="M160.3 393.0L163.2 389.2L164.9 383.6L162.0 388.1Z" fill="#7002ee"/><path d="M298.8 401.9L301.7 399.4L303.4 399.7L300.6 401.7Z" fill="#2f0036"/><path d="M254.7 386.6L257.6 387.0L259.3 379.0L256.4 378.5Z" fill="#8405fd"/><path d="M158.6 397.1L161.5 394.2L163.2 389.2L160.3 393.0Z" fill="#5b01b7"/><path d="M247.9 403.2L250.8 403.7L252.5 402.4L249.6 402.0Z" fill="#120008"/><path d="M253.6 379.1L256.4 378.5L258.1 369.8L255.3 370.6Z" fill="#9d0eb0"/><path d="M162.0 388.1L164.9 383.6L166.6 377.6L163.7 382.8Z" fill="#8305fe"/><path d="M279.9 387.4L282.8 392.8L284.5 388.7L281.6 382.3Z" fill="#7302f5"/><path d="M240.5 400.9L243.3 401.8L245.0 402.7L242.2 402.2Z" fill="#22001c"/><path d="M335.3 354.4L338.2 347.9L339.9 344.1L337.0 350.0Z" fill="#d85e00"/><path d="M200.8 343.0L203.7 349.3L205.4 352.8L202.5 345.9Z" fill="#da6300"/><path d="M294.3 403.1L297.1 401.7L298.8 401.9L296.0 402.6Z" fill="#1e0016"/><path d="M277.5 333.8L280.4 338.2L282.1 341.2L279.2 337.0Z" fill="#eda600"/><path d="M254.6 353.3L257.5 348.8L259.2 342.7L256.3 347.6Z" fill="#d96200"/><path d="M303.4 399.7L306.3 395.9L308.0 396.2L305.1 399.7Z" fill="#450071"/><path d="M256.3 347.6L259.2 342.7L260.9 338.2L258.0 343.3Z" fill="#e38000"/><path d="M188.2 327.6L191.1 328.3L192.8 328.2L189.9 326.8Z" fill="#fefb00"/><path d="M257.1 399.9L259.9 400.9L261.6 396.3L258.8 394.9Z" fill="#44006d"/><path d="M278.2 392.5L281.1 396.8L282.8 392.8L279.9 387.4Z" fill="#6101ca"/><path d="M177.3 340.9L180.2 336.3L181.9 333.2L179.0 337.2Z" fill="#eeaa00"/><path d="M322.2 380.8L325.1 373.5L326.8 371.3L324.0 378.7Z" fill="#990cc3"/><path d="M274.6 331.3L277.5 333.8L279.2 337.0L276.3 334.6Z" fill="#f4c200"/><path d="M163.7 382.8L166.6 377.6L168.3 371.5L165.4 377.1Z" fill="#950ad6"/><path d="M211.8 366.3L214.6 372.2L216.4 377.4L213.5 371.5Z" fill="#a41283"/><path d="M361.1 336.8L363.9 342.2L365.6 344.8L362.8 338.8Z" fill="#e89200"/><path d="M193.9 330.7L196.8 334.5L198.5 336.1L195.6 331.4Z" fill="#f5c900"/><path d="M279.4 400.3L282.3 402.7L284.0 400.3L281.1 396.8Z" fill="#360048"/><path d="M258.8 394.9L261.6 396.3L263.3 390.2L260.5 388.3Z" fill="#6101ca"/><path d="M345.0 333.2L347.9 330.7L349.6 328.7L346.7 330.3Z" fill="#fae200"/><path d="M333.6 358.5L336.5 351.6L338.2 347.9L335.3 354.4Z" fill="#d04b00"/><path d="M183.6 330.7L186.5 328.9L188.2 327.6L185.3 328.7Z" fill="#fcf000"/><path d="M281.5 343.1L284.4 350.6L286.1 351.5L283.2 344.2Z" fill="#db6700"/><path d="M276.5 397.1L279.4 400.3L281.1 396.8L278.2 392.5Z" fill="#4d0089"/><path d="M204.9 352.0L207.7 358.5L209.4 363.0L206.6 356.0Z" fill="#c73900"/><path d="M191.1 328.3L193.9 330.7L195.6 331.4L192.8 328.2Z" fill="#fbea00"/><path d="M282.3 402.7L285.1 404.0L286.8 402.6L284.0 400.3Z" fill="#200019"/><path d="M289.7 403.7L292.6 403.1L294.3 403.1L291.4 402.7Z" fill="#130009"/><path d="M282.7 351.4L285.6 359.7L287.3 358.9L284.4 350.6Z" fill="#cc4200"/><path d="M165.4 377.1L168.3 371.5L170.0 365.4L167.1 371.3Z" fill="#a61379"/><path d="M349.6 328.7L352.5 328.5L354.2 328.1L351.3 327.3Z" fill="#fefc00"/><path d="M255.4 403.0L258.2 403.7L259.9 400.9L257.1 399.9Z" fill="#260024"/><path d="M314.3 390.7L317.1 384.4L318.8 383.7L316.0 390.0Z" fill="#7703fa"/><path d="M257.6 387.0L260.5 388.3L262.2 380.5L259.3 379.0Z" fill="#8205fe"/><path d="M282.2 365.5L285.0 373.5L286.7 370.4L283.9 361.9Z" fill="#af1b2c"/><path d="M261.6 396.3L264.5 398.2L266.2 392.7L263.3 390.2Z" fill="#5900b1"/><path d="M175.6 345.0L178.5 339.8L180.2 336.3L177.3 340.9Z" fill="#e89200"/><path d="M259.9 400.9L262.8 402.1L264.5 398.2L261.6 396.3Z" fill="#3c0058"/><path d="M243.3 401.8L246.2 402.4L247.9 403.2L245.0 402.7Z" fill="#1f0017"/><path d="M273.7 393.4L276.5 397.1L278.2 392.5L275.4 387.7Z" fill="#6101ca"/><path d="M250.8 403.7L253.7 404.1L255.4 403.0L252.5 402.4Z" fill="#120008"/><path d="M167.1 371.3L170.0 365.4L171.7 359.5L168.8 365.5Z" fill="#b52000"/><path d="M331.9 362.3L334.8 355.1L336.5 351.6L333.6 358.5Z" fill="#c93c00"/><path d="M308.0 396.2L310.9 391.1L312.6 391.1L309.7 396.1Z" fill="#5d01bf"/><path d="M227.3 389.1L230.2 392.0L231.9 396.3L229.0 393.8Z" fill="#6001c7"/><path d="M224.4 385.7L227.3 389.1L229.0 393.8L226.1 390.7Z" fill="#6d02e8"/><path d="M254.1 364.2L257.0 361.8L258.7 353.4L255.8 356.1Z" fill="#c43500"/><path d="M275.4 387.7L278.2 392.5L279.9 387.4L277.1 381.7Z" fill="#7703f9"/><path d="M271.9 398.3L274.8 400.9L276.5 397.1L273.7 393.4Z" fill="#4a0080"/><path d="M264.5 398.2L267.4 400.1L269.1 395.4L266.2 392.7Z" fill="#4e008e"/><path d="M274.8 400.9L277.7 403.0L279.4 400.3L276.5 397.1Z" fill="#360048"/><path d="M262.6 335.5L265.5 331.9L267.2 331.2L264.3 334.7Z" fill="#f6cc00"/><path d="M260.5 388.3L263.3 390.2L265.0 382.8L262.2 380.5Z" fill="#7d04ff"/><path d="M269.1 395.4L271.9 398.3L273.7 393.4L270.8 389.6Z" fill="#5b01b6"/><path d="M173.9 349.5L176.8 344.0L178.5 339.8L175.6 345.0Z" fill="#e17800"/><path d="M267.2 331.2L270.1 329.5L271.8 330.8L268.9 332.4Z" fill="#fae100"/><path d="M230.2 392.0L233.0 394.4L234.7 398.2L231.9 396.3Z" fill="#5500a5"/><path d="M358.2 332.5L361.1 336.8L362.8 338.8L359.9 333.9Z" fill="#f2bc00"/><path d="M256.4 378.5L259.3 379.0L261.0 370.2L258.1 369.8Z" fill="#9f0fa6"/><path d="M168.8 365.5L171.7 359.5L173.4 353.9L170.5 359.9Z" fill="#c23100"/><path d="M280.5 370.2L283.3 377.6L285.0 373.5L282.2 365.5Z" fill="#a61376"/><path d="M277.1 381.7L279.9 387.4L281.6 382.3L278.8 375.7Z" fill="#8906f7"/><path d="M221.6 381.6L224.4 385.7L226.1 390.7L223.3 387.0Z" fill="#7a03fd"/><path d="M285.1 404.0L288.0 404.0L289.7 403.7L286.8 402.6Z" fill="#100007"/><path d="M267.4 400.1L270.2 402.0L271.9 398.3L269.1 395.4Z" fill="#410064"/><path d="M266.2 392.7L269.1 395.4L270.8 389.6L267.9 386.0Z" fill="#6901e0"/><path d="M198.0 337.6L200.8 343.0L202.5 345.9L199.7 339.7Z" fill="#e78c00"/><path d="M278.8 375.7L281.6 382.3L283.3 377.6L280.5 370.2Z" fill="#990cc3"/><path d="M263.3 390.2L266.2 392.7L267.9 386.0L265.0 382.8Z" fill="#7502f7"/><path d="M277.7 403.0L280.6 404.2L282.3 402.7L279.4 400.3Z" fill="#22001d"/><path d="M262.8 402.1L265.7 403.3L267.4 400.1L264.5 398.2Z" fill="#32003e"/><path d="M172.2 354.5L175.1 348.7L176.8 344.0L173.9 349.5Z" fill="#d85e00"/><path d="M170.5 359.9L173.4 353.9L175.1 348.7L172.2 354.5Z" fill="#ce4600"/><path d="M352.5 328.5L355.3 329.8L357.0 330.3L354.2 328.1Z" fill="#fdf500"/><path d="M343.3 336.6L346.2 333.2L347.9 330.7L345.0 333.2Z" fill="#f6ce00"/><path d="M270.8 389.6L273.7 393.4L275.4 387.7L272.5 383.0Z" fill="#7302f5"/><path d="M255.3 370.6L258.1 369.8L259.8 360.8L257.0 361.8Z" fill="#b52000"/><path d="M320.5 382.5L323.4 375.2L325.1 373.5L322.2 380.8Z" fill="#950ad4"/><path d="M258.2 403.7L261.1 404.3L262.8 402.1L259.9 400.9Z" fill="#200019"/><path d="M355.3 329.8L358.2 332.5L359.9 333.9L357.0 330.3Z" fill="#f9df00"/><path d="M208.9 360.2L211.8 366.3L213.5 371.5L210.6 365.1Z" fill="#b52000"/><path d="M270.2 402.0L273.1 403.6L274.8 400.9L271.9 398.3Z" fill="#31003a"/><path d="M330.2 365.7L333.1 358.3L334.8 355.1L331.9 362.3Z" fill="#c23100"/><path d="M233.0 394.4L235.9 396.3L237.6 399.7L234.7 398.2Z" fill="#4c0088"/><path d="M218.7 377.1L221.6 381.6L223.3 387.0L220.4 382.7Z" fill="#8906f8"/><path d="M181.9 333.2L184.8 330.7L186.5 328.9L183.6 330.7Z" fill="#fae300"/><path d="M246.2 402.4L249.1 402.9L250.8 403.7L247.9 403.2Z" fill="#1e0016"/><path d="M186.5 328.9L189.4 328.7L191.1 328.3L188.2 327.6Z" fill="#fefc00"/><path d="M253.7 404.1L256.5 404.4L258.2 403.7L255.4 403.0Z" fill="#110007"/><path d="M265.7 403.3L268.5 404.3L270.2 402.0L267.4 400.1Z" fill="#260024"/><path d="M267.9 386.0L270.8 389.6L272.5 383.0L269.6 378.5Z" fill="#8205fe"/><path d="M272.5 383.0L275.4 387.7L277.1 381.7L274.2 376.0Z" fill="#8906f7"/><path d="M259.3 379.0L262.2 380.5L263.9 371.9L261.0 370.2Z" fill="#9d0eb0"/><path d="M297.1 401.7L300.0 398.7L301.7 399.4L298.8 401.9Z" fill="#39004f"/><path d="M281.0 353.8L283.9 361.9L285.6 359.7L282.7 351.4Z" fill="#ca3f00"/><path d="M202.0 345.8L204.9 352.0L206.6 356.0L203.7 349.3Z" fill="#d65800"/><path d="M280.6 404.2L283.4 404.5L285.1 404.0L282.3 402.7Z" fill="#120008"/><path d="M273.1 403.6L276.0 404.6L277.7 403.0L274.8 400.9Z" fill="#200019"/><path d="M278.7 337.0L281.5 343.1L283.2 344.2L280.4 338.2Z" fill="#e99600"/><path d="M292.6 403.1L295.4 401.1L297.1 401.7L294.3 403.1Z" fill="#29002a"/><path d="M255.8 356.1L258.7 353.4L260.4 345.8L257.5 348.8Z" fill="#d55800"/><path d="M235.9 396.3L238.8 397.7L240.5 400.9L237.6 399.7Z" fill="#450071"/><path d="M347.9 330.7L350.8 329.5L352.5 328.5L349.6 328.7Z" fill="#fef700"/><path d="M341.6 340.3L344.5 336.0L346.2 333.2L343.3 336.6Z" fill="#f1b600"/><path d="M301.7 399.4L304.6 395.3L306.3 395.9L303.4 399.7Z" fill="#4c0088"/><path d="M265.0 382.8L267.9 386.0L269.6 378.5L266.7 374.8Z" fill="#8f08eb"/><path d="M195.1 333.2L198.0 337.6L199.7 339.7L196.8 334.5Z" fill="#f1b600"/><path d="M261.1 404.3L264.0 404.8L265.7 403.3L262.8 402.1Z" fill="#18000e"/><path d="M262.2 380.5L265.0 382.8L266.7 374.8L263.9 371.9Z" fill="#980bcb"/><path d="M328.5 368.7L331.4 361.2L333.1 358.3L330.2 365.7Z" fill="#bb2800"/><path d="M260.9 338.2L263.8 334.7L265.5 331.9L262.6 335.5Z" fill="#f4c200"/><path d="M215.8 372.0L218.7 377.1L220.4 382.7L217.5 377.7Z" fill="#980bca"/><path d="M312.6 391.1L315.4 384.7L317.1 384.4L314.3 390.7Z" fill="#7803fb"/><path d="M274.2 376.0L277.1 381.7L278.8 375.7L275.9 369.2Z" fill="#9d0eb0"/><path d="M288.0 404.0L290.9 402.6L292.6 403.1L289.7 403.7Z" fill="#1f0017"/><path d="M161.5 394.2L164.4 390.6L166.1 384.8L163.2 389.2Z" fill="#7002ee"/><path d="M279.8 343.9L282.7 351.4L284.4 350.6L281.5 343.1Z" fill="#dd6d00"/><path d="M268.5 404.3L271.4 404.9L273.1 403.6L270.2 402.0Z" fill="#19000f"/><path d="M270.1 329.5L272.9 330.0L274.6 331.3L271.8 330.8Z" fill="#fced00"/><path d="M189.4 328.7L192.2 330.2L193.9 330.7L191.1 328.3Z" fill="#fdf400"/><path d="M258.1 369.8L261.0 370.2L262.7 361.3L259.8 360.8Z" fill="#b72200"/><path d="M276.0 404.6L278.9 404.8L280.6 404.2L277.7 403.0Z" fill="#120008"/><path d="M192.2 330.2L195.1 333.2L196.8 334.5L193.9 330.7Z" fill="#f9db00"/><path d="M163.2 389.2L166.1 384.8L167.8 378.6L164.9 383.6Z" fill="#8405fe"/><path d="M269.6 378.5L272.5 383.0L274.2 376.0L271.3 370.8Z" fill="#990cc3"/><path d="M279.3 357.7L282.2 365.5L283.9 361.9L281.0 353.8Z" fill="#c43500"/><path d="M180.2 336.3L183.1 333.0L184.8 330.7L181.9 333.2Z" fill="#f7d200"/><path d="M257.5 348.8L260.4 345.8L262.1 339.4L259.2 342.7Z" fill="#e38000"/><path d="M339.9 344.1L342.8 339.1L344.5 336.0L341.6 340.3Z" fill="#ec9f00"/><path d="M238.8 397.7L241.6 398.8L243.3 401.8L240.5 400.9Z" fill="#3f0061"/><path d="M249.1 402.9L252.0 403.1L253.7 404.1L250.8 403.7Z" fill="#1f0017"/><path d="M257.0 361.8L259.8 360.8L261.5 352.2L258.7 353.4Z" fill="#ca3f00"/><path d="M256.5 404.4L259.4 404.5L261.1 404.3L258.2 403.7Z" fill="#110007"/><path d="M206.0 354.0L208.9 360.2L210.6 365.1L207.7 358.5Z" fill="#c43500"/><path d="M318.8 383.7L321.7 376.4L323.4 375.2L320.5 382.5Z" fill="#9309dd"/><path d="M275.9 369.2L278.8 375.7L280.5 370.2L277.6 363.0Z" fill="#ad193c"/><path d="M275.8 332.5L278.7 337.0L280.4 338.2L277.5 333.8Z" fill="#f4c200"/><path d="M259.2 342.7L262.1 339.4L263.8 334.7L260.9 338.2Z" fill="#eda600"/><path d="M306.3 395.9L309.2 390.6L310.9 391.1L308.0 396.2Z" fill="#6201cd"/><path d="M277.6 363.0L280.5 370.2L282.2 365.5L279.3 357.7Z" fill="#ba2700"/><path d="M283.4 404.5L286.3 403.5L288.0 404.0L285.1 404.0Z" fill="#19000f"/><path d="M359.4 335.2L362.2 340.2L363.9 342.2L361.1 336.8Z" fill="#eeaa00"/><path d="M272.9 330.0L275.8 332.5L277.5 333.8L274.6 331.3Z" fill="#fae100"/><path d="M164.9 383.6L167.8 378.6L169.5 372.2L166.6 377.6Z" fill="#970bcf"/><path d="M264.0 404.8L266.8 405.0L268.5 404.3L265.7 403.3Z" fill="#110007"/><path d="M326.8 371.3L329.7 363.7L331.4 361.2L328.5 368.7Z" fill="#b62200"/><path d="M199.1 340.3L202.0 345.8L203.7 349.3L200.8 343.0Z" fill="#e37e00"/><path d="M350.8 329.5L353.6 329.9L355.3 329.8L352.5 328.5Z" fill="#fefb00"/><path d="M265.5 331.9L268.4 330.3L270.1 329.5L267.2 331.2Z" fill="#fced00"/><path d="M212.9 366.6L215.8 372.0L217.5 377.7L214.6 372.2Z" fill="#a7146f"/><path d="M266.7 374.8L269.6 378.5L271.3 370.8L268.4 366.4Z" fill="#a61376"/><path d="M271.4 404.9L274.3 404.9L276.0 404.6L273.1 403.6Z" fill="#100007"/><path d="M261.0 370.2L263.9 371.9L265.6 363.2L262.7 361.3Z" fill="#b52000"/><path d="M346.2 333.2L349.1 331.1L350.8 329.5L347.9 330.7Z" fill="#fceb00"/><path d="M338.2 347.9L341.1 342.3L342.8 339.1L339.9 344.1Z" fill="#e68900"/><path d="M184.8 330.7L187.7 329.6L189.4 328.7L186.5 328.9Z" fill="#fef800"/><path d="M166.6 377.6L169.5 372.2L171.2 365.8L168.3 371.5Z" fill="#a81567"/><path d="M263.9 371.9L266.7 374.8L268.4 366.4L265.6 363.2Z" fill="#af1b2c"/><path d="M271.3 370.8L274.2 376.0L275.9 369.2L273.0 363.3Z" fill="#ad193c"/><path d="M178.5 339.8L181.4 335.9L183.1 333.0L180.2 336.3Z" fill="#f2bc00"/><path d="M241.6 398.8L244.5 399.6L246.2 402.4L243.3 401.8Z" fill="#3c0057"/><path d="M356.5 331.8L359.4 335.2L361.1 336.8L358.2 332.5Z" fill="#f7d200"/><path d="M278.9 404.8L281.7 404.0L283.4 404.5L280.6 404.2Z" fill="#17000d"/><path d="M353.6 329.9L356.5 331.8L358.2 332.5L355.3 329.8Z" fill="#fcee00"/><path d="M278.1 346.5L281.0 353.8L282.7 351.4L279.8 343.9Z" fill="#db6700"/><path d="M259.4 404.5L262.3 404.4L264.0 404.8L261.1 404.3Z" fill="#15000b"/><path d="M252.0 403.1L254.8 403.1L256.5 404.4L253.7 404.1Z" fill="#22001c"/><path d="M168.3 371.5L171.2 365.8L172.9 359.6L170.0 365.4Z" fill="#b82300"/><path d="M277.0 337.7L279.8 343.9L281.5 343.1L278.7 337.0Z" fill="#eb9e00"/><path d="M336.5 351.6L339.4 345.5L341.1 342.3L338.2 347.9Z" fill="#e07400"/><path d="M258.7 353.4L261.5 352.2L263.2 344.4L260.4 345.8Z" fill="#db6700"/><path d="M266.8 405.0L269.7 404.7L271.4 404.9L268.5 404.3Z" fill="#130009"/><path d="M259.8 360.8L262.7 361.3L264.4 352.6L261.5 352.2Z" fill="#cc4200"/><path d="M203.2 348.1L206.0 354.0L207.7 358.5L204.9 352.0Z" fill="#d35200"/><path d="M176.8 344.0L179.7 339.4L181.4 335.9L178.5 339.8Z" fill="#eca200"/><path d="M295.4 401.1L298.3 397.4L300.0 398.7L297.1 401.7Z" fill="#450071"/><path d="M196.3 335.7L199.1 340.3L200.8 343.0L198.0 337.6Z" fill="#eea700"/><path d="M273.0 363.3L275.9 369.2L277.6 363.0L274.7 356.5Z" fill="#be2c00"/><path d="M290.9 402.6L293.7 399.8L295.4 401.1L292.6 403.1Z" fill="#38004c"/><path d="M325.1 373.5L328.0 365.8L329.7 363.7L326.8 371.3Z" fill="#b21d18"/><path d="M310.9 391.1L313.7 384.6L315.4 384.7L312.6 391.1Z" fill="#7a03fd"/><path d="M210.1 360.9L212.9 366.6L214.6 372.2L211.8 366.3Z" fill="#b62200"/><path d="M170.0 365.4L172.9 359.6L174.6 353.8L171.7 359.5Z" fill="#c53700"/><path d="M268.4 366.4L271.3 370.8L273.0 363.3L270.2 358.4Z" fill="#ba2700"/><path d="M317.1 384.4L320.0 377.1L321.7 376.4L318.8 383.7Z" fill="#9209e0"/><path d="M274.3 404.9L277.2 404.2L278.9 404.8L276.0 404.6Z" fill="#19000f"/><path d="M300.0 398.7L302.9 394.1L304.6 395.3L301.7 399.4Z" fill="#5500a5"/><path d="M187.7 329.6L190.5 330.2L192.2 330.2L189.4 328.7Z" fill="#fefb00"/><path d="M344.5 336.0L347.3 333.0L349.1 331.1L346.2 333.2Z" fill="#f9db00"/><path d="M263.8 334.7L266.7 333.1L268.4 330.3L265.5 331.9Z" fill="#fae100"/><path d="M276.4 350.8L279.3 357.7L281.0 353.8L278.1 346.5Z" fill="#d55800"/><path d="M244.5 399.6L247.4 400.0L249.1 402.9L246.2 402.4Z" fill="#3b0054"/><path d="M175.1 348.7L178.0 343.6L179.7 339.4L176.8 344.0Z" fill="#e58600"/><path d="M171.7 359.5L174.6 353.8L176.3 348.4L173.4 353.9Z" fill="#d24f00"/><path d="M268.4 330.3L271.2 330.7L272.9 330.0L270.1 329.5Z" fill="#fef900"/><path d="M286.3 403.5L289.2 401.3L290.9 402.6L288.0 404.0Z" fill="#2f0036"/><path d="M274.7 356.5L277.6 363.0L279.3 357.7L276.4 350.8Z" fill="#cc4200"/><path d="M173.4 353.9L176.3 348.4L178.0 343.6L175.1 348.7Z" fill="#dc6a00"/><path d="M334.8 355.1L337.7 348.5L339.4 345.5L336.5 351.6Z" fill="#da6300"/><path d="M183.1 333.0L186.0 331.1L187.7 329.6L184.8 330.7Z" fill="#fcee00"/><path d="M262.7 361.3L265.6 363.2L267.3 354.7L264.4 352.6Z" fill="#ca3f00"/><path d="M193.4 332.3L196.3 335.7L198.0 337.6L195.1 333.2Z" fill="#f6ce00"/><path d="M260.4 345.8L263.2 344.4L264.9 337.9L262.1 339.4Z" fill="#e99600"/><path d="M265.6 363.2L268.4 366.4L270.2 358.4L267.3 354.7Z" fill="#c43500"/><path d="M349.1 331.1L351.9 330.5L353.6 329.9L350.8 329.5Z" fill="#fefb00"/><path d="M190.5 330.2L193.4 332.3L195.1 333.2L192.2 330.2Z" fill="#fceb00"/><path d="M225.6 383.3L228.5 386.4L230.2 392.0L227.3 389.1Z" fill="#7b03fe"/><path d="M274.1 333.3L277.0 337.7L278.7 337.0L275.8 332.5Z" fill="#f6cc00"/><path d="M228.5 386.4L231.3 389.1L233.0 394.4L230.2 392.0Z" fill="#7102f1"/><path d="M254.8 403.1L257.7 402.9L259.4 404.5L256.5 404.4Z" fill="#270026"/><path d="M262.3 404.4L265.1 403.9L266.8 405.0L264.0 404.8Z" fill="#1e0016"/><path d="M262.1 339.4L264.9 337.9L266.7 333.1L263.8 334.7Z" fill="#f4c200"/><path d="M222.7 379.7L225.6 383.3L227.3 389.1L224.4 385.7Z" fill="#8605fb"/><path d="M271.2 330.7L274.1 333.3L275.8 332.5L272.9 330.0Z" fill="#fced00"/><path d="M281.7 404.0L284.6 402.2L286.3 403.5L283.4 404.5Z" fill="#2b002c"/><path d="M304.6 395.3L307.5 389.7L309.2 390.6L306.3 395.9Z" fill="#6901df"/><path d="M231.3 389.1L234.2 391.2L235.9 396.3L233.0 394.4Z" fill="#6901df"/><path d="M164.4 390.6L167.2 386.4L168.9 380.0L166.1 384.8Z" fill="#8305fe"/><path d="M269.7 404.7L272.6 403.8L274.3 404.9L271.4 404.9Z" fill="#1f0017"/><path d="M275.3 340.5L278.1 346.5L279.8 343.9L277.0 337.7Z" fill="#e99600"/><path d="M261.5 352.2L264.4 352.6L266.1 344.8L263.2 344.4Z" fill="#dd6d00"/><path d="M270.2 358.4L273.0 363.3L274.7 356.5L271.9 351.1Z" fill="#cc4200"/><path d="M200.3 342.6L203.2 348.1L204.9 352.0L202.0 345.8Z" fill="#e07400"/><path d="M219.9 375.5L222.7 379.7L224.4 385.7L221.6 381.6Z" fill="#9209e0"/><path d="M333.1 358.3L336.0 351.4L337.7 348.5L334.8 355.1Z" fill="#d45500"/><path d="M342.8 339.1L345.6 335.3L347.3 333.0L344.5 336.0Z" fill="#f5c900"/><path d="M207.2 355.2L210.1 360.9L211.8 366.3L208.9 360.2Z" fill="#c43500"/><path d="M323.4 375.2L326.3 367.4L328.0 365.8L325.1 373.5Z" fill="#ae1a34"/><path d="M247.4 400.0L250.3 400.2L252.0 403.1L249.1 402.9Z" fill="#3c0057"/><path d="M357.7 334.3L360.5 338.5L362.2 340.2L359.4 335.2Z" fill="#f3c000"/><path d="M234.2 391.2L237.1 392.9L238.8 397.7L235.9 396.3Z" fill="#6201cd"/><path d="M166.1 384.8L168.9 380.0L170.6 373.4L167.8 378.6Z" fill="#970bcf"/><path d="M351.9 330.5L354.8 331.5L356.5 331.8L353.6 329.9Z" fill="#fef800"/><path d="M181.4 335.9L184.2 333.2L186.0 331.1L183.1 333.0Z" fill="#f9df00"/><path d="M266.7 333.1L269.5 333.6L271.2 330.7L268.4 330.3Z" fill="#fced00"/><path d="M277.2 404.2L280.0 402.5L281.7 404.0L278.9 404.8Z" fill="#2b002c"/><path d="M271.9 351.1L274.7 356.5L276.4 350.8L273.6 345.0Z" fill="#d96200"/><path d="M273.6 345.0L276.4 350.8L278.1 346.5L275.3 340.5Z" fill="#e38000"/><path d="M217.0 371.0L219.9 375.5L221.6 381.6L218.7 377.1Z" fill="#9f0fa3"/><path d="M267.3 354.7L270.2 358.4L271.9 351.1L269.0 347.1Z" fill="#d55800"/><path d="M264.4 352.6L267.3 354.7L269.0 347.1L266.1 344.8Z" fill="#db6700"/><path d="M354.8 331.5L357.7 334.3L359.4 335.2L356.5 331.8Z" fill="#fae300"/><path d="M263.2 344.4L266.1 344.8L267.8 338.4L264.9 337.9Z" fill="#eb9e00"/><path d="M186.0 331.1L188.8 330.7L190.5 330.2L187.7 329.6Z" fill="#fefb00"/><path d="M315.4 384.7L318.3 377.4L320.0 377.1L317.1 384.4Z" fill="#9309dd"/><path d="M257.7 402.9L260.6 402.3L262.3 404.4L259.4 404.5Z" fill="#2f0036"/><path d="M272.4 336.1L275.3 340.5L277.0 337.7L274.1 333.3Z" fill="#f4c200"/><path d="M331.4 361.2L334.3 354.0L336.0 351.4L333.1 358.3Z" fill="#cf4900"/><path d="M167.8 378.6L170.6 373.4L172.3 366.7L169.5 372.2Z" fill="#a91561"/><path d="M237.1 392.9L239.9 394.2L241.6 398.8L238.8 397.7Z" fill="#5d01bf"/><path d="M265.1 403.9L268.0 402.9L269.7 404.7L266.8 405.0Z" fill="#29002a"/><path d="M197.4 337.9L200.3 342.6L202.0 345.8L199.1 340.3Z" fill="#eb9b00"/><path d="M347.3 333.0L350.2 331.6L351.9 330.5L349.1 331.1Z" fill="#fdf400"/><path d="M264.9 337.9L267.8 338.4L269.5 333.6L266.7 333.1Z" fill="#f6cc00"/><path d="M341.1 342.3L343.9 337.8L345.6 335.3L342.8 339.1Z" fill="#f1b500"/><path d="M309.2 390.6L312.0 384.0L313.7 384.6L310.9 391.1Z" fill="#7f04ff"/><path d="M269.5 333.6L272.4 336.1L274.1 333.3L271.2 330.7Z" fill="#fae100"/><path d="M269.0 347.1L271.9 351.1L273.6 345.0L270.7 340.8Z" fill="#e38000"/><path d="M214.1 366.1L217.0 371.0L218.7 377.1L215.8 372.0Z" fill="#ac1844"/><path d="M204.3 349.6L207.2 355.2L208.9 360.2L206.0 354.0Z" fill="#d24f00"/><path d="M293.7 399.8L296.6 395.6L298.3 397.4L295.4 401.1Z" fill="#52009b"/><path d="M250.3 400.2L253.1 400.0L254.8 403.1L252.0 403.1Z" fill="#3f0061"/><path d="M289.2 401.3L292.0 397.8L293.7 399.8L290.9 402.6Z" fill="#48007a"/><path d="M266.1 344.8L269.0 347.1L270.7 340.8L267.8 338.4Z" fill="#e99600"/><path d="M272.6 403.8L275.4 402.2L277.2 404.2L274.3 404.9Z" fill="#2f0036"/><path d="M179.7 339.4L182.5 335.9L184.2 333.2L181.4 335.9Z" fill="#f5c900"/><path d="M270.7 340.8L273.6 345.0L275.3 340.5L272.4 336.1Z" fill="#eda600"/><path d="M169.5 372.2L172.3 366.7L174.0 360.3L171.2 365.8Z" fill="#b92500"/><path d="M298.3 397.4L301.2 392.4L302.9 394.1L300.0 398.7Z" fill="#6001c7"/><path d="M321.7 376.4L324.6 368.6L326.3 367.4L323.4 375.2Z" fill="#ac1844"/><path d="M267.8 338.4L270.7 340.8L272.4 336.1L269.5 333.6Z" fill="#f4c200"/><path d="M188.8 330.7L191.7 331.8L193.4 332.3L190.5 330.2Z" fill="#fef700"/><path d="M194.6 334.3L197.4 337.9L199.1 340.3L196.3 335.7Z" fill="#f4c200"/><path d="M239.9 394.2L242.8 395.0L244.5 399.6L241.6 398.8Z" fill="#5a01b5"/><path d="M284.6 402.2L287.5 399.2L289.2 401.3L286.3 403.5Z" fill="#420067"/><path d="M191.7 331.8L194.6 334.3L196.3 335.7L193.4 332.3Z" fill="#fae200"/><path d="M329.7 363.7L332.6 356.3L334.3 354.0L331.4 361.2Z" fill="#cb4000"/><path d="M339.4 345.5L342.2 340.3L343.9 337.8L341.1 342.3Z" fill="#eda200"/><path d="M171.2 365.8L174.0 360.3L175.7 354.2L172.9 359.6Z" fill="#c73a00"/><path d="M178.0 343.6L180.8 339.4L182.5 335.9L179.7 339.4Z" fill="#efae00"/><path d="M211.2 360.9L214.1 366.1L215.8 372.0L212.9 366.6Z" fill="#ba2600"/><path d="M350.2 331.6L353.1 331.8L354.8 331.5L351.9 330.5Z" fill="#fefc00"/><path d="M302.9 394.1L305.8 388.2L307.5 389.7L304.6 395.3Z" fill="#7102f1"/><path d="M260.6 402.3L263.4 401.2L265.1 403.9L262.3 404.4Z" fill="#39004f"/><path d="M184.2 333.2L187.1 331.9L188.8 330.7L186.0 331.1Z" fill="#fdf500"/><path d="M172.9 359.6L175.7 354.2L177.4 348.6L174.6 353.8Z" fill="#d45500"/><path d="M345.6 335.3L348.5 333.0L350.2 331.6L347.3 333.0Z" fill="#fbea00"/><path d="M176.3 348.4L179.1 343.7L180.8 339.4L178.0 343.6Z" fill="#e89100"/><path d="M280.0 402.5L282.9 399.8L284.6 402.2L281.7 404.0Z" fill="#3f0061"/><path d="M201.5 344.4L204.3 349.6L206.0 354.0L203.2 348.1Z" fill="#de7000"/><path d="M174.6 353.8L177.4 348.6L179.1 343.7L176.3 348.4Z" fill="#df7200"/><path d="M268.0 402.9L270.9 401.3L272.6 403.8L269.7 404.7Z" fill="#38004c"/><path d="M253.1 400.0L256.0 399.4L257.7 402.9L254.8 403.1Z" fill="#450071"/><path d="M242.8 395.0L245.7 395.4L247.4 400.0L244.5 399.6Z" fill="#5900b2"/><path d="M356.0 333.7L358.8 337.4L360.5 338.5L357.7 334.3Z" fill="#f7d200"/><path d="M353.1 331.8L356.0 333.7L357.7 334.3L354.8 331.5Z" fill="#fcf000"/><path d="M337.7 348.5L340.5 342.9L342.2 340.3L339.4 345.5Z" fill="#e89100"/><path d="M313.7 384.6L316.6 377.3L318.3 377.4L315.4 384.7Z" fill="#950ad4"/><path d="M167.2 386.4L170.1 382.0L171.8 375.1L168.9 380.0Z" fill="#950ad6"/><path d="M328.0 365.8L330.9 358.2L332.6 356.3L329.7 363.7Z" fill="#c73a00"/><path d="M208.4 355.6L211.2 360.9L212.9 366.6L210.1 360.9Z" fill="#c73900"/><path d="M320.0 377.1L322.9 369.4L324.6 368.6L321.7 376.4Z" fill="#ac184a"/><path d="M275.4 402.2L278.3 399.8L280.0 402.5L277.2 404.2Z" fill="#420067"/><path d="M198.6 339.8L201.5 344.4L203.2 348.1L200.3 342.6Z" fill="#e99400"/><path d="M307.5 389.7L310.3 383.0L312.0 384.0L309.2 390.6Z" fill="#8505fd"/><path d="M187.1 331.9L190.0 332.0L191.7 331.8L188.8 330.7Z" fill="#fefc00"/><path d="M168.9 380.0L171.8 375.1L173.5 368.2L170.6 373.4Z" fill="#a81567"/><path d="M182.5 335.9L185.4 333.7L187.1 331.9L184.2 333.2Z" fill="#fbe700"/><path d="M343.9 337.8L346.8 334.8L348.5 333.0L345.6 335.3Z" fill="#f9dc00"/><path d="M245.7 395.4L248.6 395.5L250.3 400.2L247.4 400.0Z" fill="#5a01b5"/><path d="M336.0 351.4L338.8 345.3L340.5 342.9L337.7 348.5Z" fill="#e48100"/><path d="M263.4 401.2L266.3 399.6L268.0 402.9L265.1 403.9Z" fill="#450071"/><path d="M348.5 333.0L351.4 332.5L353.1 331.8L350.2 331.6Z" fill="#fefb00"/><path d="M223.9 376.7L226.8 379.9L228.5 386.4L225.6 383.3Z" fill="#950ad7"/><path d="M226.8 379.9L229.6 382.7L231.3 389.1L228.5 386.4Z" fill="#8c07f2"/><path d="M256.0 399.4L258.9 398.4L260.6 402.3L257.7 402.9Z" fill="#4c0088"/><path d="M195.7 336.1L198.6 339.8L200.3 342.6L197.4 337.9Z" fill="#f2ba00"/><path d="M292.0 397.8L294.9 393.1L296.6 395.6L293.7 399.8Z" fill="#6101ca"/><path d="M205.5 350.5L208.4 355.6L210.1 360.9L207.2 355.2Z" fill="#d35200"/><path d="M221.0 373.1L223.9 376.7L225.6 383.3L222.7 379.7Z" fill="#9e0fa7"/><path d="M229.6 382.7L232.5 385.0L234.2 391.2L231.3 389.1Z" fill="#8505fd"/><path d="M190.0 332.0L192.9 333.4L194.6 334.3L191.7 331.8Z" fill="#fdf200"/><path d="M170.6 373.4L173.5 368.2L175.2 361.5L172.3 366.7Z" fill="#b92500"/><path d="M287.5 399.2L290.3 395.1L292.0 397.8L289.2 401.3Z" fill="#5900b2"/><path d="M296.6 395.6L299.5 390.2L301.2 392.4L298.3 397.4Z" fill="#6d02e8"/><path d="M270.9 401.3L273.7 399.0L275.4 402.2L272.6 403.8Z" fill="#48007a"/><path d="M192.9 333.4L195.7 336.1L197.4 337.9L194.6 334.3Z" fill="#f9db00"/><path d="M326.3 367.4L329.2 359.8L330.9 358.2L328.0 365.8Z" fill="#c43500"/><path d="M180.8 339.4L183.7 336.4L185.4 333.7L182.5 335.9Z" fill="#f7d200"/><path d="M218.1 369.0L221.0 373.1L222.7 379.7L219.9 375.5Z" fill="#a9165f"/><path d="M232.5 385.0L235.4 386.8L237.1 392.9L234.2 391.2Z" fill="#7f04ff"/><path d="M282.9 399.8L285.8 396.2L287.5 399.2L284.6 402.2Z" fill="#5500a5"/><path d="M342.2 340.3L345.1 336.6L346.8 334.8L343.9 337.8Z" fill="#f6ce00"/><path d="M334.3 354.0L337.1 347.6L338.8 345.3L336.0 351.4Z" fill="#e07400"/><path d="M172.3 366.7L175.2 361.5L176.9 355.1L174.0 360.3Z" fill="#c83c00"/><path d="M351.4 332.5L354.3 333.7L356.0 333.7L353.1 331.8Z" fill="#fef800"/><path d="M301.2 392.4L304.1 386.3L305.8 388.2L302.9 394.1Z" fill="#7b03fe"/><path d="M248.6 395.5L251.4 395.1L253.1 400.0L250.3 400.2Z" fill="#5d01bf"/><path d="M354.3 333.7L357.1 336.6L358.8 337.4L356.0 333.7Z" fill="#fae100"/><path d="M312.0 384.0L314.9 376.7L316.6 377.3L313.7 384.6Z" fill="#990cc3"/><path d="M318.3 377.4L321.2 369.7L322.9 369.4L320.0 377.1Z" fill="#ac1844"/><path d="M215.3 364.7L218.1 369.0L219.9 375.5L217.0 371.0Z" fill="#b42002"/><path d="M179.1 343.7L182.0 339.9L183.7 336.4L180.8 339.4Z" fill="#f1b700"/><path d="M235.4 386.8L238.2 388.1L239.9 394.2L237.1 392.9Z" fill="#7a03fd"/><path d="M202.6 345.6L205.5 350.5L207.2 355.2L204.3 349.6Z" fill="#de7000"/><path d="M185.4 333.7L188.3 332.9L190.0 332.0L187.1 331.9Z" fill="#fef900"/><path d="M174.0 360.3L176.9 355.1L178.6 349.3L175.7 354.2Z" fill="#d55800"/><path d="M278.3 399.8L281.2 396.5L282.9 399.8L280.0 402.5Z" fill="#5500a5"/><path d="M177.4 348.6L180.3 344.2L182.0 339.9L179.1 343.7Z" fill="#ea9800"/><path d="M346.8 334.8L349.7 333.4L351.4 332.5L348.5 333.0Z" fill="#fdf500"/><path d="M175.7 354.2L178.6 349.3L180.3 344.2L177.4 348.6Z" fill="#e17700"/><path d="M258.9 398.4L261.7 396.9L263.4 401.2L260.6 402.3Z" fill="#5500a5"/><path d="M266.3 399.6L269.2 397.5L270.9 401.3L268.0 402.9Z" fill="#52009b"/><path d="M212.4 360.1L215.3 364.7L217.0 371.0L214.1 366.1Z" fill="#bf2e00"/><path d="M324.6 368.6L327.5 361.0L329.2 359.8L326.3 367.4Z" fill="#c33300"/><path d="M340.5 342.9L343.4 338.6L345.1 336.6L342.2 340.3Z" fill="#f3bf00"/><path d="M332.6 356.3L335.4 349.6L337.1 347.6L334.3 354.0Z" fill="#dc6a00"/><path d="M238.2 388.1L241.1 389.0L242.8 395.0L239.9 394.2Z" fill="#7803fb"/><path d="M305.8 388.2L308.6 381.4L310.3 383.0L307.5 389.7Z" fill="#8c07f2"/><path d="M170.1 382.0L173.0 377.4L174.7 370.3L171.8 375.1Z" fill="#a61379"/><path d="M199.8 341.3L202.6 345.6L204.3 349.6L201.5 344.4Z" fill="#e89200"/><path d="M188.3 332.9L191.2 333.3L192.9 333.4L190.0 332.0Z" fill="#fefb00"/><path d="M251.4 395.1L254.3 394.4L256.0 399.4L253.1 400.0Z" fill="#6201cd"/><path d="M273.7 399.0L276.6 396.0L278.3 399.8L275.4 402.2Z" fill="#5900b2"/><path d="M183.7 336.4L186.6 334.6L188.3 332.9L185.4 333.7Z" fill="#fced00"/><path d="M209.5 355.4L212.4 360.1L214.1 366.1L211.2 360.9Z" fill="#cb4000"/><path d="M196.9 337.6L199.8 341.3L201.5 344.4L198.6 339.8Z" fill="#f1b500"/><path d="M349.7 333.4L352.6 333.9L354.3 333.7L351.4 332.5Z" fill="#fefb00"/><path d="M171.8 375.1L174.7 370.3L176.4 363.2L173.5 368.2Z" fill="#b82300"/><path d="M191.2 333.3L194.0 334.9L195.7 336.1L192.9 333.4Z" fill="#fcee00"/><path d="M241.1 389.0L244.0 389.5L245.7 395.4L242.8 395.0Z" fill="#7703fa"/><path d="M194.0 334.9L196.9 337.6L198.6 339.8L195.7 336.1Z" fill="#f8d600"/><path d="M345.1 336.6L348.0 334.6L349.7 333.4L346.8 334.8Z" fill="#fcee00"/><path d="M338.8 345.3L341.7 340.5L343.4 338.6L340.5 342.9Z" fill="#f0b100"/><path d="M316.6 377.3L319.5 369.6L321.2 369.7L318.3 377.4Z" fill="#ae1a34"/><path d="M330.9 358.2L333.7 351.3L335.4 349.6L332.6 356.3Z" fill="#d96200"/><path d="M352.6 333.9L355.4 336.3L357.1 336.6L354.3 333.7Z" fill="#fcec00"/><path d="M290.3 395.1L293.2 389.9L294.9 393.1L292.0 397.8Z" fill="#7102f1"/><path d="M294.9 393.1L297.8 387.4L299.5 390.2L296.6 395.6Z" fill="#7a03fd"/><path d="M206.7 350.7L209.5 355.4L211.2 360.9L208.4 355.6Z" fill="#d65800"/><path d="M310.3 383.0L313.2 375.6L314.9 376.7L312.0 384.0Z" fill="#9e0fa7"/><path d="M261.7 396.9L264.6 394.9L266.3 399.6L263.4 401.2Z" fill="#6001c7"/><path d="M285.8 396.2L288.6 391.6L290.3 395.1L287.5 399.2Z" fill="#6c01e6"/><path d="M173.5 368.2L176.4 363.2L178.1 356.6L175.2 361.5Z" fill="#c73a00"/><path d="M182.0 339.9L184.9 337.2L186.6 334.6L183.7 336.4Z" fill="#f8d800"/><path d="M322.9 369.4L325.7 361.7L327.5 361.0L324.6 368.6Z" fill="#c23200"/><path d="M269.2 397.5L272.0 394.7L273.7 399.0L270.9 401.3Z" fill="#6101ca"/><path d="M299.5 390.2L302.3 383.9L304.1 386.3L301.2 392.4Z" fill="#8605fb"/><path d="M254.3 394.4L257.2 393.1L258.9 398.4L256.0 399.4Z" fill="#6901df"/><path d="M244.0 389.5L246.8 389.5L248.6 395.5L245.7 395.4Z" fill="#7803fb"/><path d="M186.6 334.6L189.5 334.0L191.2 333.3L188.3 332.9Z" fill="#fefa00"/><path d="M281.2 396.5L284.1 392.3L285.8 396.2L282.9 399.8Z" fill="#6a01e2"/><path d="M175.2 361.5L178.1 356.6L179.8 350.6L176.9 355.1Z" fill="#d55800"/><path d="M180.3 344.2L183.2 340.8L184.9 337.2L182.0 339.9Z" fill="#f2bc00"/><path d="M203.8 346.3L206.7 350.7L208.4 355.6L205.5 350.5Z" fill="#e07400"/><path d="M337.1 347.6L340.0 342.4L341.7 340.5L338.8 345.3Z" fill="#eda500"/><path d="M176.9 355.1L179.8 350.6L181.5 345.2L178.6 349.3Z" fill="#e17900"/><path d="M343.4 338.6L346.3 336.0L348.0 334.6L345.1 336.6Z" fill="#fae400"/><path d="M178.6 349.3L181.5 345.2L183.2 340.8L180.3 344.2Z" fill="#eb9c00"/><path d="M348.0 334.6L350.9 334.5L352.6 333.9L349.7 333.4Z" fill="#fefc00"/><path d="M329.2 359.8L332.0 352.8L333.7 351.3L330.9 358.2Z" fill="#d75c00"/><path d="M304.1 386.3L306.9 379.4L308.6 381.4L305.8 388.2Z" fill="#950ad7"/><path d="M225.1 372.9L227.9 375.7L229.6 382.7L226.8 379.9Z" fill="#a5137e"/><path d="M222.2 369.8L225.1 372.9L226.8 379.9L223.9 376.7Z" fill="#ac1844"/><path d="M200.9 342.2L203.8 346.3L205.5 350.5L202.6 345.6Z" fill="#e99400"/><path d="M276.6 396.0L279.5 392.2L281.2 396.5L278.3 399.8Z" fill="#6c01e6"/><path d="M227.9 375.7L230.8 377.9L232.5 385.0L229.6 382.7Z" fill="#9e0fa7"/><path d="M219.3 366.3L222.2 369.8L223.9 376.7L221.0 373.1Z" fill="#b52000"/><path d="M189.5 334.0L192.3 334.5L194.0 334.9L191.2 333.3Z" fill="#fefa00"/><path d="M173.0 377.4L175.8 372.8L177.5 365.5L174.7 370.3Z" fill="#b52000"/><path d="M246.8 389.5L249.7 389.0L251.4 395.1L248.6 395.5Z" fill="#7a03fd"/><path d="M350.9 334.5L353.7 336.2L355.4 336.3L352.6 333.9Z" fill="#fdf400"/><path d="M314.9 376.7L317.8 369.0L319.5 369.6L316.6 377.3Z" fill="#b21d18"/><path d="M216.4 362.5L219.3 366.3L221.0 373.1L218.1 369.0Z" fill="#be2b00"/><path d="M230.8 377.9L233.7 379.8L235.4 386.8L232.5 385.0Z" fill="#990cc3"/><path d="M184.9 337.2L187.7 335.6L189.5 334.0L186.6 334.6Z" fill="#fcf000"/><path d="M321.2 369.7L324.0 362.1L325.7 361.7L322.9 369.4Z" fill="#c33300"/><path d="M198.1 338.8L200.9 342.2L202.6 345.6L199.8 341.3Z" fill="#f1b500"/><path d="M264.6 394.9L267.5 392.4L269.2 397.5L266.3 399.6Z" fill="#6d02e8"/><path d="M192.3 334.5L195.2 336.2L196.9 337.6L194.0 334.9Z" fill="#fcec00"/><path d="M335.4 349.6L338.3 344.1L340.0 342.4L337.1 347.6Z" fill="#eb9a00"/><path d="M195.2 336.2L198.1 338.8L199.8 341.3L196.9 337.6Z" fill="#f7d400"/><path d="M257.2 393.1L260.0 391.4L261.7 396.9L258.9 398.4Z" fill="#7102f1"/><path d="M341.7 340.5L344.6 337.4L346.3 336.0L343.4 338.6Z" fill="#f9db00"/><path d="M213.6 358.5L216.4 362.5L218.1 369.0L215.3 364.7Z" fill="#c73a00"/><path d="M233.7 379.8L236.5 381.1L238.2 388.1L235.4 386.8Z" fill="#950ad4"/><path d="M174.7 370.3L177.5 365.5L179.2 358.6L176.4 363.2Z" fill="#c53700"/><path d="M308.6 381.4L311.5 374.1L313.2 375.6L310.3 383.0Z" fill="#a5137e"/><path d="M327.5 361.0L330.3 353.9L332.0 352.8L329.2 359.8Z" fill="#d65900"/><path d="M346.3 336.0L349.1 335.2L350.9 334.5L348.0 334.6Z" fill="#fef900"/><path d="M272.0 394.7L274.9 391.2L276.6 396.0L273.7 399.0Z" fill="#7102f1"/><path d="M210.7 354.4L213.6 358.5L215.3 364.7L212.4 360.1Z" fill="#d14c00"/><path d="M183.2 340.8L186.0 338.3L187.7 335.6L184.9 337.2Z" fill="#f9db00"/><path d="M293.2 389.9L296.1 384.0L297.8 387.4L294.9 393.1Z" fill="#8906f8"/><path d="M176.4 363.2L179.2 358.6L180.9 352.3L178.1 356.6Z" fill="#d45500"/><path d="M288.6 391.6L291.5 386.2L293.2 389.9L290.3 395.1Z" fill="#8205fe"/><path d="M236.5 381.1L239.4 382.0L241.1 389.0L238.2 388.1Z" fill="#9309dd"/><path d="M249.7 389.0L252.6 388.1L254.3 394.4L251.4 395.1Z" fill="#7f04ff"/><path d="M187.7 335.6L190.6 335.2L192.3 334.5L189.5 334.0Z" fill="#fefb00"/><path d="M333.7 351.3L336.6 345.6L338.3 344.1L335.4 349.6Z" fill="#e89200"/><path d="M207.8 350.3L210.7 354.4L212.4 360.1L209.5 355.4Z" fill="#da6300"/><path d="M297.8 387.4L300.6 381.0L302.3 383.9L299.5 390.2Z" fill="#9209e0"/><path d="M181.5 345.2L184.3 342.0L186.0 338.3L183.2 340.8Z" fill="#f3be00"/><path d="M284.1 392.3L286.9 387.4L288.6 391.6L285.8 396.2Z" fill="#7f04ff"/><path d="M178.1 356.6L180.9 352.3L182.6 346.7L179.8 350.6Z" fill="#e17700"/><path d="M349.1 335.2L352.0 336.4L353.7 336.2L350.9 334.5Z" fill="#fef900"/><path d="M340.0 342.4L342.9 338.8L344.6 337.4L341.7 340.5Z" fill="#f7d100"/><path d="M179.8 350.6L182.6 346.7L184.3 342.0L181.5 345.2Z" fill="#eb9c00"/><path d="M319.5 369.6L322.3 362.0L324.0 362.1L321.2 369.7Z" fill="#c43500"/><path d="M205.0 346.4L207.8 350.3L209.5 355.4L206.7 350.7Z" fill="#e37e00"/><path d="M239.4 382.0L242.3 382.5L244.0 389.5L241.1 389.0Z" fill="#9209e0"/><path d="M260.0 391.4L262.9 389.1L264.6 394.9L261.7 396.9Z" fill="#7b03fe"/><path d="M313.2 375.6L316.1 368.1L317.8 369.0L314.9 376.7Z" fill="#b62200"/><path d="M302.3 383.9L305.2 377.0L306.9 379.4L304.1 386.3Z" fill="#9e0fa7"/><path d="M190.6 335.2L193.5 335.8L195.2 336.2L192.3 334.5Z" fill="#fef900"/><path d="M279.5 392.2L282.4 387.7L284.1 392.3L281.2 396.5Z" fill="#7f04ff"/><path d="M325.7 361.7L328.6 354.6L330.3 353.9L327.5 361.0Z" fill="#d65800"/><path d="M344.6 337.4L347.4 336.1L349.1 335.2L346.3 336.0Z" fill="#fdf500"/><path d="M267.5 392.4L270.3 389.3L272.0 394.7L269.2 397.5Z" fill="#7a03fd"/><path d="M202.1 342.8L205.0 346.4L206.7 350.7L203.8 346.3Z" fill="#eb9b00"/><path d="M175.8 372.8L178.7 368.4L180.4 361.1L177.5 365.5Z" fill="#c23100"/><path d="M186.0 338.3L188.9 336.8L190.6 335.2L187.7 335.6Z" fill="#fdf100"/><path d="M193.5 335.8L196.4 337.3L198.1 338.8L195.2 336.2Z" fill="#fcec00"/><path d="M252.6 388.1L255.5 386.7L257.2 393.1L254.3 394.4Z" fill="#8505fd"/><path d="M199.2 339.7L202.1 342.8L203.8 346.3L200.9 342.2Z" fill="#f2ba00"/><path d="M332.0 352.8L334.9 346.9L336.6 345.6L333.7 351.3Z" fill="#e78c00"/><path d="M196.4 337.3L199.2 339.7L200.9 342.2L198.1 338.8Z" fill="#f8d600"/><path d="M338.3 344.1L341.2 340.1L342.9 338.8L340.0 342.4Z" fill="#f5c900"/><path d="M242.3 382.5L245.1 382.5L246.8 389.5L244.0 389.5Z" fill="#9309dd"/><path d="M306.9 379.4L309.8 372.2L311.5 374.1L308.6 381.4Z" fill="#ac1844"/><path d="M274.9 391.2L277.8 387.1L279.5 392.2L276.6 396.0Z" fill="#8205fe"/><path d="M177.5 365.5L180.4 361.1L182.1 354.5L179.2 358.6Z" fill="#d24f00"/><path d="M347.4 336.1L350.3 336.8L352.0 336.4L349.1 335.2Z" fill="#fefb00"/><path d="M184.3 342.0L187.2 339.6L188.9 336.8L186.0 338.3Z" fill="#f9db00"/><path d="M342.9 338.8L345.7 337.1L347.4 336.1L344.6 337.4Z" fill="#fdf100"/><path d="M179.2 358.6L182.1 354.5L183.8 348.5L180.9 352.3Z" fill="#df7200"/><path d="M188.9 336.8L191.8 336.4L193.5 335.8L190.6 335.2Z" fill="#fefb00"/><path d="M317.8 369.0L320.6 361.6L322.3 362.0L319.5 369.6Z" fill="#c73a00"/><path d="M324.0 362.1L326.9 355.1L328.6 354.6L325.7 361.7Z" fill="#d65900"/><path d="M182.6 346.7L185.5 343.6L187.2 339.6L184.3 342.0Z" fill="#f2bc00"/><path d="M220.5 363.0L223.4 365.9L225.1 372.9L222.2 369.8Z" fill="#c23100"/><path d="M223.4 365.9L226.2 368.4L227.9 375.7L225.1 372.9Z" fill="#bb2800"/><path d="M262.9 389.1L265.8 386.4L267.5 392.4L264.6 394.9Z" fill="#8605fb"/><path d="M180.9 352.3L183.8 348.5L185.5 343.6L182.6 346.7Z" fill="#ea9800"/><path d="M217.6 359.8L220.5 363.0L222.2 369.8L219.3 366.3Z" fill="#c93c00"/><path d="M330.3 353.9L333.2 347.9L334.9 346.9L332.0 352.8Z" fill="#e68900"/><path d="M245.1 382.5L248.0 382.0L249.7 389.0L246.8 389.5Z" fill="#950ad4"/><path d="M226.2 368.4L229.1 370.6L230.8 377.9L227.9 375.7Z" fill="#b62200"/><path d="M214.7 356.4L217.6 359.8L219.3 366.3L216.4 362.5Z" fill="#d04b00"/><path d="M336.6 345.6L339.5 341.4L341.2 340.1L338.3 344.1Z" fill="#f4c200"/><path d="M291.5 386.2L294.4 380.2L296.1 384.0L293.2 389.9Z" fill="#980bca"/><path d="M255.5 386.7L258.3 384.9L260.0 391.4L257.2 393.1Z" fill="#8c07f2"/><path d="M311.5 374.1L314.4 366.7L316.1 368.1L313.2 375.6Z" fill="#bb2800"/><path d="M286.9 387.4L289.8 381.9L291.5 386.2L288.6 391.6Z" fill="#9309dd"/><path d="M296.1 384.0L298.9 377.6L300.6 381.0L297.8 387.4Z" fill="#9f0fa3"/><path d="M270.3 389.3L273.2 385.6L274.9 391.2L272.0 394.7Z" fill="#8906f8"/><path d="M211.9 352.9L214.7 356.4L216.4 362.5L213.6 358.5Z" fill="#d85e00"/><path d="M229.1 370.6L232.0 372.4L233.7 379.8L230.8 377.9Z" fill="#b21d18"/><path d="M191.8 336.4L194.7 336.9L196.4 337.3L193.5 335.8Z" fill="#fefa00"/><path d="M209.0 349.4L211.9 352.9L213.6 358.5L210.7 354.4Z" fill="#df7300"/><path d="M345.7 337.1L348.6 337.3L350.3 336.8L347.4 336.1Z" fill="#fefc00"/><path d="M282.4 387.7L285.2 382.7L286.9 387.4L284.1 392.3Z" fill="#9209e2"/><path d="M300.6 381.0L303.5 374.2L305.2 377.0L302.3 383.9Z" fill="#a9165f"/><path d="M232.0 372.4L234.8 373.7L236.5 381.1L233.7 379.8Z" fill="#ae1a34"/><path d="M187.2 339.6L190.1 338.2L191.8 336.4L188.9 336.8Z" fill="#fcf000"/><path d="M341.2 340.1L344.0 338.1L345.7 337.1L342.9 338.8Z" fill="#fcec00"/><path d="M206.1 346.1L209.0 349.4L210.7 354.4L207.8 350.3Z" fill="#e78c00"/><path d="M178.7 368.4L181.6 364.2L183.3 357.2L180.4 361.1Z" fill="#ce4600"/><path d="M194.7 336.9L197.5 338.2L199.2 339.7L196.4 337.3Z" fill="#fcee00"/><path d="M203.3 343.0L206.1 346.1L207.8 350.3L205.0 346.4Z" fill="#eea700"/><path d="M197.5 338.2L200.4 340.3L202.1 342.8L199.2 339.7Z" fill="#f9db00"/><path d="M248.0 382.0L250.9 381.1L252.6 388.1L249.7 389.0Z" fill="#990cc3"/><path d="M200.4 340.3L203.3 343.0L205.0 346.4L202.1 342.8Z" fill="#f4c200"/><path d="M322.3 362.0L325.2 355.2L326.9 355.1L324.0 362.1Z" fill="#d75c00"/><path d="M334.9 346.9L337.8 342.5L339.5 341.4L336.6 345.6Z" fill="#f3bd00"/><path d="M328.6 354.6L331.5 348.7L333.2 347.9L330.3 353.9Z" fill="#e58700"/><path d="M234.8 373.7L237.7 374.6L239.4 382.0L236.5 381.1Z" fill="#ac1844"/><path d="M305.2 377.0L308.1 369.9L309.8 372.2L306.9 379.4Z" fill="#b52000"/><path d="M277.8 387.1L280.7 382.5L282.4 387.7L279.5 392.2Z" fill="#9309dd"/><path d="M180.4 361.1L183.3 357.2L185.0 350.9L182.1 354.5Z" fill="#dc6a00"/><path d="M185.5 343.6L188.4 341.3L190.1 338.2L187.2 339.6Z" fill="#f8d800"/><path d="M316.1 368.1L318.9 360.9L320.6 361.6L317.8 369.0Z" fill="#cb4000"/><path d="M265.8 386.4L268.6 383.2L270.3 389.3L267.5 392.4Z" fill="#9209e0"/><path d="M258.3 384.9L261.2 382.6L262.9 389.1L260.0 391.4Z" fill="#950ad7"/><path d="M182.1 354.5L185.0 350.9L186.7 345.5L183.8 348.5Z" fill="#e89100"/><path d="M183.8 348.5L186.7 345.5L188.4 341.3L185.5 343.6Z" fill="#f1b700"/><path d="M190.1 338.2L193.0 337.7L194.7 336.9L191.8 336.4Z" fill="#fefa00"/><path d="M344.0 338.1L346.9 338.0L348.6 337.3L345.7 337.1Z" fill="#fefc00"/><path d="M339.5 341.4L342.3 339.0L344.0 338.1L341.2 340.1Z" fill="#fbe800"/><path d="M237.7 374.6L240.6 375.1L242.3 382.5L239.4 382.0Z" fill="#ac184a"/><path d="M309.8 372.2L312.7 365.0L314.4 366.7L311.5 374.1Z" fill="#c23100"/><path d="M273.2 385.6L276.1 381.5L277.8 387.1L274.9 391.2Z" fill="#980bca"/><path d="M250.9 381.1L253.8 379.7L255.5 386.7L252.6 388.1Z" fill="#9e0fa7"/><path d="M333.2 347.9L336.1 343.4L337.8 342.5L334.9 346.9Z" fill="#f2ba00"/><path d="M193.0 337.7L195.8 338.0L197.5 338.2L194.7 336.9Z" fill="#fefb00"/><path d="M326.9 355.1L329.8 349.2L331.5 348.7L328.6 354.6Z" fill="#e68900"/><path d="M188.4 341.3L191.3 339.8L193.0 337.7L190.1 338.2Z" fill="#fced00"/><path d="M240.6 375.1L243.4 375.1L245.1 382.5L242.3 382.5Z" fill="#ac1844"/><path d="M320.6 361.6L323.5 354.9L325.2 355.2L322.3 362.0Z" fill="#d96200"/><path d="M294.4 380.2L297.2 373.9L298.9 377.6L296.1 384.0Z" fill="#ac1844"/><path d="M289.8 381.9L292.7 376.0L294.4 380.2L291.5 386.2Z" fill="#a7146f"/><path d="M181.6 364.2L184.4 360.4L186.1 353.7L183.3 357.2Z" fill="#d85e00"/><path d="M195.8 338.0L198.7 339.1L200.4 340.3L197.5 338.2Z" fill="#fdf200"/><path d="M298.9 377.6L301.8 371.0L303.5 374.2L300.6 381.0Z" fill="#b42002"/><path d="M285.2 382.7L288.1 377.2L289.8 381.9L286.9 387.4Z" fill="#a41283"/><path d="M337.8 342.5L340.6 340.0L342.3 339.0L339.5 341.4Z" fill="#fae400"/><path d="M342.3 339.0L345.2 338.7L346.9 338.0L344.0 338.1Z" fill="#fefb00"/><path d="M186.7 345.5L189.5 343.2L191.3 339.8L188.4 341.3Z" fill="#f7d200"/><path d="M261.2 382.6L264.1 379.8L265.8 386.4L262.9 389.1Z" fill="#9e0fa7"/><path d="M183.3 357.2L186.1 353.7L187.8 347.9L185.0 350.9Z" fill="#e58600"/><path d="M314.4 366.7L317.2 359.8L318.9 360.9L316.1 368.1Z" fill="#cf4900"/><path d="M198.7 339.1L201.6 340.7L203.3 343.0L200.4 340.3Z" fill="#fae200"/><path d="M215.9 353.9L218.8 356.7L220.5 363.0L217.6 359.8Z" fill="#da6300"/><path d="M218.8 356.7L221.7 359.2L223.4 365.9L220.5 363.0Z" fill="#d45500"/><path d="M213.0 351.1L215.9 353.9L217.6 359.8L214.7 356.4Z" fill="#e07400"/><path d="M185.0 350.9L187.8 347.9L189.5 343.2L186.7 345.5Z" fill="#efae00"/><path d="M210.2 348.2L213.0 351.1L214.7 356.4L211.9 352.9Z" fill="#e68900"/><path d="M221.7 359.2L224.5 361.5L226.2 368.4L223.4 365.9Z" fill="#cf4900"/><path d="M201.6 340.7L204.4 342.9L206.1 346.1L203.3 343.0Z" fill="#f6ce00"/><path d="M207.3 345.5L210.2 348.2L211.9 352.9L209.0 349.4Z" fill="#ec9f00"/><path d="M268.6 383.2L271.5 379.5L273.2 385.6L270.3 389.3Z" fill="#9f0fa3"/><path d="M204.4 342.9L207.3 345.5L209.0 349.4L206.1 346.1Z" fill="#f1b600"/><path d="M303.5 374.2L306.4 367.3L308.1 369.9L305.2 377.0Z" fill="#be2b00"/><path d="M280.7 382.5L283.5 377.5L285.2 382.7L282.4 387.7Z" fill="#a41283"/><path d="M331.5 348.7L334.4 344.2L336.1 343.4L333.2 347.9Z" fill="#f2b900"/><path d="M253.8 379.7L256.6 377.9L258.3 384.9L255.5 386.7Z" fill="#a5137e"/><path d="M224.5 361.5L227.4 363.5L229.1 370.6L226.2 368.4Z" fill="#cb4000"/><path d="M243.4 375.1L246.3 374.6L248.0 382.0L245.1 382.5Z" fill="#ae1a34"/><path d="M191.3 339.8L194.1 339.1L195.8 338.0L193.0 337.7Z" fill="#fef900"/><path d="M325.2 355.2L328.1 349.4L329.8 349.2L326.9 355.1Z" fill="#e78c00"/><path d="M227.4 363.5L230.3 365.1L232.0 372.4L229.1 370.6Z" fill="#c73a00"/><path d="M308.1 369.9L311.0 363.1L312.7 365.0L309.8 372.2Z" fill="#c93c00"/><path d="M336.1 343.4L338.9 340.8L340.6 340.0L337.8 342.5Z" fill="#fae200"/><path d="M318.9 360.9L321.8 354.4L323.5 354.9L320.6 361.6Z" fill="#dc6a00"/><path d="M230.3 365.1L233.1 366.4L234.8 373.7L232.0 372.4Z" fill="#c43500"/><path d="M340.6 340.0L343.5 339.5L345.2 338.7L342.3 339.0Z" fill="#fefa00"/><path d="M276.1 381.5L279.0 376.9L280.7 382.5L277.8 387.1Z" fill="#a7146f"/><path d="M194.1 339.1L197.0 339.2L198.7 339.1L195.8 338.0Z" fill="#fefc00"/><path d="M189.5 343.2L192.4 341.6L194.1 339.1L191.3 339.8Z" fill="#fbe700"/><path d="M184.4 360.4L187.3 357.1L189.0 350.8L186.1 353.7Z" fill="#e17800"/><path d="M246.3 374.6L249.2 373.8L250.9 381.1L248.0 382.0Z" fill="#b21d18"/><path d="M233.1 366.4L236.0 367.2L237.7 374.6L234.8 373.7Z" fill="#c33300"/><path d="M187.8 347.9L190.7 345.6L192.4 341.6L189.5 343.2Z" fill="#f5c900"/><path d="M329.8 349.2L332.7 344.8L334.4 344.2L331.5 348.7Z" fill="#f2ba00"/><path d="M264.1 379.8L266.9 376.7L268.6 383.2L265.8 386.4Z" fill="#a9165f"/><path d="M186.1 353.7L189.0 350.8L190.7 345.6L187.8 347.9Z" fill="#eca200"/><path d="M256.6 377.9L259.5 375.7L261.2 382.6L258.3 384.9Z" fill="#ac1844"/><path d="M197.0 339.2L199.9 339.9L201.6 340.7L198.7 339.1Z" fill="#fef700"/><path d="M312.7 365.0L315.5 358.4L317.2 359.8L314.4 366.7Z" fill="#d45500"/><path d="M323.5 354.9L326.4 349.4L328.1 349.4L325.2 355.2Z" fill="#e89200"/><path d="M292.7 376.0L295.5 370.0L297.2 373.9L294.4 380.2Z" fill="#ba2600"/><path d="M271.5 379.5L274.4 375.5L276.1 381.5L273.2 385.6Z" fill="#ac1844"/><path d="M199.9 339.9L202.7 341.1L204.4 342.9L201.6 340.7Z" fill="#fceb00"/><path d="M334.4 344.2L337.2 341.6L338.9 340.8L336.1 343.4Z" fill="#fae200"/><path d="M297.2 373.9L300.1 367.6L301.8 371.0L298.9 377.6Z" fill="#bf2e00"/><path d="M236.0 367.2L238.9 367.7L240.6 375.1L237.7 374.6Z" fill="#c23200"/><path d="M192.4 341.6L195.3 340.8L197.0 339.2L194.1 339.1Z" fill="#fdf500"/><path d="M288.1 377.2L291.0 371.5L292.7 376.0L289.8 381.9Z" fill="#b62200"/><path d="M338.9 340.8L341.8 340.2L343.5 339.5L340.6 340.0Z" fill="#fef900"/><path d="M202.7 341.1L205.6 342.8L207.3 345.5L204.4 342.9Z" fill="#f9db00"/><path d="M249.2 373.8L252.1 372.5L253.8 379.7L250.9 381.1Z" fill="#b62200"/><path d="M301.8 371.0L304.7 364.5L306.4 367.3L303.5 374.2Z" fill="#c73a00"/><path d="M283.5 377.5L286.4 372.3L288.1 377.2L285.2 382.7Z" fill="#b52000"/><path d="M205.6 342.8L208.5 344.7L210.2 348.2L207.3 345.5Z" fill="#f5c900"/><path d="M317.2 359.8L320.1 353.7L321.8 354.4L318.9 360.9Z" fill="#e07400"/><path d="M208.5 344.7L211.3 346.9L213.0 351.1L210.2 348.2Z" fill="#f1b500"/><path d="M190.7 345.6L193.6 343.9L195.3 340.8L192.4 341.6Z" fill="#f9df00"/><path d="M328.1 349.4L331.0 345.2L332.7 344.8L329.8 349.2Z" fill="#f3bd00"/><path d="M211.3 346.9L214.2 349.1L215.9 353.9L213.0 351.1Z" fill="#eda200"/><path d="M238.9 367.7L241.7 367.7L243.4 375.1L240.6 375.1Z" fill="#c33300"/><path d="M187.3 357.1L190.2 354.2L191.9 348.4L189.0 350.8Z" fill="#e89200"/><path d="M214.2 349.1L217.1 351.4L218.8 356.7L215.9 353.9Z" fill="#e89100"/><path d="M306.4 367.3L309.3 360.9L311.0 363.1L308.1 369.9Z" fill="#d04b00"/><path d="M195.3 340.8L198.2 340.5L199.9 339.9L197.0 339.2Z" fill="#fefb00"/><path d="M189.0 350.8L191.9 348.4L193.6 343.9L190.7 345.6Z" fill="#f2bc00"/><path d="M217.1 351.4L219.9 353.5L221.7 359.2L218.8 356.7Z" fill="#e48100"/><path d="M279.0 376.9L281.8 372.2L283.5 377.5L280.7 382.5Z" fill="#b62200"/><path d="M259.5 375.7L262.4 373.1L264.1 379.8L261.2 382.6Z" fill="#b52000"/><path d="M219.9 353.5L222.8 355.4L224.5 361.5L221.7 359.2Z" fill="#e07400"/><path d="M266.9 376.7L269.8 373.2L271.5 379.5L268.6 383.2Z" fill="#b42002"/><path d="M332.7 344.8L335.5 342.2L337.2 341.6L334.4 344.2Z" fill="#fae200"/><path d="M337.2 341.6L340.1 341.0L341.8 340.2L338.9 340.8Z" fill="#fef900"/><path d="M321.8 354.4L324.7 349.2L326.4 349.4L323.5 354.9Z" fill="#eb9a00"/><path d="M222.8 355.4L225.7 357.1L227.4 363.5L224.5 361.5Z" fill="#dc6a00"/><path d="M311.0 363.1L313.8 356.9L315.5 358.4L312.7 365.0Z" fill="#da6300"/><path d="M198.2 340.5L201.0 340.9L202.7 341.1L199.9 339.9Z" fill="#fefb00"/><path d="M252.1 372.5L254.9 370.8L256.6 377.9L253.8 379.7Z" fill="#bb2800"/><path d="M241.7 367.7L244.6 367.4L246.3 374.6L243.4 375.1Z" fill="#c43500"/><path d="M193.6 343.9L196.5 342.8L198.2 340.5L195.3 340.8Z" fill="#fcee00"/><path d="M225.7 357.1L228.6 358.6L230.3 365.1L227.4 363.5Z" fill="#d96200"/><path d="M274.4 375.5L277.2 371.2L279.0 376.9L276.1 381.5Z" fill="#ba2600"/><path d="M326.4 349.4L329.2 345.5L331.0 345.2L328.1 349.4Z" fill="#f4c200"/><path d="M201.0 340.9L203.9 341.6L205.6 342.8L202.7 341.1Z" fill="#fdf400"/><path d="M315.5 358.4L318.4 352.8L320.1 353.7L317.2 359.8Z" fill="#e48100"/><path d="M191.9 348.4L194.8 346.6L196.5 342.8L193.6 343.9Z" fill="#f7d200"/><path d="M228.6 358.6L231.4 359.7L233.1 366.4L230.3 365.1Z" fill="#d75c00"/><path d="M190.2 354.2L193.0 351.8L194.8 346.6L191.9 348.4Z" fill="#eeaa00"/><path d="M295.5 370.0L298.4 364.1L300.1 367.6L297.2 373.9Z" fill="#cb4000"/><path d="M331.0 345.2L333.8 342.8L335.5 342.2L332.7 344.8Z" fill="#fae400"/><path d="M335.5 342.2L338.4 341.7L340.1 341.0L337.2 341.6Z" fill="#fef900"/><path d="M291.0 371.5L293.8 365.9L295.5 370.0L292.7 376.0Z" fill="#c73900"/><path d="M203.9 341.6L206.8 342.8L208.5 344.7L205.6 342.8Z" fill="#fbea00"/><path d="M300.1 367.6L303.0 361.6L304.7 364.5L301.8 371.0Z" fill="#d14c00"/><path d="M244.6 367.4L247.5 366.7L249.2 373.8L246.3 374.6Z" fill="#c73a00"/><path d="M262.4 373.1L265.2 370.2L266.9 376.7L264.1 379.8Z" fill="#be2b00"/><path d="M196.5 342.8L199.3 342.2L201.0 340.9L198.2 340.5Z" fill="#fef800"/><path d="M286.4 372.3L289.3 367.0L291.0 371.5L288.1 377.2Z" fill="#c43500"/><path d="M231.4 359.7L234.3 360.5L236.0 367.2L233.1 366.4Z" fill="#d65900"/><path d="M206.8 342.8L209.6 344.2L211.3 346.9L208.5 344.7Z" fill="#f9dc00"/><path d="M320.1 353.7L323.0 348.9L324.7 349.2L321.8 354.4Z" fill="#eda500"/><path d="M254.9 370.8L257.8 368.8L259.5 375.7L256.6 377.9Z" fill="#c23100"/><path d="M304.7 364.5L307.6 358.6L309.3 360.9L306.4 367.3Z" fill="#d85e00"/><path d="M269.8 373.2L272.7 369.5L274.4 375.5L271.5 379.5Z" fill="#bf2e00"/><path d="M209.6 344.2L212.5 345.8L214.2 349.1L211.3 346.9Z" fill="#f6ce00"/><path d="M281.8 372.2L284.7 367.3L286.4 372.3L283.5 377.5Z" fill="#c43500"/><path d="M194.8 346.6L197.6 345.3L199.3 342.2L196.5 342.8Z" fill="#fae300"/><path d="M309.3 360.9L312.1 355.3L313.8 356.9L311.0 363.1Z" fill="#e07400"/><path d="M234.3 360.5L237.2 360.9L238.9 367.7L236.0 367.2Z" fill="#d65800"/><path d="M324.7 349.2L327.5 345.7L329.2 345.5L326.4 349.4Z" fill="#f5c900"/><path d="M212.5 345.8L215.4 347.4L217.1 351.4L214.2 349.1Z" fill="#f3bf00"/><path d="M199.3 342.2L202.2 342.2L203.9 341.6L201.0 340.9Z" fill="#fefc00"/><path d="M193.0 351.8L195.9 349.8L197.6 345.3L194.8 346.6Z" fill="#f3c000"/><path d="M333.8 342.8L336.7 342.5L338.4 341.7L335.5 342.2Z" fill="#fefa00"/><path d="M247.5 366.7L250.3 365.6L252.1 372.5L249.2 373.8Z" fill="#cb4000"/><path d="M329.2 345.5L332.1 343.4L333.8 342.8L331.0 345.2Z" fill="#fbe800"/><path d="M215.4 347.4L218.2 349.0L219.9 353.5L217.1 351.4Z" fill="#f0b100"/><path d="M313.8 356.9L316.7 351.8L318.4 352.8L315.5 358.4Z" fill="#e89100"/><path d="M277.2 371.2L280.1 366.9L281.8 372.2L279.0 376.9Z" fill="#c73900"/><path d="M218.2 349.0L221.1 350.5L222.8 355.4L219.9 353.5Z" fill="#eda500"/><path d="M202.2 342.2L205.1 342.5L206.8 342.8L203.9 341.6Z" fill="#fefb00"/><path d="M237.2 360.9L240.0 361.0L241.7 367.7L238.9 367.7Z" fill="#d65900"/><path d="M257.8 368.8L260.7 366.5L262.4 373.1L259.5 375.7Z" fill="#c93c00"/><path d="M197.6 345.3L200.5 344.4L202.2 342.2L199.3 342.2Z" fill="#fcf000"/><path d="M265.2 370.2L268.1 367.0L269.8 373.2L266.9 376.7Z" fill="#c73a00"/><path d="M221.1 350.5L224.0 351.9L225.7 357.1L222.8 355.4Z" fill="#eb9a00"/><path d="M318.4 352.8L321.3 348.5L323.0 348.9L320.1 353.7Z" fill="#f0b100"/><path d="M205.1 342.5L207.9 343.2L209.6 344.2L206.8 342.8Z" fill="#fdf500"/><path d="M195.9 349.8L198.8 348.4L200.5 344.4L197.6 345.3Z" fill="#f7d200"/><path d="M224.0 351.9L226.9 353.1L228.6 358.6L225.7 357.1Z" fill="#e89200"/><path d="M323.0 348.9L325.8 345.8L327.5 345.7L324.7 349.2Z" fill="#f7d100"/><path d="M293.8 365.9L296.7 360.7L298.4 364.1L295.5 370.0Z" fill="#d65800"/><path d="M298.4 364.1L301.3 358.7L303.0 361.6L300.1 367.6Z" fill="#da6300"/><path d="M332.1 343.4L335.0 343.3L336.7 342.5L333.8 342.8Z" fill="#fefb00"/><path d="M250.3 365.6L253.2 364.2L254.9 370.8L252.1 372.5Z" fill="#cf4900"/><path d="M272.7 369.5L275.5 365.7L277.2 371.2L274.4 375.5Z" fill="#cb4000"/><path d="M240.0 361.0L242.9 360.8L244.6 367.4L241.7 367.7Z" fill="#d75c00"/><path d="M327.5 345.7L330.4 343.9L332.1 343.4L329.2 345.5Z" fill="#fcec00"/><path d="M303.0 361.6L305.9 356.3L307.6 358.6L304.7 364.5Z" fill="#df7300"/><path d="M289.3 367.0L292.1 362.0L293.8 365.9L291.0 371.5Z" fill="#d35200"/><path d="M207.9 343.2L210.8 344.0L212.5 345.8L209.6 344.2Z" fill="#fcee00"/><path d="M200.5 344.4L203.4 344.0L205.1 342.5L202.2 342.2Z" fill="#fef800"/><path d="M226.9 353.1L229.7 354.1L231.4 359.7L228.6 358.6Z" fill="#e78c00"/><path d="M307.6 358.6L310.4 353.6L312.1 355.3L309.3 360.9Z" fill="#e68900"/><path d="M284.7 367.3L287.6 362.6L289.3 367.0L286.4 372.3Z" fill="#d24f00"/><path d="M210.8 344.0L213.7 345.1L215.4 347.4L212.5 345.8Z" fill="#fae400"/><path d="M312.1 355.3L315.0 350.8L316.7 351.8L313.8 356.9Z" fill="#eda200"/><path d="M229.7 354.1L232.6 354.8L234.3 360.5L231.4 359.7Z" fill="#e68900"/><path d="M260.7 366.5L263.5 364.0L265.2 370.2L262.4 373.1Z" fill="#d04b00"/><path d="M198.8 348.4L201.7 347.3L203.4 344.0L200.5 344.4Z" fill="#fae100"/><path d="M242.9 360.8L245.8 360.3L247.5 366.7L244.6 367.4Z" fill="#d96200"/><path d="M203.4 344.0L206.2 344.0L207.9 343.2L205.1 342.5Z" fill="#fefb00"/><path d="M316.7 351.8L319.6 348.1L321.3 348.5L318.4 352.8Z" fill="#f3bf00"/><path d="M280.1 366.9L283.0 362.6L284.7 367.3L281.8 372.2Z" fill="#d35200"/><path d="M213.7 345.1L216.5 346.2L218.2 349.0L215.4 347.4Z" fill="#f9db00"/><path d="M330.4 343.9L333.3 344.2L335.0 343.3L332.1 343.4Z" fill="#fefc00"/><path d="M268.1 367.0L271.0 363.8L272.7 369.5L269.8 373.2Z" fill="#d14c00"/><path d="M253.2 364.2L256.1 362.5L257.8 368.8L254.9 370.8Z" fill="#d45500"/><path d="M321.3 348.5L324.1 345.9L325.8 345.8L323.0 348.9Z" fill="#f9db00"/><path d="M325.8 345.8L328.7 344.5L330.4 343.9L327.5 345.7Z" fill="#fdf100"/><path d="M232.6 354.8L235.5 355.3L237.2 360.9L234.3 360.5Z" fill="#e58700"/><path d="M216.5 346.2L219.4 347.3L221.1 350.5L218.2 349.0Z" fill="#f7d100"/><path d="M206.2 344.0L209.1 344.2L210.8 344.0L207.9 343.2Z" fill="#fefc00"/><path d="M201.7 347.3L204.5 346.6L206.2 344.0L203.4 344.0Z" fill="#fcec00"/><path d="M275.5 365.7L278.4 361.9L280.1 366.9L277.2 371.2Z" fill="#d65800"/><path d="M245.8 360.3L248.6 359.5L250.3 365.6L247.5 366.7Z" fill="#dc6a00"/><path d="M219.4 347.3L222.3 348.3L224.0 351.9L221.1 350.5Z" fill="#f5c900"/><path d="M296.7 360.7L299.6 356.0L301.3 358.7L298.4 364.1Z" fill="#e37e00"/><path d="M301.3 358.7L304.1 354.2L305.9 356.3L303.0 361.6Z" fill="#e78c00"/><path d="M235.5 355.3L238.3 355.4L240.0 361.0L237.2 360.9Z" fill="#e68900"/><path d="M305.9 356.3L308.7 352.0L310.4 353.6L307.6 358.6Z" fill="#ec9f00"/><path d="M328.7 344.5L331.6 345.2L333.3 344.2L330.4 343.9Z" fill="#fefc00"/><path d="M292.1 362.0L295.0 357.4L296.7 360.7L293.8 365.9Z" fill="#e07400"/><path d="M209.1 344.2L212.0 344.6L213.7 345.1L210.8 344.0Z" fill="#fef900"/><path d="M310.4 353.6L313.3 349.8L315.0 350.8L312.1 355.3Z" fill="#f1b500"/><path d="M263.5 364.0L266.4 361.4L268.1 367.0L265.2 370.2Z" fill="#d85e00"/><path d="M222.3 348.3L225.2 349.2L226.9 353.1L224.0 351.9Z" fill="#f4c200"/><path d="M256.1 362.5L259.0 360.7L260.7 366.5L257.8 368.8Z" fill="#da6300"/><path d="M287.6 362.6L290.4 358.3L292.1 362.0L289.3 367.0Z" fill="#de7000"/><path d="M315.0 350.8L317.9 347.7L319.6 348.1L316.7 351.8Z" fill="#f6ce00"/><path d="M324.1 345.9L327.0 345.1L328.7 344.5L325.8 345.8Z" fill="#fdf500"/><path d="M319.6 348.1L322.4 346.1L324.1 345.9L321.3 348.5Z" fill="#fae400"/><path d="M204.5 346.6L207.4 346.3L209.1 344.2L206.2 344.0Z" fill="#fdf400"/><path d="M271.0 363.8L273.8 360.6L275.5 365.7L272.7 369.5Z" fill="#da6300"/><path d="M212.0 344.6L214.8 345.2L216.5 346.2L213.7 345.1Z" fill="#fdf500"/><path d="M225.2 349.2L228.0 350.0L229.7 354.1L226.9 353.1Z" fill="#f3bd00"/><path d="M248.6 359.5L251.5 358.4L253.2 364.2L250.3 365.6Z" fill="#e07400"/><path d="M238.3 355.4L241.2 355.4L242.9 360.8L240.0 361.0Z" fill="#e78c00"/><path d="M283.0 362.6L285.9 358.6L287.6 362.6L284.7 367.3Z" fill="#de7000"/><path d="M327.0 345.1L329.9 346.3L331.6 345.2L328.7 344.5Z" fill="#fefb00"/><path d="M214.8 345.2L217.7 345.9L219.4 347.3L216.5 346.2Z" fill="#fdf100"/><path d="M207.4 346.3L210.3 346.1L212.0 344.6L209.1 344.2Z" fill="#fef900"/><path d="M228.0 350.0L230.9 350.7L232.6 354.8L229.7 354.1Z" fill="#f2ba00"/><path d="M278.4 361.9L281.3 358.4L283.0 362.6L280.1 366.9Z" fill="#e07400"/><path d="M322.4 346.1L325.3 345.9L327.0 345.1L324.1 345.9Z" fill="#fef900"/><path d="M259.0 360.7L261.8 358.7L263.5 364.0L260.7 366.5Z" fill="#e07400"/><path d="M241.2 355.4L244.1 355.1L245.8 360.3L242.9 360.8Z" fill="#e89200"/><path d="M266.4 361.4L269.3 358.8L271.0 363.8L268.1 367.0Z" fill="#df7300"/><path d="M217.7 345.9L220.6 346.5L222.3 348.3L219.4 347.3Z" fill="#fcec00"/><path d="M317.9 347.7L320.7 346.4L322.4 346.1L319.6 348.1Z" fill="#fcee00"/><path d="M304.1 354.2L307.0 350.7L308.7 352.0L305.9 356.3Z" fill="#f1b600"/><path d="M308.7 352.0L311.6 349.1L313.3 349.8L310.4 353.6Z" fill="#f5c900"/><path d="M313.3 349.8L316.2 347.5L317.9 347.7L315.0 350.8Z" fill="#f9dc00"/><path d="M299.6 356.0L302.4 352.3L304.1 354.2L301.3 358.7Z" fill="#eea700"/><path d="M251.5 358.4L254.4 357.2L256.1 362.5L253.2 364.2Z" fill="#e48100"/><path d="M210.3 346.1L213.1 346.2L214.8 345.2L212.0 344.6Z" fill="#fefb00"/><path d="M230.9 350.7L233.8 351.1L235.5 355.3L232.6 354.8Z" fill="#f2b900"/><path d="M295.0 357.4L297.9 353.7L299.6 356.0L296.7 360.7Z" fill="#eb9b00"/><path d="M325.3 345.9L328.2 347.6L329.9 346.3L327.0 345.1Z" fill="#fef900"/><path d="M290.4 358.3L293.3 354.6L295.0 357.4L292.1 362.0Z" fill="#e99400"/><path d="M273.8 360.6L276.7 357.6L278.4 361.9L275.5 365.7Z" fill="#e37e00"/><path d="M220.6 346.5L223.4 347.2L225.2 349.2L222.3 348.3Z" fill="#fbe800"/><path d="M244.1 355.1L246.9 354.6L248.6 359.5L245.8 360.3Z" fill="#eb9a00"/><path d="M213.1 346.2L216.0 346.5L217.7 345.9L214.8 345.2Z" fill="#fefc00"/><path d="M233.8 351.1L236.6 351.4L238.3 355.4L235.5 355.3Z" fill="#f2ba00"/><path d="M285.9 358.6L288.7 355.2L290.4 358.3L287.6 362.6Z" fill="#e89200"/><path d="M320.7 346.4L323.6 346.9L325.3 345.9L322.4 346.1Z" fill="#fefc00"/><path d="M223.4 347.2L226.3 347.8L228.0 350.0L225.2 349.2Z" fill="#fae400"/><path d="M261.8 358.7L264.7 356.7L266.4 361.4L263.5 364.0Z" fill="#e68900"/><path d="M254.4 357.2L257.3 355.9L259.0 360.7L256.1 362.5Z" fill="#e89100"/><path d="M316.2 347.5L319.0 347.0L320.7 346.4L317.9 347.7Z" fill="#fdf500"/><path d="M281.3 358.4L284.2 355.3L285.9 358.6L283.0 362.6Z" fill="#e99400"/><path d="M216.0 346.5L218.9 346.8L220.6 346.5L217.7 345.9Z" fill="#fefc00"/><path d="M323.6 346.9L326.5 349.2L328.2 347.6L325.3 345.9Z" fill="#fdf400"/><path d="M269.3 358.8L272.1 356.4L273.8 360.6L271.0 363.8Z" fill="#e78c00"/><path d="M311.6 349.1L314.5 347.6L316.2 347.5L313.3 349.8Z" fill="#fbea00"/><path d="M236.6 351.4L239.5 351.5L241.2 355.4L238.3 355.4Z" fill="#f3bd00"/><path d="M307.0 350.7L309.9 348.6L311.6 349.1L308.7 352.0Z" fill="#f9db00"/><path d="M226.3 347.8L229.2 348.3L230.9 350.7L228.0 350.0Z" fill="#fae200"/><path d="M246.9 354.6L249.8 353.9L251.5 358.4L248.6 359.5Z" fill="#eda500"/><path d="M302.4 352.3L305.3 349.8L307.0 350.7L304.1 354.2Z" fill="#f6ce00"/><path d="M297.9 353.7L300.7 350.9L302.4 352.3L299.6 356.0Z" fill="#f4c200"/><path d="M218.9 346.8L221.7 347.2L223.4 347.2L220.6 346.5Z" fill="#fefb00"/><path d="M319.0 347.0L321.9 348.2L323.6 346.9L320.7 346.4Z" fill="#fefb00"/><path d="M276.7 357.6L279.6 354.9L281.3 358.4L278.4 361.9Z" fill="#eb9b00"/><path d="M293.3 354.6L296.2 351.8L297.9 353.7L295.0 357.4Z" fill="#f2ba00"/><path d="M229.2 348.3L232.1 348.8L233.8 351.1L230.9 350.7Z" fill="#fae200"/><path d="M239.5 351.5L242.4 351.5L244.1 355.1L241.2 355.4Z" fill="#f4c200"/><path d="M321.9 348.2L324.8 351.1L326.5 349.2L323.6 346.9Z" fill="#fcec00"/><path d="M257.3 355.9L260.1 354.5L261.8 358.7L259.0 360.7Z" fill="#eda200"/><path d="M264.7 356.7L267.6 354.9L269.3 358.8L266.4 361.4Z" fill="#ec9f00"/><path d="M314.5 347.6L317.3 347.8L319.0 347.0L316.2 347.5Z" fill="#fefb00"/><path d="M288.7 355.2L291.6 352.4L293.3 354.6L290.4 358.3Z" fill="#f1b500"/><path d="M221.7 347.2L224.6 347.6L226.3 347.8L223.4 347.2Z" fill="#fefa00"/><path d="M249.8 353.9L252.7 353.2L254.4 357.2L251.5 358.4Z" fill="#f0b100"/><path d="M309.9 348.6L312.8 348.0L314.5 347.6L311.6 349.1Z" fill="#fdf400"/><path d="M272.1 356.4L275.0 354.2L276.7 357.6L273.8 360.6Z" fill="#eea700"/><path d="M232.1 348.8L234.9 349.2L236.6 351.4L233.8 351.1Z" fill="#fae200"/><path d="M284.2 355.3L287.0 352.7L288.7 355.2L285.9 358.6Z" fill="#f1b500"/><path d="M317.3 347.8L320.2 349.8L321.9 348.2L319.0 347.0Z" fill="#fef800"/><path d="M305.3 349.8L308.2 348.6L309.9 348.6L307.0 350.7Z" fill="#fceb00"/><path d="M242.4 351.5L245.2 351.3L246.9 354.6L244.1 355.1Z" fill="#f5c900"/><path d="M320.2 349.8L323.1 353.4L324.8 351.1L321.9 348.2Z" fill="#fae100"/><path d="M224.6 347.6L227.5 348.1L229.2 348.3L226.3 347.8Z" fill="#fef900"/><path d="M300.7 350.9L303.6 349.3L305.3 349.8L302.4 352.3Z" fill="#fae200"/><path d="M279.6 354.9L282.5 352.7L284.2 355.3L281.3 358.4Z" fill="#f2ba00"/><path d="M260.1 354.5L263.0 353.3L264.7 356.7L261.8 358.7Z" fill="#f1b500"/><path d="M234.9 349.2L237.8 349.4L239.5 351.5L236.6 351.4Z" fill="#fae400"/><path d="M312.8 348.0L315.6 349.1L317.3 347.8L314.5 347.6Z" fill="#fefc00"/><path d="M296.2 351.8L299.0 350.0L300.7 350.9L297.9 353.7Z" fill="#f9db00"/><path d="M252.7 353.2L255.6 352.5L257.3 355.9L254.4 357.2Z" fill="#f3bf00"/><path d="M267.6 354.9L270.4 353.2L272.1 356.4L269.3 358.8Z" fill="#f1b600"/><path d="M227.5 348.1L230.4 348.5L232.1 348.8L229.2 348.3Z" fill="#fef900"/><path d="M318.5 351.8L321.4 356.1L323.1 353.4L320.2 349.8Z" fill="#f7d200"/><path d="M245.2 351.3L248.1 351.1L249.8 353.9L246.9 354.6Z" fill="#f7d100"/><path d="M291.6 352.4L294.5 350.6L296.2 351.8L293.3 354.6Z" fill="#f8d600"/><path d="M315.6 349.1L318.5 351.8L320.2 349.8L317.3 347.8Z" fill="#fcf000"/><path d="M308.2 348.6L311.1 348.9L312.8 348.0L309.9 348.6Z" fill="#fefb00"/><path d="M275.0 354.2L277.9 352.4L279.6 354.9L276.7 357.6Z" fill="#f4c200"/><path d="M237.8 349.4L240.7 349.7L242.4 351.5L239.5 351.5Z" fill="#fbe800"/><path d="M287.0 352.7L289.9 351.0L291.6 352.4L288.7 355.2Z" fill="#f7d400"/><path d="M303.6 349.3L306.5 349.1L308.2 348.6L305.3 349.8Z" fill="#fef700"/><path d="M230.4 348.5L233.2 349.0L234.9 349.2L232.1 348.8Z" fill="#fef900"/><path d="M316.8 354.3L319.7 359.2L321.4 356.1L318.5 351.8Z" fill="#f3c000"/><path d="M311.1 348.9L313.9 350.8L315.6 349.1L312.8 348.0Z" fill="#fef800"/><path d="M255.6 352.5L258.4 351.8L260.1 354.5L257.3 355.9Z" fill="#f6ce00"/><path d="M263.0 353.3L265.9 352.2L267.6 354.9L264.7 356.7Z" fill="#f5c900"/><path d="M313.9 350.8L316.8 354.3L318.5 351.8L315.6 349.1Z" fill="#fae300"/><path d="M299.0 350.0L301.9 349.5L303.6 349.3L300.7 350.9Z" fill="#fdf200"/><path d="M248.1 351.1L251.0 350.9L252.7 353.2L249.8 353.9Z" fill="#f9db00"/><path d="M298.1 410.2L300.9 415.0L302.6 410.1L299.8 404.7Z" fill="#7002ee"/><path d="M296.4 415.3L299.2 419.1L300.9 415.0L298.1 410.2Z" fill="#5b01b7"/><path d="M282.5 352.7L285.3 351.2L287.0 352.7L284.2 355.3Z" fill="#f8d600"/><path d="M299.8 404.7L302.6 410.1L304.3 404.8L301.5 398.7Z" fill="#8305fe"/><path d="M270.4 353.2L273.3 352.0L275.0 354.2L272.1 356.4Z" fill="#f6ce00"/><path d="M240.7 349.7L243.5 349.9L245.2 351.3L242.4 351.5Z" fill="#fcec00"/><path d="M315.1 357.4L318.0 362.8L319.7 359.2L316.8 354.3Z" fill="#eeaa00"/><path d="M301.5 398.7L304.3 404.8L306.0 399.1L303.2 392.6Z" fill="#950ad6"/><path d="M233.2 349.0L236.1 349.4L237.8 349.4L234.9 349.2Z" fill="#fefa00"/><path d="M306.5 349.1L309.4 350.4L311.1 348.9L308.2 348.6Z" fill="#fefb00"/><path d="M294.5 350.6L297.3 349.9L299.0 350.0L296.2 351.8Z" fill="#fcee00"/><path d="M293.5 410.8L296.4 415.3L298.1 410.2L295.2 405.0Z" fill="#7002ee"/><path d="M303.2 392.6L306.0 399.1L307.7 393.3L304.9 386.5Z" fill="#a61379"/><path d="M313.4 360.9L316.3 366.9L318.0 362.8L315.1 357.4Z" fill="#e89200"/><path d="M295.2 405.0L298.1 410.2L299.8 404.7L296.9 398.8Z" fill="#8405fe"/><path d="M312.2 353.1L315.1 357.4L316.8 354.3L313.9 350.8Z" fill="#f7d200"/><path d="M277.9 352.4L280.7 351.3L282.5 352.7L279.6 354.9Z" fill="#f9db00"/><path d="M309.4 350.4L312.2 353.1L313.9 350.8L311.1 348.9Z" fill="#fcee00"/><path d="M304.9 386.5L307.7 393.3L309.4 387.5L306.6 380.6Z" fill="#b52000"/><path d="M289.9 351.0L292.8 350.3L294.5 350.6L291.6 352.4Z" fill="#fcec00"/><path d="M258.4 351.8L261.3 351.3L263.0 353.3L260.1 354.5Z" fill="#f9dc00"/><path d="M301.9 349.5L304.8 350.3L306.5 349.1L303.6 349.3Z" fill="#fefc00"/><path d="M251.0 350.9L253.8 350.8L255.6 352.5L252.7 353.2Z" fill="#fae400"/><path d="M311.7 365.1L314.6 371.5L316.3 366.9L313.4 360.9Z" fill="#e17800"/><path d="M296.9 398.8L299.8 404.7L301.5 398.7L298.6 392.4Z" fill="#970bcf"/><path d="M306.6 380.6L309.4 387.5L311.1 381.9L308.3 375.0Z" fill="#c23100"/><path d="M243.5 349.9L246.4 350.1L248.1 351.1L245.2 351.3Z" fill="#fdf100"/><path d="M265.9 352.2L268.7 351.4L270.4 353.2L267.6 354.9Z" fill="#f9db00"/><path d="M310.0 369.8L312.9 376.5L314.6 371.5L311.7 365.1Z" fill="#d85e00"/><path d="M308.3 375.0L311.1 381.9L312.9 376.5L310.0 369.8Z" fill="#ce4600"/><path d="M236.1 349.4L239.0 349.9L240.7 349.7L237.8 349.4Z" fill="#fefb00"/><path d="M290.6 405.7L293.5 410.8L295.2 405.0L292.3 399.3Z" fill="#8305fe"/><path d="M298.6 392.4L301.5 398.7L303.2 392.6L300.3 386.0Z" fill="#a81567"/><path d="M310.5 356.1L313.4 360.9L315.1 357.4L312.2 353.1Z" fill="#f2bc00"/><path d="M285.3 351.2L288.2 350.6L289.9 351.0L287.0 352.7Z" fill="#fcec00"/><path d="M297.3 349.9L300.2 350.4L301.9 349.5L299.0 350.0Z" fill="#fefb00"/><path d="M273.3 352.0L276.2 351.2L277.9 352.4L275.0 354.2Z" fill="#fae200"/><path d="M304.8 350.3L307.6 352.5L309.4 350.4L306.5 349.1Z" fill="#fdf500"/><path d="M292.3 399.3L295.2 405.0L296.9 398.8L294.0 392.7Z" fill="#970bcf"/><path d="M307.6 352.5L310.5 356.1L312.2 353.1L309.4 350.4Z" fill="#f9df00"/><path d="M300.3 386.0L303.2 392.6L304.9 386.5L302.0 379.8Z" fill="#b82300"/><path d="M308.8 359.6L311.7 365.1L313.4 360.9L310.5 356.1Z" fill="#eca200"/><path d="M239.0 349.9L241.8 350.5L243.5 349.9L240.7 349.7Z" fill="#fefc00"/><path d="M287.7 400.4L290.6 405.7L292.3 399.3L289.5 393.5Z" fill="#950ad6"/><path d="M253.8 350.8L256.7 350.8L258.4 351.8L255.6 352.5Z" fill="#fcee00"/><path d="M246.4 350.1L249.3 350.5L251.0 350.9L248.1 351.1Z" fill="#fdf500"/><path d="M294.0 392.7L296.9 398.8L298.6 392.4L295.7 386.0Z" fill="#a91561"/><path d="M302.0 379.8L304.9 386.5L306.6 380.6L303.7 374.0Z" fill="#c53700"/><path d="M292.8 350.3L295.6 350.6L297.3 349.9L294.5 350.6Z" fill="#fefa00"/><path d="M280.7 351.3L283.6 350.8L285.3 351.2L282.5 352.7Z" fill="#fcee00"/><path d="M261.3 351.3L264.2 351.1L265.9 352.2L263.0 353.3Z" fill="#fbea00"/><path d="M307.1 363.8L310.0 369.8L311.7 365.1L308.8 359.6Z" fill="#e58600"/><path d="M300.2 350.4L303.1 352.1L304.8 350.3L301.9 349.5Z" fill="#fef900"/><path d="M303.7 374.0L306.6 380.6L308.3 375.0L305.4 368.6Z" fill="#d24f00"/><path d="M305.4 368.6L308.3 375.0L310.0 369.8L307.1 363.8Z" fill="#dc6a00"/><path d="M268.7 351.4L271.6 351.1L273.3 352.0L270.4 353.2Z" fill="#fceb00"/><path d="M305.9 355.2L308.8 359.6L310.5 356.1L307.6 352.5Z" fill="#f5c900"/><path d="M295.7 386.0L298.6 392.4L300.3 386.0L297.4 379.6Z" fill="#b92500"/><path d="M289.5 393.5L292.3 399.3L294.0 392.7L291.2 386.6Z" fill="#a81567"/><path d="M303.1 352.1L305.9 355.2L307.6 352.5L304.8 350.3Z" fill="#fbe700"/><path d="M288.2 350.6L291.1 350.9L292.8 350.3L289.9 351.0Z" fill="#fef900"/><path d="M241.8 350.5L244.7 351.2L246.4 350.1L243.5 349.9Z" fill="#fefc00"/><path d="M276.2 351.2L279.0 351.0L280.7 351.3L277.9 352.4Z" fill="#fdf200"/><path d="M295.6 350.6L298.5 352.1L300.2 350.4L297.3 349.9Z" fill="#fefa00"/><path d="M284.9 394.9L287.7 400.4L289.5 393.5L286.6 387.8Z" fill="#a61379"/><path d="M297.4 379.6L300.3 386.0L302.0 379.8L299.1 373.5Z" fill="#c73a00"/><path d="M304.2 358.7L307.1 363.8L308.8 359.6L305.9 355.2Z" fill="#efae00"/><path d="M249.3 350.5L252.1 350.9L253.8 350.8L251.0 350.9Z" fill="#fef900"/><path d="M256.7 350.8L259.6 351.0L261.3 351.3L258.4 351.8Z" fill="#fdf500"/><path d="M291.2 386.6L294.0 392.7L295.7 386.0L292.9 379.9Z" fill="#b92500"/><path d="M299.1 373.5L302.0 379.8L303.7 374.0L300.8 367.9Z" fill="#d45500"/><path d="M302.5 363.0L305.4 368.6L307.1 363.8L304.2 358.7Z" fill="#e89100"/><path d="M283.6 350.8L286.5 351.2L288.2 350.6L285.3 351.2Z" fill="#fefa00"/><path d="M264.2 351.1L267.0 351.2L268.7 351.4L265.9 352.2Z" fill="#fdf400"/><path d="M300.8 367.9L303.7 374.0L305.4 368.6L302.5 363.0Z" fill="#df7200"/><path d="M298.5 352.1L301.4 354.8L303.1 352.1L300.2 350.4Z" fill="#fced00"/><path d="M301.4 354.8L304.2 358.7L305.9 355.2L303.1 352.1Z" fill="#f7d200"/><path d="M291.1 350.9L293.9 352.2L295.6 350.6L292.8 350.3Z" fill="#fefb00"/><path d="M286.6 387.8L289.5 393.5L291.2 386.6L288.3 380.7Z" fill="#b82300"/><path d="M271.6 351.1L274.5 351.3L276.2 351.2L273.3 352.0Z" fill="#fef700"/><path d="M292.9 379.9L295.7 386.0L297.4 379.6L294.6 373.5Z" fill="#c83c00"/><path d="M244.7 351.2L247.6 352.0L249.3 350.5L246.4 350.1Z" fill="#fefb00"/><path d="M282.0 389.4L284.9 394.9L286.6 387.8L283.7 382.1Z" fill="#b52000"/><path d="M252.1 350.9L255.0 351.6L256.7 350.8L253.8 350.8Z" fill="#fefc00"/><path d="M299.7 358.3L302.5 363.0L304.2 358.7L301.4 354.8Z" fill="#f1b700"/><path d="M279.0 351.0L281.9 351.6L283.6 350.8L280.7 351.3Z" fill="#fefb00"/><path d="M294.6 373.5L297.4 379.6L299.1 373.5L296.3 367.7Z" fill="#d55800"/><path d="M293.9 352.2L296.8 354.7L298.5 352.1L295.6 350.6Z" fill="#fcf000"/><path d="M259.6 351.0L262.5 351.6L264.2 351.1L261.3 351.3Z" fill="#fefb00"/><path d="M286.5 351.2L289.4 352.6L291.1 350.9L288.2 350.6Z" fill="#fefb00"/><path d="M288.3 380.7L291.2 386.6L292.9 379.9L290.0 374.1Z" fill="#c73a00"/><path d="M296.8 354.7L299.7 358.3L301.4 354.8L298.5 352.1Z" fill="#f8d800"/><path d="M298.0 362.6L300.8 367.9L302.5 363.0L299.7 358.3Z" fill="#ea9800"/><path d="M296.3 367.7L299.1 373.5L300.8 367.9L298.0 362.6Z" fill="#e17700"/><path d="M267.0 351.2L269.9 351.8L271.6 351.1L268.7 351.4Z" fill="#fefb00"/><path d="M247.6 352.0L250.4 353.0L252.1 350.9L249.3 350.5Z" fill="#fef900"/><path d="M283.7 382.1L286.6 387.8L288.3 380.7L285.4 375.2Z" fill="#c53700"/><path d="M274.5 351.3L277.3 352.1L279.0 351.0L276.2 351.2Z" fill="#fefc00"/><path d="M290.0 374.1L292.9 379.9L294.6 373.5L291.7 368.1Z" fill="#d55800"/><path d="M279.1 384.1L282.0 389.4L283.7 382.1L280.8 376.9Z" fill="#c23100"/><path d="M289.4 352.6L292.2 354.9L293.9 352.2L291.1 350.9Z" fill="#fdf100"/><path d="M295.1 358.3L298.0 362.6L299.7 358.3L296.8 354.7Z" fill="#f2bc00"/><path d="M255.0 351.6L257.9 352.6L259.6 351.0L256.7 350.8Z" fill="#fefb00"/><path d="M281.9 351.6L284.8 353.0L286.5 351.2L283.6 350.8Z" fill="#fefa00"/><path d="M292.2 354.9L295.1 358.3L296.8 354.7L293.9 352.2Z" fill="#f9db00"/><path d="M291.7 368.1L294.6 373.5L296.3 367.7L293.4 362.7Z" fill="#e17900"/><path d="M293.4 362.7L296.3 367.7L298.0 362.6L295.1 358.3Z" fill="#eb9c00"/><path d="M262.5 351.6L265.3 352.6L267.0 351.2L264.2 351.1Z" fill="#fefc00"/><path d="M285.4 375.2L288.3 380.7L290.0 374.1L287.1 368.9Z" fill="#d45500"/><path d="M250.4 353.0L253.3 354.3L255.0 351.6L252.1 350.9Z" fill="#fdf400"/><path d="M269.9 351.8L272.8 352.9L274.5 351.3L271.6 351.1Z" fill="#fefb00"/><path d="M284.8 353.0L287.7 355.3L289.4 352.6L286.5 351.2Z" fill="#fcf000"/><path d="M277.3 352.1L280.2 353.7L281.9 351.6L279.0 351.0Z" fill="#fef900"/><path d="M280.8 376.9L283.7 382.1L285.4 375.2L282.5 370.2Z" fill="#d24f00"/><path d="M290.5 358.6L293.4 362.7L295.1 358.3L292.2 354.9Z" fill="#f3be00"/><path d="M276.3 379.0L279.1 384.1L280.8 376.9L278.0 372.0Z" fill="#ce4600"/><path d="M287.1 368.9L290.0 374.1L291.7 368.1L288.8 363.3Z" fill="#e17700"/><path d="M257.9 352.6L260.8 353.9L262.5 351.6L259.6 351.0Z" fill="#fef800"/><path d="M287.7 355.3L290.5 358.6L292.2 354.9L289.4 352.6Z" fill="#f9db00"/><path d="M288.8 363.3L291.7 368.1L293.4 362.7L290.5 358.6Z" fill="#eb9c00"/><path d="M265.3 352.6L268.2 354.0L269.9 351.8L267.0 351.2Z" fill="#fef800"/><path d="M253.3 354.3L256.2 355.8L257.9 352.6L255.0 351.6Z" fill="#fcec00"/><path d="M282.5 370.2L285.4 375.2L287.1 368.9L284.2 364.2Z" fill="#df7200"/><path d="M280.2 353.7L283.1 356.1L284.8 353.0L281.9 351.6Z" fill="#fced00"/><path d="M272.8 352.9L275.6 354.7L277.3 352.1L274.5 351.3Z" fill="#fdf500"/><path d="M286.0 359.3L288.8 363.3L290.5 358.6L287.7 355.3Z" fill="#f2bc00"/><path d="M278.0 372.0L280.8 376.9L282.5 370.2L279.7 365.7Z" fill="#dc6a00"/><path d="M283.1 356.1L286.0 359.3L287.7 355.3L284.8 353.0Z" fill="#f8d800"/><path d="M273.4 374.3L276.3 379.0L278.0 372.0L275.1 367.6Z" fill="#d85e00"/><path d="M284.2 364.2L287.1 368.9L288.8 363.3L286.0 359.3Z" fill="#ea9800"/><path d="M260.8 353.9L263.6 355.6L265.3 352.6L262.5 351.6Z" fill="#fcf000"/><path d="M256.2 355.8L259.1 357.8L260.8 353.9L257.9 352.6Z" fill="#fae100"/><path d="M268.2 354.0L271.1 356.0L272.8 352.9L269.9 351.8Z" fill="#fcee00"/><path d="M275.6 354.7L278.5 357.1L280.2 353.7L277.3 352.1Z" fill="#fbe700"/><path d="M279.7 365.7L282.5 370.2L284.2 364.2L281.4 360.3Z" fill="#e89100"/><path d="M281.4 360.3L284.2 364.2L286.0 359.3L283.1 356.1Z" fill="#f1b700"/><path d="M278.5 357.1L281.4 360.3L283.1 356.1L280.2 353.7Z" fill="#f7d200"/><path d="M270.5 370.1L273.4 374.3L275.1 367.6L272.2 363.8Z" fill="#e17800"/><path d="M275.1 367.6L278.0 372.0L279.7 365.7L276.8 361.8Z" fill="#e58600"/><path d="M263.6 355.6L266.5 357.8L268.2 354.0L265.3 352.6Z" fill="#fae300"/><path d="M271.1 356.0L273.9 358.6L275.6 354.7L272.8 352.9Z" fill="#f9df00"/><path d="M259.1 357.8L261.9 360.2L263.6 355.6L260.8 353.9Z" fill="#f7d200"/><path d="M276.8 361.8L279.7 365.7L281.4 360.3L278.5 357.1Z" fill="#efae00"/><path d="M273.9 358.6L276.8 361.8L278.5 357.1L275.6 354.7Z" fill="#f5c900"/><path d="M267.7 366.3L270.5 370.1L272.2 363.8L269.4 360.5Z" fill="#e89200"/><path d="M272.2 363.8L275.1 367.6L276.8 361.8L273.9 358.6Z" fill="#eca200"/><path d="M266.5 357.8L269.4 360.5L271.1 356.0L268.2 354.0Z" fill="#f7d200"/><path d="M261.9 360.2L264.8 363.0L266.5 357.8L263.6 355.6Z" fill="#f3c000"/><path d="M264.8 363.0L267.7 366.3L269.4 360.5L266.5 357.8Z" fill="#eeaa00"/><path d="M269.4 360.5L272.2 363.8L273.9 358.6L271.1 356.0Z" fill="#f2bc00"/></g><path d="M158.6 397.1L160.3 393.0L162.0 388.1L163.7 382.8L165.4 377.1L167.1 371.3L168.8 365.5L170.5 359.9L172.2 354.5L173.9 349.5L175.6 345.0L177.3 340.9L179.0 337.2L180.7 334.1L182.5 331.4L184.2 329.1L185.9 327.2L187.6 325.7L189.3 324.3L191.0 323.2L192.7 322.2L194.4 321.3L196.1 320.5L197.8 319.8L199.5 319.0L201.2 318.2L202.9 317.5L204.6 316.7L206.3 316.0L208.0 315.3L209.7 314.8L211.4 314.4L213.1 314.2L214.8 314.3L216.5 314.6L218.2 315.4L219.9 316.5L221.6 318.2L223.3 320.3L225.0 322.8L226.7 325.9L228.4 329.4L230.1 333.2L231.8 337.3L233.5 341.6L235.2 345.9L236.9 350.0L238.6 353.8L240.3 357.1L242.1 359.7M158.6 397.1L161.5 394.2L164.4 390.6L167.2 386.4L170.1 382.0L173.0 377.4L175.8 372.8L178.7 368.4L181.6 364.2L184.4 360.4L187.3 357.1L190.2 354.2L193.0 351.8L195.9 349.8L198.8 348.4L201.7 347.3L204.5 346.6L207.4 346.3L210.3 346.1L213.1 346.2L216.0 346.5L218.9 346.8L221.7 347.2L224.6 347.6L227.5 348.1L230.4 348.5L233.2 349.0L236.1 349.4L239.0 349.9L241.8 350.5L244.7 351.2L247.6 352.0L250.4 353.0L253.3 354.3L256.2 355.8L259.1 357.8L261.9 360.2L264.8 363.0L267.7 366.3L270.5 370.1L273.4 374.3L276.3 379.0L279.1 384.1L282.0 389.4L284.9 394.9L287.7 400.4L290.6 405.7L293.5 410.8L296.4 415.3L299.2 419.1M161.5 394.2L163.2 389.2L164.9 383.6L166.6 377.6L168.3 371.5L170.0 365.4L171.7 359.5L173.4 353.9L175.1 348.7L176.8 344.0L178.5 339.8L180.2 336.3L181.9 333.2L183.6 330.7L185.3 328.7L187.0 327.1L188.7 325.8L190.4 324.8L192.1 324.0L193.8 323.4L195.5 322.8L197.2 322.3L198.9 321.8L200.6 321.2L202.3 320.5L204.1 319.7L205.8 318.9L207.5 317.9L209.2 317.0L210.9 316.0L212.6 315.0L214.3 314.1L216.0 313.4L217.7 312.8L219.4 312.6L221.1 312.7L222.8 313.2L224.5 314.1L226.2 315.7L227.9 317.7L229.6 320.3L231.3 323.5L233.0 327.2L234.7 331.3L236.4 335.6L238.1 340.2L239.8 344.8L241.5 349.2L243.2 353.3L244.9 356.8M160.3 393.0L163.2 389.2L166.1 384.8L168.9 380.0L171.8 375.1L174.7 370.3L177.5 365.5L180.4 361.1L183.3 357.2L186.1 353.7L189.0 350.8L191.9 348.4L194.8 346.6L197.6 345.3L200.5 344.4L203.4 344.0L206.2 344.0L209.1 344.2L212.0 344.6L214.8 345.2L217.7 345.9L220.6 346.5L223.4 347.2L226.3 347.8L229.2 348.3L232.1 348.8L234.9 349.2L237.8 349.4L240.7 349.7L243.5 349.9L246.4 350.1L249.3 350.5L252.1 350.9L255.0 351.6L257.9 352.6L260.8 353.9L263.6 355.6L266.5 357.8L269.4 360.5L272.2 363.8L275.1 367.6L278.0 372.0L280.8 376.9L283.7 382.1L286.6 387.8L289.5 393.5L292.3 399.3L295.2 405.0L298.1 410.2L300.9 415.0M164.4 390.6L166.1 384.8L167.8 378.6L169.5 372.2L171.2 365.8L172.9 359.6L174.6 353.8L176.3 348.4L178.0 343.6L179.7 339.4L181.4 335.9L183.1 333.0L184.8 330.7L186.5 328.9L188.2 327.6L189.9 326.8L191.6 326.2L193.3 325.9L195.0 325.7L196.7 325.6L198.4 325.5L200.1 325.3L201.8 325.0L203.5 324.6L205.2 324.0L206.9 323.2L208.6 322.3L210.3 321.2L212.0 319.9L213.7 318.6L215.4 317.2L217.1 315.8L218.8 314.4L220.5 313.2L222.2 312.3L224.0 311.6L225.7 311.4L227.4 311.6L229.1 312.4L230.8 313.7L232.5 315.7L234.2 318.4L235.9 321.7L237.6 325.5L239.3 329.9L241.0 334.5L242.7 339.4L244.4 344.2L246.1 348.9L247.8 353.2M162.0 388.1L164.9 383.6L167.8 378.6L170.6 373.4L173.5 368.2L176.4 363.2L179.2 358.6L182.1 354.5L185.0 350.9L187.8 347.9L190.7 345.6L193.6 343.9L196.5 342.8L199.3 342.2L202.2 342.2L205.1 342.5L207.9 343.2L210.8 344.0L213.7 345.1L216.5 346.2L219.4 347.3L222.3 348.3L225.2 349.2L228.0 350.0L230.9 350.7L233.8 351.1L236.6 351.4L239.5 351.5L242.4 351.5L245.2 351.3L248.1 351.1L251.0 350.9L253.8 350.8L256.7 350.8L259.6 351.0L262.5 351.6L265.3 352.6L268.2 354.0L271.1 356.0L273.9 358.6L276.8 361.8L279.7 365.7L282.5 370.2L285.4 375.2L288.3 380.7L291.2 386.6L294.0 392.7L296.9 398.8L299.8 404.7L302.6 410.1M167.2 386.4L168.9 380.0L170.6 373.4L172.3 366.7L174.0 360.3L175.7 354.2L177.4 348.6L179.1 343.7L180.8 339.4L182.5 335.9L184.2 333.2L186.0 331.1L187.7 329.6L189.4 328.7L191.1 328.3L192.8 328.2L194.5 328.4L196.2 328.8L197.9 329.2L199.6 329.6L201.3 329.9L203.0 330.1L204.7 330.1L206.4 329.9L208.1 329.4L209.8 328.6L211.5 327.6L213.2 326.3L214.9 324.8L216.6 323.1L218.3 321.2L220.0 319.3L221.7 317.3L223.4 315.5L225.1 313.7L226.8 312.3L228.5 311.2L230.2 310.6L231.9 310.5L233.6 311.0L235.3 312.3L237.0 314.3L238.7 317.0L240.4 320.4L242.1 324.4L243.8 329.0L245.6 333.9L247.3 339.1L249.0 344.2L250.7 349.1M163.7 382.8L166.6 377.6L169.5 372.2L172.3 366.7L175.2 361.5L178.1 356.6L180.9 352.3L183.8 348.5L186.7 345.5L189.5 343.2L192.4 341.6L195.3 340.8L198.2 340.5L201.0 340.9L203.9 341.6L206.8 342.8L209.6 344.2L212.5 345.8L215.4 347.4L218.2 349.0L221.1 350.5L224.0 351.9L226.9 353.1L229.7 354.1L232.6 354.8L235.5 355.3L238.3 355.4L241.2 355.4L244.1 355.1L246.9 354.6L249.8 353.9L252.7 353.2L255.6 352.5L258.4 351.8L261.3 351.3L264.2 351.1L267.0 351.2L269.9 351.8L272.8 352.9L275.6 354.7L278.5 357.1L281.4 360.3L284.2 364.2L287.1 368.9L290.0 374.1L292.9 379.9L295.7 386.0L298.6 392.4L301.5 398.7L304.3 404.8M170.1 382.0L171.8 375.1L173.5 368.2L175.2 361.5L176.9 355.1L178.6 349.3L180.3 344.2L182.0 339.9L183.7 336.4L185.4 333.7L187.1 331.9L188.8 330.7L190.5 330.2L192.2 330.2L193.9 330.7L195.6 331.4L197.3 332.4L199.0 333.4L200.7 334.4L202.4 335.3L204.1 336.0L205.9 336.5L207.6 336.8L209.3 336.7L211.0 336.2L212.7 335.5L214.4 334.4L216.1 332.9L217.8 331.2L219.5 329.2L221.2 326.9L222.9 324.5L224.6 321.9L226.3 319.4L228.0 316.9L229.7 314.6L231.4 312.7L233.1 311.1L234.8 310.1L236.5 309.7L238.2 310.1L239.9 311.2L241.6 313.2L243.3 316.0L245.0 319.6L246.7 323.9L248.4 328.7L250.1 333.9L251.8 339.3L253.5 344.6M165.4 377.1L168.3 371.5L171.2 365.8L174.0 360.3L176.9 355.1L179.8 350.6L182.6 346.7L185.5 343.6L188.4 341.3L191.3 339.8L194.1 339.1L197.0 339.2L199.9 339.9L202.7 341.1L205.6 342.8L208.5 344.7L211.3 346.9L214.2 349.1L217.1 351.4L219.9 353.5L222.8 355.4L225.7 357.1L228.6 358.6L231.4 359.7L234.3 360.5L237.2 360.9L240.0 361.0L242.9 360.8L245.8 360.3L248.6 359.5L251.5 358.4L254.4 357.2L257.3 355.9L260.1 354.5L263.0 353.3L265.9 352.2L268.7 351.4L271.6 351.1L274.5 351.3L277.3 352.1L280.2 353.7L283.1 356.1L286.0 359.3L288.8 363.3L291.7 368.1L294.6 373.5L297.4 379.6L300.3 386.0L303.2 392.6L306.0 399.1M173.0 377.4L174.7 370.3L176.4 363.2L178.1 356.6L179.8 350.6L181.5 345.2L183.2 340.8L184.9 337.2L186.6 334.6L188.3 332.9L190.0 332.0L191.7 331.8L193.4 332.3L195.1 333.2L196.8 334.5L198.5 336.1L200.2 337.8L201.9 339.4L203.6 340.9L205.3 342.3L207.0 343.4L208.7 344.1L210.4 344.5L212.1 344.6L213.8 344.2L215.5 343.5L217.2 342.3L218.9 340.7L220.6 338.8L222.3 336.5L224.0 333.9L225.7 331.0L227.5 328.0L229.2 324.8L230.9 321.6L232.6 318.5L234.3 315.7L236.0 313.2L237.7 311.2L239.4 309.8L241.1 309.2L242.8 309.4L244.5 310.5L246.2 312.5L247.9 315.5L249.6 319.3L251.3 323.8L253.0 328.9L254.7 334.4L256.4 340.0M167.1 371.3L170.0 365.4L172.9 359.6L175.7 354.2L178.6 349.3L181.5 345.2L184.3 342.0L187.2 339.6L190.1 338.2L193.0 337.7L195.8 338.0L198.7 339.1L201.6 340.7L204.4 342.9L207.3 345.5L210.2 348.2L213.0 351.1L215.9 353.9L218.8 356.7L221.7 359.2L224.5 361.5L227.4 363.5L230.3 365.1L233.1 366.4L236.0 367.2L238.9 367.7L241.7 367.7L244.6 367.4L247.5 366.7L250.3 365.6L253.2 364.2L256.1 362.5L259.0 360.7L261.8 358.7L264.7 356.7L267.6 354.9L270.4 353.2L273.3 352.0L276.2 351.2L279.0 351.0L281.9 351.6L284.8 353.0L287.7 355.3L290.5 358.6L293.4 362.7L296.3 367.7L299.1 373.5L302.0 379.8L304.9 386.5L307.7 393.3M175.8 372.8L177.5 365.5L179.2 358.6L180.9 352.3L182.6 346.7L184.3 342.0L186.0 338.3L187.7 335.6L189.5 334.0L191.2 333.3L192.9 333.4L194.6 334.3L196.3 335.7L198.0 337.6L199.7 339.7L201.4 342.0L203.1 344.3L204.8 346.5L206.5 348.4L208.2 350.1L209.9 351.5L211.6 352.4L213.3 353.0L215.0 353.1L216.7 352.8L218.4 352.0L220.1 350.8L221.8 349.2L223.5 347.1L225.2 344.6L226.9 341.7L228.6 338.5L230.3 335.0L232.0 331.3L233.7 327.5L235.4 323.7L237.1 320.0L238.8 316.6L240.5 313.7L242.2 311.3L243.9 309.6L245.6 308.8L247.3 308.9L249.1 310.1L250.8 312.2L252.5 315.4L254.2 319.4L255.9 324.3L257.6 329.7L259.3 335.4M168.8 365.5L171.7 359.5L174.6 353.8L177.4 348.6L180.3 344.2L183.2 340.8L186.0 338.3L188.9 336.8L191.8 336.4L194.7 336.9L197.5 338.2L200.4 340.3L203.3 343.0L206.1 346.1L209.0 349.4L211.9 352.9L214.7 356.4L217.6 359.8L220.5 363.0L223.4 365.9L226.2 368.4L229.1 370.6L232.0 372.4L234.8 373.7L237.7 374.6L240.6 375.1L243.4 375.1L246.3 374.6L249.2 373.8L252.1 372.5L254.9 370.8L257.8 368.8L260.7 366.5L263.5 364.0L266.4 361.4L269.3 358.8L272.1 356.4L275.0 354.2L277.9 352.4L280.7 351.3L283.6 350.8L286.5 351.2L289.4 352.6L292.2 354.9L295.1 358.3L298.0 362.6L300.8 367.9L303.7 374.0L306.6 380.6L309.4 387.5M178.7 368.4L180.4 361.1L182.1 354.5L183.8 348.5L185.5 343.6L187.2 339.6L188.9 336.8L190.6 335.2L192.3 334.5L194.0 334.9L195.7 336.1L197.4 337.9L199.1 340.3L200.8 343.0L202.5 345.9L204.2 348.8L205.9 351.6L207.6 354.2L209.4 356.5L211.1 358.4L212.8 359.9L214.5 361.0L216.2 361.6L217.9 361.7L219.6 361.4L221.3 360.7L223.0 359.4L224.7 357.8L226.4 355.6L228.1 353.0L229.8 350.0L231.5 346.6L233.2 342.8L234.9 338.7L236.6 334.3L238.3 329.9L240.0 325.5L241.7 321.2L243.4 317.3L245.1 314.0L246.8 311.2L248.5 309.4L250.2 308.5L251.9 308.6L253.6 309.9L255.3 312.3L257.0 315.7L258.7 320.1L260.4 325.3L262.1 331.0M170.5 359.9L173.4 353.9L176.3 348.4L179.1 343.7L182.0 339.9L184.9 337.2L187.7 335.6L190.6 335.2L193.5 335.8L196.4 337.3L199.2 339.7L202.1 342.8L205.0 346.4L207.8 350.3L210.7 354.4L213.6 358.5L216.4 362.5L219.3 366.3L222.2 369.8L225.1 372.9L227.9 375.7L230.8 377.9L233.7 379.8L236.5 381.1L239.4 382.0L242.3 382.5L245.1 382.5L248.0 382.0L250.9 381.1L253.8 379.7L256.6 377.9L259.5 375.7L262.4 373.1L265.2 370.2L268.1 367.0L271.0 363.8L273.8 360.6L276.7 357.6L279.6 354.9L282.5 352.7L285.3 351.2L288.2 350.6L291.1 350.9L293.9 352.2L296.8 354.7L299.7 358.3L302.5 363.0L305.4 368.6L308.3 375.0L311.1 381.9M181.6 364.2L183.3 357.2L185.0 350.9L186.7 345.5L188.4 341.3L190.1 338.2L191.8 336.4L193.5 335.8L195.2 336.2L196.9 337.6L198.6 339.8L200.3 342.6L202.0 345.8L203.7 349.3L205.4 352.8L207.1 356.2L208.8 359.3L210.5 362.2L212.2 364.6L213.9 366.6L215.6 368.1L217.3 369.2L219.0 369.8L220.7 369.9L222.4 369.6L224.1 368.9L225.8 367.6L227.5 366.0L229.2 363.9L231.0 361.3L232.7 358.2L234.4 354.7L236.1 350.7L237.8 346.4L239.5 341.7L241.2 336.8L242.9 331.7L244.6 326.8L246.3 322.0L248.0 317.7L249.7 314.0L251.4 311.0L253.1 309.1L254.8 308.2L256.5 308.5L258.2 310.0L259.9 312.7L261.6 316.5L263.3 321.3L265.0 326.8M172.2 354.5L175.1 348.7L178.0 343.6L180.8 339.4L183.7 336.4L186.6 334.6L189.5 334.0L192.3 334.5L195.2 336.2L198.1 338.8L200.9 342.2L203.8 346.3L206.7 350.7L209.5 355.4L212.4 360.1L215.3 364.7L218.1 369.0L221.0 373.1L223.9 376.7L226.8 379.9L229.6 382.7L232.5 385.0L235.4 386.8L238.2 388.1L241.1 389.0L244.0 389.5L246.8 389.5L249.7 389.0L252.6 388.1L255.5 386.7L258.3 384.9L261.2 382.6L264.1 379.8L266.9 376.7L269.8 373.2L272.7 369.5L275.5 365.7L278.4 361.9L281.3 358.4L284.2 355.3L287.0 352.7L289.9 351.0L292.8 350.3L295.6 350.6L298.5 352.1L301.4 354.8L304.2 358.7L307.1 363.8L310.0 369.8L312.9 376.5M184.4 360.4L186.1 353.7L187.8 347.9L189.5 343.2L191.3 339.8L193.0 337.7L194.7 336.9L196.4 337.3L198.1 338.8L199.8 341.3L201.5 344.4L203.2 348.1L204.9 352.0L206.6 356.0L208.3 360.0L210.0 363.7L211.7 367.1L213.4 370.0L215.1 372.4L216.8 374.3L218.5 375.7L220.2 376.7L221.9 377.1L223.6 377.2L225.3 376.8L227.0 376.1L228.7 374.9L230.4 373.3L232.1 371.3L233.8 368.9L235.5 365.9L237.2 362.5L238.9 358.5L240.6 354.1L242.3 349.2L244.0 344.0L245.7 338.5L247.4 332.9L249.1 327.5L250.9 322.3L252.6 317.6L254.3 313.7L256.0 310.6L257.7 308.7L259.4 307.9L261.1 308.5L262.8 310.4L264.5 313.5L266.2 317.8L267.9 323.1M173.9 349.5L176.8 344.0L179.7 339.4L182.5 335.9L185.4 333.7L188.3 332.9L191.2 333.3L194.0 334.9L196.9 337.6L199.8 341.3L202.6 345.6L205.5 350.5L208.4 355.6L211.2 360.9L214.1 366.1L217.0 371.0L219.9 375.5L222.7 379.7L225.6 383.3L228.5 386.4L231.3 389.1L234.2 391.2L237.1 392.9L239.9 394.2L242.8 395.0L245.7 395.4L248.6 395.5L251.4 395.1L254.3 394.4L257.2 393.1L260.0 391.4L262.9 389.1L265.8 386.4L268.6 383.2L271.5 379.5L274.4 375.5L277.2 371.2L280.1 366.9L283.0 362.6L285.9 358.6L288.7 355.2L291.6 352.4L294.5 350.6L297.3 349.9L300.2 350.4L303.1 352.1L305.9 355.2L308.8 359.6L311.7 365.1L314.6 371.5M187.3 357.1L189.0 350.8L190.7 345.6L192.4 341.6L194.1 339.1L195.8 338.0L197.5 338.2L199.2 339.7L200.9 342.2L202.6 345.6L204.3 349.6L206.0 354.0L207.7 358.5L209.4 363.0L211.1 367.2L212.9 371.0L214.6 374.4L216.3 377.2L218.0 379.4L219.7 381.1L221.4 382.2L223.1 382.9L224.8 383.2L226.5 383.1L228.2 382.6L229.9 381.9L231.6 380.8L233.3 379.4L235.0 377.6L236.7 375.4L238.4 372.7L240.1 369.5L241.8 365.7L243.5 361.4L245.2 356.5L246.9 351.2L248.6 345.4L250.3 339.4L252.0 333.4L253.7 327.5L255.4 322.0L257.1 317.1L258.8 313.0L260.5 310.0L262.2 308.3L263.9 307.8L265.6 308.8L267.3 311.2L269.0 314.9L270.7 319.7M175.6 345.0L178.5 339.8L181.4 335.9L184.2 333.2L187.1 331.9L190.0 332.0L192.9 333.4L195.7 336.1L198.6 339.8L201.5 344.4L204.3 349.6L207.2 355.2L210.1 360.9L212.9 366.6L215.8 372.0L218.7 377.1L221.6 381.6L224.4 385.7L227.3 389.1L230.2 392.0L233.0 394.4L235.9 396.3L238.8 397.7L241.6 398.8L244.5 399.6L247.4 400.0L250.3 400.2L253.1 400.0L256.0 399.4L258.9 398.4L261.7 396.9L264.6 394.9L267.5 392.4L270.3 389.3L273.2 385.6L276.1 381.5L279.0 376.9L281.8 372.2L284.7 367.3L287.6 362.6L290.4 358.3L293.3 354.6L296.2 351.8L299.0 350.0L301.9 349.5L304.8 350.3L307.6 352.5L310.5 356.1L313.4 360.9L316.3 366.9M190.2 354.2L191.9 348.4L193.6 343.9L195.3 340.8L197.0 339.2L198.7 339.1L200.4 340.3L202.1 342.8L203.8 346.3L205.5 350.5L207.2 355.2L208.9 360.2L210.6 365.1L212.3 369.8L214.0 374.1L215.7 377.8L217.4 381.0L219.1 383.5L220.8 385.3L222.5 386.6L224.2 387.3L225.9 387.6L227.6 387.6L229.3 387.2L231.0 386.7L232.7 385.9L234.5 384.9L236.2 383.7L237.9 382.3L239.6 380.4L241.3 378.2L243.0 375.4L244.7 372.0L246.4 368.0L248.1 363.3L249.8 358.1L251.5 352.2L253.2 346.0L254.9 339.6L256.6 333.1L258.3 326.8L260.0 321.1L261.7 316.1L263.4 312.1L265.1 309.3L266.8 307.9L268.5 308.0L270.2 309.5L271.9 312.5L273.6 316.8M177.3 340.9L180.2 336.3L183.1 333.0L186.0 331.1L188.8 330.7L191.7 331.8L194.6 334.3L197.4 337.9L200.3 342.6L203.2 348.1L206.0 354.0L208.9 360.2L211.8 366.3L214.6 372.2L217.5 377.7L220.4 382.7L223.3 387.0L226.1 390.7L229.0 393.8L231.9 396.3L234.7 398.2L237.6 399.7L240.5 400.9L243.3 401.8L246.2 402.4L249.1 402.9L252.0 403.1L254.8 403.1L257.7 402.9L260.6 402.3L263.4 401.2L266.3 399.6L269.2 397.5L272.0 394.7L274.9 391.2L277.8 387.1L280.7 382.5L283.5 377.5L286.4 372.3L289.3 367.0L292.1 362.0L295.0 357.4L297.9 353.7L300.7 350.9L303.6 349.3L306.5 349.1L309.4 350.4L312.2 353.1L315.1 357.4L318.0 362.8M193.0 351.8L194.8 346.6L196.5 342.8L198.2 340.5L199.9 339.9L201.6 340.7L203.3 343.0L205.0 346.4L206.7 350.7L208.4 355.6L210.1 360.9L211.8 366.3L213.5 371.5L215.2 376.2L216.9 380.4L218.6 383.8L220.3 386.6L222.0 388.5L223.7 389.8L225.4 390.5L227.1 390.7L228.8 390.5L230.5 390.0L232.2 389.4L233.9 388.7L235.6 387.9L237.3 387.1L239.0 386.2L240.7 385.2L242.4 383.8L244.1 382.1L245.8 379.9L247.5 377.1L249.2 373.6L250.9 369.3L252.6 364.3L254.4 358.7L256.1 352.4L257.8 345.7L259.5 338.8L261.2 332.0L262.9 325.5L264.6 319.7L266.3 314.7L268.0 311.0L269.7 308.6L271.4 307.7L273.1 308.4L274.8 310.7L276.5 314.4M179.0 337.2L181.9 333.2L184.8 330.7L187.7 329.6L190.5 330.2L193.4 332.3L196.3 335.7L199.1 340.3L202.0 345.8L204.9 352.0L207.7 358.5L210.6 365.1L213.5 371.5L216.4 377.4L219.2 382.8L222.1 387.5L225.0 391.4L227.8 394.6L230.7 397.1L233.6 399.0L236.4 400.4L239.3 401.4L242.2 402.2L245.0 402.7L247.9 403.2L250.8 403.7L253.7 404.1L256.5 404.4L259.4 404.5L262.3 404.4L265.1 403.9L268.0 402.9L270.9 401.3L273.7 399.0L276.6 396.0L279.5 392.2L282.4 387.7L285.2 382.7L288.1 377.2L291.0 371.5L293.8 365.9L296.7 360.7L299.6 356.0L302.4 352.3L305.3 349.8L308.2 348.6L311.1 348.9L313.9 350.8L316.8 354.3L319.7 359.2M195.9 349.8L197.6 345.3L199.3 342.2L201.0 340.9L202.7 341.1L204.4 342.9L206.1 346.1L207.8 350.3L209.5 355.4L211.2 360.9L212.9 366.6L214.6 372.2L216.4 377.4L218.1 382.0L219.8 385.9L221.5 388.8L223.2 391.0L224.9 392.3L226.6 392.8L228.3 392.8L230.0 392.3L231.7 391.5L233.4 390.5L235.1 389.5L236.8 388.6L238.5 387.9L240.2 387.2L241.9 386.7L243.6 386.1L245.3 385.4L247.0 384.4L248.7 382.9L250.4 380.8L252.1 378.0L253.8 374.4L255.5 369.8L257.2 364.5L258.9 358.3L260.6 351.6L262.3 344.5L264.0 337.2L265.7 330.2L267.4 323.6L269.1 317.8L270.8 313.2L272.5 309.8L274.2 308.0L276.0 307.9L277.7 309.4L279.4 312.5M180.7 334.1L183.6 330.7L186.5 328.9L189.4 328.7L192.2 330.2L195.1 333.2L198.0 337.6L200.8 343.0L203.7 349.3L206.6 356.0L209.4 363.0L212.3 369.8L215.2 376.2L218.1 382.0L220.9 387.1L223.8 391.3L226.7 394.6L229.5 397.1L232.4 398.9L235.3 400.0L238.1 400.7L241.0 401.1L243.9 401.4L246.8 401.7L249.6 402.0L252.5 402.4L255.4 403.0L258.2 403.7L261.1 404.3L264.0 404.8L266.8 405.0L269.7 404.7L272.6 403.8L275.4 402.2L278.3 399.8L281.2 396.5L284.1 392.3L286.9 387.4L289.8 381.9L292.7 376.0L295.5 370.0L298.4 364.1L301.3 358.7L304.1 354.2L307.0 350.7L309.9 348.6L312.8 348.0L315.6 349.1L318.5 351.8L321.4 356.1M198.8 348.4L200.5 344.4L202.2 342.2L203.9 341.6L205.6 342.8L207.3 345.5L209.0 349.4L210.7 354.4L212.4 360.1L214.1 366.1L215.8 372.0L217.5 377.7L219.2 382.8L220.9 387.1L222.6 390.4L224.3 392.8L226.0 394.1L227.7 394.6L229.4 394.2L231.1 393.3L232.8 392.0L234.5 390.5L236.3 389.0L238.0 387.6L239.7 386.5L241.4 385.8L243.1 385.3L244.8 385.2L246.5 385.1L248.2 385.1L249.9 384.9L251.6 384.3L253.3 383.1L255.0 381.1L256.7 378.3L258.4 374.4L260.1 369.5L261.8 363.7L263.5 357.1L265.2 349.9L266.9 342.4L268.6 334.9L270.3 327.7L272.0 321.2L273.7 315.7L275.4 311.5L277.1 308.8L278.8 307.8L280.5 308.6L282.2 311.0M182.5 331.4L185.3 328.7L188.2 327.6L191.1 328.3L193.9 330.7L196.8 334.5L199.7 339.7L202.5 345.9L205.4 352.8L208.3 360.0L211.1 367.2L214.0 374.1L216.9 380.4L219.8 385.9L222.6 390.4L225.5 394.0L228.4 396.5L231.2 398.2L234.1 399.1L237.0 399.4L239.8 399.3L242.7 399.0L245.6 398.7L248.5 398.5L251.3 398.6L254.2 399.1L257.1 399.9L259.9 400.9L262.8 402.1L265.7 403.3L268.5 404.3L271.4 404.9L274.3 404.9L277.2 404.2L280.0 402.5L282.9 399.8L285.8 396.2L288.6 391.6L291.5 386.2L294.4 380.2L297.2 373.9L300.1 367.6L303.0 361.6L305.9 356.3L308.7 352.0L311.6 349.1L314.5 347.6L317.3 347.8L320.2 349.8L323.1 353.4M201.7 347.3L203.4 344.0L205.1 342.5L206.8 342.8L208.5 344.7L210.2 348.2L211.9 352.9L213.6 358.5L215.3 364.7L217.0 371.0L218.7 377.1L220.4 382.7L222.1 387.5L223.8 391.3L225.5 394.0L227.2 395.5L228.9 396.0L230.6 395.4L232.3 394.1L234.0 392.2L235.7 390.0L237.4 387.7L239.1 385.6L240.8 383.8L242.5 382.5L244.2 381.7L245.9 381.5L247.6 381.8L249.3 382.4L251.0 383.2L252.7 383.8L254.4 384.2L256.1 384.0L257.9 383.0L259.6 381.0L261.3 377.9L263.0 373.7L264.7 368.4L266.4 362.1L268.1 355.0L269.8 347.3L271.5 339.5L273.2 331.8L274.9 324.7L276.6 318.5L278.3 313.5L280.0 310.0L281.7 308.2L283.4 308.2L285.1 309.9M184.2 329.1L187.0 327.1L189.9 326.8L192.8 328.2L195.6 331.4L198.5 336.1L201.4 342.0L204.2 348.8L207.1 356.2L210.0 363.7L212.9 371.0L215.7 377.8L218.6 383.8L221.5 388.8L224.3 392.8L227.2 395.5L230.1 397.2L232.9 397.9L235.8 397.8L238.7 397.1L241.5 396.1L244.4 395.0L247.3 394.1L250.2 393.5L253.0 393.4L255.9 393.9L258.8 394.9L261.6 396.3L264.5 398.2L267.4 400.1L270.2 402.0L273.1 403.6L276.0 404.6L278.9 404.8L281.7 404.0L284.6 402.2L287.5 399.2L290.3 395.1L293.2 389.9L296.1 384.0L298.9 377.6L301.8 371.0L304.7 364.5L307.6 358.6L310.4 353.6L313.3 349.8L316.2 347.5L319.0 347.0L321.9 348.2L324.8 351.1M204.5 346.6L206.2 344.0L207.9 343.2L209.6 344.2L211.3 346.9L213.0 351.1L214.7 356.4L216.4 362.5L218.1 369.0L219.9 375.5L221.6 381.6L223.3 387.0L225.0 391.4L226.7 394.6L228.4 396.5L230.1 397.2L231.8 396.6L233.5 395.0L235.2 392.6L236.9 389.7L238.6 386.6L240.3 383.5L242.0 380.7L243.7 378.4L245.4 376.9L247.1 376.1L248.8 376.1L250.5 376.9L252.2 378.1L253.9 379.7L255.6 381.3L257.3 382.7L259.0 383.6L260.7 383.6L262.4 382.7L264.1 380.5L265.8 377.1L267.5 372.3L269.2 366.4L270.9 359.5L272.6 351.9L274.3 343.9L276.0 335.8L277.8 328.2L279.5 321.3L281.2 315.6L282.9 311.4L284.6 308.8L286.3 308.1L288.0 309.2M185.9 327.2L188.7 325.8L191.6 326.2L194.5 328.4L197.3 332.4L200.2 337.8L203.1 344.3L205.9 351.6L208.8 359.3L211.7 367.1L214.6 374.4L217.4 381.0L220.3 386.6L223.2 391.0L226.0 394.1L228.9 396.0L231.8 396.6L234.6 396.2L237.5 395.1L240.4 393.3L243.3 391.4L246.1 389.5L249.0 387.9L251.9 386.9L254.7 386.6L257.6 387.0L260.5 388.3L263.3 390.2L266.2 392.7L269.1 395.4L271.9 398.3L274.8 400.9L277.7 403.0L280.6 404.2L283.4 404.5L286.3 403.5L289.2 401.3L292.0 397.8L294.9 393.1L297.8 387.4L300.6 381.0L303.5 374.2L306.4 367.3L309.3 360.9L312.1 355.3L315.0 350.8L317.9 347.7L320.7 346.4L323.6 346.9L326.5 349.2M207.4 346.3L209.1 344.2L210.8 344.0L212.5 345.8L214.2 349.1L215.9 353.9L217.6 359.8L219.3 366.3L221.0 373.1L222.7 379.7L224.4 385.7L226.1 390.7L227.8 394.6L229.5 397.1L231.2 398.2L232.9 397.9L234.6 396.2L236.3 393.5L238.0 390.0L239.8 386.0L241.5 381.9L243.2 378.0L244.9 374.5L246.6 371.8L248.3 370.1L250.0 369.3L251.7 369.6L253.4 370.7L255.1 372.6L256.8 375.1L258.5 377.7L260.2 380.1L261.9 382.1L263.6 383.3L265.3 383.4L267.0 382.2L268.7 379.6L270.4 375.5L272.1 370.1L273.8 363.5L275.5 356.0L277.2 347.9L278.9 339.6L280.6 331.6L282.3 324.2L284.0 317.9L285.7 312.9L287.4 309.7L289.1 308.3L290.8 308.9M187.6 325.7L190.4 324.8L193.3 325.9L196.2 328.8L199.0 333.4L201.9 339.4L204.8 346.5L207.6 354.2L210.5 362.2L213.4 370.0L216.3 377.2L219.1 383.5L222.0 388.5L224.9 392.3L227.7 394.6L230.6 395.4L233.5 395.0L236.3 393.5L239.2 391.2L242.1 388.5L245.0 385.6L247.8 382.8L250.7 380.6L253.6 379.1L256.4 378.5L259.3 379.0L262.2 380.5L265.0 382.8L267.9 386.0L270.8 389.6L273.7 393.4L276.5 397.1L279.4 400.3L282.3 402.7L285.1 404.0L288.0 404.0L290.9 402.6L293.7 399.8L296.6 395.6L299.5 390.2L302.3 383.9L305.2 377.0L308.1 369.9L311.0 363.1L313.8 356.9L316.7 351.8L319.6 348.1L322.4 346.1L325.3 345.9L328.2 347.6M210.3 346.1L212.0 344.6L213.7 345.1L215.4 347.4L217.1 351.4L218.8 356.7L220.5 363.0L222.2 369.8L223.9 376.7L225.6 383.3L227.3 389.1L229.0 393.8L230.7 397.1L232.4 398.9L234.1 399.1L235.8 397.8L237.5 395.1L239.2 391.2L240.9 386.6L242.6 381.6L244.3 376.5L246.0 371.8L247.7 367.7L249.4 364.5L251.1 362.5L252.8 361.8L254.5 362.2L256.2 363.9L257.9 366.4L259.6 369.6L261.4 373.2L263.1 376.7L264.8 379.8L266.5 382.1L268.2 383.3L269.9 383.1L271.6 381.3L273.3 378.0L275.0 373.2L276.7 367.0L278.4 359.7L280.1 351.6L281.8 343.1L283.5 334.7L285.2 326.9L286.9 320.1L288.6 314.6L290.3 310.7L292.0 308.8L293.7 308.7M189.3 324.3L192.1 324.0L195.0 325.7L197.9 329.2L200.7 334.4L203.6 340.9L206.5 348.4L209.4 356.5L212.2 364.6L215.1 372.4L218.0 379.4L220.8 385.3L223.7 389.8L226.6 392.8L229.4 394.2L232.3 394.1L235.2 392.6L238.0 390.0L240.9 386.6L243.8 382.8L246.7 378.9L249.5 375.4L252.4 372.5L255.3 370.6L258.1 369.8L261.0 370.2L263.9 371.9L266.7 374.8L269.6 378.5L272.5 383.0L275.4 387.7L278.2 392.5L281.1 396.8L284.0 400.3L286.8 402.6L289.7 403.7L292.6 403.1L295.4 401.1L298.3 397.4L301.2 392.4L304.1 386.3L306.9 379.4L309.8 372.2L312.7 365.0L315.5 358.4L318.4 352.8L321.3 348.5L324.1 345.9L327.0 345.1L329.9 346.3M213.1 346.2L214.8 345.2L216.5 346.2L218.2 349.0L219.9 353.5L221.7 359.2L223.4 365.9L225.1 372.9L226.8 379.9L228.5 386.4L230.2 392.0L231.9 396.3L233.6 399.0L235.3 400.0L237.0 399.4L238.7 397.1L240.4 393.3L242.1 388.5L243.8 382.8L245.5 376.8L247.2 370.8L248.9 365.3L250.6 360.5L252.3 357.0L254.0 354.8L255.7 354.0L257.4 354.7L259.1 356.7L260.8 359.9L262.5 363.9L264.2 368.4L265.9 372.9L267.6 377.0L269.3 380.4L271.0 382.6L272.7 383.4L274.4 382.5L276.1 379.9L277.8 375.7L279.5 369.9L281.3 362.8L283.0 354.8L284.7 346.2L286.4 337.6L288.1 329.5L289.8 322.2L291.5 316.2L293.2 311.8L294.9 309.3L296.6 308.8M191.0 323.2L193.8 323.4L196.7 325.6L199.6 329.6L202.4 335.3L205.3 342.3L208.2 350.1L211.1 358.4L213.9 366.6L216.8 374.3L219.7 381.1L222.5 386.6L225.4 390.5L228.3 392.8L231.1 393.3L234.0 392.2L236.9 389.7L239.8 386.0L242.6 381.6L245.5 376.8L248.4 372.0L251.2 367.7L254.1 364.2L257.0 361.8L259.8 360.8L262.7 361.3L265.6 363.2L268.4 366.4L271.3 370.8L274.2 376.0L277.1 381.7L279.9 387.4L282.8 392.8L285.7 397.3L288.5 400.8L291.4 402.7L294.3 403.1L297.1 401.7L300.0 398.7L302.9 394.1L305.8 388.2L308.6 381.4L311.5 374.1L314.4 366.7L317.2 359.8L320.1 353.7L323.0 348.9L325.8 345.8L328.7 344.5L331.6 345.2M216.0 346.5L217.7 345.9L219.4 347.3L221.1 350.5L222.8 355.4L224.5 361.5L226.2 368.4L227.9 375.7L229.6 382.7L231.3 389.1L233.0 394.4L234.7 398.2L236.4 400.4L238.1 400.7L239.8 399.3L241.5 396.1L243.3 391.4L245.0 385.6L246.7 378.9L248.4 372.0L250.1 365.2L251.8 359.0L253.5 353.7L255.2 349.8L256.9 347.3L258.6 346.6L260.3 347.5L262.0 349.9L263.7 353.6L265.4 358.3L267.1 363.6L268.8 369.0L270.5 374.1L272.2 378.4L273.9 381.6L275.6 383.2L277.3 383.2L279.0 381.3L280.7 377.6L282.4 372.2L284.1 365.4L285.8 357.5L287.5 349.0L289.2 340.2L290.9 331.8L292.6 324.1L294.3 317.7L296.0 312.9L297.7 310.0L299.4 309.1M192.7 322.2L195.5 322.8L198.4 325.5L201.3 329.9L204.1 336.0L207.0 343.4L209.9 351.5L212.8 359.9L215.6 368.1L218.5 375.7L221.4 382.2L224.2 387.3L227.1 390.7L230.0 392.3L232.8 392.0L235.7 390.0L238.6 386.6L241.5 381.9L244.3 376.5L247.2 370.8L250.1 365.2L252.9 360.2L255.8 356.1L258.7 353.4L261.5 352.2L264.4 352.6L267.3 354.7L270.2 358.4L273.0 363.3L275.9 369.2L278.8 375.7L281.6 382.3L284.5 388.7L287.4 394.2L290.2 398.6L293.1 401.4L296.0 402.6L298.8 401.9L301.7 399.4L304.6 395.3L307.5 389.7L310.3 383.0L313.2 375.6L316.1 368.1L318.9 360.9L321.8 354.4L324.7 349.2L327.5 345.7L330.4 343.9L333.3 344.2M218.9 346.8L220.6 346.5L222.3 348.3L224.0 351.9L225.7 357.1L227.4 363.5L229.1 370.6L230.8 377.9L232.5 385.0L234.2 391.2L235.9 396.3L237.6 399.7L239.3 401.4L241.0 401.1L242.7 399.0L244.4 395.0L246.1 389.5L247.8 382.8L249.5 375.4L251.2 367.7L252.9 360.2L254.6 353.3L256.3 347.6L258.0 343.3L259.7 340.8L261.4 340.0L263.2 341.1L264.9 343.8L266.6 348.0L268.3 353.3L270.0 359.3L271.7 365.5L273.4 371.4L275.1 376.5L276.8 380.5L278.5 382.9L280.2 383.6L281.9 382.3L283.6 379.1L285.3 374.1L287.0 367.6L288.7 359.8L290.4 351.2L292.1 342.4L293.8 333.8L295.5 325.9L297.2 319.1L298.9 314.0L300.6 310.7L302.3 309.4M194.4 321.3L197.2 322.3L200.1 325.3L203.0 330.1L205.9 336.5L208.7 344.1L211.6 352.4L214.5 361.0L217.3 369.2L220.2 376.7L223.1 382.9L225.9 387.6L228.8 390.5L231.7 391.5L234.5 390.5L237.4 387.7L240.3 383.5L243.2 378.0L246.0 371.8L248.9 365.3L251.8 359.0L254.6 353.3L257.5 348.8L260.4 345.8L263.2 344.4L266.1 344.8L269.0 347.1L271.9 351.1L274.7 356.5L277.6 363.0L280.5 370.2L283.3 377.6L286.2 384.7L289.1 391.1L291.9 396.3L294.8 399.9L297.7 401.8L300.6 401.7L303.4 399.7L306.3 395.9L309.2 390.6L312.0 384.0L314.9 376.7L317.8 369.0L320.6 361.6L323.5 354.9L326.4 349.4L329.2 345.5L332.1 343.4L335.0 343.3M221.7 347.2L223.4 347.2L225.2 349.2L226.9 353.1L228.6 358.6L230.3 365.1L232.0 372.4L233.7 379.8L235.4 386.8L237.1 392.9L238.8 397.7L240.5 400.9L242.2 402.2L243.9 401.4L245.6 398.7L247.3 394.1L249.0 387.9L250.7 380.6L252.4 372.5L254.1 364.2L255.8 356.1L257.5 348.8L259.2 342.7L260.9 338.2L262.6 335.5L264.3 334.7L266.0 335.9L267.7 338.9L269.4 343.5L271.1 349.3L272.8 355.8L274.5 362.6L276.2 369.2L277.9 375.0L279.6 379.6L281.3 382.6L283.0 383.9L284.8 383.1L286.5 380.3L288.2 375.6L289.9 369.2L291.6 361.6L293.3 353.1L295.0 344.1L296.7 335.4L298.4 327.3L300.1 320.3L301.8 314.9L303.5 311.3L305.2 309.8M196.1 320.5L198.9 321.8L201.8 325.0L204.7 330.1L207.6 336.8L210.4 344.5L213.3 353.0L216.2 361.6L219.0 369.8L221.9 377.1L224.8 383.2L227.6 387.6L230.5 390.0L233.4 390.5L236.3 389.0L239.1 385.6L242.0 380.7L244.9 374.5L247.7 367.7L250.6 360.5L253.5 353.7L256.3 347.6L259.2 342.7L262.1 339.4L264.9 337.9L267.8 338.4L270.7 340.8L273.6 345.0L276.4 350.8L279.3 357.7L282.2 365.5L285.0 373.5L287.9 381.3L290.8 388.3L293.6 394.1L296.5 398.4L299.4 400.8L302.3 401.3L305.1 399.7L308.0 396.2L310.9 391.1L313.7 384.6L316.6 377.3L319.5 369.6L322.3 362.0L325.2 355.2L328.1 349.4L331.0 345.2L333.8 342.8L336.7 342.5M224.6 347.6L226.3 347.8L228.0 350.0L229.7 354.1L231.4 359.7L233.1 366.4L234.8 373.7L236.5 381.1L238.2 388.1L239.9 394.2L241.6 398.8L243.3 401.8L245.0 402.7L246.8 401.7L248.5 398.5L250.2 393.5L251.9 386.9L253.6 379.1L255.3 370.6L257.0 361.8L258.7 353.4L260.4 345.8L262.1 339.4L263.8 334.7L265.5 331.9L267.2 331.2L268.9 332.4L270.6 335.6L272.3 340.4L274.0 346.5L275.7 353.4L277.4 360.7L279.1 367.7L280.8 373.9L282.5 379.0L284.2 382.5L285.9 384.1L287.6 383.7L289.3 381.2L291.0 376.7L292.7 370.5L294.4 362.9L296.1 354.4L297.8 345.5L299.5 336.6L301.2 328.4L302.9 321.3L304.6 315.7L306.4 312.0L308.1 310.2M197.8 319.8L200.6 321.2L203.5 324.6L206.4 329.9L209.3 336.7L212.1 344.6L215.0 353.1L217.9 361.7L220.7 369.9L223.6 377.2L226.5 383.1L229.3 387.2L232.2 389.4L235.1 389.5L238.0 387.6L240.8 383.8L243.7 378.4L246.6 371.8L249.4 364.5L252.3 357.0L255.2 349.8L258.0 343.3L260.9 338.2L263.8 334.7L266.7 333.1L269.5 333.6L272.4 336.1L275.3 340.5L278.1 346.5L281.0 353.8L283.9 361.9L286.7 370.4L289.6 378.6L292.5 386.1L295.3 392.3L298.2 397.0L301.1 399.9L304.0 400.6L306.8 399.3L309.7 396.1L312.6 391.1L315.4 384.7L318.3 377.4L321.2 369.7L324.0 362.1L326.9 355.1L329.8 349.2L332.7 344.8L335.5 342.2L338.4 341.7M227.5 348.1L229.2 348.3L230.9 350.7L232.6 354.8L234.3 360.5L236.0 367.2L237.7 374.6L239.4 382.0L241.1 389.0L242.8 395.0L244.5 399.6L246.2 402.4L247.9 403.2L249.6 402.0L251.3 398.6L253.0 393.4L254.7 386.6L256.4 378.5L258.1 369.8L259.8 360.8L261.5 352.2L263.2 344.4L264.9 337.9L266.7 333.1L268.4 330.3L270.1 329.5L271.8 330.8L273.5 334.1L275.2 339.1L276.9 345.3L278.6 352.4L280.3 359.9L282.0 367.1L283.7 373.6L285.4 378.9L287.1 382.6L288.8 384.4L290.5 384.2L292.2 381.8L293.9 377.5L295.6 371.3L297.3 363.8L299.0 355.3L300.7 346.4L302.4 337.5L304.1 329.2L305.8 322.0L307.5 316.3L309.2 312.5L310.9 310.7M199.5 319.0L202.3 320.5L205.2 324.0L208.1 329.4L211.0 336.2L213.8 344.2L216.7 352.8L219.6 361.4L222.4 369.6L225.3 376.8L228.2 382.6L231.0 386.7L233.9 388.7L236.8 388.6L239.7 386.5L242.5 382.5L245.4 376.9L248.3 370.1L251.1 362.5L254.0 354.8L256.9 347.3L259.7 340.8L262.6 335.5L265.5 331.9L268.4 330.3L271.2 330.7L274.1 333.3L277.0 337.7L279.8 343.9L282.7 351.4L285.6 359.7L288.4 368.3L291.3 376.8L294.2 384.5L297.1 391.0L299.9 395.9L302.8 399.0L305.7 399.9L308.5 398.8L311.4 395.6L314.3 390.7L317.1 384.4L320.0 377.1L322.9 369.4L325.7 361.7L328.6 354.6L331.5 348.7L334.4 344.2L337.2 341.6L340.1 341.0M230.4 348.5L232.1 348.8L233.8 351.1L235.5 355.3L237.2 360.9L238.9 367.7L240.6 375.1L242.3 382.5L244.0 389.5L245.7 395.4L247.4 400.0L249.1 402.9L250.8 403.7L252.5 402.4L254.2 399.1L255.9 393.9L257.6 387.0L259.3 379.0L261.0 370.2L262.7 361.3L264.4 352.6L266.1 344.8L267.8 338.4L269.5 333.6L271.2 330.7L272.9 330.0L274.6 331.3L276.3 334.6L278.0 339.5L279.7 345.8L281.4 352.9L283.1 360.3L284.8 367.6L286.5 374.1L288.3 379.4L290.0 383.1L291.7 384.9L293.4 384.6L295.1 382.3L296.8 377.9L298.5 371.8L300.2 364.3L301.9 355.8L303.6 346.8L305.3 337.9L307.0 329.6L308.7 322.5L310.4 316.8L312.1 312.9L313.8 311.1M201.2 318.2L204.1 319.7L206.9 323.2L209.8 328.6L212.7 335.5L215.5 343.5L218.4 352.0L221.3 360.7L224.1 368.9L227.0 376.1L229.9 381.9L232.7 385.9L235.6 387.9L238.5 387.9L241.4 385.8L244.2 381.7L247.1 376.1L250.0 369.3L252.8 361.8L255.7 354.0L258.6 346.6L261.4 340.0L264.3 334.7L267.2 331.2L270.1 329.5L272.9 330.0L275.8 332.5L278.7 337.0L281.5 343.1L284.4 350.6L287.3 358.9L290.1 367.6L293.0 376.0L295.9 383.8L298.8 390.3L301.6 395.2L304.5 398.2L307.4 399.2L310.2 398.0L313.1 394.9L316.0 390.0L318.8 383.7L321.7 376.4L324.6 368.6L327.5 361.0L330.3 353.9L333.2 347.9L336.1 343.4L338.9 340.8L341.8 340.2M233.2 349.0L234.9 349.2L236.6 351.4L238.3 355.4L240.0 361.0L241.7 367.7L243.4 375.1L245.1 382.5L246.8 389.5L248.6 395.5L250.3 400.2L252.0 403.1L253.7 404.1L255.4 403.0L257.1 399.9L258.8 394.9L260.5 388.3L262.2 380.5L263.9 371.9L265.6 363.2L267.3 354.7L269.0 347.1L270.7 340.8L272.4 336.1L274.1 333.3L275.8 332.5L277.5 333.8L279.2 337.0L280.9 341.8L282.6 347.9L284.3 354.8L286.0 362.0L287.7 369.0L289.4 375.3L291.1 380.4L292.8 383.8L294.5 385.4L296.2 385.0L297.9 382.5L299.6 378.0L301.3 371.8L303.0 364.3L304.7 355.8L306.4 346.8L308.2 338.0L309.9 329.8L311.6 322.6L313.3 317.1L315.0 313.3L316.7 311.6M202.9 317.5L205.8 318.9L208.6 322.3L211.5 327.6L214.4 334.4L217.2 342.3L220.1 350.8L223.0 359.4L225.8 367.6L228.7 374.9L231.6 380.8L234.5 384.9L237.3 387.1L240.2 387.2L243.1 385.3L245.9 381.5L248.8 376.1L251.7 369.6L254.5 362.2L257.4 354.7L260.3 347.5L263.2 341.1L266.0 335.9L268.9 332.4L271.8 330.8L274.6 331.3L277.5 333.8L280.4 338.2L283.2 344.2L286.1 351.5L289.0 359.6L291.8 368.1L294.7 376.3L297.6 383.8L300.5 390.1L303.3 394.8L306.2 397.6L309.1 398.3L311.9 397.1L314.8 393.8L317.7 388.8L320.5 382.5L323.4 375.2L326.3 367.4L329.2 359.8L332.0 352.8L334.9 346.9L337.8 342.5L340.6 340.0L343.5 339.5M236.1 349.4L237.8 349.4L239.5 351.5L241.2 355.4L242.9 360.8L244.6 367.4L246.3 374.6L248.0 382.0L249.7 389.0L251.4 395.1L253.1 400.0L254.8 403.1L256.5 404.4L258.2 403.7L259.9 400.9L261.6 396.3L263.3 390.2L265.0 382.8L266.7 374.8L268.4 366.4L270.2 358.4L271.9 351.1L273.6 345.0L275.3 340.5L277.0 337.7L278.7 337.0L280.4 338.2L282.1 341.2L283.8 345.7L285.5 351.5L287.2 358.0L288.9 364.8L290.6 371.4L292.3 377.2L294.0 381.8L295.7 384.9L297.4 386.1L299.1 385.3L300.8 382.5L302.5 377.8L304.2 371.5L305.9 363.8L307.6 355.3L309.3 346.4L311.0 337.6L312.7 329.5L314.4 322.6L316.1 317.2L317.8 313.6L319.5 312.0M204.6 316.7L207.5 317.9L210.3 321.2L213.2 326.3L216.1 332.9L218.9 340.7L221.8 349.2L224.7 357.8L227.5 366.0L230.4 373.3L233.3 379.4L236.2 383.7L239.0 386.2L241.9 386.7L244.8 385.2L247.6 381.8L250.5 376.9L253.4 370.7L256.2 363.9L259.1 356.7L262.0 349.9L264.9 343.8L267.7 338.9L270.6 335.6L273.5 334.1L276.3 334.6L279.2 337.0L282.1 341.2L284.9 346.9L287.8 353.9L290.7 361.7L293.6 369.7L296.4 377.5L299.3 384.5L302.2 390.3L305.0 394.6L307.9 397.0L310.8 397.4L313.6 395.9L316.5 392.4L319.4 387.2L322.2 380.8L325.1 373.5L328.0 365.8L330.9 358.2L333.7 351.3L336.6 345.6L339.5 341.4L342.3 339.0L345.2 338.7M239.0 349.9L240.7 349.7L242.4 351.5L244.1 355.1L245.8 360.3L247.5 366.7L249.2 373.8L250.9 381.1L252.6 388.1L254.3 394.4L256.0 399.4L257.7 402.9L259.4 404.5L261.1 404.3L262.8 402.1L264.5 398.2L266.2 392.7L267.9 386.0L269.6 378.5L271.3 370.8L273.0 363.3L274.7 356.5L276.4 350.8L278.1 346.5L279.8 343.9L281.5 343.1L283.2 344.2L284.9 346.9L286.6 351.1L288.3 356.4L290.0 362.4L291.8 368.6L293.5 374.5L295.2 379.7L296.9 383.7L298.6 386.1L300.3 386.7L302.0 385.5L303.7 382.3L305.4 377.3L307.1 370.7L308.8 362.9L310.5 354.4L312.2 345.5L313.9 336.9L315.6 329.0L317.3 322.3L319.0 317.1L320.7 313.8L322.4 312.5M206.3 316.0L209.2 317.0L212.0 319.9L214.9 324.8L217.8 331.2L220.6 338.8L223.5 347.1L226.4 355.6L229.2 363.9L232.1 371.3L235.0 377.6L237.9 382.3L240.7 385.2L243.6 386.1L246.5 385.1L249.3 382.4L252.2 378.1L255.1 372.6L257.9 366.4L260.8 359.9L263.7 353.6L266.6 348.0L269.4 343.5L272.3 340.4L275.2 339.1L278.0 339.5L280.9 341.8L283.8 345.7L286.6 351.1L289.5 357.7L292.4 364.8L295.3 372.3L298.1 379.4L301.0 385.7L303.9 390.9L306.7 394.6L309.6 396.4L312.5 396.4L315.3 394.4L318.2 390.6L321.1 385.2L324.0 378.7L326.8 371.3L329.7 363.7L332.6 356.3L335.4 349.6L338.3 344.1L341.2 340.1L344.0 338.1L346.9 338.0M241.8 350.5L243.5 349.9L245.2 351.3L246.9 354.6L248.6 359.5L250.3 365.6L252.1 372.5L253.8 379.7L255.5 386.7L257.2 393.1L258.9 398.4L260.6 402.3L262.3 404.4L264.0 404.8L265.7 403.3L267.4 400.1L269.1 395.4L270.8 389.6L272.5 383.0L274.2 376.0L275.9 369.2L277.6 363.0L279.3 357.7L281.0 353.8L282.7 351.4L284.4 350.6L286.1 351.5L287.8 353.9L289.5 357.7L291.2 362.4L292.9 367.6L294.6 373.1L296.3 378.2L298.0 382.5L299.7 385.6L301.4 387.3L303.1 387.2L304.8 385.4L306.5 381.7L308.2 376.3L309.9 369.5L311.7 361.6L313.4 353.0L315.1 344.2L316.8 335.8L318.5 328.2L320.2 321.8L321.9 317.0L323.6 314.0L325.3 313.1M208.0 315.3L210.9 316.0L213.7 318.6L216.6 323.1L219.5 329.2L222.3 336.5L225.2 344.6L228.1 353.0L231.0 361.3L233.8 368.9L236.7 375.4L239.6 380.4L242.4 383.8L245.3 385.4L248.2 385.1L251.0 383.2L253.9 379.7L256.8 375.1L259.6 369.6L262.5 363.9L265.4 358.3L268.3 353.3L271.1 349.3L274.0 346.5L276.9 345.3L279.7 345.8L282.6 347.9L285.5 351.5L288.3 356.4L291.2 362.4L294.1 368.9L297.0 375.5L299.8 381.8L302.7 387.3L305.6 391.7L308.4 394.6L311.3 395.7L314.2 395.0L317.0 392.6L319.9 388.4L322.8 382.8L325.7 376.1L328.5 368.7L331.4 361.2L334.3 354.0L337.1 347.6L340.0 342.4L342.9 338.8L345.7 337.1L348.6 337.3M244.7 351.2L246.4 350.1L248.1 351.1L249.8 353.9L251.5 358.4L253.2 364.2L254.9 370.8L256.6 377.9L258.3 384.9L260.0 391.4L261.7 396.9L263.4 401.2L265.1 403.9L266.8 405.0L268.5 404.3L270.2 402.0L271.9 398.3L273.7 393.4L275.4 387.7L277.1 381.7L278.8 375.7L280.5 370.2L282.2 365.5L283.9 361.9L285.6 359.7L287.3 358.9L289.0 359.6L290.7 361.7L292.4 364.8L294.1 368.9L295.8 373.3L297.5 377.8L299.2 382.0L300.9 385.3L302.6 387.5L304.3 388.3L306.0 387.4L307.7 384.9L309.4 380.6L311.1 374.8L312.8 367.7L314.5 359.7L316.2 351.2L317.9 342.6L319.6 334.4L321.3 327.1L323.0 321.1L324.7 316.8L326.4 314.3L328.1 313.8M209.7 314.8L212.6 315.0L215.4 317.2L218.3 321.2L221.2 326.9L224.0 333.9L226.9 341.7L229.8 350.0L232.7 358.2L235.5 365.9L238.4 372.7L241.3 378.2L244.1 382.1L247.0 384.4L249.9 384.9L252.7 383.8L255.6 381.3L258.5 377.7L261.4 373.2L264.2 368.4L267.1 363.6L270.0 359.3L272.8 355.8L275.7 353.4L278.6 352.4L281.4 352.9L284.3 354.8L287.2 358.0L290.0 362.4L292.9 367.6L295.8 373.3L298.7 379.0L301.5 384.4L304.4 389.0L307.3 392.4L310.1 394.3L313.0 394.7L315.9 393.3L318.7 390.3L321.6 385.7L324.5 379.8L327.4 373.0L330.2 365.7L333.1 358.3L336.0 351.4L338.8 345.3L341.7 340.5L344.6 337.4L347.4 336.1L350.3 336.8M247.6 352.0L249.3 350.5L251.0 350.9L252.7 353.2L254.4 357.2L256.1 362.5L257.8 368.8L259.5 375.7L261.2 382.6L262.9 389.1L264.6 394.9L266.3 399.6L268.0 402.9L269.7 404.7L271.4 404.9L273.1 403.6L274.8 400.9L276.5 397.1L278.2 392.5L279.9 387.4L281.6 382.3L283.3 377.6L285.0 373.5L286.7 370.4L288.4 368.3L290.1 367.6L291.8 368.1L293.6 369.7L295.3 372.3L297.0 375.5L298.7 379.0L300.4 382.6L302.1 385.6L303.8 387.9L305.5 389.1L307.2 388.9L308.9 387.2L310.6 383.9L312.3 379.0L314.0 372.8L315.7 365.5L317.4 357.4L319.1 348.9L320.8 340.6L322.5 332.8L324.2 325.9L325.9 320.4L327.6 316.6L329.3 314.6L331.0 314.6M211.4 314.4L214.3 314.1L217.1 315.8L220.0 319.3L222.9 324.5L225.7 331.0L228.6 338.5L231.5 346.6L234.4 354.7L237.2 362.5L240.1 369.5L243.0 375.4L245.8 379.9L248.7 382.9L251.6 384.3L254.4 384.2L257.3 382.7L260.2 380.1L263.1 376.7L265.9 372.9L268.8 369.0L271.7 365.5L274.5 362.6L277.4 360.7L280.3 359.9L283.1 360.3L286.0 362.0L288.9 364.8L291.8 368.6L294.6 373.1L297.5 377.8L300.4 382.6L303.2 386.8L306.1 390.3L309.0 392.7L311.8 393.7L314.7 393.2L317.6 391.1L320.5 387.5L323.3 382.5L326.2 376.4L329.1 369.5L331.9 362.3L334.8 355.1L337.7 348.5L340.5 342.9L343.4 338.6L346.3 336.0L349.1 335.2L352.0 336.4M250.4 353.0L252.1 350.9L253.8 350.8L255.6 352.5L257.3 355.9L259.0 360.7L260.7 366.5L262.4 373.1L264.1 379.8L265.8 386.4L267.5 392.4L269.2 397.5L270.9 401.3L272.6 403.8L274.3 404.9L276.0 404.6L277.7 403.0L279.4 400.3L281.1 396.8L282.8 392.8L284.5 388.7L286.2 384.7L287.9 381.3L289.6 378.6L291.3 376.8L293.0 376.0L294.7 376.3L296.4 377.5L298.1 379.4L299.8 381.8L301.5 384.4L303.2 386.8L304.9 388.8L306.6 390.0L308.3 390.1L310.0 388.9L311.7 386.3L313.4 382.3L315.2 376.9L316.9 370.3L318.6 362.7L320.3 354.6L322.0 346.4L323.7 338.3L325.4 330.9L327.1 324.6L328.8 319.7L330.5 316.4L332.2 315.1L333.9 315.6M213.1 314.2L216.0 313.4L218.8 314.4L221.7 317.3L224.6 321.9L227.5 328.0L230.3 335.0L233.2 342.8L236.1 350.7L238.9 358.5L241.8 365.7L244.7 372.0L247.5 377.1L250.4 380.8L253.3 383.1L256.1 384.0L259.0 383.6L261.9 382.1L264.8 379.8L267.6 377.0L270.5 374.1L273.4 371.4L276.2 369.2L279.1 367.7L282.0 367.1L284.8 367.6L287.7 369.0L290.6 371.4L293.5 374.5L296.3 378.2L299.2 382.0L302.1 385.6L304.9 388.8L307.8 391.2L310.7 392.5L313.5 392.5L316.4 391.1L319.3 388.3L322.2 384.1L325.0 378.7L327.9 372.4L330.8 365.5L333.6 358.5L336.5 351.6L339.4 345.5L342.2 340.3L345.1 336.6L348.0 334.6L350.9 334.5L353.7 336.2M253.3 354.3L255.0 351.6L256.7 350.8L258.4 351.8L260.1 354.5L261.8 358.7L263.5 364.0L265.2 370.2L266.9 376.7L268.6 383.2L270.3 389.3L272.0 394.7L273.7 399.0L275.4 402.2L277.2 404.2L278.9 404.8L280.6 404.2L282.3 402.7L284.0 400.3L285.7 397.3L287.4 394.2L289.1 391.1L290.8 388.3L292.5 386.1L294.2 384.5L295.9 383.8L297.6 383.8L299.3 384.5L301.0 385.7L302.7 387.3L304.4 389.0L306.1 390.3L307.8 391.2L309.5 391.3L311.2 390.3L312.9 388.1L314.6 384.7L316.3 380.0L318.0 374.1L319.7 367.1L321.4 359.5L323.1 351.5L324.8 343.5L326.5 335.8L328.2 329.0L329.9 323.3L331.6 319.0L333.3 316.5L335.1 315.7L336.8 316.9M214.8 314.3L217.7 312.8L220.5 313.2L223.4 315.5L226.3 319.4L229.2 324.8L232.0 331.3L234.9 338.7L237.8 346.4L240.6 354.1L243.5 361.4L246.4 368.0L249.2 373.6L252.1 378.0L255.0 381.1L257.9 383.0L260.7 383.6L263.6 383.3L266.5 382.1L269.3 380.4L272.2 378.4L275.1 376.5L277.9 375.0L280.8 373.9L283.7 373.6L286.5 374.1L289.4 375.3L292.3 377.2L295.2 379.7L298.0 382.5L300.9 385.3L303.8 387.9L306.6 390.0L309.5 391.3L312.4 391.5L315.2 390.6L318.1 388.3L321.0 384.8L323.9 380.1L326.7 374.4L329.6 368.0L332.5 361.2L335.3 354.4L338.2 347.9L341.1 342.3L343.9 337.8L346.8 334.8L349.7 333.4L352.6 333.9L355.4 336.3M256.2 355.8L257.9 352.6L259.6 351.0L261.3 351.3L263.0 353.3L264.7 356.7L266.4 361.4L268.1 367.0L269.8 373.2L271.5 379.5L273.2 385.6L274.9 391.2L276.6 396.0L278.3 399.8L280.0 402.5L281.7 404.0L283.4 404.5L285.1 404.0L286.8 402.6L288.5 400.8L290.2 398.6L291.9 396.3L293.6 394.1L295.3 392.3L297.1 391.0L298.8 390.3L300.5 390.1L302.2 390.3L303.9 390.9L305.6 391.7L307.3 392.4L309.0 392.7L310.7 392.5L312.4 391.5L314.1 389.5L315.8 386.5L317.5 382.2L319.2 376.9L320.9 370.6L322.6 363.5L324.3 355.9L326.0 348.0L327.7 340.3L329.4 333.2L331.1 327.0L332.8 322.0L334.5 318.5L336.2 316.7L337.9 316.7L339.6 318.5M216.5 314.6L219.4 312.6L222.2 312.3L225.1 313.7L228.0 316.9L230.9 321.6L233.7 327.5L236.6 334.3L239.5 341.7L242.3 349.2L245.2 356.5L248.1 363.3L250.9 369.3L253.8 374.4L256.7 378.3L259.6 381.0L262.4 382.7L265.3 383.4L268.2 383.3L271.0 382.6L273.9 381.6L276.8 380.5L279.6 379.6L282.5 379.0L285.4 378.9L288.3 379.4L291.1 380.4L294.0 381.8L296.9 383.7L299.7 385.6L302.6 387.5L305.5 389.1L308.3 390.1L311.2 390.3L314.1 389.5L316.9 387.7L319.8 384.7L322.7 380.6L325.6 375.4L328.4 369.5L331.3 363.1L334.2 356.5L337.0 350.0L339.9 344.1L342.8 339.1L345.6 335.3L348.5 333.0L351.4 332.5L354.3 333.7L357.1 336.6M259.1 357.8L260.8 353.9L262.5 351.6L264.2 351.1L265.9 352.2L267.6 354.9L269.3 358.8L271.0 363.8L272.7 369.5L274.4 375.5L276.1 381.5L277.8 387.1L279.5 392.2L281.2 396.5L282.9 399.8L284.6 402.2L286.3 403.5L288.0 404.0L289.7 403.7L291.4 402.7L293.1 401.4L294.8 399.9L296.5 398.4L298.2 397.0L299.9 395.9L301.6 395.2L303.3 394.8L305.0 394.6L306.7 394.6L308.4 394.6L310.1 394.3L311.8 393.7L313.5 392.5L315.2 390.6L316.9 387.7L318.7 383.8L320.4 378.9L322.1 373.1L323.8 366.5L325.5 359.3L327.2 351.8L328.9 344.3L330.6 337.1L332.3 330.6L334.0 325.1L335.7 320.9L337.4 318.3L339.1 317.3L340.8 318.0L342.5 320.4M218.2 315.4L221.1 312.7L224.0 311.6L226.8 312.3L229.7 314.6L232.6 318.5L235.4 323.7L238.3 329.9L241.2 336.8L244.0 344.0L246.9 351.2L249.8 358.1L252.6 364.3L255.5 369.8L258.4 374.4L261.3 377.9L264.1 380.5L267.0 382.2L269.9 383.1L272.7 383.4L275.6 383.2L278.5 382.9L281.3 382.6L284.2 382.5L287.1 382.6L290.0 383.1L292.8 383.8L295.7 384.9L298.6 386.1L301.4 387.3L304.3 388.3L307.2 388.9L310.0 388.9L312.9 388.1L315.8 386.5L318.7 383.8L321.5 380.2L324.4 375.6L327.3 370.2L330.1 364.2L333.0 357.9L335.9 351.6L338.7 345.6L341.6 340.3L344.5 336.0L347.3 333.0L350.2 331.6L353.1 331.8L356.0 333.7L358.8 337.4M261.9 360.2L263.6 355.6L265.3 352.6L267.0 351.2L268.7 351.4L270.4 353.2L272.1 356.4L273.8 360.6L275.5 365.7L277.2 371.2L279.0 376.9L280.7 382.5L282.4 387.7L284.1 392.3L285.8 396.2L287.5 399.2L289.2 401.3L290.9 402.6L292.6 403.1L294.3 403.1L296.0 402.6L297.7 401.8L299.4 400.8L301.1 399.9L302.8 399.0L304.5 398.2L306.2 397.6L307.9 397.0L309.6 396.4L311.3 395.7L313.0 394.7L314.7 393.2L316.4 391.1L318.1 388.3L319.8 384.7L321.5 380.2L323.2 374.8L324.9 368.7L326.6 361.9L328.3 354.8L330.0 347.6L331.7 340.5L333.4 333.9L335.1 328.2L336.8 323.5L338.6 320.2L340.3 318.4L342.0 318.2L343.7 319.7L345.4 322.8M219.9 316.5L222.8 313.2L225.7 311.4L228.5 311.2L231.4 312.7L234.3 315.7L237.1 320.0L240.0 325.5L242.9 331.7L245.7 338.5L248.6 345.4L251.5 352.2L254.4 358.7L257.2 364.5L260.1 369.5L263.0 373.7L265.8 377.1L268.7 379.6L271.6 381.3L274.4 382.5L277.3 383.2L280.2 383.6L283.0 383.9L285.9 384.1L288.8 384.4L291.7 384.9L294.5 385.4L297.4 386.1L300.3 386.7L303.1 387.2L306.0 387.4L308.9 387.2L311.7 386.3L314.6 384.7L317.5 382.2L320.4 378.9L323.2 374.8L326.1 369.9L329.0 364.4L331.8 358.4L334.7 352.4L337.6 346.6L340.4 341.2L343.3 336.6L346.2 333.2L349.1 331.1L351.9 330.5L354.8 331.5L357.7 334.3L360.5 338.5M264.8 363.0L266.5 357.8L268.2 354.0L269.9 351.8L271.6 351.1L273.3 352.0L275.0 354.2L276.7 357.6L278.4 361.9L280.1 366.9L281.8 372.2L283.5 377.5L285.2 382.7L286.9 387.4L288.6 391.6L290.3 395.1L292.0 397.8L293.7 399.8L295.4 401.1L297.1 401.7L298.8 401.9L300.6 401.7L302.3 401.3L304.0 400.6L305.7 399.9L307.4 399.2L309.1 398.3L310.8 397.4L312.5 396.4L314.2 395.0L315.9 393.3L317.6 391.1L319.3 388.3L321.0 384.8L322.7 380.6L324.4 375.6L326.1 369.9L327.8 363.6L329.5 356.9L331.2 350.0L332.9 343.2L334.6 336.7L336.3 330.9L338.0 326.0L339.7 322.2L341.4 319.8L343.1 319.0L344.8 319.7L346.5 321.9L348.2 325.6M221.6 318.2L224.5 314.1L227.4 311.6L230.2 310.6L233.1 311.1L236.0 313.2L238.8 316.6L241.7 321.2L244.6 326.8L247.4 332.9L250.3 339.4L253.2 346.0L256.1 352.4L258.9 358.3L261.8 363.7L264.7 368.4L267.5 372.3L270.4 375.5L273.3 378.0L276.1 379.9L279.0 381.3L281.9 382.3L284.8 383.1L287.6 383.7L290.5 384.2L293.4 384.6L296.2 385.0L299.1 385.3L302.0 385.5L304.8 385.4L307.7 384.9L310.6 383.9L313.4 382.3L316.3 380.0L319.2 376.9L322.1 373.1L324.9 368.7L327.8 363.6L330.7 358.1L333.5 352.5L336.4 346.9L339.3 341.6L342.1 337.0L345.0 333.2L347.9 330.7L350.8 329.5L353.6 329.9L356.5 331.8L359.4 335.2L362.2 340.2M267.7 366.3L269.4 360.5L271.1 356.0L272.8 352.9L274.5 351.3L276.2 351.2L277.9 352.4L279.6 354.9L281.3 358.4L283.0 362.6L284.7 367.3L286.4 372.3L288.1 377.2L289.8 381.9L291.5 386.2L293.2 389.9L294.9 393.1L296.6 395.6L298.3 397.4L300.0 398.7L301.7 399.4L303.4 399.7L305.1 399.7L306.8 399.3L308.5 398.8L310.2 398.0L311.9 397.1L313.6 395.9L315.3 394.4L317.0 392.6L318.7 390.3L320.5 387.5L322.2 384.1L323.9 380.1L325.6 375.4L327.3 370.2L329.0 364.4L330.7 358.1L332.4 351.7L334.1 345.2L335.8 339.0L337.5 333.2L339.2 328.2L340.9 324.2L342.6 321.4L344.3 320.0L346.0 320.1L347.7 321.6L349.4 324.6L351.1 328.9M223.3 320.3L226.2 315.7L229.1 312.4L231.9 310.5L234.8 310.1L237.7 311.2L240.5 313.7L243.4 317.3L246.3 322.0L249.1 327.5L252.0 333.4L254.9 339.6L257.8 345.7L260.6 351.6L263.5 357.1L266.4 362.1L269.2 366.4L272.1 370.1L275.0 373.2L277.8 375.7L280.7 377.6L283.6 379.1L286.5 380.3L289.3 381.2L292.2 381.8L295.1 382.3L297.9 382.5L300.8 382.5L303.7 382.3L306.5 381.7L309.4 380.6L312.3 379.0L315.2 376.9L318.0 374.1L320.9 370.6L323.8 366.5L326.6 361.9L329.5 356.9L332.4 351.7L335.2 346.4L338.1 341.4L341.0 336.8L343.8 333.1L346.7 330.3L349.6 328.7L352.5 328.5L355.3 329.8L358.2 332.5L361.1 336.8L363.9 342.2M270.5 370.1L272.2 363.8L273.9 358.6L275.6 354.7L277.3 352.1L279.0 351.0L280.7 351.3L282.5 352.7L284.2 355.3L285.9 358.6L287.6 362.6L289.3 367.0L291.0 371.5L292.7 376.0L294.4 380.2L296.1 384.0L297.8 387.4L299.5 390.2L301.2 392.4L302.9 394.1L304.6 395.3L306.3 395.9L308.0 396.2L309.7 396.1L311.4 395.6L313.1 394.9L314.8 393.8L316.5 392.4L318.2 390.6L319.9 388.4L321.6 385.7L323.3 382.5L325.0 378.7L326.7 374.4L328.4 369.5L330.1 364.2L331.8 358.4L333.5 352.5L335.2 346.4L336.9 340.5L338.6 335.0L340.3 330.1L342.1 326.0L343.8 323.0L345.5 321.3L347.2 320.9L348.9 321.9L350.6 324.2L352.3 327.9L354.0 332.7M225.0 322.8L227.9 317.7L230.8 313.7L233.6 311.0L236.5 309.7L239.4 309.8L242.2 311.3L245.1 314.0L248.0 317.7L250.9 322.3L253.7 327.5L256.6 333.1L259.5 338.8L262.3 344.5L265.2 349.9L268.1 355.0L270.9 359.5L273.8 363.5L276.7 367.0L279.5 369.9L282.4 372.2L285.3 374.1L288.2 375.6L291.0 376.7L293.9 377.5L296.8 377.9L299.6 378.0L302.5 377.8L305.4 377.3L308.2 376.3L311.1 374.8L314.0 372.8L316.9 370.3L319.7 367.1L322.6 363.5L325.5 359.3L328.3 354.8L331.2 350.0L334.1 345.2L336.9 340.5L339.8 336.2L342.7 332.5L345.6 329.7L348.4 327.9L351.3 327.3L354.2 328.1L357.0 330.3L359.9 333.9L362.8 338.8L365.6 344.8M273.4 374.3L275.1 367.6L276.8 361.8L278.5 357.1L280.2 353.7L281.9 351.6L283.6 350.8L285.3 351.2L287.0 352.7L288.7 355.2L290.4 358.3L292.1 362.0L293.8 365.9L295.5 370.0L297.2 373.9L298.9 377.6L300.6 381.0L302.3 383.9L304.1 386.3L305.8 388.2L307.5 389.7L309.2 390.6L310.9 391.1L312.6 391.1L314.3 390.7L316.0 390.0L317.7 388.8L319.4 387.2L321.1 385.2L322.8 382.8L324.5 379.8L326.2 376.4L327.9 372.4L329.6 368.0L331.3 363.1L333.0 357.9L334.7 352.4L336.4 346.9L338.1 341.4L339.8 336.2L341.5 331.5L343.2 327.6L344.9 324.5L346.6 322.6L348.3 321.9L350.0 322.4L351.7 324.3L353.4 327.5L355.1 331.7L356.8 337.0M226.7 325.9L229.6 320.3L232.5 315.7L235.3 312.3L238.2 310.1L241.1 309.2L243.9 309.6L246.8 311.2L249.7 314.0L252.6 317.6L255.4 322.0L258.3 326.8L261.2 332.0L264.0 337.2L266.9 342.4L269.8 347.3L272.6 351.9L275.5 356.0L278.4 359.7L281.3 362.8L284.1 365.4L287.0 367.6L289.9 369.2L292.7 370.5L295.6 371.3L298.5 371.8L301.3 371.8L304.2 371.5L307.1 370.7L309.9 369.5L312.8 367.7L315.7 365.5L318.6 362.7L321.4 359.5L324.3 355.9L327.2 351.8L330.0 347.6L332.9 343.2L335.8 339.0L338.6 335.0L341.5 331.5L344.4 328.8L347.3 327.0L350.1 326.2L353.0 326.7L355.9 328.5L358.7 331.6L361.6 335.9L364.5 341.4L367.3 347.9M276.3 379.0L278.0 372.0L279.7 365.7L281.4 360.3L283.1 356.1L284.8 353.0L286.5 351.2L288.2 350.6L289.9 351.0L291.6 352.4L293.3 354.6L295.0 357.4L296.7 360.7L298.4 364.1L300.1 367.6L301.8 371.0L303.5 374.2L305.2 377.0L306.9 379.4L308.6 381.4L310.3 383.0L312.0 384.0L313.7 384.6L315.4 384.7L317.1 384.4L318.8 383.7L320.5 382.5L322.2 380.8L324.0 378.7L325.7 376.1L327.4 373.0L329.1 369.5L330.8 365.5L332.5 361.2L334.2 356.5L335.9 351.6L337.6 346.6L339.3 341.6L341.0 336.8L342.7 332.5L344.4 328.8L346.1 325.8L347.8 323.9L349.5 323.0L351.2 323.3L352.9 324.8L354.6 327.5L356.3 331.3L358.0 336.1L359.7 341.7M228.4 329.4L231.3 323.5L234.2 318.4L237.0 314.3L239.9 311.2L242.8 309.4L245.6 308.8L248.5 309.4L251.4 311.0L254.3 313.7L257.1 317.1L260.0 321.1L262.9 325.5L265.7 330.2L268.6 334.9L271.5 339.5L274.3 343.9L277.2 347.9L280.1 351.6L283.0 354.8L285.8 357.5L288.7 359.8L291.6 361.6L294.4 362.9L297.3 363.8L300.2 364.3L303.0 364.3L305.9 363.8L308.8 362.9L311.7 361.6L314.5 359.7L317.4 357.4L320.3 354.6L323.1 351.5L326.0 348.0L328.9 344.3L331.7 340.5L334.6 336.7L337.5 333.2L340.3 330.1L343.2 327.6L346.1 325.8L349.0 325.1L351.8 325.4L354.7 326.9L357.6 329.6L360.4 333.6L363.3 338.6L366.2 344.6L369.0 351.3M279.1 384.1L280.8 376.9L282.5 370.2L284.2 364.2L286.0 359.3L287.7 355.3L289.4 352.6L291.1 350.9L292.8 350.3L294.5 350.6L296.2 351.8L297.9 353.7L299.6 356.0L301.3 358.7L303.0 361.6L304.7 364.5L306.4 367.3L308.1 369.9L309.8 372.2L311.5 374.1L313.2 375.6L314.9 376.7L316.6 377.3L318.3 377.4L320.0 377.1L321.7 376.4L323.4 375.2L325.1 373.5L326.8 371.3L328.5 368.7L330.2 365.7L331.9 362.3L333.6 358.5L335.3 354.4L337.0 350.0L338.7 345.6L340.4 341.2L342.1 337.0L343.8 333.1L345.6 329.7L347.3 327.0L349.0 325.1L350.7 324.2L352.4 324.3L354.1 325.6L355.8 328.0L357.5 331.4L359.2 335.8L360.9 341.0L362.6 346.7M230.1 333.2L233.0 327.2L235.9 321.7L238.7 317.0L241.6 313.2L244.5 310.5L247.3 308.9L250.2 308.5L253.1 309.1L256.0 310.6L258.8 313.0L261.7 316.1L264.6 319.7L267.4 323.6L270.3 327.7L273.2 331.8L276.0 335.8L278.9 339.6L281.8 343.1L284.7 346.2L287.5 349.0L290.4 351.2L293.3 353.1L296.1 354.4L299.0 355.3L301.9 355.8L304.7 355.8L307.6 355.3L310.5 354.4L313.4 353.0L316.2 351.2L319.1 348.9L322.0 346.4L324.8 343.5L327.7 340.3L330.6 337.1L333.4 333.9L336.3 330.9L339.2 328.2L342.1 326.0L344.9 324.5L347.8 323.9L350.7 324.2L353.5 325.5L356.4 328.0L359.3 331.6L362.1 336.3L365.0 341.9L367.9 348.3L370.7 355.2M282.0 389.4L283.7 382.1L285.4 375.2L287.1 368.9L288.8 363.3L290.5 358.6L292.2 354.9L293.9 352.2L295.6 350.6L297.3 349.9L299.0 350.0L300.7 350.9L302.4 352.3L304.1 354.2L305.9 356.3L307.6 358.6L309.3 360.9L311.0 363.1L312.7 365.0L314.4 366.7L316.1 368.1L317.8 369.0L319.5 369.6L321.2 369.7L322.9 369.4L324.6 368.6L326.3 367.4L328.0 365.8L329.7 363.7L331.4 361.2L333.1 358.3L334.8 355.1L336.5 351.6L338.2 347.9L339.9 344.1L341.6 340.3L343.3 336.6L345.0 333.2L346.7 330.3L348.4 327.9L350.1 326.2L351.8 325.4L353.5 325.5L355.2 326.7L356.9 328.8L358.6 332.0L360.3 336.1L362.0 340.9L363.7 346.3L365.5 352.0M231.8 337.3L234.7 331.3L237.6 325.5L240.4 320.4L243.3 316.0L246.2 312.5L249.1 310.1L251.9 308.6L254.8 308.2L257.7 308.7L260.5 310.0L263.4 312.1L266.3 314.7L269.1 317.8L272.0 321.2L274.9 324.7L277.8 328.2L280.6 331.6L283.5 334.7L286.4 337.6L289.2 340.2L292.1 342.4L295.0 344.1L297.8 345.5L300.7 346.4L303.6 346.8L306.4 346.8L309.3 346.4L312.2 345.5L315.1 344.2L317.9 342.6L320.8 340.6L323.7 338.3L326.5 335.8L329.4 333.2L332.3 330.6L335.1 328.2L338.0 326.0L340.9 324.2L343.8 323.0L346.6 322.6L349.5 323.0L352.4 324.3L355.2 326.7L358.1 330.0L361.0 334.4L363.8 339.7L366.7 345.7L369.6 352.3L372.5 359.3M284.9 394.9L286.6 387.8L288.3 380.7L290.0 374.1L291.7 368.1L293.4 362.7L295.1 358.3L296.8 354.7L298.5 352.1L300.2 350.4L301.9 349.5L303.6 349.3L305.3 349.8L307.0 350.7L308.7 352.0L310.4 353.6L312.1 355.3L313.8 356.9L315.5 358.4L317.2 359.8L318.9 360.9L320.6 361.6L322.3 362.0L324.0 362.1L325.7 361.7L327.5 361.0L329.2 359.8L330.9 358.2L332.6 356.3L334.3 354.0L336.0 351.4L337.7 348.5L339.4 345.5L341.1 342.3L342.8 339.1L344.5 336.0L346.2 333.2L347.9 330.7L349.6 328.7L351.3 327.3L353.0 326.7L354.7 326.9L356.4 328.0L358.1 330.0L359.8 333.0L361.5 336.8L363.2 341.3L364.9 346.4L366.6 351.9L368.3 357.5M233.5 341.6L236.4 335.6L239.3 329.9L242.1 324.4L245.0 319.6L247.9 315.5L250.8 312.2L253.6 309.9L256.5 308.5L259.4 307.9L262.2 308.3L265.1 309.3L268.0 311.0L270.8 313.2L273.7 315.7L276.6 318.5L279.5 321.3L282.3 324.2L285.2 326.9L288.1 329.5L290.9 331.8L293.8 333.8L296.7 335.4L299.5 336.6L302.4 337.5L305.3 337.9L308.2 338.0L311.0 337.6L313.9 336.9L316.8 335.8L319.6 334.4L322.5 332.8L325.4 330.9L328.2 329.0L331.1 327.0L334.0 325.1L336.8 323.5L339.7 322.2L342.6 321.4L345.5 321.3L348.3 321.9L351.2 323.3L354.1 325.6L356.9 328.8L359.8 333.0L362.7 338.0L365.5 343.7L368.4 350.0L371.3 356.7L374.2 363.6M287.7 400.4L289.5 393.5L291.2 386.6L292.9 379.9L294.6 373.5L296.3 367.7L298.0 362.6L299.7 358.3L301.4 354.8L303.1 352.1L304.8 350.3L306.5 349.1L308.2 348.6L309.9 348.6L311.6 349.1L313.3 349.8L315.0 350.8L316.7 351.8L318.4 352.8L320.1 353.7L321.8 354.4L323.5 354.9L325.2 355.2L326.9 355.1L328.6 354.6L330.3 353.9L332.0 352.8L333.7 351.3L335.4 349.6L337.1 347.6L338.8 345.3L340.5 342.9L342.2 340.3L343.9 337.8L345.6 335.3L347.3 333.0L349.1 331.1L350.8 329.5L352.5 328.5L354.2 328.1L355.9 328.5L357.6 329.6L359.3 331.6L361.0 334.4L362.7 338.0L364.4 342.3L366.1 347.1L367.8 352.3L369.5 357.7L371.2 363.0M235.2 345.9L238.1 340.2L241.0 334.5L243.8 329.0L246.7 323.9L249.6 319.3L252.5 315.4L255.3 312.3L258.2 310.0L261.1 308.5L263.9 307.8L266.8 307.9L269.7 308.6L272.5 309.8L275.4 311.5L278.3 313.5L281.2 315.6L284.0 317.9L286.9 320.1L289.8 322.2L292.6 324.1L295.5 325.9L298.4 327.3L301.2 328.4L304.1 329.2L307.0 329.6L309.9 329.8L312.7 329.5L315.6 329.0L318.5 328.2L321.3 327.1L324.2 325.9L327.1 324.6L329.9 323.3L332.8 322.0L335.7 320.9L338.6 320.2L341.4 319.8L344.3 320.0L347.2 320.9L350.0 322.4L352.9 324.8L355.8 328.0L358.6 332.0L361.5 336.8L364.4 342.3L367.2 348.3L370.1 354.7L373.0 361.3L375.9 367.9M290.6 405.7L292.3 399.3L294.0 392.7L295.7 386.0L297.4 379.6L299.1 373.5L300.8 367.9L302.5 363.0L304.2 358.7L305.9 355.2L307.6 352.5L309.4 350.4L311.1 348.9L312.8 348.0L314.5 347.6L316.2 347.5L317.9 347.7L319.6 348.1L321.3 348.5L323.0 348.9L324.7 349.2L326.4 349.4L328.1 349.4L329.8 349.2L331.5 348.7L333.2 347.9L334.9 346.9L336.6 345.6L338.3 344.1L340.0 342.4L341.7 340.5L343.4 338.6L345.1 336.6L346.8 334.8L348.5 333.0L350.2 331.6L351.9 330.5L353.6 329.9L355.3 329.8L357.0 330.3L358.7 331.6L360.4 333.6L362.1 336.3L363.8 339.7L365.5 343.7L367.2 348.3L369.0 353.2L370.7 358.4L372.4 363.5L374.1 368.3M236.9 350.0L239.8 344.8L242.7 339.4L245.6 333.9L248.4 328.7L251.3 323.8L254.2 319.4L257.0 315.7L259.9 312.7L262.8 310.4L265.6 308.8L268.5 308.0L271.4 307.7L274.2 308.0L277.1 308.8L280.0 310.0L282.9 311.4L285.7 312.9L288.6 314.6L291.5 316.2L294.3 317.7L297.2 319.1L300.1 320.3L302.9 321.3L305.8 322.0L308.7 322.5L311.6 322.6L314.4 322.6L317.3 322.3L320.2 321.8L323.0 321.1L325.9 320.4L328.8 319.7L331.6 319.0L334.5 318.5L337.4 318.3L340.3 318.4L343.1 319.0L346.0 320.1L348.9 321.9L351.7 324.3L354.6 327.5L357.5 331.4L360.3 336.1L363.2 341.3L366.1 347.1L369.0 353.2L371.8 359.6L374.7 365.9L377.6 372.0M293.5 410.8L295.2 405.0L296.9 398.8L298.6 392.4L300.3 386.0L302.0 379.8L303.7 374.0L305.4 368.6L307.1 363.8L308.8 359.6L310.5 356.1L312.2 353.1L313.9 350.8L315.6 349.1L317.3 347.8L319.0 347.0L320.7 346.4L322.4 346.1L324.1 345.9L325.8 345.8L327.5 345.7L329.2 345.5L331.0 345.2L332.7 344.8L334.4 344.2L336.1 343.4L337.8 342.5L339.5 341.4L341.2 340.1L342.9 338.8L344.6 337.4L346.3 336.0L348.0 334.6L349.7 333.4L351.4 332.5L353.1 331.8L354.8 331.5L356.5 331.8L358.2 332.5L359.9 333.9L361.6 335.9L363.3 338.6L365.0 341.9L366.7 345.7L368.4 350.0L370.1 354.7L371.8 359.6L373.5 364.4L375.2 369.1L376.9 373.4M238.6 353.8L241.5 349.2L244.4 344.2L247.3 339.1L250.1 333.9L253.0 328.9L255.9 324.3L258.7 320.1L261.6 316.5L264.5 313.5L267.3 311.2L270.2 309.5L273.1 308.4L276.0 307.9L278.8 307.8L281.7 308.2L284.6 308.8L287.4 309.7L290.3 310.7L293.2 311.8L296.0 312.9L298.9 314.0L301.8 314.9L304.6 315.7L307.5 316.3L310.4 316.8L313.3 317.1L316.1 317.2L319.0 317.1L321.9 317.0L324.7 316.8L327.6 316.6L330.5 316.4L333.3 316.5L336.2 316.7L339.1 317.3L342.0 318.2L344.8 319.7L347.7 321.6L350.6 324.2L353.4 327.5L356.3 331.3L359.2 335.8L362.0 340.9L364.9 346.4L367.8 352.3L370.7 358.4L373.5 364.4L376.4 370.3L379.3 375.8M296.4 415.3L298.1 410.2L299.8 404.7L301.5 398.7L303.2 392.6L304.9 386.5L306.6 380.6L308.3 375.0L310.0 369.8L311.7 365.1L313.4 360.9L315.1 357.4L316.8 354.3L318.5 351.8L320.2 349.8L321.9 348.2L323.6 346.9L325.3 345.9L327.0 345.1L328.7 344.5L330.4 343.9L332.1 343.4L333.8 342.8L335.5 342.2L337.2 341.6L338.9 340.8L340.6 340.0L342.3 339.0L344.0 338.1L345.7 337.1L347.4 336.1L349.1 335.2L350.9 334.5L352.6 333.9L354.3 333.7L356.0 333.7L357.7 334.3L359.4 335.2L361.1 336.8L362.8 338.8L364.5 341.4L366.2 344.6L367.9 348.3L369.6 352.3L371.3 356.7L373.0 361.3L374.7 365.9L376.4 370.3L378.1 374.4L379.8 377.9M240.3 357.1L243.2 353.3L246.1 348.9L249.0 344.2L251.8 339.3L254.7 334.4L257.6 329.7L260.4 325.3L263.3 321.3L266.2 317.8L269.0 314.9L271.9 312.5L274.8 310.7L277.7 309.4L280.5 308.6L283.4 308.2L286.3 308.1L289.1 308.3L292.0 308.8L294.9 309.3L297.7 310.0L300.6 310.7L303.5 311.3L306.4 312.0L309.2 312.5L312.1 312.9L315.0 313.3L317.8 313.6L320.7 313.8L323.6 314.0L326.4 314.3L329.3 314.6L332.2 315.1L335.1 315.7L337.9 316.7L340.8 318.0L343.7 319.7L346.5 321.9L349.4 324.6L352.3 327.9L355.1 331.7L358.0 336.1L360.9 341.0L363.7 346.3L366.6 351.9L369.5 357.7L372.4 363.5L375.2 369.1L378.1 374.4L381.0 379.1M299.2 419.1L300.9 415.0L302.6 410.1L304.3 404.8L306.0 399.1L307.7 393.3L309.4 387.5L311.1 381.9L312.9 376.5L314.6 371.5L316.3 366.9L318.0 362.8L319.7 359.2L321.4 356.1L323.1 353.4L324.8 351.1L326.5 349.2L328.2 347.6L329.9 346.3L331.6 345.2L333.3 344.2L335.0 343.3L336.7 342.5L338.4 341.7L340.1 341.0L341.8 340.2L343.5 339.5L345.2 338.7L346.9 338.0L348.6 337.3L350.3 336.8L352.0 336.4L353.7 336.2L355.4 336.3L357.1 336.6L358.8 337.4L360.5 338.5L362.2 340.2L363.9 342.2L365.6 344.8L367.3 347.9L369.0 351.3L370.7 355.2L372.5 359.3L374.2 363.6L375.9 367.9L377.6 372.0L379.3 375.8L381.0 379.1L382.7 381.7M242.1 359.7L244.9 356.8L247.8 353.2L250.7 349.1L253.5 344.6L256.4 340.0L259.3 335.4L262.1 331.0L265.0 326.8L267.9 323.1L270.7 319.7L273.6 316.8L276.5 314.4L279.4 312.5L282.2 311.0L285.1 309.9L288.0 309.2L290.8 308.9L293.7 308.7L296.6 308.8L299.4 309.1L302.3 309.4L305.2 309.8L308.1 310.2L310.9 310.7L313.8 311.1L316.7 311.6L319.5 312.0L322.4 312.5L325.3 313.1L328.1 313.8L331.0 314.6L333.9 315.6L336.8 316.9L339.6 318.5L342.5 320.4L345.4 322.8L348.2 325.6L351.1 328.9L354.0 332.7L356.8 337.0L359.7 341.7L362.6 346.7L365.5 352.0L368.3 357.5L371.2 363.0L374.1 368.3L376.9 373.4L379.8 377.9L382.7 381.7" fill="none" stroke="#0a86ff" stroke-width="1.0" shape-rendering="crispEdges"/><path d="M128.0 436.0L307.0 464.0" stroke="#000" stroke-width="1" fill="none"/><path d="M307.0 464.0L413.3 416.4" stroke="#000" stroke-width="1" fill="none"/><path d="M128.0 436.0L130.0 435.1" stroke="#000" stroke-width="1" fill="none"/><path d="M307.0 464.0L303.7 463.5" stroke="#000" stroke-width="1" fill="none"/><path d="M150.4 439.5L152.4 438.6" stroke="#000" stroke-width="1" fill="none"/><path d="M320.3 458.1L317.0 457.5" stroke="#000" stroke-width="1" fill="none"/><path d="M172.8 443.0L174.8 442.1" stroke="#000" stroke-width="1" fill="none"/><path d="M333.6 452.1L330.2 451.6" stroke="#000" stroke-width="1" fill="none"/><path d="M195.1 446.5L197.1 445.6" stroke="#000" stroke-width="1" fill="none"/><path d="M346.9 446.1L343.5 445.6" stroke="#000" stroke-width="1" fill="none"/><path d="M217.5 450.0L219.5 449.1" stroke="#000" stroke-width="1" fill="none"/><path d="M360.2 440.2L356.8 439.7" stroke="#000" stroke-width="1" fill="none"/><path d="M239.9 453.5L241.9 452.6" stroke="#000" stroke-width="1" fill="none"/><path d="M373.4 434.2L370.1 433.7" stroke="#000" stroke-width="1" fill="none"/><path d="M262.3 457.0L264.3 456.1" stroke="#000" stroke-width="1" fill="none"/><path d="M386.7 428.3L383.4 427.8" stroke="#000" stroke-width="1" fill="none"/><path d="M284.7 460.5L286.7 459.6" stroke="#000" stroke-width="1" fill="none"/><path d="M400.0 422.4L396.6 421.8" stroke="#000" stroke-width="1" fill="none"/><path d="M307.0 464.0L309.0 463.1" stroke="#000" stroke-width="1" fill="none"/><path d="M413.3 416.4L409.9 415.9" stroke="#000" stroke-width="1" fill="none"/><path d="M417.5 301.5H447.5" stroke="#0a86ff" stroke-width="1.2"/><defs><linearGradient id="cb" x1="0" y1="1" x2="0" y2="0"><stop offset="0.00" stop-color="#000000"/><stop offset="0.05" stop-color="#39004f"/><stop offset="0.10" stop-color="#510096"/><stop offset="0.15" stop-color="#6301ce"/><stop offset="0.20" stop-color="#7202f3"/><stop offset="0.25" stop-color="#8004ff"/><stop offset="0.30" stop-color="#8c07f3"/><stop offset="0.35" stop-color="#970bce"/><stop offset="0.40" stop-color="#a11096"/><stop offset="0.45" stop-color="#ab174f"/><stop offset="0.50" stop-color="#b42000"/><stop offset="0.55" stop-color="#bd2a00"/><stop offset="0.60" stop-color="#c63700"/><stop offset="0.65" stop-color="#ce4600"/><stop offset="0.70" stop-color="#d55700"/><stop offset="0.75" stop-color="#dd6c00"/><stop offset="0.80" stop-color="#e48300"/><stop offset="0.85" stop-color="#eb9d00"/><stop offset="0.90" stop-color="#f2ba00"/><stop offset="0.95" stop-color="#f9db00"/><stop offset="1.00" stop-color="#ffff00"/></linearGradient></defs><rect x="418.5" y="323.5" width="15" height="72" fill="url(#cb)" stroke="#000" stroke-width="1"/><path d="M418.5 395.5h3M433.5 395.5h-3" stroke="#000" stroke-width="1"/><path d="M418.5 388.3h3M433.5 388.3h-3" stroke="#000" stroke-width="1"/><path d="M418.5 381.1h3M433.5 381.1h-3" stroke="#000" stroke-width="1"/><path d="M418.5 373.9h3M433.5 373.9h-3" stroke="#000" stroke-width="1"/><path d="M418.5 366.7h3M433.5 366.7h-3" stroke="#000" stroke-width="1"/><path d="M418.5 359.5h3M433.5 359.5h-3" stroke="#000" stroke-width="1"/><path d="M418.5 352.3h3M433.5 352.3h-3" stroke="#000" stroke-width="1"/><path d="M418.5 345.1h3M433.5 345.1h-3" stroke="#000" stroke-width="1"/><path d="M418.5 337.9h3M433.5 337.9h-3" stroke="#000" stroke-width="1"/><path d="M418.5 330.7h3M433.5 330.7h-3" stroke="#000" stroke-width="1"/><path d="M418.5 323.5h3M433.5 323.5h-3" stroke="#000" stroke-width="1"/></svg>
<div class="t" style="left:283.7px;top:297.0px;font-size:12px;color:#000;font-family:'Liberation Mono',monospace;font-weight:bold;transform:scaleX(0.964);-webkit-text-stroke:0.2px #000;">cos(sqrt(y^2+x^2))</div>
<div class="t" style="left:108.6px;top:439.0px;font-size:11px;color:#000;font-family:'Liberation Mono',monospace;font-weight:bold;transform:scaleX(0.980);-webkit-text-stroke:0.25px #000;">–8</div>
<div class="t" style="left:307.4px;top:463.0px;font-size:11px;color:#000;font-family:'Liberation Mono',monospace;font-weight:bold;transform:scaleX(0.980);-webkit-text-stroke:0.25px #000;">–8</div>
<div class="t" style="left:130.9px;top:443.0px;font-size:11px;color:#000;font-family:'Liberation Mono',monospace;font-weight:bold;transform:scaleX(0.980);-webkit-text-stroke:0.25px #000;">–6</div>
<div class="t" style="left:320.7px;top:457.0px;font-size:11px;color:#000;font-family:'Liberation Mono',monospace;font-weight:bold;transform:scaleX(0.980);-webkit-text-stroke:0.25px #000;">–6</div>
<div class="t" style="left:153.3px;top:446.0px;font-size:11px;color:#000;font-family:'Liberation Mono',monospace;font-weight:bold;transform:scaleX(0.980);-webkit-text-stroke:0.25px #000;">–4</div>
<div class="t" style="left:334.0px;top:451.0px;font-size:11px;color:#000;font-family:'Liberation Mono',monospace;font-weight:bold;transform:scaleX(0.980);-webkit-text-stroke:0.25px #000;">–4</div>
<div class="t" style="left:175.7px;top:450.0px;font-size:11px;color:#000;font-family:'Liberation Mono',monospace;font-weight:bold;transform:scaleX(0.980);-webkit-text-stroke:0.25px #000;">–2</div>
<div class="t" style="left:347.2px;top:445.0px;font-size:11px;color:#000;font-family:'Liberation Mono',monospace;font-weight:bold;transform:scaleX(0.980);-webkit-text-stroke:0.25px #000;">–2</div>
<div class="t" style="left:204.6px;top:453.0px;font-size:11px;color:#000;font-family:'Liberation Mono',monospace;font-weight:bold;transform:scaleX(0.980);-webkit-text-stroke:0.25px #000;">0</div>
<div class="t" style="left:367.0px;top:439.0px;font-size:11px;color:#000;font-family:'Liberation Mono',monospace;font-weight:bold;transform:scaleX(0.980);-webkit-text-stroke:0.25px #000;">0</div>
<div class="t" style="left:226.9px;top:457.0px;font-size:11px;color:#000;font-family:'Liberation Mono',monospace;font-weight:bold;transform:scaleX(0.980);-webkit-text-stroke:0.25px #000;">2</div>
<div class="t" style="left:380.3px;top:433.0px;font-size:11px;color:#000;font-family:'Liberation Mono',monospace;font-weight:bold;transform:scaleX(0.980);-webkit-text-stroke:0.25px #000;">2</div>
<div class="t" style="left:249.3px;top:460.0px;font-size:11px;color:#000;font-family:'Liberation Mono',monospace;font-weight:bold;transform:scaleX(0.980);-webkit-text-stroke:0.25px #000;">4</div>
<div class="t" style="left:393.6px;top:428.0px;font-size:11px;color:#000;font-family:'Liberation Mono',monospace;font-weight:bold;transform:scaleX(0.980);-webkit-text-stroke:0.25px #000;">4</div>
<div class="t" style="left:271.7px;top:464.0px;font-size:11px;color:#000;font-family:'Liberation Mono',monospace;font-weight:bold;transform:scaleX(0.980);-webkit-text-stroke:0.25px #000;">6</div>
<div class="t" style="left:406.8px;top:422.0px;font-size:11px;color:#000;font-family:'Liberation Mono',monospace;font-weight:bold;transform:scaleX(0.980);-webkit-text-stroke:0.25px #000;">6</div>
<div class="t" style="left:294.1px;top:467.0px;font-size:11px;color:#000;font-family:'Liberation Mono',monospace;font-weight:bold;transform:scaleX(0.980);-webkit-text-stroke:0.25px #000;">8</div>
<div class="t" style="left:420.1px;top:416.0px;font-size:11px;color:#000;font-family:'Liberation Mono',monospace;font-weight:bold;transform:scaleX(0.980);-webkit-text-stroke:0.25px #000;">8</div>
<div class="t" style="left:109.6px;top:400.0px;font-size:11px;color:#000;font-family:'Liberation Mono',monospace;font-weight:bold;transform:scaleX(0.980);-webkit-text-stroke:0.25px #000;">–1</div>
<div class="t" style="left:440.5px;top:392.0px;font-size:11px;color:#000;font-family:'Liberation Mono',monospace;font-weight:bold;transform:scaleX(0.980);-webkit-text-stroke:0.25px #000;">–1</div>
<div class="t" style="left:96.6px;top:394.0px;font-size:11px;color:#000;font-family:'Liberation Mono',monospace;font-weight:bold;transform:scaleX(0.980);-webkit-text-stroke:0.25px #000;">–0.8</div>
<div class="t" style="left:440.5px;top:385.0px;font-size:11px;color:#000;font-family:'Liberation Mono',monospace;font-weight:bold;transform:scaleX(0.980);-webkit-text-stroke:0.25px #000;">–0.8</div>
<div class="t" style="left:96.6px;top:387.0px;font-size:11px;color:#000;font-family:'Liberation Mono',monospace;font-weight:bold;transform:scaleX(0.980);-webkit-text-stroke:0.25px #000;">–0.6</div>
<div class="t" style="left:440.5px;top:378.0px;font-size:11px;color:#000;font-family:'Liberation Mono',monospace;font-weight:bold;transform:scaleX(0.980);-webkit-text-stroke:0.25px #000;">–0.6</div>
<div class="t" style="left:96.6px;top:381.0px;font-size:11px;color:#000;font-family:'Liberation Mono',monospace;font-weight:bold;transform:scaleX(0.980);-webkit-text-stroke:0.25px #000;">–0.4</div>
<div class="t" style="left:440.5px;top:370.0px;font-size:11px;color:#000;font-family:'Liberation Mono',monospace;font-weight:bold;transform:scaleX(0.980);-webkit-text-stroke:0.25px #000;">–0.4</div>
<div class="t" style="left:96.6px;top:374.0px;font-size:11px;color:#000;font-family:'Liberation Mono',monospace;font-weight:bold;transform:scaleX(0.980);-webkit-text-stroke:0.25px #000;">–0.2</div>
<div class="t" style="left:440.5px;top:363.0px;font-size:11px;color:#000;font-family:'Liberation Mono',monospace;font-weight:bold;transform:scaleX(0.980);-webkit-text-stroke:0.25px #000;">–0.2</div>
<div class="t" style="left:116.0px;top:368.0px;font-size:11px;color:#000;font-family:'Liberation Mono',monospace;font-weight:bold;transform:scaleX(0.980);-webkit-text-stroke:0.25px #000;">0</div>
<div class="t" style="left:447.5px;top:356.0px;font-size:11px;color:#000;font-family:'Liberation Mono',monospace;font-weight:bold;transform:scaleX(0.980);-webkit-text-stroke:0.25px #000;">0</div>
<div class="t" style="left:103.1px;top:361.0px;font-size:11px;color:#000;font-family:'Liberation Mono',monospace;font-weight:bold;transform:scaleX(0.980);-webkit-text-stroke:0.25px #000;">0.2</div>
<div class="t" style="left:447.5px;top:349.0px;font-size:11px;color:#000;font-family:'Liberation Mono',monospace;font-weight:bold;transform:scaleX(0.980);-webkit-text-stroke:0.25px #000;">0.2</div>
<div class="t" style="left:103.1px;top:355.0px;font-size:11px;color:#000;font-family:'Liberation Mono',monospace;font-weight:bold;transform:scaleX(0.980);-webkit-text-stroke:0.25px #000;">0.4</div>
<div class="t" style="left:447.5px;top:342.0px;font-size:11px;color:#000;font-family:'Liberation Mono',monospace;font-weight:bold;transform:scaleX(0.980);-webkit-text-stroke:0.25px #000;">0.4</div>
<div class="t" style="left:103.1px;top:348.0px;font-size:11px;color:#000;font-family:'Liberation Mono',monospace;font-weight:bold;transform:scaleX(0.980);-webkit-text-stroke:0.25px #000;">0.6</div>
<div class="t" style="left:447.5px;top:334.0px;font-size:11px;color:#000;font-family:'Liberation Mono',monospace;font-weight:bold;transform:scaleX(0.980);-webkit-text-stroke:0.25px #000;">0.6</div>
<div class="t" style="left:103.1px;top:342.0px;font-size:11px;color:#000;font-family:'Liberation Mono',monospace;font-weight:bold;transform:scaleX(0.980);-webkit-text-stroke:0.25px #000;">0.8</div>
<div class="t" style="left:447.5px;top:327.0px;font-size:11px;color:#000;font-family:'Liberation Mono',monospace;font-weight:bold;transform:scaleX(0.980);-webkit-text-stroke:0.25px #000;">0.8</div>
<div class="t" style="left:116.0px;top:336.0px;font-size:11px;color:#000;font-family:'Liberation Mono',monospace;font-weight:bold;transform:scaleX(0.980);-webkit-text-stroke:0.25px #000;">1</div>
<div class="t" style="left:447.5px;top:320.0px;font-size:11px;color:#000;font-family:'Liberation Mono',monospace;font-weight:bold;transform:scaleX(0.980);-webkit-text-stroke:0.25px #000;">1</div>
<div class="t" style="left:75.4px;top:575.0px;font-size:13.5px;color:#000;font-style:italic;">x</div>
<div class="t" style="left:86.1px;top:569.0px;font-size:10.5px;color:#000;">2</div>
<div class="t" style="left:115.4px;top:575.0px;font-size:13.5px;color:#000;font-style:italic;">x</div>
<div class="t" style="left:137.5px;top:575.0px;font-size:13.5px;color:#000;font-style:italic;">y</div>
<div class="t" style="left:148.4px;top:569.0px;font-size:10.5px;color:#000;">2</div>
<div class="t" style="left:177.2px;top:575.0px;font-size:13.5px;color:#000;font-style:italic;">y</div>
<div class="t" style="left:199.5px;top:575.0px;font-size:13.5px;color:#000;font-style:italic;">z</div>
<div class="t" style="left:209.7px;top:569.0px;font-size:10.5px;color:#000;">2</div>
<div class="t" style="left:238.4px;top:575.0px;font-size:13.5px;color:#000;font-style:italic;">z</div>
<div class="t" style="left:90.8px;top:610.0px;font-size:13.5px;color:#000;font-style:italic;">x</div>
<div class="t" style="left:101.0px;top:605.0px;font-size:10.5px;color:#000;">2</div>
<div class="t" style="left:152.5px;top:610.0px;font-size:13.5px;color:#000;font-style:italic;">y</div>
<div class="t" style="left:163.4px;top:605.0px;font-size:10.5px;color:#000;">2</div>
<div class="t" style="left:214.4px;top:610.0px;font-size:13.5px;color:#000;font-style:italic;">z</div>
<div class="t" style="left:224.5px;top:605.0px;font-size:10.5px;color:#000;">2</div>
<div class="t" style="left:75.4px;top:646.0px;font-size:13.5px;color:#000;font-style:italic;">y</div>
<div class="t" style="left:106.2px;top:646.0px;font-size:13.5px;color:#000;font-style:italic;">x</div>
<div class="t" style="left:117.0px;top:641.0px;font-size:10.5px;color:#000;">2</div>
<div class="t" style="left:137.6px;top:646.0px;font-size:13.5px;color:#000;font-style:italic;">z</div>
<div class="t" style="left:167.5px;top:646.0px;font-size:13.5px;color:#000;font-style:italic;">y</div>
<div class="t" style="left:178.3px;top:641.0px;font-size:10.5px;color:#000;">2</div>
<div class="t" style="left:199.5px;top:646.0px;font-size:13.5px;color:#000;font-style:italic;">z</div>
<div class="t" style="left:209.7px;top:641.0px;font-size:10.5px;color:#000;">2</div>
<div class="t" style="left:238.4px;top:646.0px;font-size:13.5px;color:#000;font-style:italic;">x</div>
<div class="t" style="left:103.8px;top:745.0px;font-size:13.5px;color:#000;font-style:italic;">x</div>
<div class="t" style="left:83.5px;top:775.0px;font-size:13.5px;color:#000;font-style:italic;">x</div>
<div class="t" style="left:94.2px;top:769.0px;font-size:10.5px;color:#000;">3</div>
<div class="t" style="left:124.6px;top:775.0px;font-size:13.5px;color:#000;">1</div>
<div class="t" style="left:140.2px;top:756.0px;font-size:17px;color:#000;">d</div>
<div class="t" style="left:154.7px;top:756.0px;font-size:17px;color:#000;font-style:italic;">x</div>
<div class="t" style="left:189.3px;top:743.0px;font-size:13.5px;color:#000;font-style:italic;">log</div>
<div class="t" style="left:217.8px;top:743.0px;font-size:13.5px;color:#000;font-style:italic;">x</div>
<div class="t" style="left:227.9px;top:738.0px;font-size:10.5px;color:#000;">2</div>
<div class="t" style="left:241.3px;top:743.0px;font-size:13.5px;color:#000;">-</div>
<div class="t" style="left:251.8px;top:743.0px;font-size:13.5px;color:#000;font-style:italic;">x</div>
<div class="t" style="left:283.4px;top:743.0px;font-size:13.5px;color:#000;">1</div>
<div class="t" style="left:239.2px;top:769.0px;font-size:13.5px;color:#000;">6</div>
<div class="t" style="left:321.5px;top:733.0px;font-size:13.5px;color:#000;font-style:italic;">atan</div>
<div class="t" style="left:360.0px;top:723.0px;font-size:11px;color:#000;">2</div>
<div class="t" style="left:371.1px;top:723.0px;font-size:11px;color:#000;font-style:italic;">x</div>
<div class="t" style="left:384.9px;top:723.0px;font-size:11px;color:#000;">-</div>
<div class="t" style="left:393.4px;top:723.0px;font-size:11px;color:#000;">1</div>
<div class="t" style="left:381.9px;top:747.0px;font-size:11px;color:#000;">3</div>
<div class="t" style="left:364.9px;top:773.0px;font-size:13.5px;color:#000;">3</div>
<div class="t" style="left:413.4px;top:759.0px;font-size:13.5px;color:#000;">-</div>
<div class="t" style="left:424.1px;top:744.0px;font-size:13.5px;color:#000;font-style:italic;">log</div>
<div class="t" style="left:452.8px;top:744.0px;font-size:13.5px;color:#000;font-style:italic;">x</div>
<div class="t" style="left:483.6px;top:744.0px;font-size:13.5px;color:#000;">1</div>
<div class="t" style="left:457.1px;top:770.0px;font-size:13.5px;color:#000;">3</div>
<svg style="position:absolute;left:0;top:0" width="1092" height="998"><g fill="none" stroke="#000" stroke-width="1"><path d="M75.5 563.5H70.5V667.5H75.5" stroke-width="1.1"/><path d="M248 563.5H252.5V667.5H248" stroke-width="1.1"/><path d="M87 725.5C85 722.5 83.5 723 82 725C80 728 79 731 78.8 735V795C78.6 800 76.5 804 73 805.5C72 806 71 804.8 70.4 803.8" stroke-width="1.1"/><path d="M82.3 764.5H133.8" stroke-width="1"/><path d="M188 764.5H299" stroke-width="1"/><path d="M215.8 736.5Q210.5 748 215.8 759.5" stroke-width="1"/><path d="M293 736.5Q298.3 748 293 759.5" stroke-width="1"/><path d="M319.9 764.5H409" stroke-width="1"/><path d="M357.3 721.3Q350.5 740.3 357.3 759.4" stroke-width="1"/><path d="M358.2 739.5H402.9" stroke-width="1"/><path d="M368 752.5L371 751L374.5 757.5L377 743.5H392.8V746.5" stroke-width="1"/><path d="M403.9 721.3Q410.7 740.3 403.9 759.4" stroke-width="1"/><path d="M350.7 780.5L354.5 778.5L358.5 786.3L361 768.8H376.8V772" stroke-width="1"/><path d="M423.2 764.5H499.8" stroke-width="1"/><path d="M451.3 741Q446.8 750.2 451.3 759.4" stroke-width="1"/><path d="M494.5 741Q499 750.2 494.5 759.4" stroke-width="1"/><path d="M99.9 581.8H109.0M104.5 577.5V586.0" stroke-width="1.1"/><path d="M161.7 581.8H170.9M166.3 577.5V586.1" stroke-width="1.1"/><path d="M222.9 581.8H232.0M227.4 577.5V586.0" stroke-width="1.1"/><path d="M90.7 653.7H99.9M95.3 649.4V658.0" stroke-width="1.1"/><path d="M151.9 653.7H161.0M156.4 649.5V658.0" stroke-width="1.1"/><path d="M222.9 653.7H232.0M227.4 649.5V658.0" stroke-width="1.1"/><path d="M107.6 782.1H117.1M112.3 777.6V786.6" stroke-width="1.1"/><path d="M266.9 750.5H276.1M271.5 746.2V754.8" stroke-width="1.1"/><path d="M304.6 765.5H314.2M309.4 761.0V770.0" stroke-width="1.1"/><path d="M468.1 751.7H476.8M472.5 747.6V755.8" stroke-width="1.1"/><path d="M172.7 763H183.1M172.7 767.5H183.1" stroke-width="1.1"/></g></svg>
<div style="position:absolute;left:604px;top:119px;width:429px;height:361px;box-sizing:border-box;border:1px solid #8a8681;border-radius:5px 5px 0 0;background:#edeceb;"></div>
<div style="position:absolute;left:605px;top:120px;width:427px;height:24px;background:linear-gradient(#f0efee,#e6e5e3 50%,#d8d7d5);border-radius:4px 4px 0 0;"></div>
<div style="position:absolute;left:605px;top:144px;width:427px;height:1px;background:#908c87;"></div>
<div class="t" style="left:786.4px;top:125.0px;font-size:16px;color:#666;transform:scaleX(1.214);-webkit-text-stroke:0.4px #666;">Plot 3D</div>
<div style="position:absolute;left:1007px;top:123px;width:20px;height:19px;box-sizing:border-box;border:1px solid #8a8681;border-radius:3px;background:linear-gradient(#fbfbfb,#e9e8e6);"></div>
<svg style="position:absolute;left:1007px;top:123px" width="20" height="19"><path d="M5.5 5L14.5 14M14.5 5L5.5 14" stroke="#333" stroke-width="1.8"/></svg>
<svg style="position:absolute;left:612px;top:125px" width="16" height="15" viewBox="0 0 16 15"><path d="M3.5 0.8L5.2 2.3" stroke="#2626a8" stroke-width="1.3" fill="none"/><path d="M5.5 3C3 3.2 1.5 4.8 2 6.5C2.4 7.8 4 8 4.5 8.5C3 9 2 10.5 2.5 12C3 13.5 4.5 13.8 5 14.8" stroke="#2626a8" stroke-width="1.5" fill="none"/><path d="M8 3.2H15V5.5M8 12.2H15.5V10" stroke="#2626a8" stroke-width="1.3" fill="none"/><path d="M6.5 12V3.5L9.5 10.5L12.5 3.5V12" stroke="#c82828" stroke-width="1.6" fill="none" stroke-linejoin="bevel"/></svg>
<div class="t" style="left:767.1px;top:147.0px;font-size:30px;color:#000;font-family:'Liberation Serif',serif;font-style:italic;transform:scaleX(1.062);-webkit-text-stroke:0.6px #000;">Plot 3D</div>
<div class="t" style="left:610.5px;top:192.0px;font-size:16px;color:#1a1a1a;transform:scaleX(1.093);">Expression</div>
<div style="position:absolute;left:705px;top:187px;width:321px;height:25px;box-sizing:border-box;border:1px solid #8a8681;border-radius:3px;background:#fff;box-shadow:inset 0 1px 0 #e4e2df;"></div>
<div class="t" style="left:709.0px;top:194.0px;font-size:13px;color:#000;font-family:'Liberation Mono',monospace;">cos(sqrt(x^2+y^2))</div>
<div class="t" style="left:632.2px;top:226.0px;font-size:16px;color:#1a1a1a;transform:scaleX(1.033);">Variable:</div>
<div style="position:absolute;left:705px;top:221px;width:38px;height:25px;box-sizing:border-box;border:1px solid #8a8681;border-radius:3px;background:#fff;box-shadow:inset 0 1px 0 #e4e2df;"></div>
<div class="t" style="left:709.0px;top:228.0px;font-size:13px;color:#000;font-family:'Liberation Mono',monospace;">x</div>
<div class="t" style="left:748.6px;top:226.0px;font-size:16px;color:#1a1a1a;transform:scaleX(1.125);">from:</div>
<div style="position:absolute;left:796px;top:221px;width:68px;height:25px;box-sizing:border-box;border:1px solid #8a8681;border-radius:3px;background:#fff;box-shadow:inset 0 1px 0 #e4e2df;"></div>
<div class="t" style="left:800.5px;top:228.0px;font-size:13px;color:#000;font-family:'Liberation Mono',monospace;">-2*pi</div>
<div class="t" style="left:868.6px;top:226.0px;font-size:16px;color:#1a1a1a;transform:scaleX(1.136);">to:</div>
<div style="position:absolute;left:895px;top:221px;width:68px;height:25px;box-sizing:border-box;border:1px solid #8a8681;border-radius:3px;background:#fff;box-shadow:inset 0 1px 0 #e4e2df;"></div>
<div class="t" style="left:899.0px;top:228.0px;font-size:13px;color:#000;font-family:'Liberation Mono',monospace;">2*pi</div>
<div class="t" style="left:632.2px;top:260.0px;font-size:16px;color:#1a1a1a;transform:scaleX(1.033);">Variable:</div>
<div style="position:absolute;left:705px;top:255px;width:38px;height:25px;box-sizing:border-box;border:1px solid #8a8681;border-radius:3px;background:#fff;box-shadow:inset 0 1px 0 #e4e2df;"></div>
<div class="t" style="left:709.0px;top:262.0px;font-size:13px;color:#000;font-family:'Liberation Mono',monospace;">y</div>
<div class="t" style="left:748.6px;top:260.0px;font-size:16px;color:#1a1a1a;transform:scaleX(1.125);">from:</div>
<div style="position:absolute;left:796px;top:255px;width:68px;height:25px;box-sizing:border-box;border:1px solid #8a8681;border-radius:3px;background:#fff;box-shadow:inset 0 1px 0 #e4e2df;"></div>
<div class="t" style="left:800.5px;top:262.0px;font-size:13px;color:#000;font-family:'Liberation Mono',monospace;">-2*pi</div>
<div class="t" style="left:868.6px;top:260.0px;font-size:16px;color:#1a1a1a;transform:scaleX(1.136);">to:</div>
<div style="position:absolute;left:895px;top:255px;width:68px;height:25px;box-sizing:border-box;border:1px solid #8a8681;border-radius:3px;background:#fff;box-shadow:inset 0 1px 0 #e4e2df;"></div>
<div class="t" style="left:899.0px;top:262.0px;font-size:13px;color:#000;font-family:'Liberation Mono',monospace;">2*pi</div>
<div class="t" style="left:660.4px;top:295.0px;font-size:16px;color:#1a1a1a;transform:scaleX(1.038);">Grid:</div>
<div style="position:absolute;left:705px;top:289px;width:68px;height:27px;box-sizing:border-box;border:1px solid #8a8681;border-radius:3px;background:#fff;box-shadow:inset 0 1px 0 #e4e2df;"></div>
<div style="position:absolute;left:757px;top:290px;width:15px;height:25px;box-sizing:border-box;border-left:1px solid #a8a49f;background:linear-gradient(#fbfbfa,#e3e2e0);border-radius:0 2px 2px 0;"></div>
<svg style="position:absolute;left:757px;top:289px" width="16" height="27"><path d="M4.5 10L8 6.5L11.5 10M4.5 17L8 20.5L11.5 17" fill="none" stroke="#222" stroke-width="1.3"/><path d="M1 13.5H15" stroke="#c8c5c1" stroke-width="1"/></svg>
<div class="t" style="left:709.5px;top:295.0px;font-size:16px;color:#000;transform:scaleX(1.068);">50</div>
<div class="t" style="left:778.0px;top:295.0px;font-size:16px;color:#1a1a1a;transform:scaleX(1.125);">x</div>
<div style="position:absolute;left:793px;top:289px;width:68px;height:27px;box-sizing:border-box;border:1px solid #8a8681;border-radius:3px;background:#fff;box-shadow:inset 0 1px 0 #e4e2df;"></div>
<div style="position:absolute;left:845px;top:290px;width:15px;height:25px;box-sizing:border-box;border-left:1px solid #a8a49f;background:linear-gradient(#fbfbfa,#e3e2e0);border-radius:0 2px 2px 0;"></div>
<svg style="position:absolute;left:845px;top:289px" width="16" height="27"><path d="M4.5 10L8 6.5L11.5 10M4.5 17L8 20.5L11.5 17" fill="none" stroke="#222" stroke-width="1.3"/><path d="M1 13.5H15" stroke="#c8c5c1" stroke-width="1"/></svg>
<div class="t" style="left:797.5px;top:295.0px;font-size:16px;color:#000;transform:scaleX(1.068);">50</div>
<div class="t" style="left:637.2px;top:330.0px;font-size:16px;color:#1a1a1a;transform:scaleX(1.070);">Format:</div>
<div style="position:absolute;left:705px;top:325px;width:148px;height:25px;box-sizing:border-box;border:1px solid #8a8681;border-radius:3px;background:#fff;box-shadow:inset 0 1px 0 #e4e2df;"></div>
<div style="position:absolute;left:827px;top:326px;width:25px;height:23px;box-sizing:border-box;border-left:1px solid #a8a49f;background:linear-gradient(#fbfbfa,#e3e2e0);border-radius:0 2px 2px 0;"></div>
<svg style="position:absolute;left:827px;top:325px" width="26" height="25"><path d="M8.5 10.5L12.5 14.5L16.5 10.5" fill="none" stroke="#111" stroke-width="1.8"/></svg>
<div class="t" style="left:709.2px;top:330.0px;font-size:16px;color:#000;transform:scaleX(1.124);">inline</div>
<div class="t" style="left:631.6px;top:363.0px;font-size:16px;color:#1a1a1a;transform:scaleX(1.086);">Options:</div>
<div style="position:absolute;left:705px;top:359px;width:248px;height:25px;box-sizing:border-box;border:1px solid #8a8681;border-radius:3px;background:#fff;box-shadow:inset 0 1px 0 #e4e2df;"></div>
<div style="position:absolute;left:927px;top:360px;width:25px;height:23px;box-sizing:border-box;border-left:1px solid #a8a49f;background:linear-gradient(#fbfbfa,#e3e2e0);border-radius:0 2px 2px 0;"></div>
<svg style="position:absolute;left:927px;top:359px" width="26" height="25"><path d="M8.5 10.5L12.5 14.5L16.5 10.5" fill="none" stroke="#111" stroke-width="1.8"/></svg>
<div style="position:absolute;left:961px;top:365px;width:12px;height:12px;box-sizing:border-box;border:1px solid #7d7974;background:#fff;"></div>
<svg style="position:absolute;left:961px;top:363px" width="14" height="14"><path d="M3 8L5.5 11L11 3" fill="none" stroke="#111" stroke-width="1.8"/></svg>
<div class="t" style="left:980.2px;top:363.0px;font-size:16px;color:#1a1a1a;transform:scaleX(1.099);"><u>p</u>m3d</div>
<div class="t" style="left:616.5px;top:400.0px;font-size:16px;color:#1a1a1a;transform:scaleX(1.078);">Plot to file:</div>
<div style="position:absolute;left:705px;top:396px;width:248px;height:25px;box-sizing:border-box;border:1px solid #8a8681;border-radius:3px;background:#fff;box-shadow:inset 0 1px 0 #e4e2df;"></div>
<div style="position:absolute;left:959px;top:393px;width:32px;height:31px;box-sizing:border-box;border:1px solid #a8a49f;border-radius:4px;background:linear-gradient(#fbfbfa,#e6e5e3);"></div>
<div style="position:absolute;left:610px;top:432px;width:417px;height:1px;background:#d2cfcb;"></div>
<div style="position:absolute;left:610px;top:433px;width:417px;height:1px;background:#f8f7f6;"></div>
<div style="position:absolute;left:841px;top:440px;width:85px;height:32px;box-sizing:border-box;border:1px solid #a5a19c;border-radius:4px;background:linear-gradient(#fdfdfd,#ebeae9 60%,#e1e0de);"></div>
<div style="position:absolute;left:938px;top:440px;width:85px;height:32px;box-sizing:border-box;border:1px solid #6d86a8;border-radius:4px;background:linear-gradient(#fdfdfd,#ebeae9 60%,#e1e0de);box-shadow:inset 0 0 0 1px #dde6f1;"></div>
<div class="t" style="left:870.4px;top:448.0px;font-size:16px;color:#111;"><u>C</u>ancel</div>
<div class="t" style="left:980.0px;top:448.0px;font-size:16px;color:#111;transform:scaleX(0.995);"><u>O</u>K</div>
<div style="position:absolute;left:83px;top:66px;width:1px;height:22px;background:#cdcac6;"></div>
<div style="position:absolute;left:84px;top:66px;width:1px;height:22px;background:#fbfbfa;"></div>
<div style="position:absolute;left:167px;top:66px;width:1px;height:22px;background:#cdcac6;"></div>
<div style="position:absolute;left:168px;top:66px;width:1px;height:22px;background:#fbfbfa;"></div>
<div style="position:absolute;left:251px;top:66px;width:1px;height:22px;background:#cdcac6;"></div>
<div style="position:absolute;left:252px;top:66px;width:1px;height:22px;background:#fbfbfa;"></div>
<div style="position:absolute;left:335px;top:66px;width:1px;height:22px;background:#cdcac6;"></div>
<div style="position:absolute;left:336px;top:66px;width:1px;height:22px;background:#fbfbfa;"></div>
<div style="position:absolute;left:383px;top:66px;width:1px;height:22px;background:#cdcac6;"></div>
<div style="position:absolute;left:384px;top:66px;width:1px;height:22px;background:#fbfbfa;"></div>
<svg style="position:absolute;left:11px;top:64px" width="26" height="24" viewBox="0 0 26 24"><path d="M2 4.5H8L9 6H12V19H3Z" fill="#8f8f8f" stroke="#555" stroke-width="1"/>
<path d="M7.5 2.5H20.5V10H6.5Z" fill="#fafafa" stroke="#8a8a8a" stroke-width="1"/>
<path d="M9 5H19M8.5 7.5H18.5" stroke="#9a9a9a" stroke-width="1"/>
<path d="M6.6 10H24L22 20.5H4.7Z" fill="#7aa3d8" stroke="#3465a4" stroke-width="1.2" stroke-linejoin="round"/>
<path d="M7.3 11.3H22.8" stroke="#b4cdee" stroke-width="1"/></svg>
<svg style="position:absolute;left:48px;top:64px" width="24" height="24" viewBox="0 0 24 24"><path d="M3.5 9.5H6M17 9.5H20.5L22.5 16V22.5H1.5V16Z" fill="#f4f4f3" stroke="#cfcfce" stroke-width="1.1"/>
<path d="M1.5 16H22.5" stroke="#d5d5d4"/><path d="M5 19.5H19" stroke="#d0d0cf" stroke-width="2"/>
<path d="M7 7C7 3 10 2 13 2.5C15.5 3 16 6 16 9H19L12.5 16L6 9H9.5C9.5 7 10 5.5 12.5 5.5" fill="#dcdcdb" stroke="#c8c8c7" stroke-width="1"/></svg>
<svg style="position:absolute;left:96px;top:64px" width="24" height="24" viewBox="0 0 24 24"><path d="M6.5 3.5H17.5V12H6.5Z" fill="#f6f6f5" stroke="#d2d2d1"/>
<path d="M12 5L9.5 8H11V10.5H13V8H14.5Z" fill="#d8d8d7"/>
<path d="M3 13.5Q3 11 5.5 11H18.5Q21 11 21 13.5V21H3Z" fill="#ececeb" stroke="#d0d0cf"/>
<path d="M5 14.5H19M5 19H19" stroke="#d6d6d5"/></svg>
<svg style="position:absolute;left:132px;top:66px" width="24" height="22" viewBox="0 0 24 22"><rect x="1.8" y="3.8" width="20.4" height="15.4" rx="1" fill="#fff" stroke="#6f6f6f" stroke-width="1.6"/>
<rect x="3.5" y="5.5" width="17" height="2.2" fill="#d9d9d9"/>
<rect x="4" y="9" width="6" height="4" fill="#fff" stroke="#4b4b4b" stroke-width="1"/>
<rect x="4.5" y="13.5" width="5" height="4" fill="#49575c"/>
<rect x="13.5" y="8.5" width="5" height="3.5" fill="#49575c"/>
<rect x="13" y="12.5" width="6" height="4.5" fill="#fff" stroke="#4b4b4b" stroke-width="1"/></svg>
<svg style="position:absolute;left:180px;top:64px" width="24" height="24" viewBox="0 0 24 24"><rect x="1.8" y="2.3" width="13.5" height="16.5" fill="#f7f7f6" stroke="#d4d4d3" stroke-width="1"/>
<path d="M4 6H13M4 8H13M4 10H13M4 12H13M4 14H10" stroke="#e2e2e1" stroke-width=".8"/>
<path d="M8.5 6.8H22.5V20L19.5 23.2H8.5Z" fill="#f5f5f4" stroke="#cfcfce" stroke-width="1"/>
<path d="M10.5 10H20.5M10.5 12H20.5M10.5 14H18.5M10.5 16H20.5" stroke="#d6d6d5" stroke-width=".9"/></svg>
<svg style="position:absolute;left:216px;top:64px" width="24" height="24" viewBox="0 0 24 24"><path d="M6.5 2.5L14 17M17.5 2.5L10 17" stroke="#d9d8d7" stroke-width="2.6" stroke-linecap="round"/>
<path d="M6.5 2.5L14 17M17.5 2.5L10 17" stroke="#f3f3f2" stroke-width="1.2" stroke-linecap="round"/>
<circle cx="7.5" cy="19" r="3.2" fill="none" stroke="#aaa5a3" stroke-width="1.8"/>
<circle cx="16.5" cy="19" r="3.2" fill="none" stroke="#aaa5a3" stroke-width="1.8"/></svg>
<svg style="position:absolute;left:264px;top:64px" width="24" height="24" viewBox="0 0 24 24"><path d="M4.5 2.5H16.5L20.5 6.5V21.5H4.5Z" fill="#eaece9" stroke="#8d8d8d" stroke-width="1.2" stroke-linejoin="round"/>
<path d="M5.5 3.5H16V7H19.5V20.5H5.5Z" fill="url(#ndg)"/>
<defs><linearGradient id="ndg" x1="0" y1="0" x2="0" y2="1"><stop offset="0" stop-color="#e4e6e3"/><stop offset="1" stop-color="#f8f8f8"/></linearGradient></defs>
<path d="M16.5 2.5V6.5H20.5" fill="#fff" stroke="#9a9a9a" stroke-width="1"/></svg>
<svg style="position:absolute;left:300px;top:64px" width="26" height="26" viewBox="0 0 26 26"><path d="M23.64 15.36L23.03 16.81L20.43 16.68L19.63 17.47L19.73 20.08L18.28 20.67L16.53 18.74L15.40 18.73L13.64 20.64L12.19 20.03L12.32 17.43L11.53 16.63L8.92 16.73L8.33 15.28L10.26 13.53L10.27 12.40L8.36 10.64L8.97 9.19L11.57 9.32L12.37 8.53L12.27 5.92L13.72 5.33L15.47 7.26L16.60 7.27L18.36 5.36L19.81 5.97L19.68 8.57L20.47 9.37L23.08 9.27L23.67 10.72L21.74 12.47L21.73 13.60Z" fill="#c8c9c6" stroke="#2e3436" stroke-width="1.1" stroke-linejoin="round"/><circle cx="16" cy="13" r="2.40" fill="#fff" stroke="#2e3436" stroke-width="1"/><path d="M13.09 7.92L12.56 9.06L10.85 9.04L10.11 9.56L9.56 11.18L8.32 11.30L7.48 9.80L6.66 9.42L4.98 9.76L4.25 8.74L5.13 7.27L5.05 6.37L3.91 5.08L4.44 3.94L6.15 3.96L6.89 3.44L7.44 1.82L8.68 1.70L9.52 3.20L10.34 3.58L12.02 3.24L12.75 4.26L11.87 5.73L11.95 6.63Z" fill="#f2f2f2" stroke="#2e3436" stroke-width="1.1" stroke-linejoin="round"/><circle cx="8.5" cy="6.5" r="1.44" fill="#fff" stroke="#2e3436" stroke-width="1"/><path d="M11.09 18.92L10.56 20.06L8.85 20.04L8.11 20.56L7.56 22.18L6.32 22.30L5.48 20.80L4.66 20.42L2.98 20.76L2.25 19.74L3.13 18.27L3.05 17.37L1.91 16.08L2.44 14.94L4.15 14.96L4.89 14.44L5.44 12.82L6.68 12.70L7.52 14.20L8.34 14.58L10.02 14.24L10.75 15.26L9.87 16.73L9.95 17.63Z" fill="#f2f2f2" stroke="#2e3436" stroke-width="1.1" stroke-linejoin="round"/><circle cx="6.5" cy="17.5" r="1.44" fill="#fff" stroke="#2e3436" stroke-width="1"/></svg>
<svg style="position:absolute;left:348px;top:64px" width="24" height="26" viewBox="0 0 24 26"><ellipse cx="12" cy="23" rx="8" ry="1.6" fill="#000" opacity=".15"/>
<path d="M8 3.5H16L21.5 9V17L16 22.5H8L2.5 17V9Z" fill="#d42a2a" stroke="#a40000" stroke-width="1"/>
<path d="M8.5 4.7H15.5L20.3 9.5V13.5C15 11.5 9 15 3.7 13.5V9.5Z" fill="#e36060" opacity=".55"/>
<path d="M8.5 9L15.5 16M15.5 9L8.5 16" stroke="#fff" stroke-width="2.2"/></svg>
<svg style="position:absolute;left:395px;top:64px" width="26" height="26" viewBox="0 0 26 26"><ellipse cx="13" cy="23.5" rx="8" ry="1.5" fill="#000" opacity=".15"/>
<defs><radialGradient id="hg" cx=".65" cy=".7" r=".8"><stop offset="0" stop-color="#a9c3e6"/><stop offset=".6" stop-color="#4f7fbd"/><stop offset="1" stop-color="#24508f"/></radialGradient></defs>
<circle cx="13" cy="13" r="10" fill="url(#hg)" stroke="#204a87" stroke-width="1"/>
<circle cx="13" cy="13" r="8.3" fill="none" stroke="#fff" stroke-width="1"/>
<path d="M9.6 9.8C9.6 7.5 11 6.6 13 6.6C15.2 6.6 16.5 7.8 16.5 9.6C16.5 11.8 14 12 14 14V14.8H12V13.7C12 11.2 14.3 11 14.3 9.8C14.3 9.1 13.8 8.6 13 8.6C12.2 8.6 11.7 9.1 11.7 9.8Z" fill="#fff"/>
<rect x="11.9" y="16" width="2.2" height="2.3" fill="#fff"/></svg>
<svg style="position:absolute;left:8px;top:5px" width="16" height="15" viewBox="0 0 16 15"><path d="M3.5 0.8L5.2 2.3" stroke="#2626a8" stroke-width="1.3" fill="none"/><path d="M5.5 3C3 3.2 1.5 4.8 2 6.5C2.4 7.8 4 8 4.5 8.5C3 9 2 10.5 2.5 12C3 13.5 4.5 13.8 5 14.8" stroke="#2626a8" stroke-width="1.5" fill="none"/><path d="M8 3.2H15V5.5M8 12.2H15.5V10" stroke="#2626a8" stroke-width="1.3" fill="none"/><path d="M6.5 12V3.5L9.5 10.5L12.5 3.5V12" stroke="#c82828" stroke-width="1.6" fill="none" stroke-linejoin="bevel"/></svg>
<svg style="position:absolute;left:959px;top:393px" width="32" height="31" viewBox="0 0 32 31"><g transform="translate(3,3)"><path d="M2 4.5H8L9 6H12V19H3Z" fill="#8f8f8f" stroke="#555" stroke-width="1"/>
<path d="M7.5 2.5H20.5V10H6.5Z" fill="#fafafa" stroke="#8a8a8a" stroke-width="1"/>
<path d="M9 5H19M8.5 7.5H18.5" stroke="#9a9a9a" stroke-width="1"/>
<path d="M6.6 10H24L22 20.5H4.7Z" fill="#7aa3d8" stroke="#3465a4" stroke-width="1.2" stroke-linejoin="round"/>
<path d="M7.3 11.3H22.8" stroke="#b4cdee" stroke-width="1"/></g></svg>
<svg style="position:absolute;left:845px;top:444px" width="24" height="24" viewBox="0 0 24 24"><path d="M8 2.5H16L21.5 8V16L16 21.5H8L2.5 16V8Z" fill="#d42a2a" stroke="#a40000" stroke-width="1"/>
<path d="M8.5 3.7H15.5L20.3 8.5V12.5C15 10.5 9 14 3.7 12.5V8.5Z" fill="#e36060" opacity=".55"/>
<path d="M8.5 8L15.5 15M15.5 8L8.5 15" stroke="#fff" stroke-width="2.2"/></svg>
<svg style="position:absolute;left:956px;top:444px" width="24" height="24" viewBox="0 0 24 24"><path d="M15.5 3.5H20.5V14.5H10V18.5L2.5 12L10 5.5V9.5H15.5Z" fill="#8fb3dd" stroke="#3d6eb0" stroke-width="1.1" stroke-linejoin="round"/>
<path d="M16.5 4.5H19.5V13.5H11" fill="none" stroke="#d4e3f4" stroke-width="1"/></svg></body></html>
